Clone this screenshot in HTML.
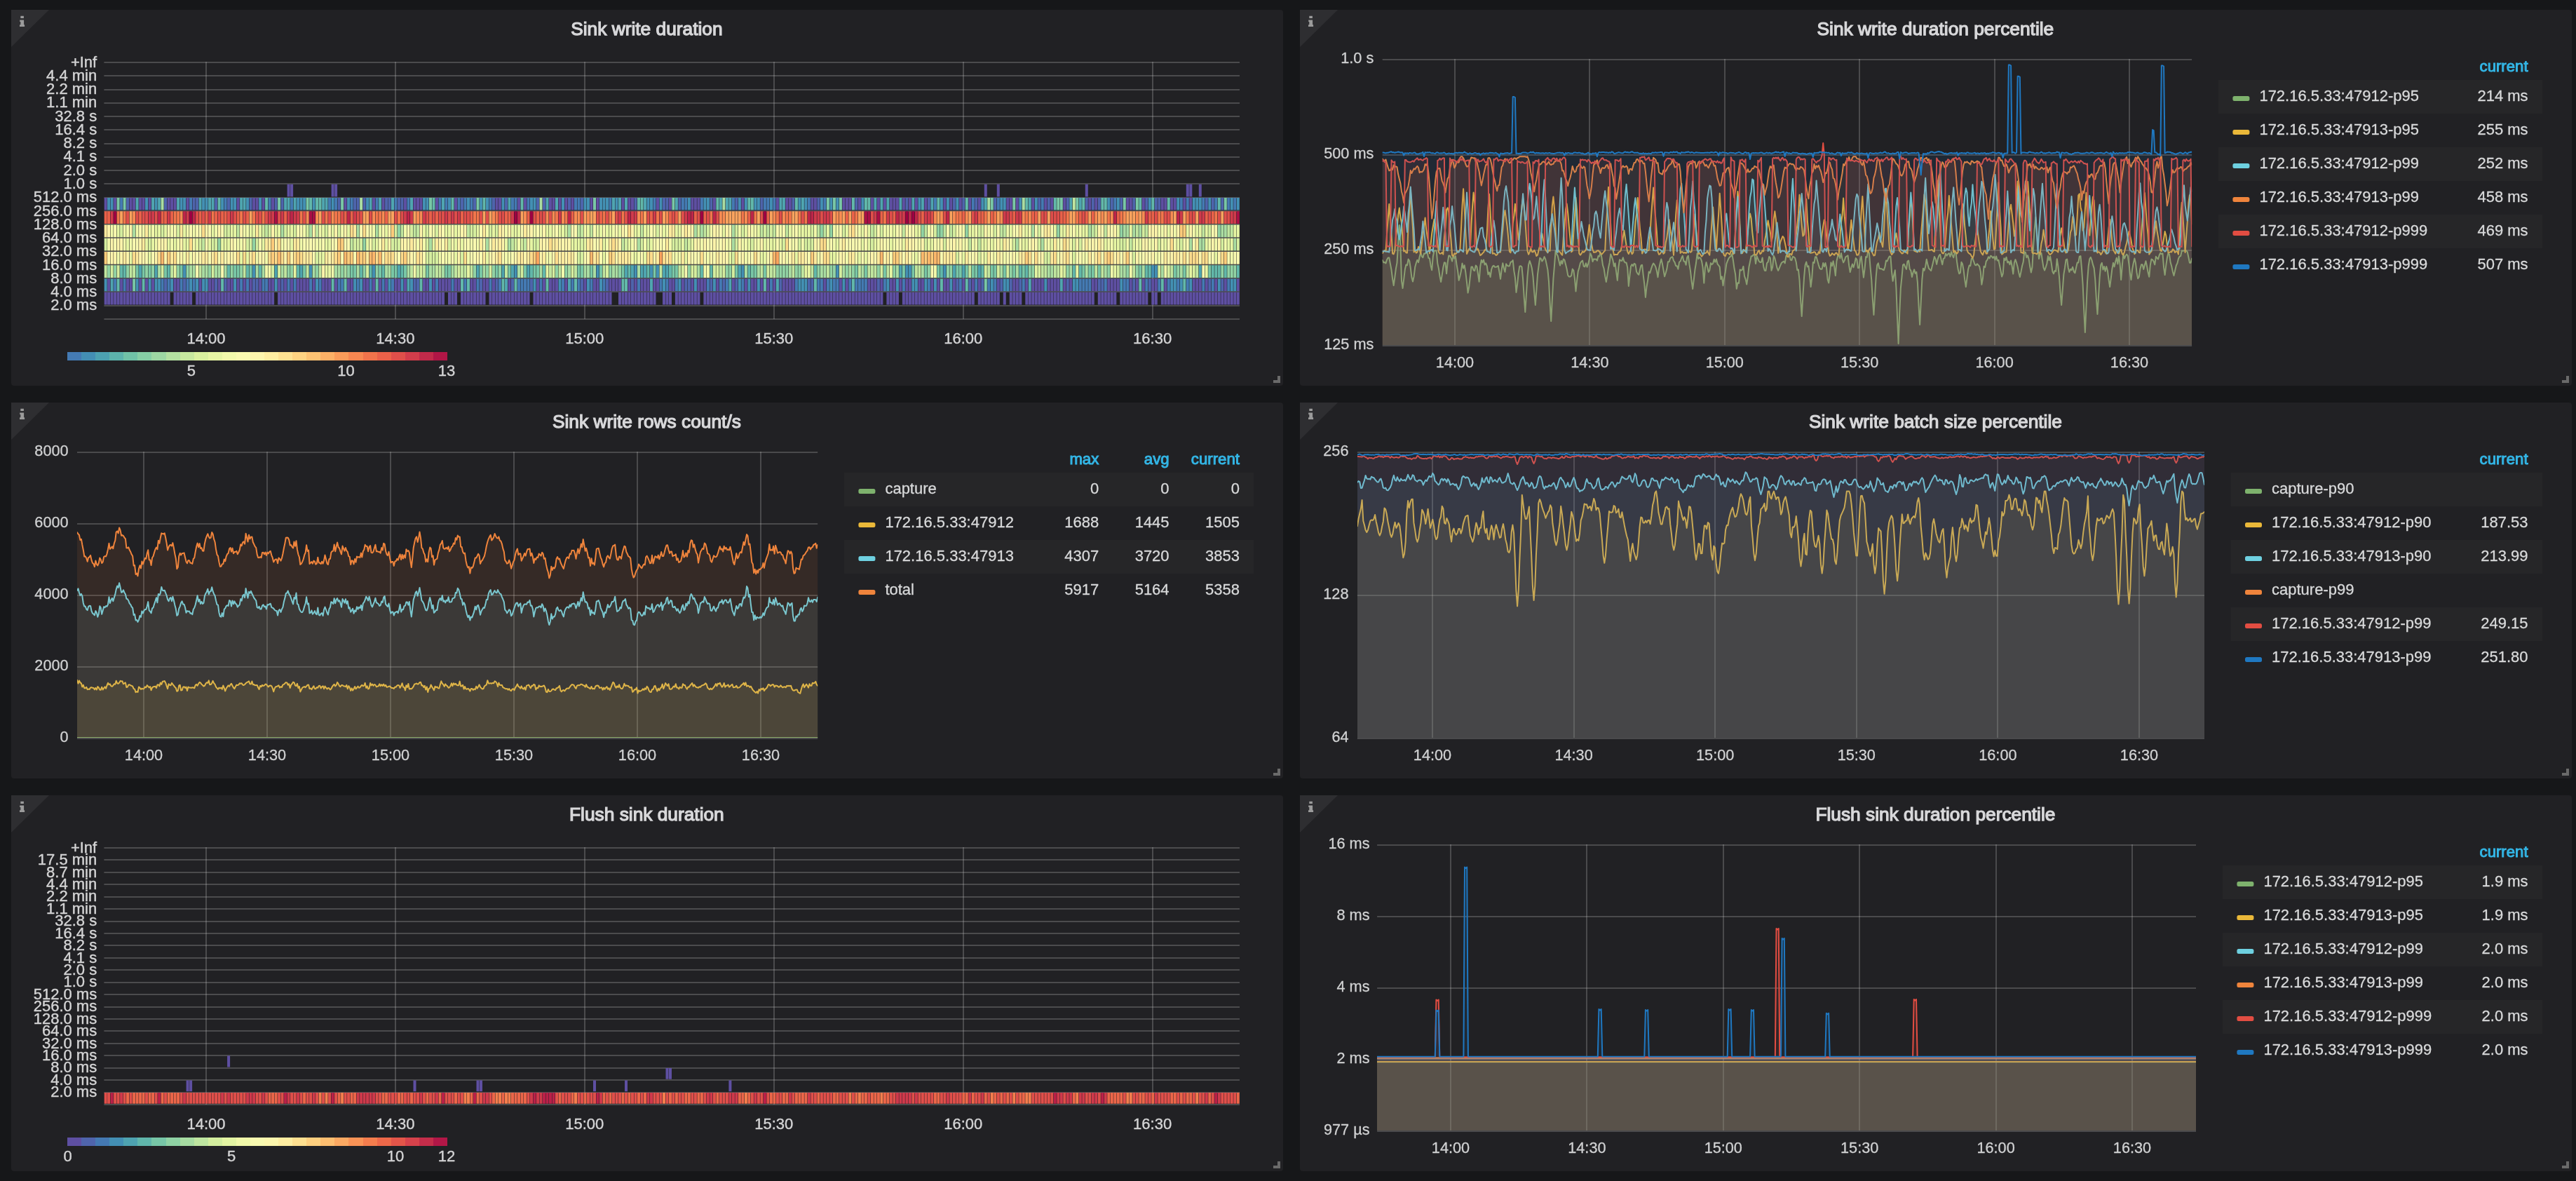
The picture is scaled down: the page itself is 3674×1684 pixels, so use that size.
<!DOCTYPE html>
<html lang="en"><head><meta charset="utf-8"><title>Sink dashboard</title>
<style>
html,body{margin:0;padding:0;background:#161719;}
body{width:3674px;height:1684px;overflow:hidden;position:relative}
svg{position:absolute;left:0;top:0;display:block;will-change:transform}
text{font-family:"Liberation Sans",Arial,Helvetica,sans-serif;font-size:21.7px;fill:#d0d1d2;stroke:#d0d1d2;stroke-width:.3px}
.tt{font-size:26.3px;fill:#d8d8da;stroke:#d8d8da;stroke-width:1.25px}
.hd{fill:#33b5e5;stroke:#33b5e5;stroke-width:1px;font-size:22.2px}
.lg{fill:#d8d9da;stroke:#d8d9da;font-size:22px}
.ha{fill:#d4d4d5;stroke:#d4d4d5;stroke-width:.4px;font-size:22px}
.s{stroke-width:2;stroke-linejoin:round;fill-opacity:.1}
</style></head><body>
<svg width="3674" height="1684" viewBox="0 0 3674 1684">
<g class="panel" transform="translate(16,14)">
<rect width="1814" height="536" rx="4" fill="#212124"/>
<path d="M0 0H54L0 53Z" fill="#2e2e31"/>
<path class="ic" d="M13.3 8.8h4.6v3.3h-4.6zM12.2 14.4h5.9v6.9h1v2.7h-7.1v-2.7h1.3v-4.3h-1.1z" fill="#9b9b9b"/>
<path d="M1810 522v10h-10v-4h6v-6z" fill="#6a6a6a"/>
<text class="tt" x="906.4" y="35.8" text-anchor="middle">Sink write duration</text>
</g>
<g class="panel" transform="translate(1854,14)">
<rect width="1814" height="536" rx="4" fill="#212124"/>
<path d="M0 0H54L0 53Z" fill="#2e2e31"/>
<path class="ic" d="M13.3 8.8h4.6v3.3h-4.6zM12.2 14.4h5.9v6.9h1v2.7h-7.1v-2.7h1.3v-4.3h-1.1z" fill="#9b9b9b"/>
<path d="M1810 522v10h-10v-4h6v-6z" fill="#6a6a6a"/>
<text class="tt" x="906.4" y="35.8" text-anchor="middle">Sink write duration percentile</text>
</g>
<g class="panel" transform="translate(16,574)">
<rect width="1814" height="536" rx="4" fill="#212124"/>
<path d="M0 0H54L0 53Z" fill="#2e2e31"/>
<path class="ic" d="M13.3 8.8h4.6v3.3h-4.6zM12.2 14.4h5.9v6.9h1v2.7h-7.1v-2.7h1.3v-4.3h-1.1z" fill="#9b9b9b"/>
<path d="M1810 522v10h-10v-4h6v-6z" fill="#6a6a6a"/>
<text class="tt" x="906.4" y="35.8" text-anchor="middle">Sink write rows count/s</text>
</g>
<g class="panel" transform="translate(1854,574)">
<rect width="1814" height="536" rx="4" fill="#212124"/>
<path d="M0 0H54L0 53Z" fill="#2e2e31"/>
<path class="ic" d="M13.3 8.8h4.6v3.3h-4.6zM12.2 14.4h5.9v6.9h1v2.7h-7.1v-2.7h1.3v-4.3h-1.1z" fill="#9b9b9b"/>
<path d="M1810 522v10h-10v-4h6v-6z" fill="#6a6a6a"/>
<text class="tt" x="906.4" y="35.8" text-anchor="middle">Sink write batch size percentile</text>
</g>
<g class="panel" transform="translate(16,1134)">
<rect width="1814" height="536" rx="4" fill="#212124"/>
<path d="M0 0H54L0 53Z" fill="#2e2e31"/>
<path class="ic" d="M13.3 8.8h4.6v3.3h-4.6zM12.2 14.4h5.9v6.9h1v2.7h-7.1v-2.7h1.3v-4.3h-1.1z" fill="#9b9b9b"/>
<path d="M1810 522v10h-10v-4h6v-6z" fill="#6a6a6a"/>
<text class="tt" x="906.4" y="35.8" text-anchor="middle">Flush sink duration</text>
</g>
<g class="panel" transform="translate(1854,1134)">
<rect width="1814" height="536" rx="4" fill="#212124"/>
<path d="M0 0H54L0 53Z" fill="#2e2e31"/>
<path class="ic" d="M13.3 8.8h4.6v3.3h-4.6zM12.2 14.4h5.9v6.9h1v2.7h-7.1v-2.7h1.3v-4.3h-1.1z" fill="#9b9b9b"/>
<path d="M1810 522v10h-10v-4h6v-6z" fill="#6a6a6a"/>
<text class="tt" x="906.4" y="35.8" text-anchor="middle">Flush sink duration percentile</text>
</g>
<g class="heat" id="heat1">
<path d="M148.4 88h1619.6v2h-1619.6zM148.4 107h1619.6v2h-1619.6zM148.4 127h1619.6v2h-1619.6zM148.4 146h1619.6v2h-1619.6zM148.4 165h1619.6v2h-1619.6zM148.4 184h1619.6v2h-1619.6zM148.4 204h1619.6v2h-1619.6zM148.4 223h1619.6v2h-1619.6zM148.4 242h1619.6v2h-1619.6zM148.4 261h1619.6v2h-1619.6zM148.4 281h1619.6v2h-1619.6zM148.4 300h1619.6v2h-1619.6zM148.4 319h1619.6v2h-1619.6zM148.4 338h1619.6v2h-1619.6zM148.4 358h1619.6v2h-1619.6zM148.4 377h1619.6v2h-1619.6zM148.4 396h1619.6v2h-1619.6zM148.4 415h1619.6v2h-1619.6zM148.4 435h1619.6v2h-1619.6zM148.4 454h1619.6v2h-1619.6z" fill="rgba(200,200,200,0.255)"/>
<path d="M293 88h2v367h-2zM563 88h2v367h-2zM833 88h2v367h-2zM1103 88h2v367h-2zM1373 88h2v367h-2zM1643 88h2v367h-2z" fill="rgba(200,200,200,0.255)"/>
<path fill="#5e4fa2" d="M148.7 281.9h4v17.7h-4zM162.1 281.9h4v17.7h-4zM184.6 281.9h4v17.7h-4zM189.1 281.9h4v17.7h-4zM198.1 281.9h4v17.7h-4zM202.6 281.9h4v17.7h-4zM211.6 281.9h4v17.7h-4zM238.6 281.9h4v17.7h-4zM243.1 281.9h4v17.7h-4zM247.6 281.9h4v17.7h-4zM265.6 281.9h4v17.7h-4zM337.6 281.9h4v17.7h-4zM360.1 281.9h4v17.7h-4zM364.6 281.9h4v17.7h-4zM373.6 281.9h4v17.7h-4zM387.1 281.9h4v17.7h-4zM490.6 281.9h4v17.7h-4zM531.1 281.9h4v17.7h-4zM544.6 281.9h4v17.7h-4zM576 281.9h4v17.7h-4zM589.5 281.9h4v17.7h-4zM594 281.9h4v17.7h-4zM598.5 281.9h4v17.7h-4zM621 281.9h4v17.7h-4zM648 281.9h4v17.7h-4zM706.5 281.9h4v17.7h-4zM711 281.9h4v17.7h-4zM738 281.9h4v17.7h-4zM747 281.9h4v17.7h-4zM783 281.9h4v17.7h-4zM787.5 281.9h4v17.7h-4zM796.5 281.9h4v17.7h-4zM805.5 281.9h4v17.7h-4zM814.5 281.9h4v17.7h-4zM841.5 281.9h4v17.7h-4zM850.5 281.9h4v17.7h-4zM886.5 281.9h4v17.7h-4zM895.5 281.9h4v17.7h-4zM900 281.9h4v17.7h-4zM936 281.9h4v17.7h-4zM954 281.9h4v17.7h-4zM985.4 281.9h4v17.7h-4zM989.9 281.9h4v17.7h-4zM994.4 281.9h4v17.7h-4zM1016.9 281.9h4v17.7h-4zM1057.4 281.9h4v17.7h-4zM1106.9 281.9h4v17.7h-4zM1120.4 281.9h4v17.7h-4zM1124.9 281.9h4v17.7h-4zM1156.4 281.9h4v17.7h-4zM1160.9 281.9h4v17.7h-4zM1201.4 281.9h4v17.7h-4zM1205.9 281.9h4v17.7h-4zM1210.4 281.9h4v17.7h-4zM1223.9 281.9h4v17.7h-4zM1241.9 281.9h4v17.7h-4zM1250.9 281.9h4v17.7h-4zM1259.9 281.9h4v17.7h-4zM1268.9 281.9h4v17.7h-4zM1273.4 281.9h4v17.7h-4zM1277.9 281.9h4v17.7h-4zM1286.9 281.9h4v17.7h-4zM1295.9 281.9h4v17.7h-4zM1304.9 281.9h4v17.7h-4zM1318.4 281.9h4v17.7h-4zM1345.4 281.9h4v17.7h-4zM1354.4 281.9h4v17.7h-4zM1367.8 281.9h4v17.7h-4zM1381.3 281.9h4v17.7h-4zM1394.8 281.9h4v17.7h-4zM1435.3 281.9h4v17.7h-4zM1439.8 281.9h4v17.7h-4zM1448.8 281.9h4v17.7h-4zM1471.3 281.9h4v17.7h-4zM1489.3 281.9h4v17.7h-4zM1498.3 281.9h4v17.7h-4zM1516.3 281.9h4v17.7h-4zM1552.3 281.9h4v17.7h-4zM1561.3 281.9h4v17.7h-4zM1606.3 281.9h4v17.7h-4zM1610.8 281.9h4v17.7h-4zM1628.8 281.9h4v17.7h-4zM1655.8 281.9h4v17.7h-4zM1660.3 281.9h4v17.7h-4zM1669.3 281.9h4v17.7h-4zM1673.8 281.9h4v17.7h-4zM1687.3 281.9h4v17.7h-4zM1696.3 281.9h4v17.7h-4zM153.1 397.5h4v17.7h-4zM171.1 397.5h4v17.7h-4zM180.1 397.5h4v17.7h-4zM184.6 397.5h4v17.7h-4zM198.1 397.5h4v17.7h-4zM207.1 397.5h4v17.7h-4zM216.1 397.5h4v17.7h-4zM247.6 397.5h4v17.7h-4zM252.1 397.5h4v17.7h-4zM283.6 397.5h4v17.7h-4zM297.1 397.5h4v17.7h-4zM301.6 397.5h4v17.7h-4zM310.6 397.5h4v17.7h-4zM324.1 397.5h4v17.7h-4zM328.6 397.5h4v17.7h-4zM337.6 397.5h4v17.7h-4zM346.6 397.5h4v17.7h-4zM355.6 397.5h4v17.7h-4zM369.1 397.5h4v17.7h-4zM382.6 397.5h4v17.7h-4zM387.1 397.5h4v17.7h-4zM396.1 397.5h4v17.7h-4zM405.1 397.5h4v17.7h-4zM414.1 397.5h4v17.7h-4zM423.1 397.5h4v17.7h-4zM427.6 397.5h4v17.7h-4zM432.1 397.5h4v17.7h-4zM436.6 397.5h4v17.7h-4zM445.6 397.5h4v17.7h-4zM459.1 397.5h4v17.7h-4zM463.6 397.5h4v17.7h-4zM468.1 397.5h4v17.7h-4zM477.1 397.5h4v17.7h-4zM495.1 397.5h4v17.7h-4zM499.6 397.5h4v17.7h-4zM517.6 397.5h4v17.7h-4zM522.1 397.5h4v17.7h-4zM531.1 397.5h4v17.7h-4zM540.1 397.5h4v17.7h-4zM549.1 397.5h4v17.7h-4zM562.5 397.5h4v17.7h-4zM567 397.5h4v17.7h-4zM576 397.5h4v17.7h-4zM603 397.5h4v17.7h-4zM607.5 397.5h4v17.7h-4zM616.5 397.5h4v17.7h-4zM625.5 397.5h4v17.7h-4zM630 397.5h4v17.7h-4zM634.5 397.5h4v17.7h-4zM639 397.5h4v17.7h-4zM648 397.5h4v17.7h-4zM652.5 397.5h4v17.7h-4zM670.5 397.5h4v17.7h-4zM675 397.5h4v17.7h-4zM688.5 397.5h4v17.7h-4zM693 397.5h4v17.7h-4zM702 397.5h4v17.7h-4zM724.5 397.5h4v17.7h-4zM765 397.5h4v17.7h-4zM774 397.5h4v17.7h-4zM783 397.5h4v17.7h-4zM787.5 397.5h4v17.7h-4zM792 397.5h4v17.7h-4zM805.5 397.5h4v17.7h-4zM832.5 397.5h4v17.7h-4zM846 397.5h4v17.7h-4zM850.5 397.5h4v17.7h-4zM868.5 397.5h4v17.7h-4zM873 397.5h4v17.7h-4zM877.5 397.5h4v17.7h-4zM882 397.5h4v17.7h-4zM895.5 397.5h4v17.7h-4zM904.5 397.5h4v17.7h-4zM913.5 397.5h4v17.7h-4zM918 397.5h4v17.7h-4zM922.5 397.5h4v17.7h-4zM931.5 397.5h4v17.7h-4zM936 397.5h4v17.7h-4zM954 397.5h4v17.7h-4zM958.4 397.5h4v17.7h-4zM971.9 397.5h4v17.7h-4zM985.4 397.5h4v17.7h-4zM994.4 397.5h4v17.7h-4zM998.9 397.5h4v17.7h-4zM1003.4 397.5h4v17.7h-4zM1021.4 397.5h4v17.7h-4zM1043.9 397.5h4v17.7h-4zM1061.9 397.5h4v17.7h-4zM1070.9 397.5h4v17.7h-4zM1075.4 397.5h4v17.7h-4zM1084.4 397.5h4v17.7h-4zM1093.4 397.5h4v17.7h-4zM1102.4 397.5h4v17.7h-4zM1115.9 397.5h4v17.7h-4zM1120.4 397.5h4v17.7h-4zM1124.9 397.5h4v17.7h-4zM1129.4 397.5h4v17.7h-4zM1174.4 397.5h4v17.7h-4zM1196.9 397.5h4v17.7h-4zM1205.9 397.5h4v17.7h-4zM1237.4 397.5h4v17.7h-4zM1241.9 397.5h4v17.7h-4zM1246.4 397.5h4v17.7h-4zM1255.4 397.5h4v17.7h-4zM1268.9 397.5h4v17.7h-4zM1273.4 397.5h4v17.7h-4zM1282.4 397.5h4v17.7h-4zM1291.4 397.5h4v17.7h-4zM1295.9 397.5h4v17.7h-4zM1309.4 397.5h4v17.7h-4zM1313.9 397.5h4v17.7h-4zM1327.4 397.5h4v17.7h-4zM1336.4 397.5h4v17.7h-4zM1345.4 397.5h4v17.7h-4zM1349.9 397.5h4v17.7h-4zM1358.9 397.5h4v17.7h-4zM1372.3 397.5h4v17.7h-4zM1385.8 397.5h4v17.7h-4zM1394.8 397.5h4v17.7h-4zM1421.8 397.5h4v17.7h-4zM1444.3 397.5h4v17.7h-4zM1448.8 397.5h4v17.7h-4zM1462.3 397.5h4v17.7h-4zM1471.3 397.5h4v17.7h-4zM1475.8 397.5h4v17.7h-4zM1480.3 397.5h4v17.7h-4zM1484.8 397.5h4v17.7h-4zM1493.8 397.5h4v17.7h-4zM1498.3 397.5h4v17.7h-4zM1502.8 397.5h4v17.7h-4zM1507.3 397.5h4v17.7h-4zM1516.3 397.5h4v17.7h-4zM1525.3 397.5h4v17.7h-4zM1556.8 397.5h4v17.7h-4zM1561.3 397.5h4v17.7h-4zM1579.3 397.5h4v17.7h-4zM1583.8 397.5h4v17.7h-4zM1588.3 397.5h4v17.7h-4zM1592.8 397.5h4v17.7h-4zM1610.8 397.5h4v17.7h-4zM1619.8 397.5h4v17.7h-4zM1628.8 397.5h4v17.7h-4zM1642.3 397.5h4v17.7h-4zM1646.8 397.5h4v17.7h-4zM1660.3 397.5h4v17.7h-4zM1700.8 397.5h4v17.7h-4zM1705.3 397.5h4v17.7h-4zM1709.8 397.5h4v17.7h-4zM1718.8 397.5h4v17.7h-4zM1732.3 397.5h4v17.7h-4zM1745.8 397.5h4v17.7h-4zM1763.8 397.5h4v17.7h-4zM148.7 416.8h4v17.7h-4zM153.1 416.8h4v17.7h-4zM157.6 416.8h4v17.7h-4zM162.1 416.8h4v17.7h-4zM166.6 416.8h4v17.7h-4zM171.1 416.8h4v17.7h-4zM175.6 416.8h4v17.7h-4zM180.1 416.8h4v17.7h-4zM184.6 416.8h4v17.7h-4zM189.1 416.8h4v17.7h-4zM193.6 416.8h4v17.7h-4zM198.1 416.8h4v17.7h-4zM202.6 416.8h4v17.7h-4zM207.1 416.8h4v17.7h-4zM211.6 416.8h4v17.7h-4zM216.1 416.8h4v17.7h-4zM220.6 416.8h4v17.7h-4zM225.1 416.8h4v17.7h-4zM229.6 416.8h4v17.7h-4zM234.1 416.8h4v17.7h-4zM238.6 416.8h4v17.7h-4zM247.6 416.8h4v17.7h-4zM252.1 416.8h4v17.7h-4zM256.6 416.8h4v17.7h-4zM261.1 416.8h4v17.7h-4zM265.6 416.8h4v17.7h-4zM270.1 416.8h4v17.7h-4zM279.1 416.8h4v17.7h-4zM283.6 416.8h4v17.7h-4zM288.1 416.8h4v17.7h-4zM292.6 416.8h4v17.7h-4zM297.1 416.8h4v17.7h-4zM301.6 416.8h4v17.7h-4zM306.1 416.8h4v17.7h-4zM310.6 416.8h4v17.7h-4zM315.1 416.8h4v17.7h-4zM319.6 416.8h4v17.7h-4zM324.1 416.8h4v17.7h-4zM328.6 416.8h4v17.7h-4zM333.1 416.8h4v17.7h-4zM337.6 416.8h4v17.7h-4zM342.1 416.8h4v17.7h-4zM346.6 416.8h4v17.7h-4zM351.1 416.8h4v17.7h-4zM355.6 416.8h4v17.7h-4zM360.1 416.8h4v17.7h-4zM364.6 416.8h4v17.7h-4zM369.1 416.8h4v17.7h-4zM373.6 416.8h4v17.7h-4zM378.1 416.8h4v17.7h-4zM382.6 416.8h4v17.7h-4zM387.1 416.8h4v17.7h-4zM396.1 416.8h4v17.7h-4zM400.6 416.8h4v17.7h-4zM405.1 416.8h4v17.7h-4zM409.6 416.8h4v17.7h-4zM414.1 416.8h4v17.7h-4zM418.6 416.8h4v17.7h-4zM423.1 416.8h4v17.7h-4zM427.6 416.8h4v17.7h-4zM432.1 416.8h4v17.7h-4zM436.6 416.8h4v17.7h-4zM441.1 416.8h4v17.7h-4zM445.6 416.8h4v17.7h-4zM450.1 416.8h4v17.7h-4zM454.6 416.8h4v17.7h-4zM459.1 416.8h4v17.7h-4zM463.6 416.8h4v17.7h-4zM468.1 416.8h4v17.7h-4zM472.6 416.8h4v17.7h-4zM477.1 416.8h4v17.7h-4zM481.6 416.8h4v17.7h-4zM486.1 416.8h4v17.7h-4zM490.6 416.8h4v17.7h-4zM495.1 416.8h4v17.7h-4zM499.6 416.8h4v17.7h-4zM504.1 416.8h4v17.7h-4zM508.6 416.8h4v17.7h-4zM513.1 416.8h4v17.7h-4zM517.6 416.8h4v17.7h-4zM522.1 416.8h4v17.7h-4zM526.6 416.8h4v17.7h-4zM531.1 416.8h4v17.7h-4zM535.6 416.8h4v17.7h-4zM540.1 416.8h4v17.7h-4zM544.6 416.8h4v17.7h-4zM549.1 416.8h4v17.7h-4zM553.5 416.8h4v17.7h-4zM558 416.8h4v17.7h-4zM562.5 416.8h4v17.7h-4zM567 416.8h4v17.7h-4zM571.5 416.8h4v17.7h-4zM576 416.8h4v17.7h-4zM580.5 416.8h4v17.7h-4zM585 416.8h4v17.7h-4zM589.5 416.8h4v17.7h-4zM594 416.8h4v17.7h-4zM598.5 416.8h4v17.7h-4zM603 416.8h4v17.7h-4zM607.5 416.8h4v17.7h-4zM612 416.8h4v17.7h-4zM616.5 416.8h4v17.7h-4zM621 416.8h4v17.7h-4zM625.5 416.8h4v17.7h-4zM630 416.8h4v17.7h-4zM639 416.8h4v17.7h-4zM643.5 416.8h4v17.7h-4zM648 416.8h4v17.7h-4zM657 416.8h4v17.7h-4zM661.5 416.8h4v17.7h-4zM666 416.8h4v17.7h-4zM670.5 416.8h4v17.7h-4zM675 416.8h4v17.7h-4zM679.5 416.8h4v17.7h-4zM684 416.8h4v17.7h-4zM688.5 416.8h4v17.7h-4zM697.5 416.8h4v17.7h-4zM702 416.8h4v17.7h-4zM706.5 416.8h4v17.7h-4zM711 416.8h4v17.7h-4zM715.5 416.8h4v17.7h-4zM720 416.8h4v17.7h-4zM724.5 416.8h4v17.7h-4zM729 416.8h4v17.7h-4zM733.5 416.8h4v17.7h-4zM738 416.8h4v17.7h-4zM742.5 416.8h4v17.7h-4zM747 416.8h4v17.7h-4zM751.5 416.8h4v17.7h-4zM760.5 416.8h4v17.7h-4zM765 416.8h4v17.7h-4zM769.5 416.8h4v17.7h-4zM774 416.8h4v17.7h-4zM778.5 416.8h4v17.7h-4zM783 416.8h4v17.7h-4zM787.5 416.8h4v17.7h-4zM792 416.8h4v17.7h-4zM796.5 416.8h4v17.7h-4zM801 416.8h4v17.7h-4zM805.5 416.8h4v17.7h-4zM810 416.8h4v17.7h-4zM814.5 416.8h4v17.7h-4zM819 416.8h4v17.7h-4zM823.5 416.8h4v17.7h-4zM828 416.8h4v17.7h-4zM832.5 416.8h4v17.7h-4zM837 416.8h4v17.7h-4zM841.5 416.8h4v17.7h-4zM846 416.8h4v17.7h-4zM850.5 416.8h4v17.7h-4zM855 416.8h4v17.7h-4zM859.5 416.8h4v17.7h-4zM864 416.8h4v17.7h-4zM868.5 416.8h4v17.7h-4zM882 416.8h4v17.7h-4zM886.5 416.8h4v17.7h-4zM891 416.8h4v17.7h-4zM895.5 416.8h4v17.7h-4zM900 416.8h4v17.7h-4zM904.5 416.8h4v17.7h-4zM909 416.8h4v17.7h-4zM913.5 416.8h4v17.7h-4zM918 416.8h4v17.7h-4zM922.5 416.8h4v17.7h-4zM927 416.8h4v17.7h-4zM931.5 416.8h4v17.7h-4zM945 416.8h4v17.7h-4zM949.5 416.8h4v17.7h-4zM954 416.8h4v17.7h-4zM962.9 416.8h4v17.7h-4zM967.4 416.8h4v17.7h-4zM971.9 416.8h4v17.7h-4zM976.4 416.8h4v17.7h-4zM980.9 416.8h4v17.7h-4zM985.4 416.8h4v17.7h-4zM989.9 416.8h4v17.7h-4zM994.4 416.8h4v17.7h-4zM1003.4 416.8h4v17.7h-4zM1007.9 416.8h4v17.7h-4zM1012.4 416.8h4v17.7h-4zM1016.9 416.8h4v17.7h-4zM1021.4 416.8h4v17.7h-4zM1025.9 416.8h4v17.7h-4zM1030.4 416.8h4v17.7h-4zM1034.9 416.8h4v17.7h-4zM1039.4 416.8h4v17.7h-4zM1043.9 416.8h4v17.7h-4zM1048.4 416.8h4v17.7h-4zM1052.9 416.8h4v17.7h-4zM1057.4 416.8h4v17.7h-4zM1061.9 416.8h4v17.7h-4zM1066.4 416.8h4v17.7h-4zM1070.9 416.8h4v17.7h-4zM1075.4 416.8h4v17.7h-4zM1079.9 416.8h4v17.7h-4zM1084.4 416.8h4v17.7h-4zM1088.9 416.8h4v17.7h-4zM1093.4 416.8h4v17.7h-4zM1097.9 416.8h4v17.7h-4zM1102.4 416.8h4v17.7h-4zM1106.9 416.8h4v17.7h-4zM1111.4 416.8h4v17.7h-4zM1115.9 416.8h4v17.7h-4zM1120.4 416.8h4v17.7h-4zM1124.9 416.8h4v17.7h-4zM1129.4 416.8h4v17.7h-4zM1133.9 416.8h4v17.7h-4zM1138.4 416.8h4v17.7h-4zM1142.9 416.8h4v17.7h-4zM1147.4 416.8h4v17.7h-4zM1151.9 416.8h4v17.7h-4zM1156.4 416.8h4v17.7h-4zM1160.9 416.8h4v17.7h-4zM1165.4 416.8h4v17.7h-4zM1169.9 416.8h4v17.7h-4zM1174.4 416.8h4v17.7h-4zM1178.9 416.8h4v17.7h-4zM1183.4 416.8h4v17.7h-4zM1187.9 416.8h4v17.7h-4zM1192.4 416.8h4v17.7h-4zM1196.9 416.8h4v17.7h-4zM1201.4 416.8h4v17.7h-4zM1205.9 416.8h4v17.7h-4zM1210.4 416.8h4v17.7h-4zM1214.9 416.8h4v17.7h-4zM1219.4 416.8h4v17.7h-4zM1223.9 416.8h4v17.7h-4zM1228.4 416.8h4v17.7h-4zM1232.9 416.8h4v17.7h-4zM1237.4 416.8h4v17.7h-4zM1241.9 416.8h4v17.7h-4zM1246.4 416.8h4v17.7h-4zM1250.9 416.8h4v17.7h-4zM1255.4 416.8h4v17.7h-4zM1264.4 416.8h4v17.7h-4zM1268.9 416.8h4v17.7h-4zM1273.4 416.8h4v17.7h-4zM1277.9 416.8h4v17.7h-4zM1286.9 416.8h4v17.7h-4zM1291.4 416.8h4v17.7h-4zM1295.9 416.8h4v17.7h-4zM1300.4 416.8h4v17.7h-4zM1304.9 416.8h4v17.7h-4zM1309.4 416.8h4v17.7h-4zM1313.9 416.8h4v17.7h-4zM1318.4 416.8h4v17.7h-4zM1322.9 416.8h4v17.7h-4zM1327.4 416.8h4v17.7h-4zM1331.9 416.8h4v17.7h-4zM1336.4 416.8h4v17.7h-4zM1340.9 416.8h4v17.7h-4zM1345.4 416.8h4v17.7h-4zM1349.9 416.8h4v17.7h-4zM1354.4 416.8h4v17.7h-4zM1358.9 416.8h4v17.7h-4zM1363.4 416.8h4v17.7h-4zM1367.8 416.8h4v17.7h-4zM1372.3 416.8h4v17.7h-4zM1376.8 416.8h4v17.7h-4zM1381.3 416.8h4v17.7h-4zM1385.8 416.8h4v17.7h-4zM1394.8 416.8h4v17.7h-4zM1399.3 416.8h4v17.7h-4zM1403.8 416.8h4v17.7h-4zM1408.3 416.8h4v17.7h-4zM1412.8 416.8h4v17.7h-4zM1417.3 416.8h4v17.7h-4zM1421.8 416.8h4v17.7h-4zM1430.8 416.8h4v17.7h-4zM1439.8 416.8h4v17.7h-4zM1444.3 416.8h4v17.7h-4zM1448.8 416.8h4v17.7h-4zM1453.3 416.8h4v17.7h-4zM1462.3 416.8h4v17.7h-4zM1466.8 416.8h4v17.7h-4zM1471.3 416.8h4v17.7h-4zM1475.8 416.8h4v17.7h-4zM1480.3 416.8h4v17.7h-4zM1484.8 416.8h4v17.7h-4zM1489.3 416.8h4v17.7h-4zM1493.8 416.8h4v17.7h-4zM1498.3 416.8h4v17.7h-4zM1502.8 416.8h4v17.7h-4zM1507.3 416.8h4v17.7h-4zM1511.8 416.8h4v17.7h-4zM1516.3 416.8h4v17.7h-4zM1520.8 416.8h4v17.7h-4zM1525.3 416.8h4v17.7h-4zM1529.8 416.8h4v17.7h-4zM1534.3 416.8h4v17.7h-4zM1538.8 416.8h4v17.7h-4zM1543.3 416.8h4v17.7h-4zM1547.8 416.8h4v17.7h-4zM1552.3 416.8h4v17.7h-4zM1556.8 416.8h4v17.7h-4zM1565.8 416.8h4v17.7h-4zM1570.3 416.8h4v17.7h-4zM1574.8 416.8h4v17.7h-4zM1579.3 416.8h4v17.7h-4zM1583.8 416.8h4v17.7h-4zM1588.3 416.8h4v17.7h-4zM1597.3 416.8h4v17.7h-4zM1601.8 416.8h4v17.7h-4zM1606.3 416.8h4v17.7h-4zM1610.8 416.8h4v17.7h-4zM1615.3 416.8h4v17.7h-4zM1619.8 416.8h4v17.7h-4zM1624.3 416.8h4v17.7h-4zM1628.8 416.8h4v17.7h-4zM1633.3 416.8h4v17.7h-4zM1642.3 416.8h4v17.7h-4zM1646.8 416.8h4v17.7h-4zM1655.8 416.8h4v17.7h-4zM1660.3 416.8h4v17.7h-4zM1664.8 416.8h4v17.7h-4zM1669.3 416.8h4v17.7h-4zM1673.8 416.8h4v17.7h-4zM1678.3 416.8h4v17.7h-4zM1682.8 416.8h4v17.7h-4zM1687.3 416.8h4v17.7h-4zM1691.8 416.8h4v17.7h-4zM1696.3 416.8h4v17.7h-4zM1700.8 416.8h4v17.7h-4zM1705.3 416.8h4v17.7h-4zM1709.8 416.8h4v17.7h-4zM1714.3 416.8h4v17.7h-4zM1718.8 416.8h4v17.7h-4zM1723.3 416.8h4v17.7h-4zM1727.8 416.8h4v17.7h-4zM1732.3 416.8h4v17.7h-4zM1736.8 416.8h4v17.7h-4zM1741.3 416.8h4v17.7h-4zM1745.8 416.8h4v17.7h-4zM1750.3 416.8h4v17.7h-4zM1754.8 416.8h4v17.7h-4zM1759.3 416.8h4v17.7h-4zM1763.8 416.8h4v17.7h-4zM409.6 262.7h4v17.7h-4zM414.1 262.7h4v17.7h-4zM472.6 262.7h4v17.7h-4zM477.1 262.7h4v17.7h-4zM1403.8 262.7h4v17.7h-4zM1421.8 262.7h4v17.7h-4zM1547.8 262.7h4v17.7h-4zM1691.8 262.7h4v17.7h-4zM1696.3 262.7h4v17.7h-4zM1709.8 262.7h4v17.7h-4z"/>
<path fill="#4390b4" d="M153.1 281.9h4v17.7h-4zM157.6 281.9h4v17.7h-4zM207.1 281.9h4v17.7h-4zM220.6 281.9h4v17.7h-4zM256.6 281.9h4v17.7h-4zM261.1 281.9h4v17.7h-4zM288.1 281.9h4v17.7h-4zM292.6 281.9h4v17.7h-4zM315.1 281.9h4v17.7h-4zM328.6 281.9h4v17.7h-4zM333.1 281.9h4v17.7h-4zM351.1 281.9h4v17.7h-4zM369.1 281.9h4v17.7h-4zM423.1 281.9h4v17.7h-4zM427.6 281.9h4v17.7h-4zM432.1 281.9h4v17.7h-4zM445.6 281.9h4v17.7h-4zM472.6 281.9h4v17.7h-4zM495.1 281.9h4v17.7h-4zM522.1 281.9h4v17.7h-4zM603 281.9h4v17.7h-4zM607.5 281.9h4v17.7h-4zM639 281.9h4v17.7h-4zM666 281.9h4v17.7h-4zM684 281.9h4v17.7h-4zM693 281.9h4v17.7h-4zM715.5 281.9h4v17.7h-4zM756 281.9h4v17.7h-4zM760.5 281.9h4v17.7h-4zM801 281.9h4v17.7h-4zM832.5 281.9h4v17.7h-4zM837 281.9h4v17.7h-4zM855 281.9h4v17.7h-4zM859.5 281.9h4v17.7h-4zM864 281.9h4v17.7h-4zM877.5 281.9h4v17.7h-4zM922.5 281.9h4v17.7h-4zM927 281.9h4v17.7h-4zM940.5 281.9h4v17.7h-4zM980.9 281.9h4v17.7h-4zM1003.4 281.9h4v17.7h-4zM1007.9 281.9h4v17.7h-4zM1052.9 281.9h4v17.7h-4zM1061.9 281.9h4v17.7h-4zM1075.4 281.9h4v17.7h-4zM1079.9 281.9h4v17.7h-4zM1097.9 281.9h4v17.7h-4zM1138.4 281.9h4v17.7h-4zM1147.4 281.9h4v17.7h-4zM1169.9 281.9h4v17.7h-4zM1183.4 281.9h4v17.7h-4zM1192.4 281.9h4v17.7h-4zM1228.4 281.9h4v17.7h-4zM1309.4 281.9h4v17.7h-4zM1340.9 281.9h4v17.7h-4zM1349.9 281.9h4v17.7h-4zM1363.4 281.9h4v17.7h-4zM1399.3 281.9h4v17.7h-4zM1426.3 281.9h4v17.7h-4zM1430.8 281.9h4v17.7h-4zM1453.3 281.9h4v17.7h-4zM1475.8 281.9h4v17.7h-4zM1579.3 281.9h4v17.7h-4zM1592.8 281.9h4v17.7h-4zM1637.8 281.9h4v17.7h-4zM1678.3 281.9h4v17.7h-4zM1700.8 281.9h4v17.7h-4zM1705.3 281.9h4v17.7h-4zM1709.8 281.9h4v17.7h-4zM1723.3 281.9h4v17.7h-4zM1754.8 281.9h4v17.7h-4zM1763.8 281.9h4v17.7h-4zM261.1 378.2h4v17.7h-4zM360.1 378.2h4v17.7h-4zM441.1 378.2h4v17.7h-4zM531.1 378.2h4v17.7h-4zM733.5 378.2h4v17.7h-4zM850.5 378.2h4v17.7h-4zM904.5 378.2h4v17.7h-4zM927 378.2h4v17.7h-4zM936 378.2h4v17.7h-4zM1057.4 378.2h4v17.7h-4zM1192.4 378.2h4v17.7h-4zM1291.4 378.2h4v17.7h-4zM1295.9 378.2h4v17.7h-4zM1345.4 378.2h4v17.7h-4zM1642.3 378.2h4v17.7h-4zM1646.8 378.2h4v17.7h-4zM148.7 397.5h4v17.7h-4zM193.6 397.5h4v17.7h-4zM211.6 397.5h4v17.7h-4zM220.6 397.5h4v17.7h-4zM225.1 397.5h4v17.7h-4zM243.1 397.5h4v17.7h-4zM270.1 397.5h4v17.7h-4zM279.1 397.5h4v17.7h-4zM288.1 397.5h4v17.7h-4zM292.6 397.5h4v17.7h-4zM333.1 397.5h4v17.7h-4zM391.6 397.5h4v17.7h-4zM450.1 397.5h4v17.7h-4zM504.1 397.5h4v17.7h-4zM513.1 397.5h4v17.7h-4zM553.5 397.5h4v17.7h-4zM571.5 397.5h4v17.7h-4zM585 397.5h4v17.7h-4zM612 397.5h4v17.7h-4zM760.5 397.5h4v17.7h-4zM796.5 397.5h4v17.7h-4zM837 397.5h4v17.7h-4zM855 397.5h4v17.7h-4zM945 397.5h4v17.7h-4zM967.4 397.5h4v17.7h-4zM989.9 397.5h4v17.7h-4zM1016.9 397.5h4v17.7h-4zM1052.9 397.5h4v17.7h-4zM1066.4 397.5h4v17.7h-4zM1079.9 397.5h4v17.7h-4zM1138.4 397.5h4v17.7h-4zM1142.9 397.5h4v17.7h-4zM1147.4 397.5h4v17.7h-4zM1183.4 397.5h4v17.7h-4zM1201.4 397.5h4v17.7h-4zM1264.4 397.5h4v17.7h-4zM1277.9 397.5h4v17.7h-4zM1300.4 397.5h4v17.7h-4zM1304.9 397.5h4v17.7h-4zM1318.4 397.5h4v17.7h-4zM1331.9 397.5h4v17.7h-4zM1354.4 397.5h4v17.7h-4zM1412.8 397.5h4v17.7h-4zM1430.8 397.5h4v17.7h-4zM1435.3 397.5h4v17.7h-4zM1489.3 397.5h4v17.7h-4zM1529.8 397.5h4v17.7h-4zM1534.3 397.5h4v17.7h-4zM1597.3 397.5h4v17.7h-4zM1669.3 397.5h4v17.7h-4zM1673.8 397.5h4v17.7h-4zM1682.8 397.5h4v17.7h-4zM1696.3 397.5h4v17.7h-4zM1736.8 397.5h4v17.7h-4zM1754.8 397.5h4v17.7h-4zM1759.3 397.5h4v17.7h-4z"/>
<path fill="#79c7a6" d="M166.6 281.9h4v17.7h-4zM175.6 281.9h4v17.7h-4zM396.1 281.9h4v17.7h-4zM436.6 281.9h4v17.7h-4zM486.1 281.9h4v17.7h-4zM612 281.9h4v17.7h-4zM679.5 281.9h4v17.7h-4zM846 281.9h4v17.7h-4zM958.4 281.9h4v17.7h-4zM1178.9 281.9h4v17.7h-4zM1187.9 281.9h4v17.7h-4zM1196.9 281.9h4v17.7h-4zM1412.8 281.9h4v17.7h-4zM1444.3 281.9h4v17.7h-4zM1507.3 281.9h4v17.7h-4zM1511.8 281.9h4v17.7h-4zM1534.3 281.9h4v17.7h-4zM1601.8 281.9h4v17.7h-4zM1619.8 281.9h4v17.7h-4zM1745.8 281.9h4v17.7h-4zM193.6 378.2h4v17.7h-4zM202.6 378.2h4v17.7h-4zM211.6 378.2h4v17.7h-4zM234.1 378.2h4v17.7h-4zM256.6 378.2h4v17.7h-4zM333.1 378.2h4v17.7h-4zM337.6 378.2h4v17.7h-4zM355.6 378.2h4v17.7h-4zM432.1 378.2h4v17.7h-4zM499.6 378.2h4v17.7h-4zM504.1 378.2h4v17.7h-4zM540.1 378.2h4v17.7h-4zM558 378.2h4v17.7h-4zM562.5 378.2h4v17.7h-4zM576 378.2h4v17.7h-4zM607.5 378.2h4v17.7h-4zM634.5 378.2h4v17.7h-4zM639 378.2h4v17.7h-4zM684 378.2h4v17.7h-4zM706.5 378.2h4v17.7h-4zM724.5 378.2h4v17.7h-4zM747 378.2h4v17.7h-4zM760.5 378.2h4v17.7h-4zM765 378.2h4v17.7h-4zM823.5 378.2h4v17.7h-4zM828 378.2h4v17.7h-4zM841.5 378.2h4v17.7h-4zM855 378.2h4v17.7h-4zM886.5 378.2h4v17.7h-4zM931.5 378.2h4v17.7h-4zM958.4 378.2h4v17.7h-4zM962.9 378.2h4v17.7h-4zM1048.4 378.2h4v17.7h-4zM1070.9 378.2h4v17.7h-4zM1075.4 378.2h4v17.7h-4zM1088.9 378.2h4v17.7h-4zM1219.4 378.2h4v17.7h-4zM1232.9 378.2h4v17.7h-4zM1259.9 378.2h4v17.7h-4zM1286.9 378.2h4v17.7h-4zM1300.4 378.2h4v17.7h-4zM1318.4 378.2h4v17.7h-4zM1336.4 378.2h4v17.7h-4zM1363.4 378.2h4v17.7h-4zM1367.8 378.2h4v17.7h-4zM1376.8 378.2h4v17.7h-4zM1385.8 378.2h4v17.7h-4zM1390.3 378.2h4v17.7h-4zM1412.8 378.2h4v17.7h-4zM1417.3 378.2h4v17.7h-4zM1430.8 378.2h4v17.7h-4zM1444.3 378.2h4v17.7h-4zM1457.8 378.2h4v17.7h-4zM1543.3 378.2h4v17.7h-4zM1552.3 378.2h4v17.7h-4zM1556.8 378.2h4v17.7h-4zM1565.8 378.2h4v17.7h-4zM1624.3 378.2h4v17.7h-4zM1673.8 378.2h4v17.7h-4zM1687.3 378.2h4v17.7h-4zM1723.3 378.2h4v17.7h-4zM189.1 397.5h4v17.7h-4zM1403.8 397.5h4v17.7h-4z"/>
<path fill="#447ab3" d="M171.1 281.9h4v17.7h-4zM270.1 281.9h4v17.7h-4zM319.6 281.9h4v17.7h-4zM382.6 281.9h4v17.7h-4zM414.1 281.9h4v17.7h-4zM468.1 281.9h4v17.7h-4zM477.1 281.9h4v17.7h-4zM499.6 281.9h4v17.7h-4zM535.6 281.9h4v17.7h-4zM562.5 281.9h4v17.7h-4zM580.5 281.9h4v17.7h-4zM625.5 281.9h4v17.7h-4zM634.5 281.9h4v17.7h-4zM652.5 281.9h4v17.7h-4zM661.5 281.9h4v17.7h-4zM670.5 281.9h4v17.7h-4zM697.5 281.9h4v17.7h-4zM729 281.9h4v17.7h-4zM733.5 281.9h4v17.7h-4zM751.5 281.9h4v17.7h-4zM819 281.9h4v17.7h-4zM823.5 281.9h4v17.7h-4zM868.5 281.9h4v17.7h-4zM931.5 281.9h4v17.7h-4zM971.9 281.9h4v17.7h-4zM976.4 281.9h4v17.7h-4zM998.9 281.9h4v17.7h-4zM1043.9 281.9h4v17.7h-4zM1088.9 281.9h4v17.7h-4zM1093.4 281.9h4v17.7h-4zM1102.4 281.9h4v17.7h-4zM1151.9 281.9h4v17.7h-4zM1174.4 281.9h4v17.7h-4zM1331.9 281.9h4v17.7h-4zM1385.8 281.9h4v17.7h-4zM1421.8 281.9h4v17.7h-4zM1484.8 281.9h4v17.7h-4zM1588.3 281.9h4v17.7h-4zM1682.8 281.9h4v17.7h-4zM1691.8 281.9h4v17.7h-4zM1714.3 281.9h4v17.7h-4zM1732.3 281.9h4v17.7h-4zM1750.3 281.9h4v17.7h-4zM1759.3 281.9h4v17.7h-4zM162.1 397.5h4v17.7h-4zM175.6 397.5h4v17.7h-4zM229.6 397.5h4v17.7h-4zM238.6 397.5h4v17.7h-4zM256.6 397.5h4v17.7h-4zM265.6 397.5h4v17.7h-4zM274.6 397.5h4v17.7h-4zM342.1 397.5h4v17.7h-4zM351.1 397.5h4v17.7h-4zM373.6 397.5h4v17.7h-4zM378.1 397.5h4v17.7h-4zM409.6 397.5h4v17.7h-4zM418.6 397.5h4v17.7h-4zM441.1 397.5h4v17.7h-4zM454.6 397.5h4v17.7h-4zM481.6 397.5h4v17.7h-4zM486.1 397.5h4v17.7h-4zM508.6 397.5h4v17.7h-4zM526.6 397.5h4v17.7h-4zM544.6 397.5h4v17.7h-4zM558 397.5h4v17.7h-4zM621 397.5h4v17.7h-4zM643.5 397.5h4v17.7h-4zM661.5 397.5h4v17.7h-4zM679.5 397.5h4v17.7h-4zM697.5 397.5h4v17.7h-4zM711 397.5h4v17.7h-4zM738 397.5h4v17.7h-4zM742.5 397.5h4v17.7h-4zM747 397.5h4v17.7h-4zM751.5 397.5h4v17.7h-4zM769.5 397.5h4v17.7h-4zM801 397.5h4v17.7h-4zM814.5 397.5h4v17.7h-4zM823.5 397.5h4v17.7h-4zM841.5 397.5h4v17.7h-4zM859.5 397.5h4v17.7h-4zM909 397.5h4v17.7h-4zM940.5 397.5h4v17.7h-4zM949.5 397.5h4v17.7h-4zM962.9 397.5h4v17.7h-4zM1007.9 397.5h4v17.7h-4zM1025.9 397.5h4v17.7h-4zM1034.9 397.5h4v17.7h-4zM1057.4 397.5h4v17.7h-4zM1097.9 397.5h4v17.7h-4zM1133.9 397.5h4v17.7h-4zM1165.4 397.5h4v17.7h-4zM1169.9 397.5h4v17.7h-4zM1178.9 397.5h4v17.7h-4zM1187.9 397.5h4v17.7h-4zM1192.4 397.5h4v17.7h-4zM1210.4 397.5h4v17.7h-4zM1219.4 397.5h4v17.7h-4zM1223.9 397.5h4v17.7h-4zM1228.4 397.5h4v17.7h-4zM1232.9 397.5h4v17.7h-4zM1259.9 397.5h4v17.7h-4zM1286.9 397.5h4v17.7h-4zM1322.9 397.5h4v17.7h-4zM1367.8 397.5h4v17.7h-4zM1390.3 397.5h4v17.7h-4zM1408.3 397.5h4v17.7h-4zM1417.3 397.5h4v17.7h-4zM1457.8 397.5h4v17.7h-4zM1538.8 397.5h4v17.7h-4zM1543.3 397.5h4v17.7h-4zM1547.8 397.5h4v17.7h-4zM1552.3 397.5h4v17.7h-4zM1574.8 397.5h4v17.7h-4zM1601.8 397.5h4v17.7h-4zM1606.3 397.5h4v17.7h-4zM1633.3 397.5h4v17.7h-4zM1651.3 397.5h4v17.7h-4zM1664.8 397.5h4v17.7h-4zM1678.3 397.5h4v17.7h-4zM1691.8 397.5h4v17.7h-4zM1714.3 397.5h4v17.7h-4zM1727.8 397.5h4v17.7h-4zM1750.3 397.5h4v17.7h-4z"/>
<path fill="#4e64ac" d="M180.1 281.9h4v17.7h-4zM234.1 281.9h4v17.7h-4zM274.6 281.9h4v17.7h-4zM279.1 281.9h4v17.7h-4zM306.1 281.9h4v17.7h-4zM324.1 281.9h4v17.7h-4zM355.6 281.9h4v17.7h-4zM391.6 281.9h4v17.7h-4zM400.6 281.9h4v17.7h-4zM481.6 281.9h4v17.7h-4zM504.1 281.9h4v17.7h-4zM508.6 281.9h4v17.7h-4zM517.6 281.9h4v17.7h-4zM549.1 281.9h4v17.7h-4zM553.5 281.9h4v17.7h-4zM567 281.9h4v17.7h-4zM571.5 281.9h4v17.7h-4zM657 281.9h4v17.7h-4zM675 281.9h4v17.7h-4zM702 281.9h4v17.7h-4zM720 281.9h4v17.7h-4zM765 281.9h4v17.7h-4zM774 281.9h4v17.7h-4zM810 281.9h4v17.7h-4zM828 281.9h4v17.7h-4zM904.5 281.9h4v17.7h-4zM945 281.9h4v17.7h-4zM949.5 281.9h4v17.7h-4zM967.4 281.9h4v17.7h-4zM1012.4 281.9h4v17.7h-4zM1048.4 281.9h4v17.7h-4zM1084.4 281.9h4v17.7h-4zM1129.4 281.9h4v17.7h-4zM1165.4 281.9h4v17.7h-4zM1219.4 281.9h4v17.7h-4zM1291.4 281.9h4v17.7h-4zM1322.9 281.9h4v17.7h-4zM1358.9 281.9h4v17.7h-4zM1372.3 281.9h4v17.7h-4zM1390.3 281.9h4v17.7h-4zM1417.3 281.9h4v17.7h-4zM1480.3 281.9h4v17.7h-4zM1493.8 281.9h4v17.7h-4zM1520.8 281.9h4v17.7h-4zM1547.8 281.9h4v17.7h-4zM1556.8 281.9h4v17.7h-4zM1565.8 281.9h4v17.7h-4zM1583.8 281.9h4v17.7h-4zM1597.3 281.9h4v17.7h-4zM1615.3 281.9h4v17.7h-4zM1633.3 281.9h4v17.7h-4zM1646.8 281.9h4v17.7h-4zM1651.3 281.9h4v17.7h-4zM1718.8 281.9h4v17.7h-4zM1727.8 281.9h4v17.7h-4zM1741.3 281.9h4v17.7h-4zM234.1 397.5h4v17.7h-4zM261.1 397.5h4v17.7h-4zM306.1 397.5h4v17.7h-4zM319.6 397.5h4v17.7h-4zM360.1 397.5h4v17.7h-4zM364.6 397.5h4v17.7h-4zM400.6 397.5h4v17.7h-4zM589.5 397.5h4v17.7h-4zM594 397.5h4v17.7h-4zM684 397.5h4v17.7h-4zM706.5 397.5h4v17.7h-4zM729 397.5h4v17.7h-4zM756 397.5h4v17.7h-4zM828 397.5h4v17.7h-4zM864 397.5h4v17.7h-4zM900 397.5h4v17.7h-4zM976.4 397.5h4v17.7h-4zM980.9 397.5h4v17.7h-4zM1012.4 397.5h4v17.7h-4zM1030.4 397.5h4v17.7h-4zM1048.4 397.5h4v17.7h-4zM1111.4 397.5h4v17.7h-4zM1151.9 397.5h4v17.7h-4zM1156.4 397.5h4v17.7h-4zM1250.9 397.5h4v17.7h-4zM1363.4 397.5h4v17.7h-4zM1381.3 397.5h4v17.7h-4zM1399.3 397.5h4v17.7h-4zM1426.3 397.5h4v17.7h-4zM1439.8 397.5h4v17.7h-4zM1453.3 397.5h4v17.7h-4zM1520.8 397.5h4v17.7h-4zM1565.8 397.5h4v17.7h-4zM1570.3 397.5h4v17.7h-4zM1615.3 397.5h4v17.7h-4zM1637.8 397.5h4v17.7h-4zM1723.3 397.5h4v17.7h-4zM1741.3 397.5h4v17.7h-4z"/>
<path fill="#4fa5b0" d="M193.6 281.9h4v17.7h-4zM216.1 281.9h4v17.7h-4zM225.1 281.9h4v17.7h-4zM252.1 281.9h4v17.7h-4zM283.6 281.9h4v17.7h-4zM297.1 281.9h4v17.7h-4zM301.6 281.9h4v17.7h-4zM342.1 281.9h4v17.7h-4zM346.6 281.9h4v17.7h-4zM405.1 281.9h4v17.7h-4zM409.6 281.9h4v17.7h-4zM418.6 281.9h4v17.7h-4zM459.1 281.9h4v17.7h-4zM463.6 281.9h4v17.7h-4zM526.6 281.9h4v17.7h-4zM540.1 281.9h4v17.7h-4zM558 281.9h4v17.7h-4zM585 281.9h4v17.7h-4zM630 281.9h4v17.7h-4zM724.5 281.9h4v17.7h-4zM778.5 281.9h4v17.7h-4zM792 281.9h4v17.7h-4zM873 281.9h4v17.7h-4zM882 281.9h4v17.7h-4zM891 281.9h4v17.7h-4zM918 281.9h4v17.7h-4zM962.9 281.9h4v17.7h-4zM1025.9 281.9h4v17.7h-4zM1034.9 281.9h4v17.7h-4zM1039.4 281.9h4v17.7h-4zM1111.4 281.9h4v17.7h-4zM1115.9 281.9h4v17.7h-4zM1142.9 281.9h4v17.7h-4zM1246.4 281.9h4v17.7h-4zM1255.4 281.9h4v17.7h-4zM1264.4 281.9h4v17.7h-4zM1282.4 281.9h4v17.7h-4zM1300.4 281.9h4v17.7h-4zM1313.9 281.9h4v17.7h-4zM1327.4 281.9h4v17.7h-4zM1403.8 281.9h4v17.7h-4zM1466.8 281.9h4v17.7h-4zM1525.3 281.9h4v17.7h-4zM1538.8 281.9h4v17.7h-4zM198.1 378.2h4v17.7h-4zM220.6 378.2h4v17.7h-4zM391.6 378.2h4v17.7h-4zM427.6 378.2h4v17.7h-4zM567 378.2h4v17.7h-4zM679.5 378.2h4v17.7h-4zM715.5 378.2h4v17.7h-4zM729 378.2h4v17.7h-4zM751.5 378.2h4v17.7h-4zM891 378.2h4v17.7h-4zM900 378.2h4v17.7h-4zM913.5 378.2h4v17.7h-4zM918 378.2h4v17.7h-4zM945 378.2h4v17.7h-4zM949.5 378.2h4v17.7h-4zM1052.9 378.2h4v17.7h-4zM1282.4 378.2h4v17.7h-4zM1358.9 378.2h4v17.7h-4zM1372.3 378.2h4v17.7h-4zM1394.8 378.2h4v17.7h-4zM1709.8 378.2h4v17.7h-4zM157.6 397.5h4v17.7h-4zM580.5 397.5h4v17.7h-4zM720 397.5h4v17.7h-4zM810 397.5h4v17.7h-4zM927 397.5h4v17.7h-4zM1039.4 397.5h4v17.7h-4zM1106.9 397.5h4v17.7h-4zM1466.8 397.5h4v17.7h-4zM1511.8 397.5h4v17.7h-4z"/>
<path fill="#aadda2" d="M229.6 281.9h4v17.7h-4zM513.1 281.9h4v17.7h-4zM769.5 281.9h4v17.7h-4zM1030.4 281.9h4v17.7h-4zM1408.3 281.9h4v17.7h-4zM1457.8 281.9h4v17.7h-4zM189.1 320.5h4v17.7h-4zM400.6 320.5h4v17.7h-4zM441.1 320.5h4v17.7h-4zM508.6 320.5h4v17.7h-4zM535.6 320.5h4v17.7h-4zM810 320.5h4v17.7h-4zM989.9 320.5h4v17.7h-4zM998.9 320.5h4v17.7h-4zM1043.9 320.5h4v17.7h-4zM1471.3 320.5h4v17.7h-4zM1552.3 320.5h4v17.7h-4zM1601.8 320.5h4v17.7h-4zM1606.3 320.5h4v17.7h-4zM1615.3 320.5h4v17.7h-4zM1624.3 320.5h4v17.7h-4zM1741.3 320.5h4v17.7h-4zM1745.8 320.5h4v17.7h-4zM612 339.7h4v17.7h-4zM693 339.7h4v17.7h-4zM724.5 339.7h4v17.7h-4zM909 339.7h4v17.7h-4zM1043.9 339.7h4v17.7h-4zM1448.8 339.7h4v17.7h-4zM1484.8 339.7h4v17.7h-4zM1696.3 339.7h4v17.7h-4zM1709.8 339.7h4v17.7h-4zM1714.3 339.7h4v17.7h-4zM1759.3 339.7h4v17.7h-4zM225.1 378.2h4v17.7h-4zM270.1 378.2h4v17.7h-4zM274.6 378.2h4v17.7h-4zM288.1 378.2h4v17.7h-4zM292.6 378.2h4v17.7h-4zM306.1 378.2h4v17.7h-4zM310.6 378.2h4v17.7h-4zM319.6 378.2h4v17.7h-4zM364.6 378.2h4v17.7h-4zM373.6 378.2h4v17.7h-4zM400.6 378.2h4v17.7h-4zM445.6 378.2h4v17.7h-4zM477.1 378.2h4v17.7h-4zM481.6 378.2h4v17.7h-4zM490.6 378.2h4v17.7h-4zM508.6 378.2h4v17.7h-4zM549.1 378.2h4v17.7h-4zM553.5 378.2h4v17.7h-4zM580.5 378.2h4v17.7h-4zM612 378.2h4v17.7h-4zM616.5 378.2h4v17.7h-4zM630 378.2h4v17.7h-4zM643.5 378.2h4v17.7h-4zM688.5 378.2h4v17.7h-4zM738 378.2h4v17.7h-4zM769.5 378.2h4v17.7h-4zM810 378.2h4v17.7h-4zM832.5 378.2h4v17.7h-4zM837 378.2h4v17.7h-4zM846 378.2h4v17.7h-4zM873 378.2h4v17.7h-4zM877.5 378.2h4v17.7h-4zM909 378.2h4v17.7h-4zM994.4 378.2h4v17.7h-4zM1061.9 378.2h4v17.7h-4zM1079.9 378.2h4v17.7h-4zM1124.9 378.2h4v17.7h-4zM1169.9 378.2h4v17.7h-4zM1174.4 378.2h4v17.7h-4zM1201.4 378.2h4v17.7h-4zM1210.4 378.2h4v17.7h-4zM1228.4 378.2h4v17.7h-4zM1277.9 378.2h4v17.7h-4zM1313.9 378.2h4v17.7h-4zM1426.3 378.2h4v17.7h-4zM1448.8 378.2h4v17.7h-4zM1493.8 378.2h4v17.7h-4zM1498.3 378.2h4v17.7h-4zM1525.3 378.2h4v17.7h-4zM1547.8 378.2h4v17.7h-4zM1574.8 378.2h4v17.7h-4zM1597.3 378.2h4v17.7h-4zM1601.8 378.2h4v17.7h-4zM1628.8 378.2h4v17.7h-4zM1655.8 378.2h4v17.7h-4zM1682.8 378.2h4v17.7h-4z"/>
<path fill="#62b8aa" d="M310.6 281.9h4v17.7h-4zM378.1 281.9h4v17.7h-4zM441.1 281.9h4v17.7h-4zM450.1 281.9h4v17.7h-4zM454.6 281.9h4v17.7h-4zM616.5 281.9h4v17.7h-4zM643.5 281.9h4v17.7h-4zM688.5 281.9h4v17.7h-4zM742.5 281.9h4v17.7h-4zM909 281.9h4v17.7h-4zM913.5 281.9h4v17.7h-4zM1021.4 281.9h4v17.7h-4zM1066.4 281.9h4v17.7h-4zM1070.9 281.9h4v17.7h-4zM1133.9 281.9h4v17.7h-4zM1214.9 281.9h4v17.7h-4zM1232.9 281.9h4v17.7h-4zM1237.4 281.9h4v17.7h-4zM1336.4 281.9h4v17.7h-4zM1376.8 281.9h4v17.7h-4zM1462.3 281.9h4v17.7h-4zM1502.8 281.9h4v17.7h-4zM1543.3 281.9h4v17.7h-4zM1570.3 281.9h4v17.7h-4zM1574.8 281.9h4v17.7h-4zM1624.3 281.9h4v17.7h-4zM1642.3 281.9h4v17.7h-4zM1664.8 281.9h4v17.7h-4zM1736.8 281.9h4v17.7h-4zM171.1 378.2h4v17.7h-4zM175.6 378.2h4v17.7h-4zM238.6 378.2h4v17.7h-4zM324.1 378.2h4v17.7h-4zM351.1 378.2h4v17.7h-4zM369.1 378.2h4v17.7h-4zM423.1 378.2h4v17.7h-4zM513.1 378.2h4v17.7h-4zM526.6 378.2h4v17.7h-4zM544.6 378.2h4v17.7h-4zM571.5 378.2h4v17.7h-4zM756 378.2h4v17.7h-4zM774 378.2h4v17.7h-4zM895.5 378.2h4v17.7h-4zM922.5 378.2h4v17.7h-4zM954 378.2h4v17.7h-4zM998.9 378.2h4v17.7h-4zM1012.4 378.2h4v17.7h-4zM1066.4 378.2h4v17.7h-4zM1160.9 378.2h4v17.7h-4zM1340.9 378.2h4v17.7h-4zM1399.3 378.2h4v17.7h-4zM1453.3 378.2h4v17.7h-4zM1462.3 378.2h4v17.7h-4zM1529.8 378.2h4v17.7h-4zM1538.8 378.2h4v17.7h-4zM1633.3 378.2h4v17.7h-4zM1637.8 378.2h4v17.7h-4zM1727.8 378.2h4v17.7h-4zM1732.3 378.2h4v17.7h-4zM1736.8 378.2h4v17.7h-4zM1745.8 378.2h4v17.7h-4zM1763.8 378.2h4v17.7h-4zM166.6 397.5h4v17.7h-4zM202.6 397.5h4v17.7h-4zM315.1 397.5h4v17.7h-4zM472.6 397.5h4v17.7h-4zM490.6 397.5h4v17.7h-4zM535.6 397.5h4v17.7h-4zM598.5 397.5h4v17.7h-4zM657 397.5h4v17.7h-4zM666 397.5h4v17.7h-4zM715.5 397.5h4v17.7h-4zM733.5 397.5h4v17.7h-4zM778.5 397.5h4v17.7h-4zM819 397.5h4v17.7h-4zM886.5 397.5h4v17.7h-4zM891 397.5h4v17.7h-4zM1088.9 397.5h4v17.7h-4zM1160.9 397.5h4v17.7h-4zM1214.9 397.5h4v17.7h-4zM1340.9 397.5h4v17.7h-4zM1376.8 397.5h4v17.7h-4zM1624.3 397.5h4v17.7h-4zM1655.8 397.5h4v17.7h-4zM1687.3 397.5h4v17.7h-4z"/>
<path fill="#c1e69f" d="M1529.8 281.9h4v17.7h-4zM337.6 320.5h4v17.7h-4zM378.1 320.5h4v17.7h-4zM450.1 320.5h4v17.7h-4zM571.5 320.5h4v17.7h-4zM589.5 320.5h4v17.7h-4zM594 320.5h4v17.7h-4zM666 320.5h4v17.7h-4zM823.5 320.5h4v17.7h-4zM828 320.5h4v17.7h-4zM841.5 320.5h4v17.7h-4zM913.5 320.5h4v17.7h-4zM1003.4 320.5h4v17.7h-4zM1084.4 320.5h4v17.7h-4zM1093.4 320.5h4v17.7h-4zM1102.4 320.5h4v17.7h-4zM1120.4 320.5h4v17.7h-4zM1165.4 320.5h4v17.7h-4zM1174.4 320.5h4v17.7h-4zM1241.9 320.5h4v17.7h-4zM1286.9 320.5h4v17.7h-4zM1318.4 320.5h4v17.7h-4zM1345.4 320.5h4v17.7h-4zM1354.4 320.5h4v17.7h-4zM1426.3 320.5h4v17.7h-4zM1430.8 320.5h4v17.7h-4zM1556.8 320.5h4v17.7h-4zM1574.8 320.5h4v17.7h-4zM1619.8 320.5h4v17.7h-4zM1633.3 320.5h4v17.7h-4zM1714.3 320.5h4v17.7h-4zM1750.3 320.5h4v17.7h-4zM1754.8 320.5h4v17.7h-4zM288.1 339.7h4v17.7h-4zM499.6 339.7h4v17.7h-4zM729 339.7h4v17.7h-4zM747 339.7h4v17.7h-4zM886.5 339.7h4v17.7h-4zM976.4 339.7h4v17.7h-4zM1381.3 339.7h4v17.7h-4zM1394.8 339.7h4v17.7h-4zM1610.8 339.7h4v17.7h-4zM148.7 378.2h4v17.7h-4zM184.6 378.2h4v17.7h-4zM189.1 378.2h4v17.7h-4zM243.1 378.2h4v17.7h-4zM283.6 378.2h4v17.7h-4zM346.6 378.2h4v17.7h-4zM405.1 378.2h4v17.7h-4zM436.6 378.2h4v17.7h-4zM454.6 378.2h4v17.7h-4zM585 378.2h4v17.7h-4zM594 378.2h4v17.7h-4zM603 378.2h4v17.7h-4zM621 378.2h4v17.7h-4zM625.5 378.2h4v17.7h-4zM648 378.2h4v17.7h-4zM657 378.2h4v17.7h-4zM661.5 378.2h4v17.7h-4zM670.5 378.2h4v17.7h-4zM720 378.2h4v17.7h-4zM783 378.2h4v17.7h-4zM796.5 378.2h4v17.7h-4zM819 378.2h4v17.7h-4zM859.5 378.2h4v17.7h-4zM940.5 378.2h4v17.7h-4zM967.4 378.2h4v17.7h-4zM1025.9 378.2h4v17.7h-4zM1084.4 378.2h4v17.7h-4zM1097.9 378.2h4v17.7h-4zM1102.4 378.2h4v17.7h-4zM1129.4 378.2h4v17.7h-4zM1142.9 378.2h4v17.7h-4zM1156.4 378.2h4v17.7h-4zM1178.9 378.2h4v17.7h-4zM1223.9 378.2h4v17.7h-4zM1237.4 378.2h4v17.7h-4zM1241.9 378.2h4v17.7h-4zM1246.4 378.2h4v17.7h-4zM1264.4 378.2h4v17.7h-4zM1304.9 378.2h4v17.7h-4zM1309.4 378.2h4v17.7h-4zM1381.3 378.2h4v17.7h-4zM1408.3 378.2h4v17.7h-4zM1484.8 378.2h4v17.7h-4zM1489.3 378.2h4v17.7h-4zM1502.8 378.2h4v17.7h-4zM1507.3 378.2h4v17.7h-4zM1561.3 378.2h4v17.7h-4zM1570.3 378.2h4v17.7h-4zM1615.3 378.2h4v17.7h-4zM1669.3 378.2h4v17.7h-4zM1691.8 378.2h4v17.7h-4zM1705.3 378.2h4v17.7h-4z"/>
<path fill="#ea6149" d="M148.7 301.2h4v17.7h-4zM153.1 301.2h4v17.7h-4zM198.1 301.2h4v17.7h-4zM229.6 301.2h4v17.7h-4zM234.1 301.2h4v17.7h-4zM243.1 301.2h4v17.7h-4zM283.6 301.2h4v17.7h-4zM292.6 301.2h4v17.7h-4zM306.1 301.2h4v17.7h-4zM315.1 301.2h4v17.7h-4zM319.6 301.2h4v17.7h-4zM337.6 301.2h4v17.7h-4zM351.1 301.2h4v17.7h-4zM405.1 301.2h4v17.7h-4zM490.6 301.2h4v17.7h-4zM499.6 301.2h4v17.7h-4zM549.1 301.2h4v17.7h-4zM612 301.2h4v17.7h-4zM621 301.2h4v17.7h-4zM657 301.2h4v17.7h-4zM670.5 301.2h4v17.7h-4zM720 301.2h4v17.7h-4zM724.5 301.2h4v17.7h-4zM751.5 301.2h4v17.7h-4zM765 301.2h4v17.7h-4zM814.5 301.2h4v17.7h-4zM855 301.2h4v17.7h-4zM927 301.2h4v17.7h-4zM954 301.2h4v17.7h-4zM962.9 301.2h4v17.7h-4zM989.9 301.2h4v17.7h-4zM1003.4 301.2h4v17.7h-4zM1066.4 301.2h4v17.7h-4zM1093.4 301.2h4v17.7h-4zM1205.9 301.2h4v17.7h-4zM1214.9 301.2h4v17.7h-4zM1255.4 301.2h4v17.7h-4zM1273.4 301.2h4v17.7h-4zM1313.9 301.2h4v17.7h-4zM1372.3 301.2h4v17.7h-4zM1394.8 301.2h4v17.7h-4zM1399.3 301.2h4v17.7h-4zM1412.8 301.2h4v17.7h-4zM1444.3 301.2h4v17.7h-4zM1471.3 301.2h4v17.7h-4zM1475.8 301.2h4v17.7h-4zM1511.8 301.2h4v17.7h-4zM1516.3 301.2h4v17.7h-4zM1538.8 301.2h4v17.7h-4zM1547.8 301.2h4v17.7h-4zM1556.8 301.2h4v17.7h-4zM1592.8 301.2h4v17.7h-4zM1637.8 301.2h4v17.7h-4zM1642.3 301.2h4v17.7h-4zM1718.8 301.2h4v17.7h-4zM1727.8 301.2h4v17.7h-4z"/>
<path fill="#d03a4b" d="M157.6 301.2h4v17.7h-4zM211.6 301.2h4v17.7h-4zM216.1 301.2h4v17.7h-4zM238.6 301.2h4v17.7h-4zM265.6 301.2h4v17.7h-4zM297.1 301.2h4v17.7h-4zM328.6 301.2h4v17.7h-4zM382.6 301.2h4v17.7h-4zM387.1 301.2h4v17.7h-4zM400.6 301.2h4v17.7h-4zM409.6 301.2h4v17.7h-4zM418.6 301.2h4v17.7h-4zM423.1 301.2h4v17.7h-4zM504.1 301.2h4v17.7h-4zM576 301.2h4v17.7h-4zM585 301.2h4v17.7h-4zM603 301.2h4v17.7h-4zM634.5 301.2h4v17.7h-4zM643.5 301.2h4v17.7h-4zM652.5 301.2h4v17.7h-4zM729 301.2h4v17.7h-4zM796.5 301.2h4v17.7h-4zM882 301.2h4v17.7h-4zM900 301.2h4v17.7h-4zM904.5 301.2h4v17.7h-4zM931.5 301.2h4v17.7h-4zM976.4 301.2h4v17.7h-4zM1160.9 301.2h4v17.7h-4zM1165.4 301.2h4v17.7h-4zM1174.4 301.2h4v17.7h-4zM1178.9 301.2h4v17.7h-4zM1246.4 301.2h4v17.7h-4zM1264.4 301.2h4v17.7h-4zM1282.4 301.2h4v17.7h-4zM1286.9 301.2h4v17.7h-4zM1318.4 301.2h4v17.7h-4zM1322.9 301.2h4v17.7h-4zM1390.3 301.2h4v17.7h-4zM1430.8 301.2h4v17.7h-4zM1435.3 301.2h4v17.7h-4zM1448.8 301.2h4v17.7h-4zM1453.3 301.2h4v17.7h-4zM1633.3 301.2h4v17.7h-4zM1682.8 301.2h4v17.7h-4zM1709.8 301.2h4v17.7h-4zM1714.3 301.2h4v17.7h-4zM1754.8 301.2h4v17.7h-4zM1759.3 301.2h4v17.7h-4z"/>
<path fill="#9e0142" d="M162.1 301.2h4v17.7h-4zM270.1 301.2h4v17.7h-4zM733.5 301.2h4v17.7h-4zM756 301.2h4v17.7h-4zM998.9 301.2h4v17.7h-4zM1088.9 301.2h4v17.7h-4zM1291.4 301.2h4v17.7h-4zM1300.4 301.2h4v17.7h-4z"/>
<path fill="#f2764b" d="M166.6 301.2h4v17.7h-4zM175.6 301.2h4v17.7h-4zM247.6 301.2h4v17.7h-4zM252.1 301.2h4v17.7h-4zM301.6 301.2h4v17.7h-4zM342.1 301.2h4v17.7h-4zM360.1 301.2h4v17.7h-4zM373.6 301.2h4v17.7h-4zM427.6 301.2h4v17.7h-4zM463.6 301.2h4v17.7h-4zM477.1 301.2h4v17.7h-4zM481.6 301.2h4v17.7h-4zM535.6 301.2h4v17.7h-4zM540.1 301.2h4v17.7h-4zM567 301.2h4v17.7h-4zM675 301.2h4v17.7h-4zM679.5 301.2h4v17.7h-4zM706.5 301.2h4v17.7h-4zM792 301.2h4v17.7h-4zM805.5 301.2h4v17.7h-4zM859.5 301.2h4v17.7h-4zM868.5 301.2h4v17.7h-4zM886.5 301.2h4v17.7h-4zM913.5 301.2h4v17.7h-4zM936 301.2h4v17.7h-4zM1012.4 301.2h4v17.7h-4zM1057.4 301.2h4v17.7h-4zM1075.4 301.2h4v17.7h-4zM1106.9 301.2h4v17.7h-4zM1120.4 301.2h4v17.7h-4zM1124.9 301.2h4v17.7h-4zM1138.4 301.2h4v17.7h-4zM1147.4 301.2h4v17.7h-4zM1219.4 301.2h4v17.7h-4zM1259.9 301.2h4v17.7h-4zM1363.4 301.2h4v17.7h-4zM1367.8 301.2h4v17.7h-4zM1403.8 301.2h4v17.7h-4zM1417.3 301.2h4v17.7h-4zM1462.3 301.2h4v17.7h-4zM1520.8 301.2h4v17.7h-4zM1534.3 301.2h4v17.7h-4zM1579.3 301.2h4v17.7h-4zM1597.3 301.2h4v17.7h-4zM1651.3 301.2h4v17.7h-4zM1655.8 301.2h4v17.7h-4zM1691.8 301.2h4v17.7h-4zM1732.3 301.2h4v17.7h-4z"/>
<path fill="#fba35e" d="M171.1 301.2h4v17.7h-4zM184.6 301.2h4v17.7h-4zM355.6 301.2h4v17.7h-4zM454.6 301.2h4v17.7h-4zM517.6 301.2h4v17.7h-4zM522.1 301.2h4v17.7h-4zM553.5 301.2h4v17.7h-4zM558 301.2h4v17.7h-4zM589.5 301.2h4v17.7h-4zM688.5 301.2h4v17.7h-4zM697.5 301.2h4v17.7h-4zM742.5 301.2h4v17.7h-4zM832.5 301.2h4v17.7h-4zM841.5 301.2h4v17.7h-4zM846 301.2h4v17.7h-4zM873 301.2h4v17.7h-4zM918 301.2h4v17.7h-4zM945 301.2h4v17.7h-4zM967.4 301.2h4v17.7h-4zM1034.9 301.2h4v17.7h-4zM1039.4 301.2h4v17.7h-4zM1043.9 301.2h4v17.7h-4zM1048.4 301.2h4v17.7h-4zM1052.9 301.2h4v17.7h-4zM1079.9 301.2h4v17.7h-4zM1097.9 301.2h4v17.7h-4zM1129.4 301.2h4v17.7h-4zM1133.9 301.2h4v17.7h-4zM1187.9 301.2h4v17.7h-4zM1201.4 301.2h4v17.7h-4zM1210.4 301.2h4v17.7h-4zM1223.9 301.2h4v17.7h-4zM1228.4 301.2h4v17.7h-4zM1336.4 301.2h4v17.7h-4zM1354.4 301.2h4v17.7h-4zM1381.3 301.2h4v17.7h-4zM1408.3 301.2h4v17.7h-4zM1421.8 301.2h4v17.7h-4zM1480.3 301.2h4v17.7h-4zM1493.8 301.2h4v17.7h-4zM1525.3 301.2h4v17.7h-4zM1529.8 301.2h4v17.7h-4zM1552.3 301.2h4v17.7h-4zM1565.8 301.2h4v17.7h-4zM1574.8 301.2h4v17.7h-4zM1606.3 301.2h4v17.7h-4zM1610.8 301.2h4v17.7h-4zM1615.3 301.2h4v17.7h-4zM1624.3 301.2h4v17.7h-4zM1673.8 301.2h4v17.7h-4zM1687.3 301.2h4v17.7h-4zM1705.3 301.2h4v17.7h-4zM1741.3 301.2h4v17.7h-4zM765 359h4v17.7h-4zM940.5 359h4v17.7h-4zM1106.9 359h4v17.7h-4z"/>
<path fill="#df4e4a" d="M180.1 301.2h4v17.7h-4zM193.6 301.2h4v17.7h-4zM202.6 301.2h4v17.7h-4zM207.1 301.2h4v17.7h-4zM220.6 301.2h4v17.7h-4zM279.1 301.2h4v17.7h-4zM288.1 301.2h4v17.7h-4zM310.6 301.2h4v17.7h-4zM324.1 301.2h4v17.7h-4zM333.1 301.2h4v17.7h-4zM346.6 301.2h4v17.7h-4zM364.6 301.2h4v17.7h-4zM369.1 301.2h4v17.7h-4zM378.1 301.2h4v17.7h-4zM396.1 301.2h4v17.7h-4zM432.1 301.2h4v17.7h-4zM459.1 301.2h4v17.7h-4zM468.1 301.2h4v17.7h-4zM486.1 301.2h4v17.7h-4zM508.6 301.2h4v17.7h-4zM513.1 301.2h4v17.7h-4zM526.6 301.2h4v17.7h-4zM562.5 301.2h4v17.7h-4zM571.5 301.2h4v17.7h-4zM607.5 301.2h4v17.7h-4zM616.5 301.2h4v17.7h-4zM625.5 301.2h4v17.7h-4zM630 301.2h4v17.7h-4zM639 301.2h4v17.7h-4zM648 301.2h4v17.7h-4zM661.5 301.2h4v17.7h-4zM666 301.2h4v17.7h-4zM684 301.2h4v17.7h-4zM693 301.2h4v17.7h-4zM711 301.2h4v17.7h-4zM715.5 301.2h4v17.7h-4zM760.5 301.2h4v17.7h-4zM769.5 301.2h4v17.7h-4zM774 301.2h4v17.7h-4zM783 301.2h4v17.7h-4zM828 301.2h4v17.7h-4zM850.5 301.2h4v17.7h-4zM864 301.2h4v17.7h-4zM877.5 301.2h4v17.7h-4zM891 301.2h4v17.7h-4zM922.5 301.2h4v17.7h-4zM940.5 301.2h4v17.7h-4zM958.4 301.2h4v17.7h-4zM971.9 301.2h4v17.7h-4zM994.4 301.2h4v17.7h-4zM1007.9 301.2h4v17.7h-4zM1021.4 301.2h4v17.7h-4zM1084.4 301.2h4v17.7h-4zM1111.4 301.2h4v17.7h-4zM1142.9 301.2h4v17.7h-4zM1169.9 301.2h4v17.7h-4zM1183.4 301.2h4v17.7h-4zM1241.9 301.2h4v17.7h-4zM1268.9 301.2h4v17.7h-4zM1309.4 301.2h4v17.7h-4zM1327.4 301.2h4v17.7h-4zM1345.4 301.2h4v17.7h-4zM1385.8 301.2h4v17.7h-4zM1439.8 301.2h4v17.7h-4zM1484.8 301.2h4v17.7h-4zM1489.3 301.2h4v17.7h-4zM1498.3 301.2h4v17.7h-4zM1502.8 301.2h4v17.7h-4zM1507.3 301.2h4v17.7h-4zM1543.3 301.2h4v17.7h-4zM1646.8 301.2h4v17.7h-4zM1660.3 301.2h4v17.7h-4zM1664.8 301.2h4v17.7h-4zM1696.3 301.2h4v17.7h-4zM1700.8 301.2h4v17.7h-4zM1723.3 301.2h4v17.7h-4zM1736.8 301.2h4v17.7h-4zM1745.8 301.2h4v17.7h-4zM1750.3 301.2h4v17.7h-4z"/>
<path fill="#f88c53" d="M189.1 301.2h4v17.7h-4zM256.6 301.2h4v17.7h-4zM436.6 301.2h4v17.7h-4zM450.1 301.2h4v17.7h-4zM472.6 301.2h4v17.7h-4zM531.1 301.2h4v17.7h-4zM544.6 301.2h4v17.7h-4zM594 301.2h4v17.7h-4zM598.5 301.2h4v17.7h-4zM702 301.2h4v17.7h-4zM747 301.2h4v17.7h-4zM778.5 301.2h4v17.7h-4zM787.5 301.2h4v17.7h-4zM801 301.2h4v17.7h-4zM819 301.2h4v17.7h-4zM823.5 301.2h4v17.7h-4zM837 301.2h4v17.7h-4zM909 301.2h4v17.7h-4zM949.5 301.2h4v17.7h-4zM1025.9 301.2h4v17.7h-4zM1030.4 301.2h4v17.7h-4zM1061.9 301.2h4v17.7h-4zM1102.4 301.2h4v17.7h-4zM1115.9 301.2h4v17.7h-4zM1192.4 301.2h4v17.7h-4zM1196.9 301.2h4v17.7h-4zM1331.9 301.2h4v17.7h-4zM1340.9 301.2h4v17.7h-4zM1358.9 301.2h4v17.7h-4zM1376.8 301.2h4v17.7h-4zM1426.3 301.2h4v17.7h-4zM1457.8 301.2h4v17.7h-4zM1466.8 301.2h4v17.7h-4zM1561.3 301.2h4v17.7h-4zM1570.3 301.2h4v17.7h-4zM1583.8 301.2h4v17.7h-4zM1601.8 301.2h4v17.7h-4zM1619.8 301.2h4v17.7h-4zM1628.8 301.2h4v17.7h-4zM1669.3 301.2h4v17.7h-4z"/>
<path fill="#be2549" d="M225.1 301.2h4v17.7h-4zM261.1 301.2h4v17.7h-4zM274.6 301.2h4v17.7h-4zM414.1 301.2h4v17.7h-4zM495.1 301.2h4v17.7h-4zM580.5 301.2h4v17.7h-4zM738 301.2h4v17.7h-4zM810 301.2h4v17.7h-4zM895.5 301.2h4v17.7h-4zM980.9 301.2h4v17.7h-4zM985.4 301.2h4v17.7h-4zM1016.9 301.2h4v17.7h-4zM1070.9 301.2h4v17.7h-4zM1151.9 301.2h4v17.7h-4zM1156.4 301.2h4v17.7h-4zM1277.9 301.2h4v17.7h-4zM1295.9 301.2h4v17.7h-4zM1304.9 301.2h4v17.7h-4zM1349.9 301.2h4v17.7h-4zM1588.3 301.2h4v17.7h-4zM1678.3 301.2h4v17.7h-4z"/>
<path fill="#aa0f45" d="M391.6 301.2h4v17.7h-4zM441.1 301.2h4v17.7h-4zM445.6 301.2h4v17.7h-4zM1232.9 301.2h4v17.7h-4zM1237.4 301.2h4v17.7h-4zM1250.9 301.2h4v17.7h-4zM1763.8 301.2h4v17.7h-4z"/>
<path fill="#feea9d" d="M148.7 320.5h4v17.7h-4zM207.1 320.5h4v17.7h-4zM256.6 320.5h4v17.7h-4zM364.6 320.5h4v17.7h-4zM504.1 320.5h4v17.7h-4zM688.5 320.5h4v17.7h-4zM711 320.5h4v17.7h-4zM747 320.5h4v17.7h-4zM954 320.5h4v17.7h-4zM958.4 320.5h4v17.7h-4zM976.4 320.5h4v17.7h-4zM1210.4 320.5h4v17.7h-4zM1453.3 320.5h4v17.7h-4zM1489.3 320.5h4v17.7h-4zM1493.8 320.5h4v17.7h-4zM1520.8 320.5h4v17.7h-4zM202.6 339.7h4v17.7h-4zM378.1 339.7h4v17.7h-4zM382.6 339.7h4v17.7h-4zM418.6 339.7h4v17.7h-4zM423.1 339.7h4v17.7h-4zM544.6 339.7h4v17.7h-4zM585 339.7h4v17.7h-4zM598.5 339.7h4v17.7h-4zM621 339.7h4v17.7h-4zM634.5 339.7h4v17.7h-4zM684 339.7h4v17.7h-4zM702 339.7h4v17.7h-4zM711 339.7h4v17.7h-4zM787.5 339.7h4v17.7h-4zM792 339.7h4v17.7h-4zM837 339.7h4v17.7h-4zM841.5 339.7h4v17.7h-4zM855 339.7h4v17.7h-4zM868.5 339.7h4v17.7h-4zM877.5 339.7h4v17.7h-4zM949.5 339.7h4v17.7h-4zM1201.4 339.7h4v17.7h-4zM1291.4 339.7h4v17.7h-4zM1430.8 339.7h4v17.7h-4zM1502.8 339.7h4v17.7h-4zM1520.8 339.7h4v17.7h-4zM1547.8 339.7h4v17.7h-4zM1565.8 339.7h4v17.7h-4zM1705.3 339.7h4v17.7h-4zM175.6 359h4v17.7h-4zM193.6 359h4v17.7h-4zM243.1 359h4v17.7h-4zM265.6 359h4v17.7h-4zM288.1 359h4v17.7h-4zM292.6 359h4v17.7h-4zM301.6 359h4v17.7h-4zM315.1 359h4v17.7h-4zM355.6 359h4v17.7h-4zM432.1 359h4v17.7h-4zM436.6 359h4v17.7h-4zM441.1 359h4v17.7h-4zM463.6 359h4v17.7h-4zM472.6 359h4v17.7h-4zM522.1 359h4v17.7h-4zM580.5 359h4v17.7h-4zM598.5 359h4v17.7h-4zM688.5 359h4v17.7h-4zM706.5 359h4v17.7h-4zM738 359h4v17.7h-4zM742.5 359h4v17.7h-4zM751.5 359h4v17.7h-4zM774 359h4v17.7h-4zM801 359h4v17.7h-4zM810 359h4v17.7h-4zM814.5 359h4v17.7h-4zM846 359h4v17.7h-4zM882 359h4v17.7h-4zM886.5 359h4v17.7h-4zM891 359h4v17.7h-4zM895.5 359h4v17.7h-4zM936 359h4v17.7h-4zM949.5 359h4v17.7h-4zM971.9 359h4v17.7h-4zM1021.4 359h4v17.7h-4zM1097.9 359h4v17.7h-4zM1129.4 359h4v17.7h-4zM1138.4 359h4v17.7h-4zM1142.9 359h4v17.7h-4zM1160.9 359h4v17.7h-4zM1210.4 359h4v17.7h-4zM1214.9 359h4v17.7h-4zM1250.9 359h4v17.7h-4zM1264.4 359h4v17.7h-4zM1282.4 359h4v17.7h-4zM1291.4 359h4v17.7h-4zM1345.4 359h4v17.7h-4zM1349.9 359h4v17.7h-4zM1354.4 359h4v17.7h-4zM1358.9 359h4v17.7h-4zM1376.8 359h4v17.7h-4zM1408.3 359h4v17.7h-4zM1421.8 359h4v17.7h-4zM1453.3 359h4v17.7h-4zM1457.8 359h4v17.7h-4zM1498.3 359h4v17.7h-4zM1516.3 359h4v17.7h-4zM1552.3 359h4v17.7h-4zM1561.3 359h4v17.7h-4zM1592.8 359h4v17.7h-4zM1601.8 359h4v17.7h-4zM1660.3 359h4v17.7h-4zM1673.8 359h4v17.7h-4zM1678.3 359h4v17.7h-4z"/>
<path fill="#fdf4ab" d="M153.1 320.5h4v17.7h-4zM184.6 320.5h4v17.7h-4zM292.6 320.5h4v17.7h-4zM310.6 320.5h4v17.7h-4zM342.1 320.5h4v17.7h-4zM387.1 320.5h4v17.7h-4zM445.6 320.5h4v17.7h-4zM477.1 320.5h4v17.7h-4zM490.6 320.5h4v17.7h-4zM553.5 320.5h4v17.7h-4zM598.5 320.5h4v17.7h-4zM625.5 320.5h4v17.7h-4zM657 320.5h4v17.7h-4zM661.5 320.5h4v17.7h-4zM715.5 320.5h4v17.7h-4zM724.5 320.5h4v17.7h-4zM751.5 320.5h4v17.7h-4zM756 320.5h4v17.7h-4zM774 320.5h4v17.7h-4zM886.5 320.5h4v17.7h-4zM900 320.5h4v17.7h-4zM971.9 320.5h4v17.7h-4zM980.9 320.5h4v17.7h-4zM985.4 320.5h4v17.7h-4zM1016.9 320.5h4v17.7h-4zM1021.4 320.5h4v17.7h-4zM1034.9 320.5h4v17.7h-4zM1066.4 320.5h4v17.7h-4zM1219.4 320.5h4v17.7h-4zM1232.9 320.5h4v17.7h-4zM1291.4 320.5h4v17.7h-4zM1403.8 320.5h4v17.7h-4zM1565.8 320.5h4v17.7h-4zM1579.3 320.5h4v17.7h-4zM1588.3 320.5h4v17.7h-4zM1637.8 320.5h4v17.7h-4zM1642.3 320.5h4v17.7h-4zM1646.8 320.5h4v17.7h-4zM1660.3 320.5h4v17.7h-4zM1669.3 320.5h4v17.7h-4zM1678.3 320.5h4v17.7h-4zM1696.3 320.5h4v17.7h-4zM157.6 339.7h4v17.7h-4zM166.6 339.7h4v17.7h-4zM171.1 339.7h4v17.7h-4zM198.1 339.7h4v17.7h-4zM225.1 339.7h4v17.7h-4zM229.6 339.7h4v17.7h-4zM234.1 339.7h4v17.7h-4zM256.6 339.7h4v17.7h-4zM328.6 339.7h4v17.7h-4zM346.6 339.7h4v17.7h-4zM391.6 339.7h4v17.7h-4zM553.5 339.7h4v17.7h-4zM571.5 339.7h4v17.7h-4zM576 339.7h4v17.7h-4zM580.5 339.7h4v17.7h-4zM589.5 339.7h4v17.7h-4zM625.5 339.7h4v17.7h-4zM652.5 339.7h4v17.7h-4zM706.5 339.7h4v17.7h-4zM715.5 339.7h4v17.7h-4zM751.5 339.7h4v17.7h-4zM769.5 339.7h4v17.7h-4zM774 339.7h4v17.7h-4zM778.5 339.7h4v17.7h-4zM796.5 339.7h4v17.7h-4zM801 339.7h4v17.7h-4zM805.5 339.7h4v17.7h-4zM810 339.7h4v17.7h-4zM882 339.7h4v17.7h-4zM989.9 339.7h4v17.7h-4zM994.4 339.7h4v17.7h-4zM1003.4 339.7h4v17.7h-4zM1016.9 339.7h4v17.7h-4zM1030.4 339.7h4v17.7h-4zM1052.9 339.7h4v17.7h-4zM1084.4 339.7h4v17.7h-4zM1160.9 339.7h4v17.7h-4zM1165.4 339.7h4v17.7h-4zM1196.9 339.7h4v17.7h-4zM1255.4 339.7h4v17.7h-4zM1295.9 339.7h4v17.7h-4zM1300.4 339.7h4v17.7h-4zM1313.9 339.7h4v17.7h-4zM1340.9 339.7h4v17.7h-4zM1349.9 339.7h4v17.7h-4zM1358.9 339.7h4v17.7h-4zM1367.8 339.7h4v17.7h-4zM1421.8 339.7h4v17.7h-4zM1435.3 339.7h4v17.7h-4zM1471.3 339.7h4v17.7h-4zM1534.3 339.7h4v17.7h-4zM1556.8 339.7h4v17.7h-4zM1570.3 339.7h4v17.7h-4zM1628.8 339.7h4v17.7h-4zM1633.3 339.7h4v17.7h-4zM1646.8 339.7h4v17.7h-4zM1727.8 339.7h4v17.7h-4zM1736.8 339.7h4v17.7h-4zM153.1 359h4v17.7h-4zM157.6 359h4v17.7h-4zM162.1 359h4v17.7h-4zM171.1 359h4v17.7h-4zM180.1 359h4v17.7h-4zM198.1 359h4v17.7h-4zM202.6 359h4v17.7h-4zM220.6 359h4v17.7h-4zM234.1 359h4v17.7h-4zM256.6 359h4v17.7h-4zM274.6 359h4v17.7h-4zM283.6 359h4v17.7h-4zM324.1 359h4v17.7h-4zM328.6 359h4v17.7h-4zM333.1 359h4v17.7h-4zM369.1 359h4v17.7h-4zM373.6 359h4v17.7h-4zM405.1 359h4v17.7h-4zM414.1 359h4v17.7h-4zM468.1 359h4v17.7h-4zM544.6 359h4v17.7h-4zM562.5 359h4v17.7h-4zM585 359h4v17.7h-4zM652.5 359h4v17.7h-4zM679.5 359h4v17.7h-4zM697.5 359h4v17.7h-4zM702 359h4v17.7h-4zM733.5 359h4v17.7h-4zM747 359h4v17.7h-4zM769.5 359h4v17.7h-4zM787.5 359h4v17.7h-4zM796.5 359h4v17.7h-4zM805.5 359h4v17.7h-4zM837 359h4v17.7h-4zM877.5 359h4v17.7h-4zM931.5 359h4v17.7h-4zM980.9 359h4v17.7h-4zM1012.4 359h4v17.7h-4zM1025.9 359h4v17.7h-4zM1030.4 359h4v17.7h-4zM1034.9 359h4v17.7h-4zM1057.4 359h4v17.7h-4zM1079.9 359h4v17.7h-4zM1115.9 359h4v17.7h-4zM1124.9 359h4v17.7h-4zM1147.4 359h4v17.7h-4zM1169.9 359h4v17.7h-4zM1196.9 359h4v17.7h-4zM1201.4 359h4v17.7h-4zM1241.9 359h4v17.7h-4zM1259.9 359h4v17.7h-4zM1295.9 359h4v17.7h-4zM1390.3 359h4v17.7h-4zM1426.3 359h4v17.7h-4zM1444.3 359h4v17.7h-4zM1480.3 359h4v17.7h-4zM1484.8 359h4v17.7h-4zM1511.8 359h4v17.7h-4zM1588.3 359h4v17.7h-4zM1619.8 359h4v17.7h-4zM1633.3 359h4v17.7h-4zM1642.3 359h4v17.7h-4zM1664.8 359h4v17.7h-4zM1669.3 359h4v17.7h-4zM1682.8 359h4v17.7h-4zM1691.8 359h4v17.7h-4zM1709.8 359h4v17.7h-4zM1736.8 359h4v17.7h-4zM459.1 378.2h4v17.7h-4z"/>
<path fill="#f2f9ab" d="M157.6 320.5h4v17.7h-4zM175.6 320.5h4v17.7h-4zM180.1 320.5h4v17.7h-4zM193.6 320.5h4v17.7h-4zM202.6 320.5h4v17.7h-4zM216.1 320.5h4v17.7h-4zM243.1 320.5h4v17.7h-4zM265.6 320.5h4v17.7h-4zM274.6 320.5h4v17.7h-4zM306.1 320.5h4v17.7h-4zM346.6 320.5h4v17.7h-4zM351.1 320.5h4v17.7h-4zM432.1 320.5h4v17.7h-4zM454.6 320.5h4v17.7h-4zM486.1 320.5h4v17.7h-4zM526.6 320.5h4v17.7h-4zM531.1 320.5h4v17.7h-4zM576 320.5h4v17.7h-4zM616.5 320.5h4v17.7h-4zM652.5 320.5h4v17.7h-4zM693 320.5h4v17.7h-4zM720 320.5h4v17.7h-4zM760.5 320.5h4v17.7h-4zM769.5 320.5h4v17.7h-4zM787.5 320.5h4v17.7h-4zM832.5 320.5h4v17.7h-4zM873 320.5h4v17.7h-4zM931.5 320.5h4v17.7h-4zM949.5 320.5h4v17.7h-4zM1012.4 320.5h4v17.7h-4zM1052.9 320.5h4v17.7h-4zM1070.9 320.5h4v17.7h-4zM1075.4 320.5h4v17.7h-4zM1111.4 320.5h4v17.7h-4zM1129.4 320.5h4v17.7h-4zM1160.9 320.5h4v17.7h-4zM1187.9 320.5h4v17.7h-4zM1192.4 320.5h4v17.7h-4zM1223.9 320.5h4v17.7h-4zM1259.9 320.5h4v17.7h-4zM1264.4 320.5h4v17.7h-4zM1268.9 320.5h4v17.7h-4zM1322.9 320.5h4v17.7h-4zM1363.4 320.5h4v17.7h-4zM1372.3 320.5h4v17.7h-4zM1390.3 320.5h4v17.7h-4zM1408.3 320.5h4v17.7h-4zM1412.8 320.5h4v17.7h-4zM1435.3 320.5h4v17.7h-4zM1457.8 320.5h4v17.7h-4zM1466.8 320.5h4v17.7h-4zM1525.3 320.5h4v17.7h-4zM1538.8 320.5h4v17.7h-4zM1651.3 320.5h4v17.7h-4zM1655.8 320.5h4v17.7h-4zM1673.8 320.5h4v17.7h-4zM1700.8 320.5h4v17.7h-4zM153.1 339.7h4v17.7h-4zM175.6 339.7h4v17.7h-4zM184.6 339.7h4v17.7h-4zM220.6 339.7h4v17.7h-4zM243.1 339.7h4v17.7h-4zM252.1 339.7h4v17.7h-4zM274.6 339.7h4v17.7h-4zM337.6 339.7h4v17.7h-4zM342.1 339.7h4v17.7h-4zM400.6 339.7h4v17.7h-4zM427.6 339.7h4v17.7h-4zM450.1 339.7h4v17.7h-4zM454.6 339.7h4v17.7h-4zM526.6 339.7h4v17.7h-4zM594 339.7h4v17.7h-4zM603 339.7h4v17.7h-4zM643.5 339.7h4v17.7h-4zM670.5 339.7h4v17.7h-4zM679.5 339.7h4v17.7h-4zM738 339.7h4v17.7h-4zM864 339.7h4v17.7h-4zM900 339.7h4v17.7h-4zM918 339.7h4v17.7h-4zM954 339.7h4v17.7h-4zM998.9 339.7h4v17.7h-4zM1034.9 339.7h4v17.7h-4zM1039.4 339.7h4v17.7h-4zM1057.4 339.7h4v17.7h-4zM1061.9 339.7h4v17.7h-4zM1075.4 339.7h4v17.7h-4zM1079.9 339.7h4v17.7h-4zM1093.4 339.7h4v17.7h-4zM1129.4 339.7h4v17.7h-4zM1142.9 339.7h4v17.7h-4zM1178.9 339.7h4v17.7h-4zM1187.9 339.7h4v17.7h-4zM1250.9 339.7h4v17.7h-4zM1273.4 339.7h4v17.7h-4zM1309.4 339.7h4v17.7h-4zM1336.4 339.7h4v17.7h-4zM1363.4 339.7h4v17.7h-4zM1372.3 339.7h4v17.7h-4zM1376.8 339.7h4v17.7h-4zM1385.8 339.7h4v17.7h-4zM1390.3 339.7h4v17.7h-4zM1417.3 339.7h4v17.7h-4zM1439.8 339.7h4v17.7h-4zM1453.3 339.7h4v17.7h-4zM1489.3 339.7h4v17.7h-4zM1493.8 339.7h4v17.7h-4zM1507.3 339.7h4v17.7h-4zM1525.3 339.7h4v17.7h-4zM1579.3 339.7h4v17.7h-4zM1583.8 339.7h4v17.7h-4zM1606.3 339.7h4v17.7h-4zM1619.8 339.7h4v17.7h-4zM1637.8 339.7h4v17.7h-4zM1642.3 339.7h4v17.7h-4zM1655.8 339.7h4v17.7h-4zM1673.8 339.7h4v17.7h-4zM1687.3 339.7h4v17.7h-4zM1723.3 339.7h4v17.7h-4zM1732.3 339.7h4v17.7h-4zM1745.8 339.7h4v17.7h-4zM166.6 359h4v17.7h-4zM261.1 359h4v17.7h-4zM270.1 359h4v17.7h-4zM364.6 359h4v17.7h-4zM378.1 359h4v17.7h-4zM625.5 359h4v17.7h-4zM634.5 359h4v17.7h-4zM639 359h4v17.7h-4zM666 359h4v17.7h-4zM720 359h4v17.7h-4zM724.5 359h4v17.7h-4zM778.5 359h4v17.7h-4zM783 359h4v17.7h-4zM900 359h4v17.7h-4zM909 359h4v17.7h-4zM958.4 359h4v17.7h-4zM962.9 359h4v17.7h-4zM967.4 359h4v17.7h-4zM1007.9 359h4v17.7h-4zM1061.9 359h4v17.7h-4zM1120.4 359h4v17.7h-4zM1165.4 359h4v17.7h-4zM1192.4 359h4v17.7h-4zM1205.9 359h4v17.7h-4zM1219.4 359h4v17.7h-4zM1300.4 359h4v17.7h-4zM1399.3 359h4v17.7h-4zM1417.3 359h4v17.7h-4zM1430.8 359h4v17.7h-4zM1448.8 359h4v17.7h-4zM1507.3 359h4v17.7h-4zM1543.3 359h4v17.7h-4zM1547.8 359h4v17.7h-4zM1624.3 359h4v17.7h-4zM1646.8 359h4v17.7h-4zM1651.3 359h4v17.7h-4zM1754.8 359h4v17.7h-4zM378.1 378.2h4v17.7h-4zM382.6 378.2h4v17.7h-4zM472.6 378.2h4v17.7h-4zM589.5 378.2h4v17.7h-4zM801 378.2h4v17.7h-4zM1003.4 378.2h4v17.7h-4zM1007.9 378.2h4v17.7h-4zM1331.9 378.2h4v17.7h-4zM1583.8 378.2h4v17.7h-4zM1610.8 378.2h4v17.7h-4zM1660.3 378.2h4v17.7h-4z"/>
<path fill="#f9f9b0" d="M162.1 320.5h4v17.7h-4zM198.1 320.5h4v17.7h-4zM238.6 320.5h4v17.7h-4zM247.6 320.5h4v17.7h-4zM270.1 320.5h4v17.7h-4zM279.1 320.5h4v17.7h-4zM283.6 320.5h4v17.7h-4zM297.1 320.5h4v17.7h-4zM315.1 320.5h4v17.7h-4zM423.1 320.5h4v17.7h-4zM427.6 320.5h4v17.7h-4zM468.1 320.5h4v17.7h-4zM513.1 320.5h4v17.7h-4zM522.1 320.5h4v17.7h-4zM544.6 320.5h4v17.7h-4zM580.5 320.5h4v17.7h-4zM612 320.5h4v17.7h-4zM630 320.5h4v17.7h-4zM643.5 320.5h4v17.7h-4zM684 320.5h4v17.7h-4zM742.5 320.5h4v17.7h-4zM765 320.5h4v17.7h-4zM792 320.5h4v17.7h-4zM814.5 320.5h4v17.7h-4zM819 320.5h4v17.7h-4zM846 320.5h4v17.7h-4zM859.5 320.5h4v17.7h-4zM877.5 320.5h4v17.7h-4zM891 320.5h4v17.7h-4zM927 320.5h4v17.7h-4zM940.5 320.5h4v17.7h-4zM1025.9 320.5h4v17.7h-4zM1039.4 320.5h4v17.7h-4zM1106.9 320.5h4v17.7h-4zM1115.9 320.5h4v17.7h-4zM1133.9 320.5h4v17.7h-4zM1196.9 320.5h4v17.7h-4zM1250.9 320.5h4v17.7h-4zM1277.9 320.5h4v17.7h-4zM1282.4 320.5h4v17.7h-4zM1295.9 320.5h4v17.7h-4zM1300.4 320.5h4v17.7h-4zM1327.4 320.5h4v17.7h-4zM1349.9 320.5h4v17.7h-4zM1367.8 320.5h4v17.7h-4zM1421.8 320.5h4v17.7h-4zM1444.3 320.5h4v17.7h-4zM1448.8 320.5h4v17.7h-4zM1475.8 320.5h4v17.7h-4zM1484.8 320.5h4v17.7h-4zM1498.3 320.5h4v17.7h-4zM1529.8 320.5h4v17.7h-4zM1570.3 320.5h4v17.7h-4zM1583.8 320.5h4v17.7h-4zM1727.8 320.5h4v17.7h-4zM1732.3 320.5h4v17.7h-4zM162.1 339.7h4v17.7h-4zM189.1 339.7h4v17.7h-4zM193.6 339.7h4v17.7h-4zM292.6 339.7h4v17.7h-4zM333.1 339.7h4v17.7h-4zM369.1 339.7h4v17.7h-4zM405.1 339.7h4v17.7h-4zM409.6 339.7h4v17.7h-4zM432.1 339.7h4v17.7h-4zM436.6 339.7h4v17.7h-4zM441.1 339.7h4v17.7h-4zM445.6 339.7h4v17.7h-4zM459.1 339.7h4v17.7h-4zM472.6 339.7h4v17.7h-4zM477.1 339.7h4v17.7h-4zM490.6 339.7h4v17.7h-4zM495.1 339.7h4v17.7h-4zM540.1 339.7h4v17.7h-4zM630 339.7h4v17.7h-4zM661.5 339.7h4v17.7h-4zM666 339.7h4v17.7h-4zM675 339.7h4v17.7h-4zM688.5 339.7h4v17.7h-4zM697.5 339.7h4v17.7h-4zM846 339.7h4v17.7h-4zM850.5 339.7h4v17.7h-4zM904.5 339.7h4v17.7h-4zM931.5 339.7h4v17.7h-4zM936 339.7h4v17.7h-4zM940.5 339.7h4v17.7h-4zM945 339.7h4v17.7h-4zM1007.9 339.7h4v17.7h-4zM1012.4 339.7h4v17.7h-4zM1021.4 339.7h4v17.7h-4zM1025.9 339.7h4v17.7h-4zM1106.9 339.7h4v17.7h-4zM1124.9 339.7h4v17.7h-4zM1133.9 339.7h4v17.7h-4zM1183.4 339.7h4v17.7h-4zM1205.9 339.7h4v17.7h-4zM1210.4 339.7h4v17.7h-4zM1214.9 339.7h4v17.7h-4zM1219.4 339.7h4v17.7h-4zM1223.9 339.7h4v17.7h-4zM1232.9 339.7h4v17.7h-4zM1259.9 339.7h4v17.7h-4zM1264.4 339.7h4v17.7h-4zM1277.9 339.7h4v17.7h-4zM1282.4 339.7h4v17.7h-4zM1304.9 339.7h4v17.7h-4zM1331.9 339.7h4v17.7h-4zM1354.4 339.7h4v17.7h-4zM1408.3 339.7h4v17.7h-4zM1466.8 339.7h4v17.7h-4zM1475.8 339.7h4v17.7h-4zM1511.8 339.7h4v17.7h-4zM1543.3 339.7h4v17.7h-4zM1552.3 339.7h4v17.7h-4zM1561.3 339.7h4v17.7h-4zM1664.8 339.7h4v17.7h-4zM1691.8 339.7h4v17.7h-4zM1700.8 339.7h4v17.7h-4zM207.1 359h4v17.7h-4zM216.1 359h4v17.7h-4zM252.1 359h4v17.7h-4zM279.1 359h4v17.7h-4zM297.1 359h4v17.7h-4zM310.6 359h4v17.7h-4zM319.6 359h4v17.7h-4zM445.6 359h4v17.7h-4zM486.1 359h4v17.7h-4zM504.1 359h4v17.7h-4zM567 359h4v17.7h-4zM589.5 359h4v17.7h-4zM603 359h4v17.7h-4zM630 359h4v17.7h-4zM643.5 359h4v17.7h-4zM670.5 359h4v17.7h-4zM675 359h4v17.7h-4zM684 359h4v17.7h-4zM715.5 359h4v17.7h-4zM729 359h4v17.7h-4zM819 359h4v17.7h-4zM832.5 359h4v17.7h-4zM855 359h4v17.7h-4zM864 359h4v17.7h-4zM913.5 359h4v17.7h-4zM985.4 359h4v17.7h-4zM989.9 359h4v17.7h-4zM994.4 359h4v17.7h-4zM1003.4 359h4v17.7h-4zM1016.9 359h4v17.7h-4zM1052.9 359h4v17.7h-4zM1066.4 359h4v17.7h-4zM1070.9 359h4v17.7h-4zM1093.4 359h4v17.7h-4zM1111.4 359h4v17.7h-4zM1151.9 359h4v17.7h-4zM1228.4 359h4v17.7h-4zM1237.4 359h4v17.7h-4zM1246.4 359h4v17.7h-4zM1268.9 359h4v17.7h-4zM1286.9 359h4v17.7h-4zM1309.4 359h4v17.7h-4zM1340.9 359h4v17.7h-4zM1367.8 359h4v17.7h-4zM1381.3 359h4v17.7h-4zM1385.8 359h4v17.7h-4zM1412.8 359h4v17.7h-4zM1435.3 359h4v17.7h-4zM1439.8 359h4v17.7h-4zM1471.3 359h4v17.7h-4zM1525.3 359h4v17.7h-4zM1534.3 359h4v17.7h-4zM1538.8 359h4v17.7h-4zM1556.8 359h4v17.7h-4zM1570.3 359h4v17.7h-4zM1597.3 359h4v17.7h-4zM1610.8 359h4v17.7h-4zM1628.8 359h4v17.7h-4zM1637.8 359h4v17.7h-4zM1655.8 359h4v17.7h-4zM1723.3 359h4v17.7h-4zM1727.8 359h4v17.7h-4zM1750.3 359h4v17.7h-4zM1759.3 359h4v17.7h-4zM1763.8 359h4v17.7h-4zM279.1 378.2h4v17.7h-4zM315.1 378.2h4v17.7h-4zM976.4 378.2h4v17.7h-4zM1327.4 378.2h4v17.7h-4zM1714.3 378.2h4v17.7h-4z"/>
<path fill="#e6f5a3" d="M166.6 320.5h4v17.7h-4zM211.6 320.5h4v17.7h-4zM220.6 320.5h4v17.7h-4zM225.1 320.5h4v17.7h-4zM234.1 320.5h4v17.7h-4zM261.1 320.5h4v17.7h-4zM301.6 320.5h4v17.7h-4zM328.6 320.5h4v17.7h-4zM333.1 320.5h4v17.7h-4zM355.6 320.5h4v17.7h-4zM360.1 320.5h4v17.7h-4zM369.1 320.5h4v17.7h-4zM391.6 320.5h4v17.7h-4zM396.1 320.5h4v17.7h-4zM409.6 320.5h4v17.7h-4zM414.1 320.5h4v17.7h-4zM459.1 320.5h4v17.7h-4zM472.6 320.5h4v17.7h-4zM495.1 320.5h4v17.7h-4zM540.1 320.5h4v17.7h-4zM549.1 320.5h4v17.7h-4zM603 320.5h4v17.7h-4zM634.5 320.5h4v17.7h-4zM639 320.5h4v17.7h-4zM648 320.5h4v17.7h-4zM679.5 320.5h4v17.7h-4zM702 320.5h4v17.7h-4zM729 320.5h4v17.7h-4zM733.5 320.5h4v17.7h-4zM738 320.5h4v17.7h-4zM778.5 320.5h4v17.7h-4zM783 320.5h4v17.7h-4zM796.5 320.5h4v17.7h-4zM801 320.5h4v17.7h-4zM837 320.5h4v17.7h-4zM850.5 320.5h4v17.7h-4zM855 320.5h4v17.7h-4zM864 320.5h4v17.7h-4zM868.5 320.5h4v17.7h-4zM882 320.5h4v17.7h-4zM904.5 320.5h4v17.7h-4zM909 320.5h4v17.7h-4zM918 320.5h4v17.7h-4zM922.5 320.5h4v17.7h-4zM945 320.5h4v17.7h-4zM962.9 320.5h4v17.7h-4zM967.4 320.5h4v17.7h-4zM1030.4 320.5h4v17.7h-4zM1061.9 320.5h4v17.7h-4zM1079.9 320.5h4v17.7h-4zM1124.9 320.5h4v17.7h-4zM1138.4 320.5h4v17.7h-4zM1142.9 320.5h4v17.7h-4zM1147.4 320.5h4v17.7h-4zM1151.9 320.5h4v17.7h-4zM1178.9 320.5h4v17.7h-4zM1205.9 320.5h4v17.7h-4zM1228.4 320.5h4v17.7h-4zM1237.4 320.5h4v17.7h-4zM1273.4 320.5h4v17.7h-4zM1304.9 320.5h4v17.7h-4zM1309.4 320.5h4v17.7h-4zM1381.3 320.5h4v17.7h-4zM1385.8 320.5h4v17.7h-4zM1439.8 320.5h4v17.7h-4zM1462.3 320.5h4v17.7h-4zM1502.8 320.5h4v17.7h-4zM1511.8 320.5h4v17.7h-4zM1516.3 320.5h4v17.7h-4zM1534.3 320.5h4v17.7h-4zM1543.3 320.5h4v17.7h-4zM1547.8 320.5h4v17.7h-4zM1592.8 320.5h4v17.7h-4zM1610.8 320.5h4v17.7h-4zM1664.8 320.5h4v17.7h-4zM1691.8 320.5h4v17.7h-4zM1705.3 320.5h4v17.7h-4zM1709.8 320.5h4v17.7h-4zM1718.8 320.5h4v17.7h-4zM1759.3 320.5h4v17.7h-4zM1763.8 320.5h4v17.7h-4zM180.1 339.7h4v17.7h-4zM207.1 339.7h4v17.7h-4zM216.1 339.7h4v17.7h-4zM238.6 339.7h4v17.7h-4zM247.6 339.7h4v17.7h-4zM261.1 339.7h4v17.7h-4zM265.6 339.7h4v17.7h-4zM279.1 339.7h4v17.7h-4zM297.1 339.7h4v17.7h-4zM315.1 339.7h4v17.7h-4zM319.6 339.7h4v17.7h-4zM324.1 339.7h4v17.7h-4zM373.6 339.7h4v17.7h-4zM414.1 339.7h4v17.7h-4zM463.6 339.7h4v17.7h-4zM468.1 339.7h4v17.7h-4zM522.1 339.7h4v17.7h-4zM535.6 339.7h4v17.7h-4zM549.1 339.7h4v17.7h-4zM616.5 339.7h4v17.7h-4zM648 339.7h4v17.7h-4zM657 339.7h4v17.7h-4zM720 339.7h4v17.7h-4zM756 339.7h4v17.7h-4zM814.5 339.7h4v17.7h-4zM819 339.7h4v17.7h-4zM823.5 339.7h4v17.7h-4zM832.5 339.7h4v17.7h-4zM859.5 339.7h4v17.7h-4zM895.5 339.7h4v17.7h-4zM927 339.7h4v17.7h-4zM971.9 339.7h4v17.7h-4zM985.4 339.7h4v17.7h-4zM1066.4 339.7h4v17.7h-4zM1088.9 339.7h4v17.7h-4zM1097.9 339.7h4v17.7h-4zM1102.4 339.7h4v17.7h-4zM1111.4 339.7h4v17.7h-4zM1192.4 339.7h4v17.7h-4zM1228.4 339.7h4v17.7h-4zM1237.4 339.7h4v17.7h-4zM1246.4 339.7h4v17.7h-4zM1268.9 339.7h4v17.7h-4zM1286.9 339.7h4v17.7h-4zM1322.9 339.7h4v17.7h-4zM1327.4 339.7h4v17.7h-4zM1399.3 339.7h4v17.7h-4zM1403.8 339.7h4v17.7h-4zM1412.8 339.7h4v17.7h-4zM1426.3 339.7h4v17.7h-4zM1457.8 339.7h4v17.7h-4zM1462.3 339.7h4v17.7h-4zM1498.3 339.7h4v17.7h-4zM1574.8 339.7h4v17.7h-4zM1588.3 339.7h4v17.7h-4zM1592.8 339.7h4v17.7h-4zM1615.3 339.7h4v17.7h-4zM1624.3 339.7h4v17.7h-4zM1660.3 339.7h4v17.7h-4zM1678.3 339.7h4v17.7h-4zM1718.8 339.7h4v17.7h-4zM1750.3 339.7h4v17.7h-4zM1754.8 339.7h4v17.7h-4zM184.6 359h4v17.7h-4zM211.6 359h4v17.7h-4zM342.1 359h4v17.7h-4zM351.1 359h4v17.7h-4zM454.6 359h4v17.7h-4zM459.1 359h4v17.7h-4zM648 359h4v17.7h-4zM693 359h4v17.7h-4zM859.5 359h4v17.7h-4zM904.5 359h4v17.7h-4zM918 359h4v17.7h-4zM976.4 359h4v17.7h-4zM1039.4 359h4v17.7h-4zM1084.4 359h4v17.7h-4zM1088.9 359h4v17.7h-4zM1133.9 359h4v17.7h-4zM1183.4 359h4v17.7h-4zM1187.9 359h4v17.7h-4zM1223.9 359h4v17.7h-4zM1232.9 359h4v17.7h-4zM1304.9 359h4v17.7h-4zM1372.3 359h4v17.7h-4zM1403.8 359h4v17.7h-4zM1732.3 359h4v17.7h-4zM247.6 378.2h4v17.7h-4zM418.6 378.2h4v17.7h-4zM463.6 378.2h4v17.7h-4zM468.1 378.2h4v17.7h-4zM666 378.2h4v17.7h-4zM778.5 378.2h4v17.7h-4zM1147.4 378.2h4v17.7h-4zM1151.9 378.2h4v17.7h-4zM1268.9 378.2h4v17.7h-4zM1475.8 378.2h4v17.7h-4zM1511.8 378.2h4v17.7h-4zM1534.3 378.2h4v17.7h-4zM1588.3 378.2h4v17.7h-4zM1696.3 378.2h4v17.7h-4zM1718.8 378.2h4v17.7h-4z"/>
<path fill="#d5ee9f" d="M171.1 320.5h4v17.7h-4zM229.6 320.5h4v17.7h-4zM252.1 320.5h4v17.7h-4zM319.6 320.5h4v17.7h-4zM324.1 320.5h4v17.7h-4zM373.6 320.5h4v17.7h-4zM382.6 320.5h4v17.7h-4zM405.1 320.5h4v17.7h-4zM418.6 320.5h4v17.7h-4zM436.6 320.5h4v17.7h-4zM463.6 320.5h4v17.7h-4zM481.6 320.5h4v17.7h-4zM562.5 320.5h4v17.7h-4zM585 320.5h4v17.7h-4zM607.5 320.5h4v17.7h-4zM621 320.5h4v17.7h-4zM670.5 320.5h4v17.7h-4zM675 320.5h4v17.7h-4zM697.5 320.5h4v17.7h-4zM706.5 320.5h4v17.7h-4zM805.5 320.5h4v17.7h-4zM936 320.5h4v17.7h-4zM994.4 320.5h4v17.7h-4zM1007.9 320.5h4v17.7h-4zM1048.4 320.5h4v17.7h-4zM1057.4 320.5h4v17.7h-4zM1088.9 320.5h4v17.7h-4zM1097.9 320.5h4v17.7h-4zM1156.4 320.5h4v17.7h-4zM1201.4 320.5h4v17.7h-4zM1246.4 320.5h4v17.7h-4zM1255.4 320.5h4v17.7h-4zM1331.9 320.5h4v17.7h-4zM1358.9 320.5h4v17.7h-4zM1394.8 320.5h4v17.7h-4zM1399.3 320.5h4v17.7h-4zM1417.3 320.5h4v17.7h-4zM1480.3 320.5h4v17.7h-4zM1561.3 320.5h4v17.7h-4zM1628.8 320.5h4v17.7h-4zM1723.3 320.5h4v17.7h-4zM148.7 339.7h4v17.7h-4zM211.6 339.7h4v17.7h-4zM283.6 339.7h4v17.7h-4zM301.6 339.7h4v17.7h-4zM306.1 339.7h4v17.7h-4zM351.1 339.7h4v17.7h-4zM355.6 339.7h4v17.7h-4zM364.6 339.7h4v17.7h-4zM504.1 339.7h4v17.7h-4zM508.6 339.7h4v17.7h-4zM513.1 339.7h4v17.7h-4zM531.1 339.7h4v17.7h-4zM558 339.7h4v17.7h-4zM562.5 339.7h4v17.7h-4zM567 339.7h4v17.7h-4zM607.5 339.7h4v17.7h-4zM639 339.7h4v17.7h-4zM733.5 339.7h4v17.7h-4zM742.5 339.7h4v17.7h-4zM760.5 339.7h4v17.7h-4zM765 339.7h4v17.7h-4zM828 339.7h4v17.7h-4zM891 339.7h4v17.7h-4zM913.5 339.7h4v17.7h-4zM922.5 339.7h4v17.7h-4zM958.4 339.7h4v17.7h-4zM962.9 339.7h4v17.7h-4zM967.4 339.7h4v17.7h-4zM980.9 339.7h4v17.7h-4zM1048.4 339.7h4v17.7h-4zM1070.9 339.7h4v17.7h-4zM1115.9 339.7h4v17.7h-4zM1138.4 339.7h4v17.7h-4zM1147.4 339.7h4v17.7h-4zM1151.9 339.7h4v17.7h-4zM1156.4 339.7h4v17.7h-4zM1241.9 339.7h4v17.7h-4zM1318.4 339.7h4v17.7h-4zM1345.4 339.7h4v17.7h-4zM1444.3 339.7h4v17.7h-4zM1480.3 339.7h4v17.7h-4zM1529.8 339.7h4v17.7h-4zM1538.8 339.7h4v17.7h-4zM1597.3 339.7h4v17.7h-4zM1601.8 339.7h4v17.7h-4zM1651.3 339.7h4v17.7h-4zM1682.8 339.7h4v17.7h-4zM1741.3 339.7h4v17.7h-4zM1763.8 339.7h4v17.7h-4zM450.1 359h4v17.7h-4zM607.5 359h4v17.7h-4zM612 359h4v17.7h-4zM616.5 359h4v17.7h-4zM621 359h4v17.7h-4zM657 359h4v17.7h-4zM823.5 359h4v17.7h-4zM828 359h4v17.7h-4zM1043.9 359h4v17.7h-4zM1363.4 359h4v17.7h-4zM1394.8 359h4v17.7h-4zM1489.3 359h4v17.7h-4zM1493.8 359h4v17.7h-4zM1529.8 359h4v17.7h-4zM1615.3 359h4v17.7h-4zM157.6 378.2h4v17.7h-4zM166.6 378.2h4v17.7h-4zM229.6 378.2h4v17.7h-4zM301.6 378.2h4v17.7h-4zM387.1 378.2h4v17.7h-4zM396.1 378.2h4v17.7h-4zM522.1 378.2h4v17.7h-4zM598.5 378.2h4v17.7h-4zM652.5 378.2h4v17.7h-4zM697.5 378.2h4v17.7h-4zM742.5 378.2h4v17.7h-4zM787.5 378.2h4v17.7h-4zM814.5 378.2h4v17.7h-4zM864 378.2h4v17.7h-4zM971.9 378.2h4v17.7h-4zM985.4 378.2h4v17.7h-4zM989.9 378.2h4v17.7h-4zM1016.9 378.2h4v17.7h-4zM1021.4 378.2h4v17.7h-4zM1030.4 378.2h4v17.7h-4zM1043.9 378.2h4v17.7h-4zM1093.4 378.2h4v17.7h-4zM1196.9 378.2h4v17.7h-4zM1255.4 378.2h4v17.7h-4zM1403.8 378.2h4v17.7h-4zM1421.8 378.2h4v17.7h-4zM1435.3 378.2h4v17.7h-4zM1480.3 378.2h4v17.7h-4zM1516.3 378.2h4v17.7h-4zM1592.8 378.2h4v17.7h-4zM1651.3 378.2h4v17.7h-4zM1664.8 378.2h4v17.7h-4zM1700.8 378.2h4v17.7h-4z"/>
<path fill="#fedc8c" d="M288.1 320.5h4v17.7h-4zM499.6 320.5h4v17.7h-4zM517.6 320.5h4v17.7h-4zM895.5 320.5h4v17.7h-4zM1214.9 320.5h4v17.7h-4zM270.1 339.7h4v17.7h-4zM396.1 339.7h4v17.7h-4zM783 339.7h4v17.7h-4zM873 339.7h4v17.7h-4zM1120.4 339.7h4v17.7h-4zM1169.9 339.7h4v17.7h-4zM1174.4 339.7h4v17.7h-4zM1516.3 339.7h4v17.7h-4zM1669.3 339.7h4v17.7h-4zM189.1 359h4v17.7h-4zM225.1 359h4v17.7h-4zM247.6 359h4v17.7h-4zM306.1 359h4v17.7h-4zM337.6 359h4v17.7h-4zM346.6 359h4v17.7h-4zM360.1 359h4v17.7h-4zM382.6 359h4v17.7h-4zM391.6 359h4v17.7h-4zM400.6 359h4v17.7h-4zM418.6 359h4v17.7h-4zM427.6 359h4v17.7h-4zM477.1 359h4v17.7h-4zM535.6 359h4v17.7h-4zM549.1 359h4v17.7h-4zM553.5 359h4v17.7h-4zM558 359h4v17.7h-4zM571.5 359h4v17.7h-4zM594 359h4v17.7h-4zM661.5 359h4v17.7h-4zM711 359h4v17.7h-4zM756 359h4v17.7h-4zM792 359h4v17.7h-4zM850.5 359h4v17.7h-4zM873 359h4v17.7h-4zM922.5 359h4v17.7h-4zM927 359h4v17.7h-4zM945 359h4v17.7h-4zM954 359h4v17.7h-4zM998.9 359h4v17.7h-4zM1048.4 359h4v17.7h-4zM1075.4 359h4v17.7h-4zM1174.4 359h4v17.7h-4zM1178.9 359h4v17.7h-4zM1466.8 359h4v17.7h-4zM1475.8 359h4v17.7h-4zM1502.8 359h4v17.7h-4zM1520.8 359h4v17.7h-4zM1565.8 359h4v17.7h-4zM1574.8 359h4v17.7h-4zM1583.8 359h4v17.7h-4zM1687.3 359h4v17.7h-4zM1696.3 359h4v17.7h-4zM1700.8 359h4v17.7h-4zM1705.3 359h4v17.7h-4zM1714.3 359h4v17.7h-4zM1718.8 359h4v17.7h-4zM1741.3 359h4v17.7h-4z"/>
<path fill="#fecc7b" d="M558 320.5h4v17.7h-4zM1682.8 320.5h4v17.7h-4zM1687.3 320.5h4v17.7h-4zM387.1 339.7h4v17.7h-4zM481.6 339.7h4v17.7h-4zM486.1 339.7h4v17.7h-4zM148.7 359h4v17.7h-4zM238.6 359h4v17.7h-4zM387.1 359h4v17.7h-4zM409.6 359h4v17.7h-4zM423.1 359h4v17.7h-4zM481.6 359h4v17.7h-4zM495.1 359h4v17.7h-4zM499.6 359h4v17.7h-4zM513.1 359h4v17.7h-4zM517.6 359h4v17.7h-4zM576 359h4v17.7h-4zM760.5 359h4v17.7h-4zM868.5 359h4v17.7h-4zM1156.4 359h4v17.7h-4zM1273.4 359h4v17.7h-4zM1277.9 359h4v17.7h-4zM1318.4 359h4v17.7h-4zM1327.4 359h4v17.7h-4zM1462.3 359h4v17.7h-4zM1579.3 359h4v17.7h-4zM1606.3 359h4v17.7h-4zM1745.8 359h4v17.7h-4z"/>
<path fill="#91d3a4" d="M567 320.5h4v17.7h-4zM1169.9 320.5h4v17.7h-4zM1183.4 320.5h4v17.7h-4zM1313.9 320.5h4v17.7h-4zM1336.4 320.5h4v17.7h-4zM1340.9 320.5h4v17.7h-4zM1376.8 320.5h4v17.7h-4zM1507.3 320.5h4v17.7h-4zM1597.3 320.5h4v17.7h-4zM1736.8 320.5h4v17.7h-4zM310.6 339.7h4v17.7h-4zM360.1 339.7h4v17.7h-4zM517.6 339.7h4v17.7h-4zM153.1 378.2h4v17.7h-4zM162.1 378.2h4v17.7h-4zM180.1 378.2h4v17.7h-4zM207.1 378.2h4v17.7h-4zM216.1 378.2h4v17.7h-4zM252.1 378.2h4v17.7h-4zM265.6 378.2h4v17.7h-4zM297.1 378.2h4v17.7h-4zM328.6 378.2h4v17.7h-4zM342.1 378.2h4v17.7h-4zM409.6 378.2h4v17.7h-4zM414.1 378.2h4v17.7h-4zM450.1 378.2h4v17.7h-4zM486.1 378.2h4v17.7h-4zM495.1 378.2h4v17.7h-4zM517.6 378.2h4v17.7h-4zM535.6 378.2h4v17.7h-4zM675 378.2h4v17.7h-4zM693 378.2h4v17.7h-4zM702 378.2h4v17.7h-4zM711 378.2h4v17.7h-4zM792 378.2h4v17.7h-4zM805.5 378.2h4v17.7h-4zM868.5 378.2h4v17.7h-4zM882 378.2h4v17.7h-4zM980.9 378.2h4v17.7h-4zM1034.9 378.2h4v17.7h-4zM1039.4 378.2h4v17.7h-4zM1106.9 378.2h4v17.7h-4zM1111.4 378.2h4v17.7h-4zM1115.9 378.2h4v17.7h-4zM1120.4 378.2h4v17.7h-4zM1133.9 378.2h4v17.7h-4zM1138.4 378.2h4v17.7h-4zM1165.4 378.2h4v17.7h-4zM1183.4 378.2h4v17.7h-4zM1187.9 378.2h4v17.7h-4zM1205.9 378.2h4v17.7h-4zM1214.9 378.2h4v17.7h-4zM1250.9 378.2h4v17.7h-4zM1273.4 378.2h4v17.7h-4zM1322.9 378.2h4v17.7h-4zM1349.9 378.2h4v17.7h-4zM1354.4 378.2h4v17.7h-4zM1439.8 378.2h4v17.7h-4zM1466.8 378.2h4v17.7h-4zM1471.3 378.2h4v17.7h-4zM1520.8 378.2h4v17.7h-4zM1579.3 378.2h4v17.7h-4zM1606.3 378.2h4v17.7h-4zM1619.8 378.2h4v17.7h-4zM1678.3 378.2h4v17.7h-4zM1741.3 378.2h4v17.7h-4zM1750.3 378.2h4v17.7h-4zM1754.8 378.2h4v17.7h-4zM1759.3 378.2h4v17.7h-4z"/>
<path fill="#fdb86c" d="M229.6 359h4v17.7h-4zM396.1 359h4v17.7h-4zM490.6 359h4v17.7h-4zM508.6 359h4v17.7h-4zM526.6 359h4v17.7h-4zM531.1 359h4v17.7h-4zM540.1 359h4v17.7h-4zM841.5 359h4v17.7h-4zM1102.4 359h4v17.7h-4zM1255.4 359h4v17.7h-4zM1313.9 359h4v17.7h-4zM1322.9 359h4v17.7h-4zM1331.9 359h4v17.7h-4zM1336.4 359h4v17.7h-4z"/>
<text class="ha" x="138.2" y="95.6" text-anchor="end">+Inf</text>
<text class="ha" x="138.2" y="114.9" text-anchor="end">4.4 min</text>
<text class="ha" x="138.2" y="134.1" text-anchor="end">2.2 min</text>
<text class="ha" x="138.2" y="153.4" text-anchor="end">1.1 min</text>
<text class="ha" x="138.2" y="172.7" text-anchor="end">32.8 s</text>
<text class="ha" x="138.2" y="191.9" text-anchor="end">16.4 s</text>
<text class="ha" x="138.2" y="211.2" text-anchor="end">8.2 s</text>
<text class="ha" x="138.2" y="230.4" text-anchor="end">4.1 s</text>
<text class="ha" x="138.2" y="249.7" text-anchor="end">2.0 s</text>
<text class="ha" x="138.2" y="269" text-anchor="end">1.0 s</text>
<text class="ha" x="138.2" y="288.2" text-anchor="end">512.0 ms</text>
<text class="ha" x="138.2" y="307.5" text-anchor="end">256.0 ms</text>
<text class="ha" x="138.2" y="326.8" text-anchor="end">128.0 ms</text>
<text class="ha" x="138.2" y="346" text-anchor="end">64.0 ms</text>
<text class="ha" x="138.2" y="365.3" text-anchor="end">32.0 ms</text>
<text class="ha" x="138.2" y="384.5" text-anchor="end">16.0 ms</text>
<text class="ha" x="138.2" y="403.8" text-anchor="end">8.0 ms</text>
<text class="ha" x="138.2" y="423.1" text-anchor="end">4.0 ms</text>
<text class="ha" x="138.2" y="442.3" text-anchor="end">2.0 ms</text>
<text class="ha" x="294" y="489.6" text-anchor="middle">14:00</text>
<text class="ha" x="563.9" y="489.6" text-anchor="middle">14:30</text>
<text class="ha" x="833.8" y="489.6" text-anchor="middle">15:00</text>
<text class="ha" x="1103.8" y="489.6" text-anchor="middle">15:30</text>
<text class="ha" x="1373.7" y="489.6" text-anchor="middle">16:00</text>
<text class="ha" x="1643.6" y="489.6" text-anchor="middle">16:30</text>
<rect x="96" y="502" width="20" height="12" fill="#447ab3"/>
<rect x="116" y="502" width="20" height="12" fill="#438eb4"/>
<rect x="136" y="502" width="20" height="12" fill="#4ca1b1"/>
<rect x="156" y="502" width="20" height="12" fill="#5cb3ac"/>
<rect x="176" y="502" width="20" height="12" fill="#70c2a7"/>
<rect x="196" y="502" width="20" height="12" fill="#86cea5"/>
<rect x="216" y="502" width="21" height="12" fill="#9dd7a3"/>
<rect x="237" y="502" width="20" height="12" fill="#b3e0a1"/>
<rect x="257" y="502" width="20" height="12" fill="#c7e89f"/>
<rect x="277" y="502" width="20" height="12" fill="#d9f09f"/>
<rect x="297" y="502" width="20" height="12" fill="#e7f5a4"/>
<rect x="317" y="502" width="20" height="12" fill="#f2f9ab"/>
<rect x="337" y="502" width="20" height="12" fill="#f9f9b0"/>
<rect x="357" y="502" width="20" height="12" fill="#fdf5ad"/>
<rect x="377" y="502" width="20" height="12" fill="#feeda1"/>
<rect x="397" y="502" width="20" height="12" fill="#fee192"/>
<rect x="417" y="502" width="20" height="12" fill="#fed382"/>
<rect x="437" y="502" width="20" height="12" fill="#fdc373"/>
<rect x="457" y="502" width="20" height="12" fill="#fcb066"/>
<rect x="477" y="502" width="20" height="12" fill="#fa9c5a"/>
<rect x="497" y="502" width="21" height="12" fill="#f78751"/>
<rect x="518" y="502" width="20" height="12" fill="#f1734b"/>
<rect x="538" y="502" width="20" height="12" fill="#ea6149"/>
<rect x="558" y="502" width="20" height="12" fill="#df4f4a"/>
<rect x="578" y="502" width="20" height="12" fill="#d23d4b"/>
<rect x="598" y="502" width="20" height="12" fill="#c22a4a"/>
<rect x="618" y="502" width="20" height="12" fill="#b11646"/>
<text class="ha" x="272.9" y="535.9" text-anchor="middle">5</text>
<text class="ha" x="493.5" y="535.9" text-anchor="middle">10</text>
<text class="ha" x="637" y="535.9" text-anchor="middle">13</text>
</g>
<g class="heat" id="heat5">
<path d="M148.4 1208h1619.6v2h-1619.6zM148.4 1225h1619.6v2h-1619.6zM148.4 1243h1619.6v2h-1619.6zM148.4 1260h1619.6v2h-1619.6zM148.4 1278h1619.6v2h-1619.6zM148.4 1295h1619.6v2h-1619.6zM148.4 1313h1619.6v2h-1619.6zM148.4 1330h1619.6v2h-1619.6zM148.4 1347h1619.6v2h-1619.6zM148.4 1365h1619.6v2h-1619.6zM148.4 1382h1619.6v2h-1619.6zM148.4 1400h1619.6v2h-1619.6zM148.4 1417h1619.6v2h-1619.6zM148.4 1435h1619.6v2h-1619.6zM148.4 1452h1619.6v2h-1619.6zM148.4 1469h1619.6v2h-1619.6zM148.4 1487h1619.6v2h-1619.6zM148.4 1504h1619.6v2h-1619.6zM148.4 1522h1619.6v2h-1619.6zM148.4 1539h1619.6v2h-1619.6zM148.4 1557h1619.6v2h-1619.6zM148.4 1574h1619.6v2h-1619.6z" fill="rgba(200,200,200,0.255)"/>
<path d="M293 1208h2v367h-2zM563 1208h2v367h-2zM833 1208h2v367h-2zM1103 1208h2v367h-2zM1373 1208h2v367h-2zM1643 1208h2v367h-2z" fill="rgba(200,200,200,0.255)"/>
<path fill="#e04f4a" d="M148.7 1557.9h4v15.8h-4zM153.1 1557.9h4v15.8h-4zM162.1 1557.9h4v15.8h-4zM166.6 1557.9h4v15.8h-4zM175.6 1557.9h4v15.8h-4zM184.6 1557.9h4v15.8h-4zM207.1 1557.9h4v15.8h-4zM220.6 1557.9h4v15.8h-4zM234.1 1557.9h4v15.8h-4zM256.6 1557.9h4v15.8h-4zM265.6 1557.9h4v15.8h-4zM270.1 1557.9h4v15.8h-4zM274.6 1557.9h4v15.8h-4zM279.1 1557.9h4v15.8h-4zM283.6 1557.9h4v15.8h-4zM288.1 1557.9h4v15.8h-4zM292.6 1557.9h4v15.8h-4zM297.1 1557.9h4v15.8h-4zM301.6 1557.9h4v15.8h-4zM306.1 1557.9h4v15.8h-4zM310.6 1557.9h4v15.8h-4zM319.6 1557.9h4v15.8h-4zM328.6 1557.9h4v15.8h-4zM333.1 1557.9h4v15.8h-4zM337.6 1557.9h4v15.8h-4zM342.1 1557.9h4v15.8h-4zM346.6 1557.9h4v15.8h-4zM364.6 1557.9h4v15.8h-4zM369.1 1557.9h4v15.8h-4zM378.1 1557.9h4v15.8h-4zM396.1 1557.9h4v15.8h-4zM400.6 1557.9h4v15.8h-4zM414.1 1557.9h4v15.8h-4zM418.6 1557.9h4v15.8h-4zM427.6 1557.9h4v15.8h-4zM436.6 1557.9h4v15.8h-4zM441.1 1557.9h4v15.8h-4zM450.1 1557.9h4v15.8h-4zM459.1 1557.9h4v15.8h-4zM468.1 1557.9h4v15.8h-4zM477.1 1557.9h4v15.8h-4zM490.6 1557.9h4v15.8h-4zM495.1 1557.9h4v15.8h-4zM535.6 1557.9h4v15.8h-4zM540.1 1557.9h4v15.8h-4zM553.5 1557.9h4v15.8h-4zM558 1557.9h4v15.8h-4zM562.5 1557.9h4v15.8h-4zM576 1557.9h4v15.8h-4zM580.5 1557.9h4v15.8h-4zM589.5 1557.9h4v15.8h-4zM594 1557.9h4v15.8h-4zM603 1557.9h4v15.8h-4zM612 1557.9h4v15.8h-4zM616.5 1557.9h4v15.8h-4zM634.5 1557.9h4v15.8h-4zM639 1557.9h4v15.8h-4zM643.5 1557.9h4v15.8h-4zM652.5 1557.9h4v15.8h-4zM657 1557.9h4v15.8h-4zM684 1557.9h4v15.8h-4zM697.5 1557.9h4v15.8h-4zM751.5 1557.9h4v15.8h-4zM792 1557.9h4v15.8h-4zM801 1557.9h4v15.8h-4zM805.5 1557.9h4v15.8h-4zM810 1557.9h4v15.8h-4zM823.5 1557.9h4v15.8h-4zM828 1557.9h4v15.8h-4zM837 1557.9h4v15.8h-4zM841.5 1557.9h4v15.8h-4zM846 1557.9h4v15.8h-4zM864 1557.9h4v15.8h-4zM873 1557.9h4v15.8h-4zM877.5 1557.9h4v15.8h-4zM882 1557.9h4v15.8h-4zM891 1557.9h4v15.8h-4zM900 1557.9h4v15.8h-4zM904.5 1557.9h4v15.8h-4zM913.5 1557.9h4v15.8h-4zM931.5 1557.9h4v15.8h-4zM936 1557.9h4v15.8h-4zM940.5 1557.9h4v15.8h-4zM949.5 1557.9h4v15.8h-4zM958.4 1557.9h4v15.8h-4zM967.4 1557.9h4v15.8h-4zM971.9 1557.9h4v15.8h-4zM985.4 1557.9h4v15.8h-4zM989.9 1557.9h4v15.8h-4zM1003.4 1557.9h4v15.8h-4zM1016.9 1557.9h4v15.8h-4zM1025.9 1557.9h4v15.8h-4zM1030.4 1557.9h4v15.8h-4zM1034.9 1557.9h4v15.8h-4zM1070.9 1557.9h4v15.8h-4zM1079.9 1557.9h4v15.8h-4zM1084.4 1557.9h4v15.8h-4zM1093.4 1557.9h4v15.8h-4zM1106.9 1557.9h4v15.8h-4zM1111.4 1557.9h4v15.8h-4zM1129.4 1557.9h4v15.8h-4zM1156.4 1557.9h4v15.8h-4zM1160.9 1557.9h4v15.8h-4zM1169.9 1557.9h4v15.8h-4zM1174.4 1557.9h4v15.8h-4zM1178.9 1557.9h4v15.8h-4zM1183.4 1557.9h4v15.8h-4zM1196.9 1557.9h4v15.8h-4zM1201.4 1557.9h4v15.8h-4zM1205.9 1557.9h4v15.8h-4zM1214.9 1557.9h4v15.8h-4zM1237.4 1557.9h4v15.8h-4zM1268.9 1557.9h4v15.8h-4zM1273.4 1557.9h4v15.8h-4zM1300.4 1557.9h4v15.8h-4zM1309.4 1557.9h4v15.8h-4zM1313.9 1557.9h4v15.8h-4zM1318.4 1557.9h4v15.8h-4zM1322.9 1557.9h4v15.8h-4zM1327.4 1557.9h4v15.8h-4zM1340.9 1557.9h4v15.8h-4zM1345.4 1557.9h4v15.8h-4zM1354.4 1557.9h4v15.8h-4zM1358.9 1557.9h4v15.8h-4zM1363.4 1557.9h4v15.8h-4zM1367.8 1557.9h4v15.8h-4zM1390.3 1557.9h4v15.8h-4zM1394.8 1557.9h4v15.8h-4zM1408.3 1557.9h4v15.8h-4zM1421.8 1557.9h4v15.8h-4zM1430.8 1557.9h4v15.8h-4zM1439.8 1557.9h4v15.8h-4zM1448.8 1557.9h4v15.8h-4zM1471.3 1557.9h4v15.8h-4zM1475.8 1557.9h4v15.8h-4zM1480.3 1557.9h4v15.8h-4zM1484.8 1557.9h4v15.8h-4zM1489.3 1557.9h4v15.8h-4zM1493.8 1557.9h4v15.8h-4zM1498.3 1557.9h4v15.8h-4zM1516.3 1557.9h4v15.8h-4zM1547.8 1557.9h4v15.8h-4zM1552.3 1557.9h4v15.8h-4zM1565.8 1557.9h4v15.8h-4zM1601.8 1557.9h4v15.8h-4zM1615.3 1557.9h4v15.8h-4zM1619.8 1557.9h4v15.8h-4zM1633.3 1557.9h4v15.8h-4zM1637.8 1557.9h4v15.8h-4zM1651.3 1557.9h4v15.8h-4zM1655.8 1557.9h4v15.8h-4zM1660.3 1557.9h4v15.8h-4zM1664.8 1557.9h4v15.8h-4zM1678.3 1557.9h4v15.8h-4zM1687.3 1557.9h4v15.8h-4zM1700.8 1557.9h4v15.8h-4zM1709.8 1557.9h4v15.8h-4zM1714.3 1557.9h4v15.8h-4zM1727.8 1557.9h4v15.8h-4zM1741.3 1557.9h4v15.8h-4zM1745.8 1557.9h4v15.8h-4zM1750.3 1557.9h4v15.8h-4zM1754.8 1557.9h4v15.8h-4zM1759.3 1557.9h4v15.8h-4z"/>
<path fill="#ba2048" d="M157.6 1557.9h4v15.8h-4zM225.1 1557.9h4v15.8h-4zM405.1 1557.9h4v15.8h-4zM472.6 1557.9h4v15.8h-4zM630 1557.9h4v15.8h-4zM675 1557.9h4v15.8h-4zM760.5 1557.9h4v15.8h-4zM774 1557.9h4v15.8h-4zM778.5 1557.9h4v15.8h-4zM783 1557.9h4v15.8h-4zM787.5 1557.9h4v15.8h-4zM850.5 1557.9h4v15.8h-4zM1088.9 1557.9h4v15.8h-4zM1502.8 1557.9h4v15.8h-4zM1570.3 1557.9h4v15.8h-4zM1732.3 1557.9h4v15.8h-4z"/>
<path fill="#cf394b" d="M171.1 1557.9h4v15.8h-4zM261.1 1557.9h4v15.8h-4zM315.1 1557.9h4v15.8h-4zM324.1 1557.9h4v15.8h-4zM351.1 1557.9h4v15.8h-4zM355.6 1557.9h4v15.8h-4zM360.1 1557.9h4v15.8h-4zM373.6 1557.9h4v15.8h-4zM409.6 1557.9h4v15.8h-4zM423.1 1557.9h4v15.8h-4zM445.6 1557.9h4v15.8h-4zM508.6 1557.9h4v15.8h-4zM513.1 1557.9h4v15.8h-4zM517.6 1557.9h4v15.8h-4zM522.1 1557.9h4v15.8h-4zM526.6 1557.9h4v15.8h-4zM531.1 1557.9h4v15.8h-4zM598.5 1557.9h4v15.8h-4zM621 1557.9h4v15.8h-4zM688.5 1557.9h4v15.8h-4zM693 1557.9h4v15.8h-4zM756 1557.9h4v15.8h-4zM765 1557.9h4v15.8h-4zM769.5 1557.9h4v15.8h-4zM855 1557.9h4v15.8h-4zM922.5 1557.9h4v15.8h-4zM927 1557.9h4v15.8h-4zM1007.9 1557.9h4v15.8h-4zM1012.4 1557.9h4v15.8h-4zM1039.4 1557.9h4v15.8h-4zM1043.9 1557.9h4v15.8h-4zM1048.4 1557.9h4v15.8h-4zM1075.4 1557.9h4v15.8h-4zM1124.9 1557.9h4v15.8h-4zM1151.9 1557.9h4v15.8h-4zM1277.9 1557.9h4v15.8h-4zM1282.4 1557.9h4v15.8h-4zM1286.9 1557.9h4v15.8h-4zM1291.4 1557.9h4v15.8h-4zM1295.9 1557.9h4v15.8h-4zM1304.9 1557.9h4v15.8h-4zM1349.9 1557.9h4v15.8h-4zM1381.3 1557.9h4v15.8h-4zM1399.3 1557.9h4v15.8h-4zM1507.3 1557.9h4v15.8h-4zM1511.8 1557.9h4v15.8h-4zM1520.8 1557.9h4v15.8h-4zM1525.3 1557.9h4v15.8h-4zM1538.8 1557.9h4v15.8h-4zM1543.3 1557.9h4v15.8h-4zM1556.8 1557.9h4v15.8h-4zM1561.3 1557.9h4v15.8h-4zM1574.8 1557.9h4v15.8h-4zM1646.8 1557.9h4v15.8h-4zM1718.8 1557.9h4v15.8h-4zM1736.8 1557.9h4v15.8h-4z"/>
<path fill="#ec6649" d="M180.1 1557.9h4v15.8h-4zM189.1 1557.9h4v15.8h-4zM193.6 1557.9h4v15.8h-4zM198.1 1557.9h4v15.8h-4zM202.6 1557.9h4v15.8h-4zM211.6 1557.9h4v15.8h-4zM216.1 1557.9h4v15.8h-4zM229.6 1557.9h4v15.8h-4zM238.6 1557.9h4v15.8h-4zM243.1 1557.9h4v15.8h-4zM247.6 1557.9h4v15.8h-4zM252.1 1557.9h4v15.8h-4zM382.6 1557.9h4v15.8h-4zM387.1 1557.9h4v15.8h-4zM391.6 1557.9h4v15.8h-4zM432.1 1557.9h4v15.8h-4zM481.6 1557.9h4v15.8h-4zM499.6 1557.9h4v15.8h-4zM504.1 1557.9h4v15.8h-4zM544.6 1557.9h4v15.8h-4zM549.1 1557.9h4v15.8h-4zM567 1557.9h4v15.8h-4zM571.5 1557.9h4v15.8h-4zM585 1557.9h4v15.8h-4zM607.5 1557.9h4v15.8h-4zM625.5 1557.9h4v15.8h-4zM648 1557.9h4v15.8h-4zM670.5 1557.9h4v15.8h-4zM679.5 1557.9h4v15.8h-4zM702 1557.9h4v15.8h-4zM715.5 1557.9h4v15.8h-4zM729 1557.9h4v15.8h-4zM733.5 1557.9h4v15.8h-4zM738 1557.9h4v15.8h-4zM742.5 1557.9h4v15.8h-4zM747 1557.9h4v15.8h-4zM796.5 1557.9h4v15.8h-4zM814.5 1557.9h4v15.8h-4zM832.5 1557.9h4v15.8h-4zM859.5 1557.9h4v15.8h-4zM868.5 1557.9h4v15.8h-4zM886.5 1557.9h4v15.8h-4zM895.5 1557.9h4v15.8h-4zM909 1557.9h4v15.8h-4zM918 1557.9h4v15.8h-4zM954 1557.9h4v15.8h-4zM962.9 1557.9h4v15.8h-4zM976.4 1557.9h4v15.8h-4zM980.9 1557.9h4v15.8h-4zM994.4 1557.9h4v15.8h-4zM998.9 1557.9h4v15.8h-4zM1021.4 1557.9h4v15.8h-4zM1052.9 1557.9h4v15.8h-4zM1057.4 1557.9h4v15.8h-4zM1066.4 1557.9h4v15.8h-4zM1097.9 1557.9h4v15.8h-4zM1102.4 1557.9h4v15.8h-4zM1115.9 1557.9h4v15.8h-4zM1120.4 1557.9h4v15.8h-4zM1133.9 1557.9h4v15.8h-4zM1138.4 1557.9h4v15.8h-4zM1142.9 1557.9h4v15.8h-4zM1147.4 1557.9h4v15.8h-4zM1165.4 1557.9h4v15.8h-4zM1187.9 1557.9h4v15.8h-4zM1192.4 1557.9h4v15.8h-4zM1219.4 1557.9h4v15.8h-4zM1228.4 1557.9h4v15.8h-4zM1232.9 1557.9h4v15.8h-4zM1241.9 1557.9h4v15.8h-4zM1246.4 1557.9h4v15.8h-4zM1250.9 1557.9h4v15.8h-4zM1259.9 1557.9h4v15.8h-4zM1264.4 1557.9h4v15.8h-4zM1331.9 1557.9h4v15.8h-4zM1336.4 1557.9h4v15.8h-4zM1372.3 1557.9h4v15.8h-4zM1376.8 1557.9h4v15.8h-4zM1385.8 1557.9h4v15.8h-4zM1403.8 1557.9h4v15.8h-4zM1417.3 1557.9h4v15.8h-4zM1426.3 1557.9h4v15.8h-4zM1435.3 1557.9h4v15.8h-4zM1453.3 1557.9h4v15.8h-4zM1457.8 1557.9h4v15.8h-4zM1529.8 1557.9h4v15.8h-4zM1579.3 1557.9h4v15.8h-4zM1583.8 1557.9h4v15.8h-4zM1588.3 1557.9h4v15.8h-4zM1592.8 1557.9h4v15.8h-4zM1597.3 1557.9h4v15.8h-4zM1624.3 1557.9h4v15.8h-4zM1628.8 1557.9h4v15.8h-4zM1642.3 1557.9h4v15.8h-4zM1669.3 1557.9h4v15.8h-4zM1673.8 1557.9h4v15.8h-4zM1682.8 1557.9h4v15.8h-4zM1691.8 1557.9h4v15.8h-4zM1696.3 1557.9h4v15.8h-4zM1723.3 1557.9h4v15.8h-4zM1763.8 1557.9h4v15.8h-4z"/>
<path fill="#f57e4d" d="M454.6 1557.9h4v15.8h-4zM463.6 1557.9h4v15.8h-4zM486.1 1557.9h4v15.8h-4zM661.5 1557.9h4v15.8h-4zM666 1557.9h4v15.8h-4zM706.5 1557.9h4v15.8h-4zM711 1557.9h4v15.8h-4zM720 1557.9h4v15.8h-4zM724.5 1557.9h4v15.8h-4zM819 1557.9h4v15.8h-4zM945 1557.9h4v15.8h-4zM1061.9 1557.9h4v15.8h-4zM1210.4 1557.9h4v15.8h-4zM1223.9 1557.9h4v15.8h-4zM1255.4 1557.9h4v15.8h-4zM1412.8 1557.9h4v15.8h-4zM1444.3 1557.9h4v15.8h-4zM1462.3 1557.9h4v15.8h-4zM1466.8 1557.9h4v15.8h-4zM1534.3 1557.9h4v15.8h-4zM1606.3 1557.9h4v15.8h-4zM1610.8 1557.9h4v15.8h-4zM1705.3 1557.9h4v15.8h-4z"/>
<path fill="#5e4fa2" d="M265.6 1540.4h4v15.8h-4zM270.1 1540.4h4v15.8h-4zM589.5 1540.4h4v15.8h-4zM679.5 1540.4h4v15.8h-4zM684 1540.4h4v15.8h-4zM846 1540.4h4v15.8h-4zM891 1540.4h4v15.8h-4zM1039.4 1540.4h4v15.8h-4zM949.5 1523h4v15.8h-4zM954 1523h4v15.8h-4zM324.1 1505.6h4v15.8h-4z"/>
<text class="ha" x="138.2" y="1215.6" text-anchor="end">+Inf</text>
<text class="ha" x="138.2" y="1233" text-anchor="end">17.5 min</text>
<text class="ha" x="138.2" y="1250.5" text-anchor="end">8.7 min</text>
<text class="ha" x="138.2" y="1267.9" text-anchor="end">4.4 min</text>
<text class="ha" x="138.2" y="1285.3" text-anchor="end">2.2 min</text>
<text class="ha" x="138.2" y="1302.7" text-anchor="end">1.1 min</text>
<text class="ha" x="138.2" y="1320.2" text-anchor="end">32.8 s</text>
<text class="ha" x="138.2" y="1337.6" text-anchor="end">16.4 s</text>
<text class="ha" x="138.2" y="1355" text-anchor="end">8.2 s</text>
<text class="ha" x="138.2" y="1372.5" text-anchor="end">4.1 s</text>
<text class="ha" x="138.2" y="1389.9" text-anchor="end">2.0 s</text>
<text class="ha" x="138.2" y="1407.3" text-anchor="end">1.0 s</text>
<text class="ha" x="138.2" y="1424.7" text-anchor="end">512.0 ms</text>
<text class="ha" x="138.2" y="1442.2" text-anchor="end">256.0 ms</text>
<text class="ha" x="138.2" y="1459.6" text-anchor="end">128.0 ms</text>
<text class="ha" x="138.2" y="1477" text-anchor="end">64.0 ms</text>
<text class="ha" x="138.2" y="1494.5" text-anchor="end">32.0 ms</text>
<text class="ha" x="138.2" y="1511.9" text-anchor="end">16.0 ms</text>
<text class="ha" x="138.2" y="1529.3" text-anchor="end">8.0 ms</text>
<text class="ha" x="138.2" y="1546.7" text-anchor="end">4.0 ms</text>
<text class="ha" x="138.2" y="1564.2" text-anchor="end">2.0 ms</text>
<text class="ha" x="294" y="1609.6" text-anchor="middle">14:00</text>
<text class="ha" x="563.9" y="1609.6" text-anchor="middle">14:30</text>
<text class="ha" x="833.8" y="1609.6" text-anchor="middle">15:00</text>
<text class="ha" x="1103.8" y="1609.6" text-anchor="middle">15:30</text>
<text class="ha" x="1373.7" y="1609.6" text-anchor="middle">16:00</text>
<text class="ha" x="1643.6" y="1609.6" text-anchor="middle">16:30</text>
<rect x="96" y="1622" width="20" height="12" fill="#5e4fa2"/>
<rect x="116" y="1622" width="20" height="12" fill="#4f64ac"/>
<rect x="136" y="1622" width="20" height="12" fill="#4479b3"/>
<rect x="156" y="1622" width="20" height="12" fill="#438fb4"/>
<rect x="176" y="1622" width="20" height="12" fill="#4ea3b1"/>
<rect x="196" y="1622" width="20" height="12" fill="#60b6ab"/>
<rect x="216" y="1622" width="21" height="12" fill="#77c6a7"/>
<rect x="237" y="1622" width="20" height="12" fill="#8fd2a4"/>
<rect x="257" y="1622" width="20" height="12" fill="#a7dca2"/>
<rect x="277" y="1622" width="20" height="12" fill="#bee5a0"/>
<rect x="297" y="1622" width="20" height="12" fill="#d3ed9e"/>
<rect x="317" y="1622" width="20" height="12" fill="#e3f4a2"/>
<rect x="337" y="1622" width="20" height="12" fill="#f0f8a9"/>
<rect x="357" y="1622" width="20" height="12" fill="#f8f9b0"/>
<rect x="377" y="1622" width="20" height="12" fill="#fcf6ad"/>
<rect x="397" y="1622" width="20" height="12" fill="#feeda1"/>
<rect x="417" y="1622" width="20" height="12" fill="#fee090"/>
<rect x="437" y="1622" width="20" height="12" fill="#fed07f"/>
<rect x="457" y="1622" width="20" height="12" fill="#fdbe70"/>
<rect x="477" y="1622" width="20" height="12" fill="#fba962"/>
<rect x="497" y="1622" width="21" height="12" fill="#f99356"/>
<rect x="518" y="1622" width="20" height="12" fill="#f47d4d"/>
<rect x="538" y="1622" width="20" height="12" fill="#ed6849"/>
<rect x="558" y="1622" width="20" height="12" fill="#e35549"/>
<rect x="578" y="1622" width="20" height="12" fill="#d6424b"/>
<rect x="598" y="1622" width="20" height="12" fill="#c52d4a"/>
<rect x="618" y="1622" width="20" height="12" fill="#b21747"/>
<text class="ha" x="96.7" y="1655.9" text-anchor="middle">0</text>
<text class="ha" x="330" y="1655.9" text-anchor="middle">5</text>
<text class="ha" x="563.9" y="1655.9" text-anchor="middle">10</text>
<text class="ha" x="637" y="1655.9" text-anchor="middle">12</text>
</g>
<g class="graph" id="graph2">
<path d="M1971.7 84h1154.4v2h-1154.4zM1971.7 220h1154.4v2h-1154.4zM1971.7 356h1154.4v2h-1154.4zM1971.7 492h1154.4v2h-1154.4z" fill="rgba(200,200,200,0.245)"/>
<path d="M2074 84h2v408h-2zM2266 84h2v408h-2zM2459 84h2v408h-2zM2651 84h2v408h-2zM2844 84h2v408h-2zM3036 84h2v408h-2z" fill="rgba(200,200,200,0.245)"/>
<clipPath id="cp2"><rect x="1971.7" y="73" width="1154.4" height="419"/></clipPath>
<g clip-path="url(#cp2)">
<path class="s" fill="#7EB26D" stroke="#7EB26D" d="M1965.7 500.5V370.9h6l1.6 3.3l1.6-0.3l1.6 1.5l1.6-5.2l1.6-2.6h1.6l1.6 8.7l1.6 8.5l1.6 12.7l1.6 9.5l1.6-11.4l1.6-12.5l1.6-8.5l1.6-27.1l1.7-26.5l1.6 29.5l1.6 49.8l1.6 10.7l1.6-12.8l1.6-13.9l1.6-6.9l1.6 0.9l1.6-8.7l1.6 2.4l1.6 10.2l1.6 13.4l1.6 5.9l1.6-7.3l1.6-13.4l1.6-5.8l1.6-4.3l1.6 3.5l1.6-7.8l1.6-6.4l1.6 5.6l1.6 1.6l1.6-5.7l1.6 0.3l1.6-2.3l1.6 1.5l1.6 6.9l1.6 0.6l1.6 10.4l1.6 6.3l1.6-19.2l1.7-8.5h1.6h1.6l1.6 18.1l1.6 7.4l1.6 10.9l1.6 8.1l1.6-9.7l1.6-10.8l1.6-7.3l1.6 0.5l1.6 15.5l1.6-16.1l1.6-9.6l1.6 0.2l1.6 3l1.6 4.8l1.6-8.2l1.6 4.4l1.6-3.6l1.6 11.9l1.6 9.4l1.6 13.4l1.6-5.7l1.6-7.6l1.6-10.9l1.6 6.9l1.6-4.2l1.6 9.7l1.7 14.5l1.6 15.1l1.6-8.5l1.6-14.2l1.6-14.4l1.6-0.1l1.6 4.9l1.6 0.7l1.6-7.6l1.6 2l1.6 10.3l1.6 11l1.6-21.7l1.6-9.3l1.6 3.7l1.6-3.9l1.6 7l1.6-2.1l1.6 3.9l1.6 12.1l1.6-3.1l1.6 6.7l1.6-11l1.6-4.1l1.6-1.2l1.6 2.1l1.6-0.1l1.6-0.6l1.6-1.1l1.6 8.5l1.6 10.3l1.7-13.7l1.6-8.8l1.6 7.2l1.6 5.3l1.6-11.6l1.6 2.6l1.6 0.6l1.6-0.2l1.6-5.5l1.6-0.4l1.6-2.3l1.6 15.2l1.6 9.5l1.6 21.2l1.6-11.6l1.6-16l1.6-9.7l1.6-0.4l1.6 1.6l1.6 16.8l1.6 26.2l1.6 21.2l1.6-25.1l1.6-25.8l1.6-16.5l1.6-5.6l1.6 4.6l1.6 6.2l1.6 11.6l1.7 22.6l1.6 18l1.6-21.4l1.6-22.2l1.6-12.3l1.6-11.3l1.6 1.1l1.6 3.6l1.6-2.3l1.6-4.1l1.6 3.6l1.6 7.2l1.6 7.7l1.6 17l1.6 30.9l1.6 25.5l1.6-30.2l1.6-30.3l1.6-19l1.6-21l1.6 4.6l1.6 2.8l1.6 7.2l1.6 6.4l1.6-6.8l1.6 4.4l1.6-6.7l1.6 1.3l1.6 6.4l1.6 6.4l1.6 9.2l1.7 1.9h1.6l1.6-1.5l1.6-9.5l1.6 2l1.6 11.5l1.6 18.3l1.6-15.4l1.6-13l1.6-5.2l1.6-6.5l1.6-2.6l1.6-1.1l1.6 8.1l1.6 0.7l1.6-5.2l1.6 5.6l1.6-4.4l1.6-6.6l1.6-8.6l1.6 3.7l1.6 8.1l1.6-3.8l1.6 0.6l1.6-0.4l1.6 2.3l1.6-6.7l1.6 0.6l1.6-6.4l1.7 7.9l1.6 11.2l1.6 4.7l1.6 10.9l1.6 8.1l1.6-9.7l1.6-10.8l1.6-7.3l1.6-11.7l1.6 3.7l1.6 4.9l1.6 8.7l1.6-4.4l1.6 12.4l1.6 12l1.6-19.1l1.6-10.4l1.6 1.3l1.6 0.3l1.6-4.7l1.6 5.6l1.6 1.7h1.6l1.6 7.1l1.6 26.4l1.6-14.9l1.6-13.3l1.6-2.7l1.6 2.3l1.6-3.7l1.6 1.2l1.7 10.6l1.6 2.7l1.6 1.6l1.6-7.1l1.6-6.3l1.6-0.6l1.6 14.7l1.6 12.5l1.6 18.9l1.6-14.9l1.6-9.2l1.6-12.4l1.6 1.9l1.6-5.9l1.6-4.6l1.6-3.3l1.6 1.9l1.6 3l1.6 5.8l1.6 9l1.6-11.9l1.6-7.8l1.6-6l1.6 6.6l1.6 9.1l1.6 9.1l1.6-5.1l1.6-5.6l1.6-10.3h1.7l1.6-5.1l1.6-1.3l1.6-0.7l1.6 5.5l1.6 2.4l1.6 5l1.6 0.2l1.6 4.4l1.6-10l1.6-1.2l1.6-4.5l1.6-3.2l1.6 7.7l1.6 0.3l1.6 5l1.6-11l1.6-2.3l1.6 12.4l1.6 9.7l1.6 14.4l1.6 11l1.6-13.1l1.6-14.3l1.6-9.6l1.6-13.7l1.6 7.8l1.6-2.1l1.6 1.2l1.6 4.1l1.6 9.1l1.7 22.2l1.6-22l1.6-7.5l1.6 6.5l1.6 7.3l1.6-2.7l1.6-10.1l1.6 2l1.6-1.4l1.6-5.9l1.6 3.9l1.6-4.2l1.6 6.8l1.6 2l1.6 2.3l1.6 17.5l1.6-3.7l1.6 12.8l1.6-10.8l1.6-8.4l1.6-11.7l1.6-4.3l1.6-3.7l1.6-1.9l1.6-1l1.6-3.4l1.6 9.4l1.6 11.4l1.6 8.5l1.7 20.5l1.6-8.6l1.6 0.7l1.6-19.5l1.6 1.2l1.6-0.9l1.6-4.8l1.6 13.8l1.6 4.4l1.6 7.4l1.6-10.6l1.6-14.2l1.6-7.7l1.6-7.7l1.6-0.1l1.6-2l1.6-0.1l1.6 12.9l1.6-11.1l1.6 4.1l1.6 3.6l1.6 1.4l1.6-0.3l1.6-6.3l1.6 12.5l1.6 5.8l1.6 0.4l1.6-11l1.6-1.6l1.6-7.5l1.6 1.7l1.7 18.1l1.6-5l1.6-16l1.6 3.3l1.6 7.1l1.6 7l1.6 3.7l1.6-3.5l1.6-4.2l1.6-3.4l1.6-1.2l1.6-1.1l1.6 2.8l1.6-10.2l1.6-2.1l1.6-1.7l1.6 1.2l1.6 8l1.6 0.7l1.6-5.3l1.6 0.6l1.6 1.4l1.6 5.8l1.6 11.5l1.6-0.9l1.6 15.1l1.6 28.5l1.6 23.1l1.6-27.5l1.7-27.8l1.6-17.7l1.6-4.5l1.6 6.9l1.6-1.2l1.6 12.6l1.6 17.3l1.6-12.7l1.6-22.5l1.6 1.1l1.6-8.7l1.6-0.1l1.6 6.1l1.6 5.8l1.6 4.5l1.6 1.3l1.6-0.3l1.6-8.7l1.6 5.3l1.6-5.2l1.6 6.7l1.6 16.7l1.6 5l1.6-13.8l1.6-15.3l1.6 5l1.6-7.1l1.6 8.6l1.6 12.2l1.6-20.5l1.6-7l1.7-1.6l1.6 4.3l1.6-7.2l1.6 8.2l1.6 5.2l1.6-3l1.6-5.1l1.6-0.9l1.6-1l1.6 14l1.6 9.7l1.6-6.4l1.6-5.2l1.6 4.7l1.6-5.5l1.6-7.6l1.6 1.8l1.6 12.2l1.6-0.1l1.6-11.9l1.6-4.5l1.6 15.7l1.6 14.4l1.6-12.3l1.6-17.3l1.6 0.8l1.6-9.4l1.6 3.5l1.6 20.2l1.7 17.6l1.6 27.7l1.6 22.5l1.6-26.7l1.6-27.1l1.6-17.3l1.6-2.7l1.6 7.5l1.6 0.5l1.6 0.1l1.6 1.2l1.6 0.6l1.6-4.8l1.6-8.9l1.6 1.1l1.6-4l1.6-3.1l1.6 0.3l1.6 21.9l1.6 13.2l1.6-8.5l1.6-7.1l1.6 25.4l1.6 42.4l1.6 37l1.6-43.7l1.6-35.4l1.6-15.6l1.6-17.4l1.6-1.3l1.6 4l1.7 3.3l1.6-11.4l1.6-1l1.6 12.2l1.6 2.2l1.6 9l1.6-6.4l1.6-4.1l1.6 5.5l1.6-2.1l1.6 15.3l1.6 32.7l1.6 27.2l1.6-32.3l1.6-31.9l1.6-16.1l1.6 3.1l1.6-5.8l1.6-10.2l1.6 6.9l1.6 6.1l1.6 1.6l1.6 1.6l1.6-6.6l1.6-6.3l1.6-7.1l1.6 3.1l1.6 7.8l1.6-7.6l1.7-4.6l1.6-2l1.6 7.8l1.6 6.8l1.6-8.7l1.6-0.5l1.6-6.7l1.6 3.2l1.6-2.4l1.6-1.2l1.6 5l1.6-6.9l1.6 5l1.6 3.2l1.6-7.1l1.6-0.9l1.6 13.9l1.6 10.9l1.6 6.2l1.6-1.4l1.6-15.2l1.6 2.9l1.6 8.9l1.6 13.4l1.6 10.1l1.6-12.1l1.6-12.6l1.6-5.8l1.6 0.7l1.6-10.3l1.6-0.9l1.7 5l1.6 4.6l1.6 0.8l1.6-2.2l1.6 1.8l1.6 1.7l1.6 7.7l1.6 18.4l1.6-8.8l1.6-17.2l1.6 1.4l1.6-8.7l1.6-1.9l1.6-4.3l1.6 2.2l1.6-3.8l1.6 1l1.6 2.2l1.6-2.1l1.6 4.7l1.6-5l1.6 6.1l1.6-0.8l1.6 7.4l1.6 8l1.6 8.3l1.6-4.3l1.6-21.9l1.6 2.8l1.6-4.4l1.7 7.8l1.6-1.6l1.6 4.3l1.6-5.7l1.6 8.2l1.6 10.9l1.6-15.9l1.6-4.6l1.6 4.6l1.6 5.8l1.6 8.3l1.6 6.2l1.6-7.4l1.6-8.3l1.6-5.7l1.6-14.5l1.6 0.7l1.6 7.5l1.6-3.1l1.6 5.5l1.6 10.6l1.6 8.3l1.6-7.6l1.6-28.2l1.6-25.2l1.6-18l1.6 16.7l1.6 25.8l1.6 17l1.6-6.6l1.7-1.8l1.6 11l1.6 10l1.6 3.8l1.6-4.4l1.6-5.1l1.6-10.9l1.6 6.1l1.6-5.6l1.6 9.7l1.6 11.7l1.6 3.3l1.6-4.2l1.6 0.9l1.6-17.8l1.6 10.5l1.6 14.7l1.6 22.6l1.6 18l1.6-21.4l1.6-22.2l1.6-9.5l1.6-11.5l1.6-0.8l1.6 12.4l1.6 5.9l1.6-4.1l1.6 1.3l1.6-4.4l1.7 6.6l1.6 2l1.6-7.6l1.6-7.1l1.6-0.1l1.6-8.8l1.6-0.6l1.6 18.6l1.6 22.5l1.6 36.7l1.6 31.1l1.6-36.8l1.6-35.7l1.6-22l1.6-10.1l1.6-2.5l1.6 4.1l1.6 6.4l1.6 5l1.6 16.1l1.6 27.3l1.6 22.2l1.6-26.3l1.6-26.8l1.6-17.1l1.6-3l1.6 9.6l1.6-4.4l1.6 6.7l1.6-6.7l1.6 5.5l1.7 13.4l1.6 10.1l1.6-12.1l1.6-13.2l1.6-8.9l1.6 5.6l1.6-7.2l1.6-5.5l1.6 8.7l1.6-11.2l1.6 10.6l1.6 23.1l1.6-19.6l1.6-17.9l1.6 7.1l1.6-3.7l1.6-2.3l1.6 2l1.6 11.5l1.6 13.8l1.6 9.2l1.6-15.3l1.6-8.5l1.6-6.8l1.6 6.7l1.6 13.8l1.6 8.3l1.6-2.3l1.6-11.4l1.7-6.2l1.6-0.1l1.6 6.8l1.6-6.1l1.6-5.7l1.6 7.5l1.6 8.9l1.6 6.1l1.6-17.2l1.6-8l1.6 0.9l1.6 2.2l1.6 4.8l1.6-11.6l1.6 2l1.6 1.7l1.6-5.5l1.6-3.4l1.6 1.6l1.6-0.9l1.6 19.9l1.6 10.9l1.6-13.5l1.6-11l1.6-6.8l1.6 2.1l1.6 11.5l1.6 5.3l1.6 7.7l1.6 5.6l1.6-6.8l1.7-7.5l1.6-3.3l1.6-6.5l1.6-3.2l1.6-0.6l1.6-7.6l1.6 0.3l1.6-0.3h1.6h1.6l1.6 1.6l1.6 7.7l1.6 8h1.6l1.6-6.2H3132.1V500.5z"/>
<path class="s" fill="#EAB839" stroke="#EAB839" d="M1965.7 500.5V361.1h6l1.6-2.4l1.6-1.6l1.6 1.6l1.6-26.3l1.6-20.6l1.6-20.8l1.6 23.2l1.6 18.9l1.6 28.5l1.6 0.8l1.6-4.8l1.6-20.4l1.6-11.4l1.6-18.9l1.7-10.3l1.6 13.5l1.6 7.5l1.6 23.6l1.6 17.2l1.6-1.1l1.6 3.1l1.6 0.2l1.6-40l1.6-21.5l1.6-29.3l1.6 31.8l1.6 22.4l1.6 35.5l1.6-2.8l1.6 3.9l1.6-1l1.6-7.8l1.6 3.6l1.6 6.6l1.6-14.1l1.6-13.5l1.6-10.7l1.6-13.1l1.6 16.5l1.6 10.3l1.6 8.4l1.6 15.6l1.6-13.5l1.6-15.1l1.6-9.8l1.7-10.2l1.6 7.1l1.6 12.5l1.6 14.1l1.6 12.7l1.6 2.5l1.6-0.1l1.6-1.6l1.6 2.6l1.6-23.5l1.6-15.5l1.6-24.8l1.6-2.4l1.6 6.2l1.6 21.4l1.6 17.9l1.6 22.1l1.6 1.4l1.6-4l1.6 0.9l1.6-1.8l1.6-2.6l1.6 0.8l1.6-1.9l1.6-29.8l1.6-33.3l1.6-24.4l1.6 27.9l1.6 33.5l1.7 31.3l1.6-3.5l1.6-3.6l1.6-0.5l1.6-33.3l1.6-26l1.6-20.5l1.6 15.2l1.6 39.4l1.6 27.1l1.6-1.3l1.6 4.5l1.6 4.6l1.6-0.9l1.6-2.1l1.6-1.4l1.6-3.4l1.6 0.1l1.6-23.8l1.6-35.6l1.6-20.3l1.6 25.7l1.6 30.4l1.6 29l1.6-0.5l1.6 0.5l1.6 2.2l1.6-0.8l1.6-3l1.6-0.4l1.6-0.2l1.7-18l1.6-13.8l1.6-19.3l1.6-8.4l1.6 11.6l1.6 11.4l1.6 16.8l1.6 18.7l1.6 1.7l1.6-21.8l1.6-19.7l1.6-11l1.6-17l1.6 13.8l1.6 17.8l1.6 19.5l1.6-6.7l1.6-17l1.6-24.6l1.6-11.3l1.6 12.2l1.6 19.6l1.6 24.4l1.6 19.2l1.6 5.1l1.6-3.4l1.6-5.2l1.6 4.9l1.6 0.3l1.7-2.7l1.6 3.1l1.6 5.3l1.6-1.6l1.6-7l1.6-6.1l1.6-9.1l1.6-8.1l1.6 8.9l1.6 7.8l1.6 5.8l1.6 2.5l1.6 2.2l1.6-3.6l1.6 1l1.6-33l1.6-31.2l1.6-13.1l1.6 16.9l1.6 27.2l1.6 34.4l1.6-3.6l1.6 2.8l1.6 1.3l1.6 2.6l1.6 1.7l1.6-24.5l1.6-18l1.6-22.5l1.6-8.2l1.6 13.2l1.7 19.9l1.6 16.2l1.6 19.4l1.6-1.3l1.6-26.5l1.6-22.8l1.6-27l1.6 18.1l1.6 34l1.6 27.6l1.6 2.2l1.6-2l1.6-3.1l1.6 1.3l1.6-1.6l1.6-2l1.6-9l1.6-13.3l1.6-13.5l1.6 14.6l1.6 12.7l1.6 8.3l1.6 4l1.6-0.7l1.6 0.1l1.6-2l1.6-0.2l1.6 1.6l1.6 2l1.7 1.9l1.6-1.9l1.6-1.9l1.6-1.6l1.6-36.7l1.6-21.3l1.6-32.5l1.6 27.1l1.6 26.7l1.6 34.6l1.6 0.7l1.6 7.7l1.6-0.8l1.6 0.1l1.6 0.2l1.6-3.3l1.6-0.9l1.6-1.5l1.6-8.5l1.6-10l1.6-10.3l1.6 11.1l1.6 10.3l1.6 8.7l1.6 3.3l1.6-3.6l1.6-1.4l1.6 5.3l1.6-1.9l1.6-20.4l1.6-23.1l1.7-11.4l1.6-23.6l1.6 22.3l1.6 21.3l1.6 13.5l1.6 22.5l1.6-3.3l1.6-2.6l1.6-0.2l1.6 1.7l1.6 0.3l1.6-0.8l1.6-21.6l1.6-25.7l1.6-21l1.6-20.8l1.6 25.1l1.6 19.2l1.6 18.9l1.6 28.1l1.6 4.1l1.6-0.8l1.6-2.8l1.6-1.8l1.6 4.3l1.6-1.5l1.6-14.3l1.6-6.9l1.6-13.4l1.7-12.5l1.6 13.4l1.6 9.8l1.6 12.3l1.6 15.1l1.6-30.4l1.6-27.5l1.6-20.5l1.6 16.3l1.6 29.6l1.6 29.6l1.6-1.7l1.6 0.1l1.6 1.6l1.6-1l1.6 1.1l1.6-1.9l1.6-2.6l1.6 1.6l1.6 1.6l1.6-1l1.6-17.2l1.6-12.5l1.6-23.7l1.6 21.3l1.6 15.7l1.6 20l1.6-1.7l1.6 2.6l1.6 2.5l1.6-1.9l1.7-2.9l1.6 0.3l1.6-1l1.6-2.5l1.6 3.6l1.6 2.4l1.6-24.6l1.6-22.4l1.6-21.3l1.6 22.5l1.6 18.6l1.6 21.4l1.6-30.3l1.6-21.9l1.6-29.9l1.6 23.4l1.6 24.8l1.6 36.1l1.6 4.1l1.6 1.1l1.6-4.3l1.6-0.7l1.6 1.2l1.6 1.4l1.6-5l1.6-0.4l1.6 4.8l1.6-1.2l1.6-33.7l1.7-29.6l1.6-24.7l1.6 15l1.6 35.5l1.6 32.8l1.6 4.8l1.6-2.9l1.6-1.4l1.6 2.4l1.6-14.4l1.6-14.9l1.6-15.3l1.6-10.1l1.6 6.7l1.6 19.7l1.6 13.5l1.6 17.9l1.6 1.4l1.6-1.3l1.6-3.8l1.6-1.6l1.6 5l1.6-1.3l1.6-3.6l1.6 1.3l1.6-14.6l1.6-8.4l1.6-11l1.6-10.1l1.6 8.6l1.6 8.1l1.7 13.2l1.6-6.5l1.6-25.2l1.6-11.3l1.6 11.8l1.6 23.5l1.6 24.3l1.6-8.4l1.6-7.6l1.6-4l1.6-3.9l1.6 1.8l1.6 7.2l1.6 7.8l1.6 11.9l1.6 0.8l1.6-4.4h1.6l1.6 1.5l1.6-5.9l1.6-1.1l1.6-0.9l1.6-20.6l1.6-13.9l1.6-16.3l1.6-27.1l1.6 22.9l1.6 20l1.6 15.9l1.7-1.8l1.6-31.5l1.6-19.4l1.6 30.6l1.6 17.4l1.6 28.1l1.6 0.8l1.6-0.6h1.6l1.6-1l1.6 0.7l1.6 3.6l1.6-0.5l1.6-3.9l1.6 2.1l1.6-15.1l1.6-12.8l1.6-10.9l1.6-9l1.6 2.5l1.6 19.6l1.6 10.5l1.6 14.4l1.6 4.5l1.6-1.3l1.6-2.5l1.6 1.4l1.6 1.2l1.6-2.8l1.6-0.4l1.6 3.1l1.7-0.7l1.6-26.1l1.6-19.8l1.6-10.7l1.6-23.8l1.6 25.9l1.6 14.7l1.6 15l1.6 18.7l1.6-9.7l1.6-16.2l1.6-17.2l1.6 16l1.6 13.9l1.6 13.6l1.6 1.1l1.6 5.4l1.6-0.1l1.6-3.3l1.6-30.2l1.6-29.3l1.6-20.9l1.6 27.3l1.6 26.5l1.6 25l1.6-1.7l1.6 2.9l1.6-4.3l1.6-2.2l1.7 4.6l1.6 3.4l1.6 3.1l1.6-0.7l1.6-10.6l1.6-8.9l1.6-4.1l1.6-8.7l1.6 8.1l1.6 7.2l1.6 5.5l1.6-23.8l1.6-31.7l1.6-27.1l1.6 32.5l1.6 26.1l1.6 25.6l1.6 5.5l1.6 3.8l1.6-2.1l1.6-9.6l1.6-11.5l1.6-7.5l1.6 9.9l1.6 9l1.6 6.3l1.6 1.6l1.6 2.1l1.6-0.2l1.6-4.7l1.6 0.9l1.7 2.5l1.6 1.8l1.6-35.6l1.6-18.5l1.6-26.7l1.6 15.8l1.6 30.8l1.6 30.1l1.6 0.6l1.6 0.9l1.6 0.5l1.6-3l1.6 2.4l1.6-23.3l1.6-18.4l1.6-18.4l1.6-21.6l1.6 9.5l1.6 21.2l1.6 29.6l1.6 19.3l1.6-0.2l1.6-0.5l1.6-0.2l1.6 2.2l1.6 0.5l1.6-36.4l1.6-33.7l1.6-30.9l1.7 39.2l1.6 24.5l1.6 36l1.6 3.7l1.6 0.4l1.6-4.1l1.6-17.5l1.6-24.9l1.6-11.7l1.6-24.3l1.6 18.8l1.6 22.7l1.6 20l1.6 19.3l1.6-2.3l1.6 2.1l1.6 2l1.6-1.9l1.6-19.4l1.6-13.6l1.6-26.5l1.6-9.4l1.6 8.2l1.6 24.2l1.6 14.7l1.6 18.5l1.6 3.7l1.6 1.5l1.6 0.6l1.6 3l1.6 2.9l1.7-4.6l1.6-15.7l1.6-13.6l1.6-8.9l1.6 11.8l1.6 11l1.6 10.1l1.6 3.2l1.6 2l1.6-5l1.6-1.2l1.6 4.5l1.6-0.2l1.6-22.5l1.6-14.1l1.6-23.8l1.6 18.6l1.6 20.8l1.6 15.1l1.6-1l1.6-30.2l1.6-31.8l1.6-32.4l1.6 39.9l1.6 23.7l1.6 38.8l1.6-1.2l1.6-1.6l1.6-0.4l1.6-0.2l1.7-19l1.6-22l1.6-18.8l1.6-7.7l1.6 13.3l1.6 13.2l1.6 18.5l1.6-9.4l1.6-38.6l1.6-30.1l1.6 29.5l1.6 34.6l1.6 37.3l1.6 0.2l1.6 1l1.6-27.2l1.6-25.8l1.6-25.4l1.6-23.7l1.6 22.3l1.6 25l1.6 29.6l1.6 24.3l1.6 1.3l1.6-0.7l1.6 0.5l1.6 0.9l1.6-1.8l1.6-1.1l1.6 3.1l1.7-14.7l1.6-6.6l1.6-13.5l1.6 10.9l1.6 10.7l1.6 7.2l1.6 2l1.6 3.4l1.6 1.2l1.6-1.5l1.6-2l1.6-2.6l1.6-0.7l1.6 0.9l1.6 0.6l1.6 1.8l1.6-13.4l1.6-12.6l1.6-8.4l1.6 10.5l1.6 9.6l1.6 12.2l1.6 3l1.6-0.9l1.6-3l1.6-10.5l1.6-14.7l1.6-4.2l1.6-18.3l1.7 10.2l1.6 17l1.6-1.1l1.6-25.8l1.6-30.6l1.6-2.3l1.6 18.9l1.6 6.9l1.6 26.6l1.6-4.5l1.6-25l1.6-24.5l1.6 28.4l1.6 24.1l1.6 8.6l1.6-19.9l1.6-20.7l1.6-14.6l1.6 5.7l1.6 31l1.6 19.1l1.6 24.2l1.6-1.5l1.6 0.7l1.6 3.3l1.6-2.2l1.6-3.4l1.6-0.7l1.6 2.8l1.6 2.3l1.6-18.4l1.7-17.9l1.6-12.6l1.6 11.7l1.6 19.9l1.6 11.8l1.6 2.6l1.6 2.7l1.6-5.6l1.6 1.8l1.6 4l1.6-4.6l1.6-1.6l1.6 6.4l1.6 1.4l1.6-4.1l1.6-7.3l1.6-5.9l1.6-8l1.6-8.1l1.6 5.6l1.6 7.1l1.6 10l1.6 4.3l1.6 5l1.6-2.5l1.6-2.8l1.6 0.5l1.6 2.8l1.6 0.3l1.7-26.7l1.6-20.8l1.6-14l1.6-23.9l1.6 23.2l1.6 21.5l1.6 14.7l1.6 28.3l1.6-2.7l1.6-1.4l1.6-8.5l1.6-11.6l1.6-8.4l1.6-14.9l1.6 13.6l1.6 9.2l1.6 11.3l1.6 8.1l1.6 0.7l1.6-8.9l1.6-9l1.6-10.2l1.6 5.7l1.6 13.7l1.6 10.8l1.6-0.3l1.6-0.8l1.6 0.3l1.6-4.1l1.6 1.3l1.6 3.6l1.7-2l1.6 0.7l1.6 3.8l1.6-29.2l1.6-25.4l1.6-19.4l1.6 19.4l1.6 25.4l1.6 26.4l1.6-23l1.6-20.9l1.6-26.5l1.6-11.3l1.6 8.4l1.6 32.5H3132.1V500.5z"/>
<path class="s" fill="#6ED0E0" stroke="#6ED0E0" d="M1965.7 500.5V358.6h6l1.6-0.1l1.6-0.7l1.6 0.7l1.6 0.4l1.6-0.1l1.6 0.8l1.6-15.8l1.6-13.5l1.6-16.8l1.6-5.1l1.6-10.5l1.6 12.2l1.6 4.5l1.6 17.7l1.7 9.3l1.6-8l1.6-13.3l1.6-8.9l1.6-17.1l1.6 9.9l1.6 12.6l1.6 14.1l1.6-27.1l1.6-13.2l1.6-24l1.6 20.5l1.6 20.5l1.6 19.4l1.6 30l1.6 0.1l1.6-1.3l1.6-0.8l1.6 1.1l1.6-12l1.6-9.8l1.6-18.8l1.6 13.2l1.6 14.8l1.6 17l1.6-1.5l1.6-1.4l1.6 0.9l1.6-2.3l1.6-0.3l1.6 2.9l1.7-24.6l1.6-28l1.6-19.2l1.6 26.6l1.6 17.6l1.6 25l1.6-23.9l1.6-14.7l1.6-21.9l1.6 24.2l1.6 13.2l1.6 23.7l1.6 0.6l1.6-18.9l1.6-17l1.6-8.3l1.6-19.3l1.6 17.3l1.6 9.6l1.6 19.2l1.6 18.2l1.6 1.5l1.6-0.2l1.6-3.4l1.6 0.1l1.6 1.7l1.6 1.3l1.6-26.9l1.6-21.7l1.7-36.2l1.6 23.6l1.6 33.4l1.6 24.7l1.6 1.3l1.6 0.9l1.6 1l1.6 0.1l1.6-4.3l1.6-6.1l1.6-7.8l1.6-6.5l1.6-8.6l1.6-1.2l1.6-0.4l1.6 13.1l1.6 3.7l1.6 8.3l1.6 8.5l1.6 0.8l1.6 0.5l1.6 1.5l1.6-21.6l1.6-9l1.6-15.9l1.6 10.6l1.6 17.7l1.6 17.8l1.6-0.2l1.6-1.3l1.6-1.6l1.7-24.9l1.6-20.2l1.6-24.5l1.6-15.8l1.6-6.7l1.6 12.4l1.6 10.5l1.6 28.7l1.6 18.3l1.6 22.3l1.6-1.7l1.6 3.8l1.6 1.9l1.6-2.9l1.6-0.1l1.6-0.6l1.6-25.4l1.6-21.8l1.6-14.4l1.6-20.1l1.6 18.6l1.6 18.7l1.6-0.1l1.6-24l1.6-15l1.6-12.7l1.6 11l1.6 16.6l1.6 23.9l1.7-2.6l1.6-14.7l1.6-15.9l1.6 20.6l1.6 17.4l1.6 13.6l1.6 24.8l1.6-45.6l1.6-33l1.6-21.5l1.6 26.3l1.6 34.6l1.6 42.8l1.6-19.6l1.6-17.4l1.6-7.3l1.6-10.8l1.6 12l1.6 9.2l1.6 13.6l1.6 19.1l1.6 1l1.6-43.4l1.6-31l1.6-31.6l1.6 25.9l1.6 42.5l1.6 34.7l1.6 4.6l1.6-1.9l1.6-0.8l1.7-0.9l1.6-1.2l1.6 0.7l1.6-36.7l1.6-28.5l1.6-24.7l1.6 21.2l1.6 32.9l1.6 18.7l1.6-6.9l1.6-4.5l1.6-12.8l1.6 9.1l1.6 10.2l1.6 6.3l1.6 6.7l1.6 6.8l1.6 1.3l1.6 0.1l1.6 0.4l1.6-12.5l1.6-14.5l1.6-7.8l1.6-17.2l1.6-3.8l1.6 5.6l1.6 14.9l1.6 10l1.6 7.6l1.7-20.2l1.6-17.9l1.6-17.4l1.6-11.6l1.6 15.6l1.6 10.3l1.6 19l1.6 19l1.6 19.1l1.6-1.8l1.6 0.3l1.6 3.1l1.6-15.1l1.6-10.7l1.6-17.1l1.6-9.7l1.6-7.1l1.6 11.3l1.6 13.6l1.6 6l1.6-25.6l1.6-25l1.6-14.6l1.6 21.2l1.6 22.2l1.6 23.3l1.6 29l1.6-24.2l1.6-19.4l1.6-20.2l1.6-12.4l1.7 16.4l1.6 12.6l1.6 20.8l1.6 23.1l1.6 0.7l1.6 1.7l1.6-1.7l1.6 1.2l1.6 3.8l1.6-1.2l1.6-14.1l1.6-12.3l1.6-9.4l1.6 12l1.6 9.2l1.6 11.9h1.6l1.6 0.6l1.6-0.7l1.6-2.2l1.6 0.5l1.6 0.7l1.6 1.5l1.6 2l1.6-0.9l1.6-31.6l1.6-23.2l1.6-14.8l1.6 7.8l1.7 34.6l1.6 26.5l1.6-14l1.6-13.5l1.6-13l1.6 14.9l1.6 11.7l1.6 14.6l1.6-28.7l1.6-27.3l1.6-32.9l1.6-7.9l1.6 19l1.6 19l1.6 23.8l1.6 32l1.6 1.7l1.6 3.2l1.6-28.6l1.6-35l1.6-14.9l1.6-23.5l1.6 28.1l1.6 13.3l1.6 30.5l1.6 26.1l1.6 3.3l1.6-2.7l1.6-0.9l1.6 3l1.6 3.5l1.7-1.9l1.6-29.5l1.6-17l1.6-31.4l1.6-10.1l1.6-8.2l1.6 1l1.6 17.2l1.6 32.1l1.6 18.5l1.6 21.2l1.6 3.3l1.6 0.4l1.6-3.4l1.6-0.4l1.6 2.5l1.6 2.9l1.6-0.9l1.6-21.9l1.6-19.1l1.6-13.4l1.6 17.1l1.6 17.9l1.6 12.7l1.6 2.4l1.6-0.9l1.6 3.4l1.6 3.9l1.6-29.7l1.7-31l1.6-20l1.6 24.5l1.6 22.4l1.6 34.2l1.6-2.2l1.6-3.3l1.6 0.8l1.6 1.2l1.6 2.5l1.6-28.6l1.6-29.2l1.6-21.1l1.6-8.2l1.6-17.9l1.6 1.6l1.6 28.5l1.6 22.6l1.6 21.4l1.6 2.1l1.6-26l1.6-16.1l1.6-20.6l1.6-7.2l1.6 9.1l1.6 19.9l1.6 21.6l1.6 20.8l1.6 25l1.6-3.2l1.6 2.1l1.7 3.9l1.6 2.6l1.6-5.2l1.6-12.8l1.6-12.5l1.6-15.4l1.6 14.6l1.6 12.2l1.6 15.7l1.6-2.4l1.6-0.3l1.6 0.7l1.6 0.2l1.6 2.6l1.6 0.6l1.6-2.7l1.6 0.2l1.6-41.3l1.6-40.2l1.6-22.7l1.6 30.5l1.6 24.7l1.6 47.6l1.6-18.1l1.6-13.4l1.6-21.3l1.6-11l1.6-17.8l1.6 16.9l1.7 21l1.6 11.6l1.6 11.9l1.6 22.5l1.6-0.7l1.6 1l1.6-1.8l1.6-25l1.6-22.1l1.6-20.4l1.6-8.2l1.6-25.3l1.6 21.6l1.6 18.4l1.6 21l1.6 18.7l1.6 20.7l1.6 1.8l1.6-4.5l1.6-0.2l1.6 3.8l1.6-9.1l1.6-11.8l1.6-5.8l1.6-7.6l1.6-11.3l1.6 10.7l1.6 5.5l1.6 11.9l1.6 2.1l1.6-10l1.7-9.3l1.6-18.4l1.6 14.6l1.6 9.7l1.6 14.7l1.6 14.8l1.6-2.8l1.6-1.3l1.6 1l1.6-0.4l1.6 1.8l1.6 0.1l1.6-18.1l1.6-18.7l1.6-18.6l1.6-18.4l1.6-7.2l1.6 3.4l1.6 27l1.6 14.1l1.6 14.1l1.6 22.6l1.6 0.9l1.6-0.4l1.6-40.6l1.6-27l1.6-28.4l1.6 33.8l1.6 29.1l1.7 33l1.6-0.2l1.6-11.2l1.6-8.7l1.6-9.2l1.6-10.8l1.6 7.6l1.6 11l1.6 8.3l1.6-10.9l1.6-27l1.6-13.1l1.6-24.8l1.6-0.9l1.6 12.7l1.6 8.8l1.6 26.1l1.6 16.5l1.6 26.5l1.6 0.3l1.6 0.4l1.6-37.1l1.6-28.5l1.6-12.3l1.6 18.3l1.6 24.5l1.6 30.9l1.6 1.1l1.6 0.9l1.6 0.7l1.6 1.5l1.7-3.1l1.6-1.5l1.6-31.5l1.6-24.7l1.6-24.4l1.6 20.3l1.6 24.8l1.6 36.9l1.6-1.2l1.6 1.7l1.6 1.7l1.6-2.5l1.6-0.1l1.6-0.5l1.6 2l1.6-44.9l1.6-33l1.6-26.1l1.6 31l1.6 26.7l1.6 21.5l1.6-15.1l1.6-19.8l1.6-10l1.6 9l1.6 19.6l1.6 19.8l1.6-13.4l1.6-24.2l1.7-21.7l1.6-39.8l1.6 30.6l1.6 31.4l1.6 23.5l1.6 35.5l1.6-0.9l1.6-2.9l1.6 1.1l1.6 1.1l1.6-25.7l1.6-26.9l1.6-19.7l1.6-17.2l1.6 22.5l1.6 24.4l1.6 17.9l1.6 24.3l1.6-0.4l1.6 0.8l1.6 1.7l1.6-31.5l1.6-29.6l1.6-18.2l1.6-10.8l1.6 6l1.6 33.7l1.6 14.2l1.6-22.6l1.6-9.9l1.6-26.4l1.7 24l1.6 13.8l1.6 13.9l1.6 19.5l1.6-25.9l1.6-19.7l1.6-11.9l1.6-18.2l1.6 2.9l1.6 32.6l1.6 20.5l1.6 15.4l1.6 29.1l1.6-2.3l1.6-2l1.6-20.8l1.6-30.4l1.6-10l1.6-18.8l1.6-25.9l1.6 21.9l1.6 25.8l1.6 12.7l1.6 20.7l1.6 30.2l1.6 0.1l1.6-1.9l1.6-1.2l1.6-32.6l1.6-21.2l1.7-31.2l1.6 29.3l1.6 23.5l1.6 35l1.6-2.6l1.6-1.5l1.6 1.3l1.6-22.6l1.6-23.2l1.6-24.3l1.6-21.8l1.6 31l1.6 11.3l1.6 3.3l1.6-19.4l1.6-16.8l1.6-16.4l1.6 16.8l1.6 6.1l1.6 30.8l1.6 16.6l1.6-21l1.6-15.5l1.6-23.2l1.6 9.3l1.6 26.3l1.6 26.6l1.6 28.3l1.6-29.2l1.6-23.5l1.7-24.1l1.6-21.1l1.6 23.9l1.6 17.1l1.6 23.1l1.6 32.6l1.6-1.7l1.6-0.7l1.6 0.9l1.6 1.3l1.6-2.5l1.6-3.1l1.6-28.8l1.6-31.9l1.6-29.9l1.6 29.5l1.6 29.4l1.6 35.1l1.6 2.8l1.6 0.3l1.6-2.2l1.6-1.8l1.6 1.8l1.6 3l1.6-21.4l1.6-27.5l1.6-8.7l1.6-22.3l1.6 22.9l1.7 9.7l1.6 20.2l1.6 25.4l1.6 1.8l1.6 0.1l1.6-25.2l1.6-19.8l1.6-12.9l1.6 14.8l1.6 19.3l1.6 20.9l1.6-18.7l1.6-17.7l1.6-14.3l1.6-27.5l1.6 25.6l1.6 14.2l1.6 16.1l1.6 23.7l1.6-1.3l1.6 1.6l1.6-28.9l1.6-28.2l1.6-10l1.6 16.2l1.6 24l1.6 24.6l1.6-0.9l1.6 1l1.6 4.2l1.6 0.6l1.7-2.1l1.6-18.5l1.6-20.3l1.6-12.4l1.6 11.5l1.6 18.8l1.6 17l1.6 1.4l1.6 4l1.6-1.9l1.6-11.6l1.6-6.7l1.6-13.1l1.6-7.9l1.6-1.8l1.6 5l1.6 5.1l1.6 13.1l1.6 6.6l1.6 8.6l1.6 1.8l1.6 1.4l1.6-0.9l1.6 0.5l1.6 1.7l1.6-33.1l1.6-24.7l1.6-26.8l1.6-14.9l1.7 26.8l1.6 11l1.6 32.3l1.6 26.2l1.6 1.5l1.6 0.7l1.6-0.2l1.6-0.1l1.6-0.9l1.6-2.9l1.6-14.4l1.6-12.1l1.6-13.9l1.6-14.8l1.6-5.1l1.6 8l1.6 14.3l1.6 11.5l1.6 15.8l1.6 9.7l1.6 2.2l1.6 1.8l1.6-1.1l1.6-5.9l1.6-5.3l1.6-5l1.6-7.9l1.6-6.3l1.6 5.6l1.6 5.6l1.6 8.1l1.7 4.6l1.6 5.4l1.6-2.2l1.6 0.5l1.6-20.2l1.6-31l1.6-17.3l1.6-22.1l1.6 28.4l1.6 11.7l1.6 10.4l1.6-13.7l1.6-16l1.6-18l1.6 5.6H3132.1V500.5z"/>
<path class="s" fill="#EF843C" stroke="#EF843C" d="M1965.7 500.5V226.5h6l1.6 3l1.6-0.5l1.6-1.5l1.6 5.9l1.6 5.5l1.6 4.5l1.6-0.7l1.6-3.3l1.6 2.7l1.6-6.9l1.6 3l1.6-0.9l1.6 0.9l1.6 9.9l1.7 7.1l1.6 6.2l1.6 11.6l1.6 6l1.6 10.3l1.6-13l1.6-3l1.6-3.4l1.6-4.7l1.6-9.8l1.6-12.3l1.6 3.9l1.6-3.4l1.6-3.2l1.6 1.1l1.6-2.7l1.6-1.9l1.6 2.1l1.6 7.3l1.6-1.5l1.6 0.6l1.6-1.4l1.6-2.7l1.6-7.3l1.6 1.8l1.6-3l1.6 14.1l1.6 18.1l1.6 21.4l1.6 25.3l1.6-11.1l1.7-22.4l1.6-20l1.6-13l1.6-4l1.6-1l1.6-0.2l1.6 9.3l1.6 8.8l1.6 3.3l1.6 4.9l1.6 8.3l1.6-11.6l1.6-8.7l1.6-1.8l1.6-12.3l1.6-5.8l1.6-6.6l1.6 3.8l1.6 7.8l1.6-2.9l1.6-6.1l1.6 1.4l1.6-0.2l1.6-6.7l1.6-1.7h1.6l1.6 2.3l1.6 3.4l1.6 5.1l1.7 3.6l1.6-0.2l1.6-2.2l1.6-6.5l1.6-4.3l1.6 0.5l1.6 0.6l1.6-0.3l1.6 5.5l1.6-0.4l1.6 7.9l1.6 6.2l1.6 10.4l1.6 9.7l1.6-7.1l1.6-8.5l1.6-7.3l1.6-6.7l1.6 0.2l1.6-9.6l1.6-0.6l1.6 2.4l1.6 6.5l1.6 9.7l1.6 9.2l1.6 5.3l1.6 8.2l1.6 6l1.6-7.8l1.6-0.4l1.6-12.4l1.7-13.4l1.6-2.5l1.6-6.8l1.6-2.6l1.6 1l1.6 0.2l1.6 3l1.6 2l1.6-0.8l1.6-4l1.6 0.3l1.6-2.6l1.6 0.1l1.6 1.5l1.6-1.8l1.6-0.5l1.6-1.5h1.6h1.6h1.6h1.6h1.6l1.6 0.9l1.6-0.9l1.6 4.4l1.6 6.3l1.6 12.3l1.6 6.9l1.6 9.1l1.7 11.1l1.6-10.8l1.6-6.6l1.6-10.4l1.6-7.6l1.6-3.9l1.6-0.1l1.6-2.3l1.6-1.4l1.6 0.8l1.6 1.7l1.6 2.1l1.6-2.2l1.6-2l1.6 3.5l1.6 1l1.6-1.2l1.6-0.2l1.6-3.2l1.6-0.2l1.6-3.8l1.6 3.1l1.6-1.2l1.6 1.7l1.6 3.5l1.6 10l1.6-0.4l1.6 6.3l1.6 5.4l1.6 3.2l1.6 7.2l1.7-7.3l1.6-4.8l1.6-6.9l1.6-9.4l1.6 5.4l1.6 3.3l1.6-1.4l1.6-6.3l1.6-0.9l1.6-3l1.6 1l1.6 3.8l1.6 1.2l1.6-2.6l1.6 1.4l1.6 13l1.6 13.1l1.6 7.1l1.6 11.2l1.6-7l1.6-10.2l1.6-17.7l1.6-13.1l1.6-1.7l1.6-2l1.6-3.2l1.6 8.4l1.6 3.2l1.6 7.2l1.7-6.9l1.6-1l1.6 0.8l1.6-0.8l1.6-3.4l1.6-0.8l1.6 5.2l1.6-2.6l1.6-4.3l1.6 10.3l1.6 8.1l1.6 13.4l1.6 2.9l1.6 15.7l1.6-8.9l1.6-10.8l1.6-10.6l1.6-10.7l1.6-4.3l1.6-2.1l1.6 2.1l1.6-0.4l1.6-1.5l1.6 2.4l1.6 9.2l1.6-7l1.6-0.3l1.6 1.9l1.6-5.9l1.6-4.9l1.6-0.1l1.7-4.5l1.6-0.3l1.6 2.6l1.6 2.2l1.6-2.9l1.6 0.8l1.6 3.5l1.6-0.5l1.6 12.1l1.6 16.2l1.6 14.5l1.6 11.9l1.6-15.7l1.6-19.2l1.6-13.2l1.6-14.6l1.6 1.6l1.6 1.2l1.6 5.3l1.6-0.6l1.6 13.5l1.6 1.3l1.6 0.8l1.6 0.8l1.6-6l1.6 3l1.6-1.7l1.6-2.5l1.6-3.6l1.7-2.1l1.6-1.3l1.6-1.5l1.6-5.5l1.6 5.5l1.6 5.6l1.6-0.7l1.6-0.8l1.6-3.2l1.6 0.2l1.6 10.7l1.6 23.6l1.6 19.3l1.6 15.6l1.6-17.6l1.6-20.3l1.6-14.1l1.6-13.2l1.6-3.2l1.6-2.3l1.6 1l1.6-4.5l1.6 2.2l1.6-0.6l1.6 9l1.6-3.3l1.6-5l1.6-1.4l1.6 3.1l1.6-3h1.6l1.7 3.3l1.6 3.3l1.6-1.8l1.6 2.7l1.6 2l1.6-4.3l1.6-2.7l1.6-3.4l1.6 2.4l1.6 4.9l1.6-0.3l1.6 8.6l1.6 9.7l1.6 4.8l1.6 5.7l1.6-0.5l1.6-8.4l1.6-9.3l1.6-0.6l1.6-0.2l1.6-4.7l1.6-1.3l1.6-1.1l1.6 7.7l1.6 14.4l1.6 4.7l1.6 4.7l1.6 11.5l1.6-9.4l1.7-9l1.6-12.1l1.6-10.5l1.6-10.2l1.6 2.7h1.6l1.6 2.2l1.6 3.3l1.6 3.1l1.6 3.9l1.6-4.6l1.6 4.1l1.6-0.5l1.6-1.9l1.6-3l1.6 0.5l1.6-3.5l1.6 0.9l1.6 0.7l1.6 1.4l1.6 3.1l1.6 7.7l1.6 6.7l1.6 5.8l1.6 0.1l1.6 14.6l1.6-6.9l1.6-5.5l1.6-11.5l1.6-11.1l1.6-5.8l1.7 2.4l1.6-3.7l1.6-0.3l1.6 14.6l1.6 10.9l1.6 8.2l1.6 13l1.6-1.9l1.6-6.2l1.6-9.6l1.6-10.5l1.6-9.9l1.6-5.5l1.6 1.2l1.6-1.6l1.6-2.6l1.6-2.3h1.6l1.6 1.1l1.6-0.4l1.6 1.4l1.6 4.4l1.6 3.1l1.6-3.2l1.6 1.1l1.6 0.3l1.6-3.3l1.6 0.9l1.6 1.4l1.7 2.7l1.6 9.5l1.6 14l1.6 9.9l1.6 7.1l1.6-16.7l1.6-8.9l1.6-10.6l1.6-3l1.6-10.3l1.6 6.8l1.6-4.2l1.6 2.1l1.6-2.7l1.6 5l1.6 3.6l1.6 6.9l1.6 8.8l1.6-5.4l1.6-8.2l1.6 0.6l1.6-6.5l1.6-9.9l1.6 1.2l1.6 6.4l1.6 3.1l1.6 12.6l1.6 1l1.6 6.8l1.6 9.7l1.6 13.3l1.7-13.5l1.6-6.8l1.6-8.7l1.6-8.7l1.6-13.2l1.6 2l1.6-4.2l1.6-3.5h1.6l1.6-4.3l1.6 5.3l1.6-0.3l1.6-3.8l1.6-1.9h1.6h1.6l1.6 2.9l1.6 0.5l1.6 0.2l1.6 2.3l1.6 4.8l1.6 1.7l1.6-5.9l1.6 9.2l1.6 10.7l1.6 1.6l1.6 6.2l1.6 10.5l1.6 8.1l1.7-1.7l1.6-6.1l1.6-14.6l1.6-4.7l1.6-7.6l1.6-12.7l1.6-1.5l1.6 2.5l1.6 11.2l1.6 10.1l1.6 6.1l1.6 14.2l1.6 8.6l1.6 7.2l1.6-12.1l1.6-9.5l1.6-2.6l1.6-12.2l1.6-13.6l1.6-10.8l1.6 1.2l1.6 3.1l1.6 2.9l1.6 1.1l1.6 3.4l1.6 5.5l1.6 6.3l1.6 0.9l1.6-2.6l1.6-5.2l1.6-8l1.7-2.4l1.6-1.9l1.6-0.3l1.6 8.9l1.6 1.2l1.6 3.5l1.6 9.2l1.6 6.8l1.6-5.5l1.6-4.8l1.6-8.2l1.6-5.1l1.6-6.6l1.6-5.2l1.6 1.4l1.6 4l1.6-3.2l1.6-0.8l1.6-1.1l1.6 4.3l1.6-2.2l1.6 6.9l1.6 2.7l1.6 9.8l1.6 15.8l1.6 8.7l1.6 18.6l1.6-13l1.6-16.5l1.7-9.5l1.6-3.6l1.6-10.4l1.6-5.2l1.6 2.1l1.6 5.2l1.6 0.1l1.6-1.6l1.6-3.8l1.6-2.5l1.6 0.4l1.6-1.5l1.6-2.8l1.6 1.2l1.6 2.1l1.6 15.6l1.6 20.9l1.6 14.7l1.6 10.8l1.6-14.4l1.6-17.7l1.6-15.8l1.6-9.5l1.6-3.7l1.6 0.9l1.6-1.4l1.6 1.5l1.6 1l1.6 1.7l1.6-5l1.6 0.3l1.7 2.3l1.6-0.5l1.6-0.7l1.6-1.4l1.6 0.9l1.6 0.8l1.6 5.1l1.6 2.5l1.6 16.1l1.6 10l1.6 7.6l1.6 4.9l1.6 18.3l1.6 16.6l1.6-22.4l1.6-11.2l1.6-13.5l1.6-11.6l1.6-6.3l1.6-9.8l1.6-5.8l1.6-2l1.6-5.2l1.6 0.3l1.6 4.1l1.6-0.6l1.6 5.1l1.6 3.5l1.6 0.1l1.6-3l1.7 4.7l1.6 7.5l1.6-4.2l1.6-3.2l1.6-1.9l1.6-0.9l1.6-1.6l1.6-1.8l1.6 4.2l1.6 10.1l1.6 12.1l1.6 14l1.6 25.5l1.6 17.9l1.6-24.3l1.6-18.4l1.6-11l1.6-13.1l1.6-15.4l1.6 1.3l1.6-2.3l1.6 5.4l1.6-1.3l1.6-2.9l1.6 6l1.6-3.2l1.6 2.1l1.6 1.3l1.6 1.1l1.6-0.4l1.7-2.7l1.6 0.8l1.6 2l1.6-1.4l1.6-1l1.6-0.8l1.6 7.9l1.6-5l1.6-2.6l1.6 10.4l1.6 8.6l1.6 3.2l1.6 14.3l1.6 12.3l1.6 9l1.6-8.7l1.6-14.3l1.6-6.4l1.6-12.6l1.6-6.4l1.6-3.6l1.6 1.1l1.6 0.4l1.6 2.1l1.6-2.7l1.6 0.3l1.6-7.3l1.6 0.8l1.6-1.5l1.7-1.4l1.6 3.2l1.6 4.4l1.6 3.7l1.6 7.9l1.6 5.1l1.6 7.8l1.6 16.8l1.6-12.5l1.6 2.8l1.6-10.2l1.6-5.1l1.6-2.6l1.6-7.4l1.6 2.8l1.6-3.8l1.6-1.1l1.6 3.9l1.6 3.6l1.6 0.1l1.6-8.3l1.6-0.9l1.6-4.3l1.6-4.9l1.6-1.2l1.6 0.7l1.6-2.1l1.6-3.2l1.6 8.6l1.6 18.3l1.6 16.4l1.7 15.7l1.6-21.4l1.6-14.6l1.6-7.9l1.6-11.9l1.6-2.5l1.6-0.8l1.6 7.9l1.6 9.6l1.6 9.6l1.6 16.2l1.6-14.2l1.6-10.7l1.6-11l1.6-10.6l1.6-2l1.6-2.4l1.6 9.4l1.6-6.2l1.6 8.1l1.6 3l1.6-5.4l1.6-1.4l1.6-3.1l1.6-3.6l1.6 2.8l1.6-4.1l1.6 2.8l1.6 3l1.7 1.7l1.6 3.4l1.6 1.9l1.6 3.4h1.6l1.6 2.5l1.6 2.5l1.6 5.9l1.6 9l1.6 14.9l1.6 0.7l1.6-9.4l1.6-12.6l1.6-15.4l1.6-7l1.6 9l1.6-5.6l1.6-9.4l1.6-1.3l1.6 17.6l1.6 8.2l1.6 12.9l1.6 12.4l1.6 19l1.6-6.9l1.6-11.2l1.6-12l1.6-14.3l1.6-6.6l1.6 3.9l1.6-1.1l1.7-3.5l1.6-2.5l1.6 1.4l1.6-0.7l1.6-1.8l1.6 0.4l1.6 6.1l1.6-1.9l1.6-1.5l1.6-0.4l1.6-2.3l1.6-1.4l1.6-0.7l1.6-4.6l1.6 3.1H3132.1V500.5z"/>
<path class="s" fill="#E24D42" stroke="#E24D42" d="M1965.7 500.5V230h6l1.6-2l1.6 3.2l1.6 0.7l1.6 120l1.6-1.1l1.6 1.1l1.6-0.9l1.6-122.7l1.6 2.3l1.6 1.2l1.6-1.3l1.6 120l1.6-0.6l1.6 0.6l1.7 1.1h1.6l1.6-1l1.6 1.4l1.6-1.8l1.6-122.2l1.6 0.1l1.6 2.2l1.6 0.5l1.6 0.4h1.6l1.6-0.9l1.6-1l1.6 1.4l1.6-2.7l1.6-1.2l1.6-1.5l1.6 2.7l1.6-0.5l1.6-0.6l1.6 1.3l1.6 0.7l1.6-2.1h1.6l1.6-1.7l1.6 1.4l1.6 123.7l1.6 0.2l1.6-0.3l1.6 0.6l1.6 0.7l1.7 0.5l1.6-1.6l1.6 2.1l1.6-123.5l1.6-0.7l1.6-2.3l1.6 2.1l1.6-1.7l1.6-1l1.6 0.3l1.6 124.7l1.6 1.1l1.6-0.8l1.6 0.8l1.6-125.9l1.6 3.2l1.6 1.9l1.6-3l1.6 1.2l1.6 0.6l1.6 2.5l1.6-2.2l1.6-2.4l1.6-2l1.6 3.2l1.6-2.2l1.6 2.8l1.6 0.6l1.6 0.2l1.7-1l1.6-0.3l1.6-0.2l1.6 121.6l1.6 2.1l1.6 0.1l1.6-1.9l1.6 1.6l1.6-126.1l1.6 3.7l1.6-2.1l1.6 3.3l1.6-1l1.6-0.1l1.6-1.6l1.6-1.6l1.6 3.7l1.6 2l1.6-2.1l1.6-2l1.6 122.9l1.6 1.5l1.6-1l1.6-1.6l1.6-122.8l1.6 0.8l1.6-2.3l1.6-0.2l1.6 4.3l1.6-1.5l1.6-0.4l1.7 0.5l1.6 0.5l1.6 0.7l1.6 1l1.6-2.5l1.6-1.1l1.6 2.8l1.6-2.1l1.6-1.4l1.6-0.5l1.6 126.2l1.6 0.2l1.6-1.9l1.6-0.1l1.6-121l1.6 2l1.6-0.2l1.6 1.5l1.6-1.6l1.6 0.6l1.6 1.3l1.6 0.3l1.6-0.7l1.6-2.5l1.6 121.5l1.6 0.6l1.6 0.7h1.6l1.6-121.6l1.7 1.8l1.6-3.4l1.6-0.3l1.6 1.2l1.6-2.6l1.6 124.6l1.6-0.4l1.6-1l1.6 1.2h1.6l1.6-124.3l1.6-1.2l1.6-1.7l1.6 2.9l1.6 0.1l1.6 2.5l1.6-3.6l1.6-1.2l1.6 0.3l1.6 2.9l1.6-3l1.6 4h1.6l1.6-3.3l1.6 2l1.6-1.7l1.6-2.2l1.6 0.3l1.6 2.7l1.6 124.1l1.6-1.7l1.7 2.5l1.6-2.4l1.6 0.5l1.6 2.2l1.6-1.9l1.6 1.3l1.6-0.9l1.6 0.1l1.6 1.2l1.6-2.2l1.6-123l1.6 1.1l1.6-1l1.6 1.1l1.6-0.6l1.6 0.6l1.6 2.2l1.6-3.1l1.6 1.2l1.6 2.3l1.6 1.9l1.6-1.6l1.6 1.2l1.6-3l1.6 2.3l1.6 1.8l1.6 0.5l1.6-4.3l1.6-1.8l1.7-2.1l1.6-0.8l1.6 2.9l1.6 0.1l1.6-0.1l1.6 1.4l1.6 0.4l1.6 0.9l1.6 119.7l1.6 0.1l1.6 2.2l1.6-0.7l1.6-124.1l1.6 0.2l1.6 0.3l1.6 1.5l1.6-1.3l1.6-2.4l1.6 126.4l1.6-1.5l1.6 1.5l1.6-2.5l1.6 0.7l1.6 0.7l1.6 0.3l1.6 0.7l1.6-2.5l1.6-0.1l1.6-0.1l1.6 0.1l1.6 2.7l1.7-2.6l1.6 2.6l1.6-2.9l1.6-125.1h1.6l1.6-1l1.6 0.4l1.6-0.7l1.6 4.9l1.6-1l1.6-1.7l1.6-1.2l1.6 4.4h1.6l1.6-0.6l1.6 1.8l1.6-0.2l1.6 120l1.6 1l1.6-0.8l1.6 2.4l1.6-1l1.6 1.2l1.6-0.3l1.6-1.1l1.6-120.5l1.6-1.8l1.6-2.5l1.6-0.7l1.7 0.6l1.6-0.4l1.6 2.1l1.6-0.5l1.6-0.8l1.6 3.5l1.6 2.2l1.6-0.6l1.6 119.7l1.6-1.3l1.6 1.7h1.6l1.6-1.8l1.6 1.6l1.6-0.4l1.6-0.9l1.6-116.8l1.6-2.6l1.6-0.1l1.6-0.7l1.6 0.6l1.6-1.9l1.6 121.4l1.6 1.4l1.6 0.4l1.6-0.9l1.6-0.7l1.6-120.3l1.6 2l1.6-0.8l1.6-2.7l1.7-0.7l1.6-1.5l1.6 0.7l1.6 1.5l1.6-0.8l1.6-1.3l1.6-0.1l1.6 3.8l1.6 0.3l1.6-0.6l1.6 0.4l1.6 1.4l1.6-2.4l1.6 2.6l1.6-1.3l1.6 2.1l1.6-0.6l1.6-4.3l1.6-2.5l1.6 127l1.6-2.5h1.6l1.6 1.8l1.6 1l1.6-128.5l1.6 4.3l1.6 0.4l1.6 1.2l1.6 122.4l1.7 0.3l1.6-0.5l1.6-1.3l1.6-122.8l1.6 0.4l1.6-1.4l1.6 2.4l1.6 1.3l1.6-3.8l1.6 124l1.6-1.3l1.6 0.4l1.6-0.1l1.6 1.1l1.6 1.3l1.6-1.6l1.6-1l1.6 1.6l1.6-0.3l1.6-122.5l1.6 2.1l1.6-3.4l1.6-2.6l1.6 125.9l1.6 0.5l1.6 0.5l1.6 0.2l1.6-1.4l1.6 2.2l1.6-2.6l1.6 1.6l1.7 0.2l1.6-125.4l1.6-1.8l1.6 1.3l1.6-1.4l1.6 1.5l1.6-1.9l1.6 3.2l1.6 1.8l1.6-3.3l1.6-1.1l1.6 3.6l1.6-1.5l1.6 1.2l1.6 2.5l1.6 119.2l1.6 0.4l1.6 0.3l1.6 1.1l1.6 1l1.6-0.4l1.6-1.7l1.6-123.2l1.6-2.4l1.6-1.1l1.6 0.7l1.6 3.4l1.6-1.4l1.6 1.1l1.7-1.4l1.6 1.1l1.6 123.6l1.6 1.1l1.6-1.9l1.6-0.1l1.6 1.1l1.6-124l1.6-0.9l1.6 1.8l1.6 2.4l1.6 1.7l1.6-2.6h1.6l1.6-1.2l1.6-1.7l1.6-5.7l1.6-16.9l1.6 17.7l1.6 130.5l1.6-0.1h1.6l1.6-127.6l1.6 0.9l1.6 2.5l1.6-1.7l1.6-0.8l1.6 1.8l1.6 1.4l1.6-0.7l1.6 122.9l1.7 1.7l1.6 0.1l1.6-2.2l1.6 1.5l1.6 0.6l1.6-0.4l1.6-1.7l1.6-124.8l1.6 3.7l1.6-1.4l1.6 1.2l1.6-0.1l1.6-0.2l1.6 0.6l1.6 1l1.6-1.6l1.6 0.7l1.6 0.6l1.6 1.2l1.6-4l1.6 0.9l1.6 0.6l1.6 0.3l1.6-1l1.6 2.2l1.6 1.8l1.6-3.5l1.6-2l1.6 2.6l1.7-1.7l1.6 1.9l1.6 0.6l1.6-3.6l1.6-0.6l1.6-1.4l1.6 3.2l1.6 0.2l1.6 2.2l1.6-3l1.6 3.4l1.6-2.9l1.6-0.9l1.6-1.9l1.6-0.4l1.6 3.6l1.6-0.3l1.6-1.2l1.6-2.1l1.6 127.5l1.6-1.4l1.6 2.4l1.6-1.7l1.6-0.2l1.6 1.1l1.6-128.3l1.6-1.1l1.6 4.6l1.6-2.2l1.6 1.9l1.6 0.6l1.7-1l1.6 124.5l1.6 0.3l1.6 0.7l1.6-0.2l1.6-1.8l1.6 0.9l1.6-122.8l1.6-2.5l1.6 0.8l1.6 2.2l1.6-1.3l1.6 2l1.6-0.7l1.6-0.1l1.6 2.8l1.6-3l1.6 1.9l1.6 2.1l1.6-0.2l1.6-1.8l1.6-0.9l1.6-1.1l1.6 121.5l1.6 1l1.6 0.1l1.6 1.6l1.6-127.1l1.6 3.1l1.7 1.5l1.6 0.8l1.6 119.9l1.6-0.1l1.6-0.8l1.6 2.8l1.6-122.3l1.6 0.4l1.6-3.5l1.6 1.2l1.6 2.2l1.6 0.6l1.6-3.6l1.6-1.9l1.6 0.2l1.6-1.7l1.6 3.2l1.6-0.6l1.6-2.1l1.6 3.1l1.6 2.4l1.6 119.6l1.6 2.3l1.6-0.6l1.6-0.5l1.6-0.3l1.6-0.1l1.6 0.8l1.6 1.2l1.6-2.8l1.6 1.1l1.7-0.6l1.6 1.7l1.6-0.8l1.6-119.2l1.6 0.7h1.6l1.6 1.4l1.6 0.3l1.6-3.4l1.6-4l1.6-0.8l1.6-1.3l1.6 4.5l1.6-2l1.6-1.3l1.6 3.4h1.6l1.6 0.8l1.6-2.2l1.6 2.3l1.6 0.7l1.6-1.1l1.6-3.6l1.6 125.8l1.6-1.9l1.6 1.5l1.6-0.6h1.6l1.6-124.5l1.6 2.4l1.7 2.1l1.6-0.1l1.6-4l1.6-0.6l1.6 1.9l1.6 1.9l1.6 2.3l1.6 0.7l1.6 117.8l1.6-1.2l1.6 1.5l1.6-1.3l1.6 0.9l1.6 1.7l1.6-119.5l1.6-4.4l1.6-0.1l1.6 2.4l1.6 121.3l1.6-1.3l1.6-0.9l1.6 1.7l1.6-120.7l1.6-2.4l1.6-3.2l1.6 2.1l1.6 3l1.6 1.2l1.6 1.2l1.6-2.6l1.7-3.6l1.6 2.4l1.6 2.6l1.6-0.5l1.6-0.5l1.6 120.1l1.6 1.8l1.6-2.9l1.6 0.2l1.6-117.5l1.6-0.6l1.6-1.6l1.6 1.5l1.6 1.6l1.6-0.1l1.6 117.6l1.6 0.5l1.6 0.6l1.6-2.3l1.6 0.9l1.6-122.4l1.6 0.6l1.6-2.2l1.6 2.3l1.6 2.4l1.6 1.3l1.6-2.1l1.6-0.8l1.6 1.6l1.7-0.8l1.6-1.3l1.6 1.8l1.6 1l1.6-2.3l1.6 2.3l1.6-3.3l1.6 1.4l1.6 1.1l1.6 2l1.6-0.3l1.6 1.3l1.6-0.9l1.6 116.6l1.6 1.7l1.6 1l1.6-2.9l1.6 1.5l1.6-119.3l1.6-2.1l1.6-1.8l1.6-0.7l1.6-2l1.6 1.3l1.6 3.2l1.6 0.9l1.6-3.6l1.6 125.2l1.6-2.3l1.6 0.9l1.6 0.6l1.7 1l1.6-125.3l1.6-1.6l1.6-1.4l1.6-0.5l1.6 2l1.6 0.7l1.6 125.3l1.6-0.1l1.6-1.1l1.6 0.9l1.6-124.2l1.6 2.1l1.6-1.9l1.6 1.5l1.6-2.9l1.6 2.7h1.6l1.6 1.5l1.6 121.8l1.6-0.1l1.6 0.2l1.6-1.1l1.6 0.6l1.6-125.2l1.6 2.2l1.6 1.8l1.6 0.8l1.6 119.4l1.7-0.1l1.6 1.8l1.6-1.2l1.6-121l1.6-0.5h1.6l1.6-3.2l1.6 126l1.6-1.2l1.6-1l1.6 1.7l1.6-125l1.6 2l1.6-3.1l1.6 1.1l1.6-2.4l1.6 4.1l1.6-1l1.6 122.4l1.6 1.6l1.6-0.4l1.6-1l1.6 1.9l1.6-0.6l1.6 0.4l1.6-0.7l1.6 1.2l1.6-126.4l1.6 1.4l1.6-0.7l1.6-0.6l1.7-1.4l1.6 2.4l1.6 125.1l1.6-0.9l1.6 0.1l1.6 0.5l1.6-122.9l1.6-1.5l1.6 2.7l1.6-3.6l1.6 2.3l1.6 0.7l1.6-0.9l1.6-2l1.6 124.5H3132.1V500.5z"/>
<path class="s" fill="#1F78C1" stroke="#1F78C1" d="M1965.7 500.5V217.6h6h1.6l1.6 0.3l1.6 0.5l1.6-0.7l1.6 0.1l1.6-0.7l1.6-0.5l1.6-0.3l1.6 1l1.6-0.2l1.6 0.7l1.6-0.6l1.6-0.3l1.6-0.4l1.7 0.3l1.6 0.7l1.6-0.2l1.6 0.3l1.6 3.9l1.6-3.4l1.6 0.8l1.6-0.7l1.6 1l1.6-1.3l1.6 0.2l1.6 0.4l1.6-0.1l1.6-0.6l1.6-0.2l1.6 1.7l1.6 0.3h1.6l1.6-0.8l1.6-0.4l1.6-0.1l1.6-1.4l1.6 6.1l1.6-5.9l1.6 0.7l1.6-0.6l1.6 0.3l1.6-0.4l1.6 0.9l1.6 0.4l1.6-0.3l1.7 0.5l1.6 0.4l1.6-1.6l1.6-0.1l1.6 0.9l1.6 0.4l1.6-0.4l1.6 0.2l1.6-0.4l1.6-0.5l1.6 1.3l1.6 0.9l1.6-0.8l1.6-0.4l1.6 0.3l1.6 0.2l1.6-0.2l1.6 0.9l1.6-1.4l1.6-0.3l1.6-0.2l1.6 0.6l1.6-0.9l1.6 0.5l1.6-0.2l1.6 0.4l1.6-0.5l1.6-1.1l1.6 1.3l1.7 0.4l1.6 1.6l1.6-1.1l1.6-0.5l1.6 0.9l1.6-0.2l1.6-0.3l1.6-0.8l1.6 0.2l1.6 0.9l1.6 0.1l1.6-0.6l1.6 2.8l1.6-2.1l1.6-0.3l1.6-0.7l1.6 1.1l1.6-0.8l1.6-0.1l1.6 0.4l1.6-0.7l1.6-0.3l1.6 0.1l1.6 0.1l1.6 0.5l1.6-0.2l1.6-0.6l1.6 1.4l1.6 0.3l1.6 4l1.6-4.9l1.7 0.2l1.6 0.5l1.6-0.1l1.6-0.8l1.6 0.1l1.6-0.4l1.6 0.5l1.6 0.5l1.6-0.7l1.6-0.1l1.6-80.2h1.6l1.6 1l1.6 80l1.6-0.4l1.6 0.4l1.6-0.3l1.6 0.5l1.6-1.3l1.6-0.3l1.6-0.2l1.6 0.1l1.6 0.3l1.6 0.7l1.6-0.4l1.6-0.5l1.6-0.9l1.6 0.9l1.6-1.1l1.7 1.5l1.6 0.7l1.6-0.9l1.6 0.4l1.6-0.3l1.6 0.6h1.6l1.6-0.3h1.6l1.6 0.6l1.6-0.7l1.6 0.2l1.6 0.2l1.6-0.4h1.6l1.6 0.7h1.6l1.6 0.1h1.6l1.6-0.4l1.6-0.4l1.6-0.3l1.6-0.1l1.6-0.1l1.6 0.8l1.6-0.6l1.6 0.6l1.6 3.1l1.6-3.6l1.6 1.1l1.6-1.1l1.7 0.2l1.6 0.7l1.6-0.2l1.6 0.5l1.6-1.4l1.6-0.2l1.6 0.1l1.6 0.5l1.6-0.2l1.6-0.3l1.6 0.5l1.6 0.6l1.6-0.3l1.6 1l1.6 0.4l1.6-0.5l1.6-0.6l1.6-1.2l1.6 1.7h1.6l1.6 0.5l1.6-1.1l1.6 0.2l1.6-0.3l1.6-0.5l1.6 5.2l1.6-5.4l1.6-0.9l1.6 0.5l1.7-0.3l1.6-0.2h1.6l1.6 0.6l1.6-0.2l1.6 0.1l1.6 0.6l1.6-0.7l1.6 0.6l1.6-1.6l1.6 0.7l1.6 1.7l1.6 0.2l1.6-0.7l1.6-0.5l1.6-0.6l1.6 0.4l1.6 0.4l1.6 0.3h1.6l1.6-1.2l1.6-0.5l1.6 0.7l1.6-0.3l1.6 0.6l1.6 0.1l1.6-0.9l1.6-0.5l1.6 1l1.6 0.7l1.6-0.1l1.7-0.1l1.6-0.1l1.6 0.9l1.6 0.4l1.6-0.1l1.6 0.4l1.6-1.1l1.6 1.2l1.6-0.7l1.6 0.6l1.6-0.3l1.6-0.3l1.6 0.4l1.6 0.1l1.6-1.5l1.6 0.2l1.6-0.1l1.6-0.4l1.6 0.6l1.6-0.3h1.6l1.6-0.5l1.6-0.2l1.6 0.4l1.6 5.5l1.6-5.3l1.6-0.1h1.6l1.6 0.3l1.7 0.5l1.6-1.1h1.6l1.6 0.5l1.6-1.2l1.6 0.9l1.6-0.6l1.6-0.3l1.6 2l1.6-0.5l1.6 1.2l1.6-2.1l1.6 0.7l1.6-0.3l1.6 0.4l1.6-1l1.6 0.2l1.6-0.7l1.6 0.8l1.6 0.7l1.6-0.9l1.6 0.5l1.6 0.8l1.6-0.3l1.6-0.6l1.6 0.2l1.6 0.3l1.6-0.1l1.6 0.3l1.6-0.1h1.6h1.7l1.6-0.2h1.6l1.6-0.1l1.6 0.2l1.6 0.2l1.6-0.8l1.6-0.1l1.6 0.4l1.6 0.3l1.6-1.1l1.6 0.3l1.6 0.9l1.6 3.9l1.6-4.6l1.6 1.3l1.6-0.9l1.6-0.3l1.6 0.5l1.6 0.1h1.6l1.6 1l1.6-0.4l1.6-0.7h1.6l1.6 0.2h1.6l1.6 0.4l1.6 0.5l1.7-0.9l1.6-0.3l1.6-0.8l1.6 0.6l1.6 1l1.6 0.4l1.6 0.2l1.6-1.6l1.6-0.4l1.6 1.3l1.6-0.3h1.6l1.6 9l1.6-8.5l1.6-0.4l1.6-0.3l1.6 0.3l1.6-0.3l1.6 0.4h1.6l1.6-0.1l1.6-0.4l1.6-0.4l1.6 0.6l1.6 0.8h1.6l1.6-0.7l1.6-0.6l1.6 1l1.6-0.7l1.6 0.5l1.7 0.5l1.6-0.6l1.6-0.4l1.6-0.5l1.6-0.9l1.6 1.2l1.6-0.6l1.6 0.7l1.6 0.2l1.6-0.5l1.6-0.6l1.6-0.2l1.6 6.4l1.6-5.8l1.6 0.5l1.6 1l1.6-0.5l1.6 0.9l1.6-0.3l1.6-1.3l1.6 0.2l1.6 0.2l1.6-0.1l1.6 0.1l1.6 1.2l1.6-0.2l1.6 0.6l1.6-0.7l1.6-0.1l1.7 0.5l1.6-0.1l1.6 1l1.6-0.7l1.6-0.3l1.6-0.6l1.6 0.5l1.6-0.4l1.6 5.3l1.6-6.1l1.6 0.4l1.6-0.1l1.6-0.4l1.6 0.2l1.6-1.3l1.6 0.1l1.6 0.8l1.6-0.2l1.6-0.1l1.6 0.5l1.6-0.2l1.6 0.6l1.6-0.5l1.6 1.5l1.6-0.5l1.6-0.3l1.6 0.8l1.6 0.4l1.6 0.2l1.6-1.5l1.6-0.7l1.7 0.8l1.6-0.6l1.6 4.4l1.6-4l1.6 0.6h1.6l1.6-0.3l1.6 0.3l1.6-1.3h1.6l1.6 0.8l1.6-1l1.6 1l1.6 0.6l1.6 0.9l1.6-0.6l1.6-1.1l1.6 0.8l1.6-0.1l1.6 0.2l1.6-0.3l1.6 0.2l1.6 0.4l1.6 0.1l1.6 0.1l1.6-1.1l1.6 7.1l1.6-6.8l1.6-0.7l1.7 0.8l1.6 0.1l1.6 0.3l1.6-0.5l1.6-0.3l1.6 0.4l1.6-0.2l1.6-0.2l1.6-0.9l1.6 0.9l1.6-0.2l1.6-1.1l1.6-0.7l1.6 1.5l1.6 0.8l1.6-0.5l1.6 0.9l1.6 0.3l1.6-0.1l1.6-0.8l1.6 0.8l1.6-0.5h1.6l1.6-1.7l1.6 0.1l1.6 9.1l1.6-9.1l1.6 1.1l1.6 0.4l1.6-0.9l1.6-0.2l1.7-0.2l1.6 0.9l1.6 1l1.6-0.7l1.6 0.1l1.6-0.7l1.6 0.3l1.6-0.3l1.6 0.3l1.6 0.2l1.6-0.9l1.6 0.6l1.6 14.9l1.6 16.5l1.6-18.6l1.6-11.8l1.6 0.3l1.6-0.1l1.6 0.6l1.6-1.9l1.6 0.8l1.6-1.4l1.6-1l1.6 0.1l1.6 0.6l1.6 0.7l1.6-0.6l1.6-0.5l1.6-0.4l1.7-0.3l1.6 0.5l1.6 0.2l1.6 1l1.6 0.6l1.6 1l1.6-0.7l1.6 1.3l1.6-0.6l1.6-0.7l1.6-0.3l1.6-0.3l1.6 0.5h1.6l1.6-0.2l1.6 0.5l1.6-1.6l1.6 4.5l1.6-3.2l1.6 0.1l1.6-0.6l1.6 0.3l1.6 0.3l1.6-0.4l1.6 1l1.6-1.8l1.6 0.1l1.6 1.1h1.6l1.6 0.1l1.6-0.1l1.7-0.5l1.6-0.4l1.6 1.5l1.6-0.8l1.6 0.1l1.6 0.8l1.6-0.9l1.6-0.2l1.6 0.6l1.6-0.5l1.6-0.3l1.6 1.4l1.6-0.8l1.6 0.4l1.6-0.6l1.6-0.1l1.6-0.3l1.6-0.9l1.6 0.5l1.6 0.4l1.6 0.8l1.6-0.7l1.6-0.4l1.6 0.2l1.6 1.3l1.6-1l1.6 6.7l1.6-6.2l1.6 0.1l1.6-0.3l1.7-0.1l1.6-125.8h1.6l1.6 1l1.6 124.3l1.6-0.9l1.6 0.5l1.6 1.2l1.6-1.5l1.6-108.4h1.6l1.6 1l1.6 109.2l1.6-1.5l1.6-0.1l1.6 0.1l1.6 0.3l1.6 0.1l1.6 0.4l1.6-1.6l1.6-0.1l1.6 0.6l1.6 0.4l1.6 0.2l1.6 0.4l1.6 0.3l1.6-0.7l1.6 0.5l1.6 0.1l1.6-0.5l1.7-1.4l1.6 1.1l1.6 1l1.6-0.3l1.6 0.4l1.6-0.7l1.6-0.2l1.6-0.6l1.6 0.7l1.6 0.7l1.6-0.3l1.6-0.2l1.6-0.2l1.6-0.1l1.6-1.3l1.6 0.8h1.6l1.6 8l1.6-7.6l1.6-0.1l1.6 0.5l1.6 0.3l1.6-0.9l1.6 0.3l1.6 0.7l1.6 1.1h1.6l1.6 0.7l1.6-1.3l1.7-0.3l1.6-0.9l1.6 0.2l1.6-0.4l1.6 0.1l1.6 0.4l1.6 0.6l1.6 0.1l1.6-0.1l1.6-0.3l1.6 0.1l1.6-0.9l1.6 0.2l1.6 0.4l1.6 0.3l1.6-0.9l1.6-0.3l1.6 0.3l1.6 0.8l1.6 0.4l1.6-0.4l1.6-0.3l1.6 0.2l1.6-0.4l1.6-0.2l1.6 0.4l1.6 0.5l1.6 0.2l1.6-0.9l1.6-1.1l1.6 1l1.7 0.8l1.6 0.3l1.6-1.1l1.6 5.7l1.6-7l1.6 2l1.6 0.5l1.6-1l1.6 1l1.6-0.7l1.6-0.3l1.6 0.5l1.6-0.4l1.6 0.3h1.6l1.6-0.2l1.6 0.1l1.6-1.2l1.6 0.1l1.6-0.3l1.6 0.7l1.6-0.2l1.6 0.4l1.6 0.4l1.6 0.4l1.6-0.8l1.6-0.2l1.6 1l1.6 0.1l1.7 0.1l1.6-0.1l1.6-1.2l1.6-0.3l1.6 0.5l1.6 0.6l1.6 0.4l1.6-0.8l1.6 0.9l1.6 1l1.6-34.8l1.6 1l1.6 31.3l1.6-0.1l1.6 1.4l1.6 1.6l1.6-0.6l1.6 2.4l1.6-128.5h1.6l1.6 1l1.6 123.7l1.6-0.6l1.6-1l1.6 0.1l1.6 0.1l1.6 0.1l1.6 1.3l1.6-0.1l1.6 0.9l1.6 0.5l1.7 0.5l1.6-1.3h1.6l1.6-1l1.6-0.1l1.6 0.8l1.6 0.8l1.6-0.7l1.6-1.3l1.6 0.9l1.6 1.1l1.6-1.7l1.6-0.2l1.6-0.6h1.6H3132.1V500.5z"/>
</g>
<text x="1959.3" y="90.1" text-anchor="end">1.0 s</text>
<text x="1959.3" y="225.9" text-anchor="end">500 ms</text>
<text x="1959.3" y="361.8" text-anchor="end">250 ms</text>
<text x="1959.3" y="497.6" text-anchor="end">125 ms</text>
<text x="2075" y="524.2" text-anchor="middle">14:00</text>
<text x="2267.4" y="524.2" text-anchor="middle">14:30</text>
<text x="2459.8" y="524.2" text-anchor="middle">15:00</text>
<text x="2652.2" y="524.2" text-anchor="middle">15:30</text>
<text x="2844.6" y="524.2" text-anchor="middle">16:00</text>
<text x="3037" y="524.2" text-anchor="middle">16:30</text>
<text class="hd" x="3605.6" y="102.2" text-anchor="end">current</text>
<rect x="3164" y="114" width="462" height="48" fill="#262628"/>
<rect x="3184.4" y="137" width="24" height="7" rx="2.5" fill="#7EB26D"/>
<text class="lg" x="3222.4" y="143.8">172.16.5.33:47912-p95</text>
<text class="lg" x="3605.6" y="143.8" text-anchor="end">214 ms</text>
<rect x="3184.4" y="185" width="24" height="7" rx="2.5" fill="#EAB839"/>
<text class="lg" x="3222.4" y="191.8">172.16.5.33:47913-p95</text>
<text class="lg" x="3605.6" y="191.8" text-anchor="end">255 ms</text>
<rect x="3164" y="210" width="462" height="48" fill="#262628"/>
<rect x="3184.4" y="233" width="24" height="7" rx="2.5" fill="#6ED0E0"/>
<text class="lg" x="3222.4" y="239.8">172.16.5.33:47912-p99</text>
<text class="lg" x="3605.6" y="239.8" text-anchor="end">252 ms</text>
<rect x="3184.4" y="281" width="24" height="7" rx="2.5" fill="#EF843C"/>
<text class="lg" x="3222.4" y="287.8">172.16.5.33:47913-p99</text>
<text class="lg" x="3605.6" y="287.8" text-anchor="end">458 ms</text>
<rect x="3164" y="306" width="462" height="48" fill="#262628"/>
<rect x="3184.4" y="329" width="24" height="7" rx="2.5" fill="#E24D42"/>
<text class="lg" x="3222.4" y="335.8">172.16.5.33:47912-p999</text>
<text class="lg" x="3605.6" y="335.8" text-anchor="end">469 ms</text>
<rect x="3184.4" y="377" width="24" height="7" rx="2.5" fill="#1F78C1"/>
<text class="lg" x="3222.4" y="383.8">172.16.5.33:47913-p999</text>
<text class="lg" x="3605.6" y="383.8" text-anchor="end">507 ms</text>
</g>
<g class="graph" id="graph3">
<path d="M110 644h1056.2v2h-1056.2zM110 746h1056.2v2h-1056.2zM110 848h1056.2v2h-1056.2zM110 950h1056.2v2h-1056.2zM110 1052h1056.2v2h-1056.2z" fill="rgba(200,200,200,0.245)"/>
<path d="M204 644h2v408h-2zM380 644h2v408h-2zM556 644h2v408h-2zM732 644h2v408h-2zM908 644h2v408h-2zM1084 644h2v408h-2z" fill="rgba(200,200,200,0.245)"/>
<clipPath id="cp3"><rect x="110" y="633" width="1056.2" height="419"/></clipPath>
<g clip-path="url(#cp3)">
<path class="s" fill="#7EB26D" stroke="#7EB26D" d="M104 1060.5V1051.9h6h1.5h1.4h1.5h1.5h1.4h1.5h1.5h1.4h1.5h1.5h1.4h1.5h1.5h1.4h1.5h1.5h1.4h1.5h1.5h1.4h1.5h1.5h1.4h1.5h1.5h1.4h1.5h1.5h1.4h1.5h1.5h1.4h1.5h1.5h1.4h1.5h1.5h1.4h1.5h1.5h1.4h1.5h1.5h1.4h1.5h1.5h1.4h1.5h1.5h1.4h1.5h1.5h1.4h1.5h1.5h1.4h1.5h1.5h1.4h1.5h1.5h1.5h1.4h1.5h1.5h1.4h1.5h1.5h1.4h1.5h1.5h1.4h1.5h1.5h1.4h1.5h1.5h1.4h1.5h1.5h1.4h1.5h1.5h1.4h1.5h1.5h1.4h1.5h1.5h1.4h1.5h1.5h1.4h1.5h1.5h1.4h1.5h1.5h1.4h1.5h1.5h1.4h1.5h1.5h1.4h1.5h1.5h1.4h1.5h1.5h1.4h1.5h1.5h1.4h1.5h1.5h1.4h1.5h1.5h1.4h1.5h1.5h1.4h1.5h1.5h1.4h1.5h1.5h1.4h1.5h1.5h1.4h1.5h1.5h1.4h1.5h1.5h1.4h1.5h1.5h1.4h1.5h1.5h1.4h1.5h1.5h1.4h1.5h1.5h1.4h1.5h1.5h1.4h1.5h1.5h1.4h1.5h1.5h1.4h1.5h1.5h1.4h1.5h1.5h1.4h1.5h1.5h1.4h1.5h1.5h1.4h1.5h1.5h1.4h1.5h1.5h1.4h1.5h1.5h1.4h1.5h1.5h1.5h1.4h1.5h1.5h1.4h1.5h1.5h1.4h1.5h1.5h1.4h1.5h1.5h1.4h1.5h1.5h1.4h1.5h1.5h1.4h1.5h1.5h1.4h1.5h1.5h1.4h1.5h1.5h1.4h1.5h1.5h1.4h1.5h1.5h1.4h1.5h1.5h1.4h1.5h1.5h1.4h1.5h1.5h1.4h1.5h1.5h1.4h1.5h1.5h1.4h1.5h1.5h1.4h1.5h1.5h1.4h1.5h1.5h1.4h1.5h1.5h1.4h1.5h1.5h1.4h1.5h1.5h1.4h1.5h1.5h1.4h1.5h1.5h1.4h1.5h1.5h1.4h1.5h1.5h1.4h1.5h1.5h1.4h1.5h1.5h1.4h1.5h1.5h1.4h1.5h1.5h1.4h1.5h1.5h1.4h1.5h1.5h1.4h1.5h1.5h1.4h1.5h1.5h1.4h1.5h1.5h1.4h1.5h1.5h1.4h1.5h1.5h1.4h1.5h1.5h1.4h1.5h1.5h1.5h1.4h1.5h1.5h1.4h1.5h1.5h1.4h1.5h1.5h1.4h1.5h1.5h1.4h1.5h1.5h1.4h1.5h1.5h1.4h1.5h1.5h1.4h1.5h1.5h1.4h1.5h1.5h1.4h1.5h1.5h1.4h1.5h1.5h1.4h1.5h1.5h1.4h1.5h1.5h1.4h1.5h1.5h1.4h1.5h1.5h1.4h1.5h1.5h1.4h1.5h1.5h1.4h1.5h1.5h1.4h1.5h1.5h1.4h1.5h1.5h1.4h1.5h1.5h1.4h1.5h1.5h1.4h1.5h1.5h1.4h1.5h1.5h1.4h1.5h1.5h1.4h1.5h1.5h1.4h1.5h1.5h1.4h1.5h1.5h1.4h1.5h1.5h1.4h1.5h1.5h1.4h1.5h1.5h1.4h1.5h1.5h1.4h1.5h1.5h1.4h1.5h1.5h1.4h1.5h1.5h1.4h1.5h1.5h1.4h1.5h1.5h1.4h1.5h1.5h1.4h1.5h1.5h1.4h1.5h1.5h1.5h1.4h1.5h1.5h1.4h1.5h1.5h1.4h1.5h1.5h1.4h1.5h1.5h1.4h1.5h1.5h1.4h1.5h1.5h1.4h1.5h1.5h1.4h1.5h1.5h1.4h1.5h1.5h1.4h1.5h1.5h1.4h1.5h1.5h1.4h1.5h1.5h1.4h1.5h1.5h1.4h1.5h1.5h1.4h1.5h1.5h1.4h1.5h1.5h1.4h1.5h1.5h1.4h1.5h1.5h1.4h1.5h1.5h1.4h1.5h1.5h1.4h1.5h1.5h1.4h1.5h1.5h1.4h1.5h1.5h1.4h1.5h1.5h1.4h1.5h1.5h1.4h1.5h1.5h1.4h1.5h1.5h1.4h1.5h1.5h1.4h1.5h1.5h1.4h1.5h1.5h1.4h1.5h1.5h1.4h1.5h1.5h1.4h1.5h1.5h1.4h1.5h1.5h1.4h1.5h1.5h1.4h1.5h1.5h1.4h1.5h1.5h1.4h1.5h1.5h1.4h1.5h1.5h1.5h1.4h1.5h1.5h1.4h1.5h1.5h1.4h1.5h1.5h1.4h1.5h1.5h1.4h1.5h1.5h1.4h1.5h1.5h1.4h1.5h1.5h1.4h1.5h1.5h1.4h1.5h1.5h1.4h1.5h1.5h1.4h1.5h1.5h1.4h1.5h1.5h1.4h1.5h1.5h1.4h1.5h1.5h1.4h1.5h1.5h1.4h1.5h1.5h1.4h1.5h1.5h1.4h1.5h1.5h1.4h1.5h1.5h1.4h1.5h1.5h1.4h1.5h1.5h1.4h1.5h1.5h1.4h1.5h1.5h1.4h1.5h1.5h1.4h1.5h1.5h1.4h1.5h1.5h1.4h1.5h1.5h1.4h1.5h1.5h1.4h1.5h1.5h1.4h1.5h1.5h1.4h1.5h1.5h1.4h1.5h1.5h1.4h1.5h1.5h1.4h1.5h1.5h1.4h1.5h1.5h1.4h1.5h1.5h1.4h1.5h1.5h1.4h1.5h1.5h1.4h1.5h1.5h1.4h1.5h1.5h1.5h1.4h1.5h1.5h1.4h1.5h1.5h1.4h1.5h1.5h1.4h1.5h1.5h1.4h1.5h1.5h1.4h1.5h1.5h1.4h1.5h1.5h1.4h1.5h1.5h1.4h1.5h1.5h1.4h1.5h1.5h1.4h1.5h1.5h1.4h1.5h1.5h1.4h1.5h1.5h1.4h1.5h1.5h1.4h1.5h1.5h1.4h1.5h1.5h1.4h1.5h1.5h1.4h1.5h1.5h1.4h1.5h1.5h1.4h1.5H1172.2V1060.5z"/>
<path class="s" fill="#EAB839" stroke="#EAB839" d="M104 1060.5V969.7h6l1.5 4.9l1.4-4.1l1.5 2.8l1.5 1l1.4 5.3l1.5-2.9l1.5 4.6l1.4-0.1l1.5-1.5l1.5 3.5l1.4-0.6l1.5 0.3l1.5-2.4l1.4-0.4l1.5 0.7l1.5 0.2l1.4 2.3l1.5-2.4l1.5 2.6l1.4-4.4l1.5 1.4l1.5 3.1l1.4 0.2l1.5-4.1l1.5 3.8l1.4-2.2l1.5-2l1.5 2.5l1.4-4.3l1.5-3.7l1.5 2.4l1.4-0.8l1.5 2.8l1.5 0.7l1.4-1.4l1.5-2.2l1.5 0.5l1.4-5l1.5 3.5l1.5 0.6l1.4-1.4l1.5-2.6l1.5 0.6l1.4-0.2l1.5 4l1.5-1.1l1.4-0.8l1.5 6.6l1.5-0.4l1.4-3.2l1.5-0.1l1.5 1.1l1.4 0.4l1.5 0.9l1.5 3.4l1.4 0.5l1.5 4.5l1.5-1.1l1.4 1l1.5-7.6l1.5 1.4l1.5 2.2l1.4-1.4l1.5 0.9l1.5-0.7l1.4-2.4l1.5 0.9l1.5-3.2l1.4 1.5l1.5 1.8l1.5-1.3l1.4 5.1l1.5-3.9l1.5-1l1.4-0.2l1.5-0.5l1.5 2.3l1.4-4.4l1.5-0.2l1.5 2.2l1.4-5l1.5 2.4l1.5-4.1l1.4-0.2l1.5-0.6l1.5 2.8l1.4 4.1l1.5 4.2l1.5-6.8l1.4 1.4l1.5 0.5l1.5-3.4l1.4 2.1l1.5 1.8l1.5 2l1.4 1.2l1.5 4.9l1.5-0.9l1.4-7.2l1.5-1l1.5 7.8l1.4-0.4l1.5-4.4l1.5-0.5l1.4 1.7l1.5-1.3l1.5 5.3l1.4-5.4l1.5 0.9l1.5 0.1l1.4 0.4l1.5-0.7l1.5 0.2l1.4 0.9l1.5-4.2l1.5-1.2l1.4 1.9l1.5-2.9l1.5-2.1l1.4 0.8l1.5 2.2l1.5 1.2l1.4 1.5l1.5-0.7l1.5-3l1.4-1.6l1.5 0.7l1.5-3.5l1.4 5.8l1.5-0.1l1.5-1.9l1.4-3.4l1.5 3.4l1.5 1.7l1.4 3.5l1.5 1.8l1.5 1.6l1.4-2.3l1.5 1l1.5-1l1.4 2.3l1.5-5.4l1.5 3.8l1.4 4.2l1.5-3.9l1.5-2.2l1.4-1.9l1.5 1.5l1.5-2.6l1.4-1.5l1.5 3l1.5 2.7l1.4 1.6l1.5-3.1l1.5-2.4l1.4 0.5l1.5-0.8l1.5-2l1.4 0.4l1.5-0.5l1.5 2.3l1.4 0.5l1.5-1l1.5-1.8l1.4-1.1l1.5-0.8l1.5-0.9l1.4 3.8l1.5 0.2l1.5-3.9l1.4 4.7l1.5-0.1l1.5 1.1l1.4-0.1l1.5-0.1l1.5 3.5l1.4 2.5l1.5-5.1l1.5 1.2l1.4-2.2l1.5 1.2l1.5-0.7l1.5-1.9l1.4 0.4l1.5 2.1l1.5 1.4l1.4-1.7l1.5-0.2l1.5 0.6l1.4 3.1l1.5 5.1l1.5-4.8l1.4-2.2l1.5-0.3l1.5-0.8l1.4-0.8l1.5 3.1l1.5-1.3l1.4 0.8l1.5-3.6l1.5-0.5l1.4-1.4l1.5-1.4l1.5 0.4l1.4 3.2l1.5-1.4l1.5 5.6l1.4-4.3l1.5-1.6l1.5-2.4l1.4 0.5l1.5 4.2l1.5 0.9l1.4-3.4l1.5 6.2l1.5-2.1l1.4 7.5l1.5-3l1.5-2.9l1.4-0.8l1.5-0.6l1.5 1l1.4-1.7l1.5-1.6l1.5-0.2l1.4 5.4l1.5-0.6l1.5 1.7l1.4-2.5l1.5-2.4l1.5 3.8l1.4 0.3l1.5-2.3l1.5 0.7l1.4-2.8l1.5-0.1l1.5 3.6l1.4-2.1l1.5-1.1l1.5 4l1.4-3.7l1.5 2.2l1.5 1.7l1.4-1.3l1.5 0.1l1.5 2.2l1.4-1.2l1.5-3l1.5-2l1.4-1.4l1.5 2.6l1.5-1.6l1.4-3.9l1.5 2.2l1.5 3l1.4 1l1.5-2.1h1.5l1.4 1.2l1.5 0.2l1.5 0.8l1.4-2.3l1.5 5.3l1.5-4.1l1.4 2.1l1.5 4.7l1.5-3.6l1.4 3.2l1.5-2.3l1.5-3.2l1.4 3.3l1.5-1.6l1.5-2.2l1.4 2.2l1.5-0.4l1.5-2.2l1.4-1.3l1.5 1.4l1.5-0.6l1.4-3.7l1.5 7l1.5-2.5l1.4 4l1.5-0.8l1.5-7.6l1.4 3.4l1.5-1.9l1.5 2.3l1.4-1.8l1.5 0.6l1.5 2.8l1.4-0.7l1.5-0.4l1.5-3l1.4 2.9l1.5-2l1.5 1.8l1.4-2.5l1.5 2.9l1.5-1.7l1.5 3l1.4-0.1l1.5-0.9l1.5-0.3l1.4 1.8l1.5 0.8l1.5-0.1l1.4 1l1.5-2.3l1.5 0.1l1.4-2.1l1.5-0.7l1.5 0.5l1.4 3.5l1.5-2.9l1.5-3.8l1.4 5.4l1.5 0.3l1.5 4.5l1.4-7.1l1.5 2.7l1.5-5.1l1.4 7.5l1.5-0.3l1.5 0.1l1.4-1.3l1.5-2.1l1.5-3.4l1.4-0.2l1.5-0.7l1.5 1.1l1.4-0.4l1.5-2.3l1.5-0.2l1.4 4.7l1.5-0.2l1.5 2.8l1.4-2.1l1.5 5.6l1.5-4.1l1.4 7.5l1.5-5.1l1.5-0.7l1.4-4.6l1.5 2.7l1.5 2.6l1.4 2.5l1.5-5.5l1.5 1.4l1.4-0.9l1.5 2l1.5 0.1l1.4-5.3l1.5-4.8l1.5 3.3l1.4 1.3l1.5 3l1.5-3.5l1.4 1.9l1.5 1.1l1.5 2.3l1.4-0.5l1.5-2.2l1.5-3.7l1.4 3.9l1.5-4l1.5 2l1.4-1.5l1.5 2l1.5 0.5l1.4 0.1l1.5-5.7l1.5 6.9l1.4-0.2l1.5-1.6l1.5 5.9l1.4-3.6l1.5 3.3l1.5 0.4l1.4-1l1.5 1.2l1.5 2.6l1.4-3.4l1.5-0.2l1.5 2l1.4-1.5l1.5 0.8l1.5-4.5l1.4 2.9l1.5-2.3l1.5-3l1.4 3.3l1.5 1.6l1.5 1.2l1.4-0.3l1.5-3.6l1.5-1.2l1.4-0.9l1.5-6.2l1.5 4.2l1.4 0.2l1.5-0.5l1.5 0.6l1.4-0.9l1.5 0.4l1.5-2.8l1.4 0.6l1.5 2.2l1.5 4.8l1.4-5.4l1.5 3.1l1.5 0.2l1.4-0.2l1.5 3.4l1.5 0.7l1.4 0.9l1.5 0.7l1.5-0.5l1.4 1.8l1.5-1.6l1.5 2.2l1.5 0.8l1.4-2.4l1.5-0.5l1.5 1.9l1.4-3.4l1.5-2.3l1.5-2.9l1.4 3.4l1.5 0.8l1.5 1.9l1.4-3.3l1.5 3.3l1.5 0.8l1.4-2.3l1.5 3.5l1.5-6l1.4-0.5l1.5-0.6l1.5 2.6l1.4 2.1l1.5-3.4l1.5 0.2l1.4-2.1l1.5 0.8l1.5 6.7l1.4-2.6l1.5 0.4l1.5-3.9l1.4 1.7l1.5-0.3l1.5 0.3l1.4-1l1.5-0.5l1.5 3.2l1.4 5.8l1.5 0.6l1.5-4.2l1.4 2.8l1.5 0.3l1.5-1l1.4-2.3l1.5-0.3l1.5 1.2l1.4 0.4l1.5-2.8l1.5-0.3l1.4-1l1.5-2l1.5 6.9l1.4 1.4l1.5-1.7l1.5-0.5l1.4 1.4l1.5-2.2l1.5-1.5l1.4-0.3l1.5 0.4l1.5-2.2l1.4-1.9l1.5-1.6l1.5 0.2l1.4 0.7l1.5 3.1l1.5 1.8l1.4-4l1.5-0.9l1.5 0.3l1.4-0.7l1.5-1l1.5 0.4l1.4 1.2l1.5 0.3l1.5 2.2l1.4-3.6l1.5 3.4l1.5 0.7l1.4 0.9l1.5 1.1l1.5-3.2l1.4 3.2l1.5-0.5l1.5 0.5l1.4-3.5l1.5-1l1.5-0.3l1.4 0.8l1.5 2.8l1.5-0.4l1.4-0.4l1.5 3.5l1.5-3.1l1.4 2.2l1.5-2.2l1.5-1.5l1.4 3.6l1.5-1.5l1.5 2.8l1.4-3.5l1.5-4l1.5-3.7l1.4 1.1l1.5 4.5l1.5 2.4l1.4-2.4l1.5 1.6l1.5-3.7l1.4 4.1l1.5 1.5l1.5 0.1l1.4-2.5l1.5-4.7l1.5 3.4l1.4-0.9l1.5 0.6l1.5 0.2l1.4 1.9l1.5 0.5l1.5-0.7l1.5 7l1.4-1.3l1.5-2.6l1.5 0.3l1.4-2.7l1.5 8l1.5-4.1l1.4 1.3l1.5-0.6l1.5-0.7l1.4-2.1l1.5 1.6l1.5-2.5l1.4 1.5l1.5-4.1l1.5 1.9l1.4 4l1.5 2l1.5 0.2l1.4-3.8h1.5l1.5-4.4l1.4-0.9l1.5 4.3l1.5 3.5l1.4-3.8l1.5 2.5l1.5-3.1l1.4-0.8l1.5-4.8l1.5 6.4l1.4-3.1l1.5-4.9l1.5 2.3l1.4 1.7l1.5-2.8l1.5 7.2l1.4 0.5l1.5-0.6l1.5-1.9l1.4-1.9l1.5 1.1l1.5-4.4l1.4 5.2l1.5 0.1l1.5 2l1.4-2.9l1.5 1.2l1.5-0.1l1.4-5.5l1.5 1.7l1.5 0.1l1.4 3.5l1.5 2.2l1.5-3.3l1.4 0.3l1.5-2.5l1.5-1.5l1.4-1.7l1.5 4.8l1.5-2.5l1.4 2.2l1.5 1.5l1.5 0.3l1.4 0.5l1.5-1.5l1.5 0.5l1.4-2l1.5-0.7l1.5-0.4l1.4-0.7l1.5-1.8l1.5 1.8l1.4 4.8l1.5 1.3l1.5 1.1l1.4-1.7l1.5 1.6l1.5-1.4l1.4-1.7l1.5-2.3l1.5-2.6l1.4 3.3l1.5-3.8l1.5 0.7l1.4-1.6l1.5 3.6l1.5 2.4l1.4-1.7l1.5-4l1.5 5.7l1.4-1.9l1.5-0.2l1.5-1.2l1.4 3.2l1.5-1.2l1.5-1.5l1.4-1l1.5 4.4l1.5-0.3l1.4-0.3l1.5-2l1.5 3.1l1.4-0.2l1.5-0.5l1.5-1.5l1.4-2l1.5-0.7l1.5-2.2l1.4 3.3l1.5-3.6l1.5 5.3l1.4-0.9l1.5 0.3l1.5 1.9l1.4-1.4l1.5 2.6l1.5 2.7l1.4 1.4l1.5 1.5l1.5 1.2l1.5-2.3l1.4 2.8l1.5-5.6l1.5 2l1.4-3.1l1.5 1.2l1.5-1.8l1.4 3.8l1.5-2.4l1.5-0.9l1.4-2.1l1.5-3.5l1.5 0.1l1.4 2.1l1.5-1.2l1.5-1l1.4 0.1l1.5 3.4l1.5-2l1.4 0.1l1.5 0.6l1.5 1.5l1.4-0.5l1.5-2l1.5 1.7l1.4 1.3l1.5-0.9l1.5-0.2l1.4 1.1l1.5-2.5l1.5 0.4l1.4-0.4l1.5 0.4l1.5-0.4l1.4 4.4l1.5 2.1l1.5 0.5l1.4-0.9l1.5-0.3h1.5l1.4 3.5l1.5 0.7l1.5 1l1.4-5.6l1.5-4.9l1.5-2.9l1.4 4.8l1.5-2.3l1.5-2.3l1.4 2.1l1.5 2.9l1.5-5.4l1.4 2.6h1.5l1.5-4.1l1.4 0.6l1.5-0.5l1.5-1.9l1.4 4.4l1.5 1.4H1172.2V1060.5z"/>
<path class="s" fill="#6ED0E0" stroke="#6ED0E0" d="M104 1060.5V841.9h6l1.5-2.6l1.4 5.5l1.5 4.5l1.5-2.4l1.4 2.7l1.5 10.4l1.5 4.6h1.4l1.5 4.1l1.5 1.4l1.4-5.2l1.5-1.1l1.5 0.1l1.4 7.1l1.5 3.5l1.5 1.1l1.4 1.7l1.5-6.2l1.5 2.6l1.4 6.1l1.5-4.7l1.5-10.8l1.4 2.1l1.5 9.4l1.5-5.4l1.4-5.2l1.5 1l1.5-2.1l1.4 0.7l1.5-2.9l1.5-10.7l1.4 8.8l1.5-4.4l1.5-2.7l1.4 4.3l1.5-5.1l1.5-4.7l1.4-7l1.5-4.8l1.5 2.3l1.4-6.6l1.5 6.3l1.5 7.2l1.4-0.5l1.5-3l1.5 3.7l1.4 2.2l1.5 6.6l1.5 0.5l1.4 2.2l1.5 4.1l1.5 1.5l1.4 3.2l1.5 1.6l1.5 10.1l1.4-1.1l1.5 8.5l1.5-0.5l1.4 3l1.5-3l1.5-5.9l1.5 1.9l1.4-8.5l1.5 3l1.5-3.8l1.4-1.6h1.5l1.5-4.8l1.4-6.1l1.5 12.2l1.5 1.7l1.4 2.3l1.5-7l1.5-1l1.4-4.8l1.5-4.4l1.5-4.9l1.4 7.1l1.5-12.4l1.5 1.8l1.4-2.8l1.5-9l1.5 4.9l1.4 0.5l1.5-0.6l1.5 3.8l1.4 3.5l1.5 5.8l1.5 2.4l1.4-3.9l1.5-1.3l1.5 5.2l1.4-6.5l1.5 5.5l1.5 6.7l1.4 5.2l1.5 9.7l1.5-1.4l1.4-8.6l1.5-3.2l1.5-5.1l1.4-2.1l1.5 4.3h1.5l1.4 4.3l1.5 7.7l1.5-2.7l1.4 0.9l1.5-0.5l1.5 3.3l1.4-0.4l1.5 1.9l1.5-7.4l1.4-2l1.5-4.5l1.5-6.6l1.4-6.5l1.5 8.6l1.5-3.1l1.4 6.3l1.5-3.2l1.5 3.2l1.4-1.2l1.5-9.9l1.5-3.7l1.4-2.3l1.5-4.1l1.5 7.6l1.4-3.7l1.5-0.7l1.5-5.7l1.4 5.9l1.5 3.7l1.5 2.7l1.4 6.6l1.5 5.9l1.5 0.5l1.4 10.8l1.5 5.5l1.5 0.7l1.4-5.5l1.5 5l1.5-10.3l1.4-1.4l1.5-3.2l1.5-1l1.4 0.8l1.5-7.9l1.5 1l1.4 7.4l1.5-8.1l1.5 4.9l1.4-3.9l1.5 3.1l1.5 1.2l1.4 3.9l1.5-1.9l1.5-1.5l1.4-8.2l1.5 2.6l1.5-7.4l1.4-1.3l1.5 4.3l1.5-13.1l1.4 6.4l1.5 7.2l1.5-8.9l1.4 2l1.5-2.9l1.5 3.6l1.4 2.8l1.5 3.3l1.5 2.1l1.4 1.6l1.5 9.7l1.5 1l1.4-2.2l1.5 3.7l1.5 0.1l1.4-4.9l1.5-1.5l1.5 3.1l1.5-0.8l1.4 4l1.5-6.4l1.5 0.4l1.4-1.1l1.5-0.6l1.5 5.3l1.4 0.5l1.5 1l1.5 2.2l1.4 1l1.5 0.2l1.5 6.5l1.4-7.1l1.5-1.3l1.5 3.8l1.4-4.2l1.5-2.8l1.5-7.8l1.4-5l1.5-6.9l1.5-0.7l1.4-3l1.5 4.5l1.5 2.1l1.4 3.9l1.5 4.4l1.5 4l1.4-9.5l1.5 2.1l1.5-8.4l1.4 15.5l1.5 0.8l1.5 6.3l1.4 2.8l1.5 1.9h1.5l1.4-2.8l1.5-5.3l1.5-4.5l1.4-9l1.5 10.3l1.5-1.2l1.4 14l1.5-0.7l1.5-3.3l1.4 5.3l1.5-1.8l1.5-2.8l1.4 3.9l1.5 1.2l1.5-9.7l1.4 10.2l1.5 0.8l1.5-2.4l1.4-1.1l1.5 4l1.5-8.8l1.4-3.7l1.5 3.8l1.5 4.4l1.4 2.8l1.5-7.9l1.5-2.7l1.4-7.7l1.5 1l1.5 1.8l1.4-7.8l1.5 7.1l1.5-5.4l1.4-1.8l1.5 4.5l1.5-1.5l1.4 3.8l1.5 5.9l1.5-11.7l1.4 2.4l1.5 3.2l1.5-5.4l1.4 6.6l1.5-3.8l1.5 10.5l1.4-1.5l1.5 6.6l1.5-2.2l1.4-2.8l1.5 7l1.5-4.3l1.4 1.6l1.5-6.8l1.5 3.5l1.4-2.9l1.5 1.3l1.5-4.1l1.4 7.3l1.5-9.8l1.5-1.9l1.4-3.2l1.5-4.7l1.5 2.4l1.4 3.3l1.5-5.6l1.5 5.7l1.4 6.4l1.5 2.5l1.5-4.1l1.4-3.2l1.5-5.4l1.5 6.7l1.4 0.6l1.5 1.2l1.5 2.8l1.4-1.1l1.5-5.4l1.5 1.4l1.4-7l1.5-1.9l1.5 11.5l1.5 1.8l1.4 1.7l1.5-4.5l1.5 9l1.4 5.2l1.5-2.1l1.5-0.1l1.4 5l1.5-4.2l1.5-0.5l1.4-1l1.5 2.4l1.5-5.4l1.4-6.8l1.5 10.6l1.5-3.5l1.4 0.2l1.5-5.2l1.5-0.5l1.4-5h1.5l1.5 4l1.4-4.7l1.5 12l1.5 9.5l1.4-11.4l1.5-13l1.5-4.3l1.4-5.5l1.5-2l1.5 6.6l1.4-5.1l1.5-6.6l1.5 8.9l1.4 9.2l1.5 1.8l1.5 2.8l1.4 4.7l1.5 4.5l1.5 0.5l1.4-3.9l1.5-8.6l1.5-5.9l1.4 5.8l1.5 9.7l1.5-4.7l1.4 10.9l1.5-1.7l1.5-2.3l1.4 0.1l1.5-10.2l1.5-4.7l1.4-1.9l1.5 3l1.5-7.2l1.4 8.8l1.5-1.3l1.5 3l1.4-3.5l1.5 1l1.5-5.7l1.4 7.3l1.5-0.1l1.5-0.3l1.4-4.7l1.5-0.6l1.5-0.7l1.4-7.2l1.5 0.6l1.5-6.7l1.4 2l1.5 5.5l1.5 7.4l1.4 0.5l1.5 8.5l1.5-3.5l1.4 2.8l1.5 7.9l1.5 6.2l1.4 4.1l1.5-2.6l1.5 6.9l1.4-5l1.5 1l1.5-4.3l1.4-4.1l1.5-7.3l1.5 4.4l1.4-5.4l1.5-0.9l1.5 5.6l1.4 8.2l1.5-5.2l1.5-2.7l1.4-2.4l1.5 0.6l1.5-5.4l1.4-6.7l1.5 0.2l1.5-8.7l1.4-3.3l1.5-2l1.5 7.2l1.4-0.8l1.5-2.9l1.5-2.5l1.4 2.6l1.5 0.7l1.5-4.3l1.4 3.2l1.5 2.2l1.5 0.7l1.4 3.9l1.5 3.4l1.5 3.9l1.4 11.1l1.5 1.4l1.5 3.4l1.4-2.3l1.5-2.8l1.5 1.4l1.5 7.6l1.4-1.9l1.5-4.7l1.5-4.6l1.4-4.2l1.5-3.1l1.5-0.1l1.4 5.1l1.5-2.6l1.5-1.8l1.4 13.6l1.5-6.6l1.5-4.2l1.4-1.6l1.5-0.1l1.5 0.3l1.4-3.3l1.5 0.5l1.5-3l1.4 7.9l1.5-0.2l1.5 5l1.4 10.8l1.5-7.2l1.5-5.2l1.4-0.8l1.5 0.2l1.5-1.6l1.4-0.4l1.5 2l1.5-5.2l1.4 2.8l1.5 7.8l1.5-4.3l1.4 3.4l1.5 6.1l1.5 8.9l1.4 5.2l1.5-4.6l1.5-11.3l1.4 7.4l1.5-3.3l1.5 0.2l1.4-3.6l1.5-8l1.5-2.2l1.4 4.3l1.5 1.2l1.5-1.5l1.4 1.8l1.5 4.8l1.5 3.1l1.4-7.8l1.5-3.5l1.5-2.1l1.4-0.6l1.5 1.5l1.5-4.4l1.4 2.6l1.5-3.9l1.5-0.1l1.4-0.8l1.5 1.5l1.5 5.7l1.4-4.2l1.5-5.3l1.5 6.4l1.4-5.3l1.5-6.6l1.5 4.2l1.4-12.5l1.5 8.1l1.5 6.2l1.4-0.4l1.5 2.3l1.5 7.5l1.4-1.4l1.5 10.7l1.5-7.3l1.4 4.3l1.5-0.8l1.5 2.5l1.4-6.9l1.5-11.6l1.5-0.2l1.4-1.2l1.5 4l1.5 6.8l1.4 3.3l1.5 3.1l1.5 7.1l1.4-7.3l1.5 0.9l1.5-6.1l1.4-5.7l1.5 4.1l1.5-1.1l1.4-2.9l1.5-4.1l1.5-0.1l1.4-1.4l1.5-5.9l1.5 12.2l1.4 9l1.5-0.8l1.5-1.3l1.4-3.8l1.5 1.4l1.5-7.8l1.4-2.8l1.5-0.4l1.5-2.4l1.4 8.1l1.5 2.3l1.5 3.5l1.4-1.5l1.5 1.7l1.5 16l1.5 0.7l1.4 5.8l1.5 0.6l1.5-5.5l1.4-0.8l1.5-9.9l1.5-2.4l1.4 0.7l1.5 3.1l1.5 1.8l1.4-1.1l1.5-4l1.5 3.4l1.4-12.5l1.5 2.3l1.5 1.1l1.4-0.7l1.5 2.4l1.5-0.7l1.4-7.2l1.5 11.8l1.5-1.5l1.4-3.5l1.5-3.6l1.5-1.9l1.4-0.2l1.5 3.1l1.5-1.9l1.4-4.5l1.5 11l1.5-6.6l1.4-1.9l1.5-1.2l1.5-6.8l1.4-1.7l1.5 9.3l1.5-2.1l1.4-2.9l1.5 0.5l1.5 8.7l1.4 0.8l1.5-1.4l1.5 2.9l1.4 3.3l1.5-2.7l1.5 3.8l1.4 2.1l1.5-2.6l1.5-6.1l1.4-2.9l1.5 7.6l1.5-1.6l1.4-8.1l1.5 3.2l1.5-5.5l1.4 2.5l1.5-9.9l1.5-3.7l1.4 2.3l1.5 4.8l1.5-1.5l1.4 4.5l1.5 3.6l1.5 2.1l1.4 11.5l1.5-6.6l1.5-8l1.4-0.3l1.5-1.9l1.5 1.3l1.4-7.7l1.5 3.1l1.5 4.1l1.4 2.7l1.5-0.8l1.5 1.1l1.4 9.3l1.5 0.5l1.5-3.5l1.4-2.9l1.5 4.1l1.5 2.8l1.4-4.6l1.5-0.2l1.5-6l1.4-2.6l1.5 0.7l1.5-3.5l1.4 5.6l1.5-3.7l1.5-1.8h1.4l1.5 3.6l1.5 0.5l1.4-2.2l1.5-3.6l1.5 8.3l1.4 8.2l1.5 3.9l1.5 3.3l1.4-7.1l1.5-6.5l1.5 4.1l1.4-1.6l1.5-5l1.5-0.4l1.4 3.3l1.5-7.5l1.5-5.2l1.4 1.1l1.5-4l1.5-12.7l1.4 2.5l1.5 12.5l1.5-3l1.4 13.3l1.5 11.6l1.5 0.2l1.4 11.2l1.5-7l1.5 5.8l1.5-3.2l1.4 1l1.5 0.5l1.5-1.8l1.4 1.4l1.5-2.4l1.5-4.5l1.4 3.3l1.5-6.1l1.5-3.6l1.4-1.8l1.5-0.7l1.5-13l1.4 6.8l1.5 0.2l1.5 2.2l1.4-6.3l1.5 7.5l1.5-10l1.4 4.4l1.5 5.7l1.5-2.1l1.4-0.4l1.5 2.7l1.5 1.8l1.4-1.3l1.5 6.4l1.5 2.2l1.4 3.8l1.5-8.4l1.5-7.9l1.4 1.2l1.5 3.2l1.5-2.7l1.4-1.3l1.5 17.8l1.5 7.9h1.4l1.5-7.1l1.5 1.2l1.4-3.4l1.5 0.3l1.5-7.5l1.4-2.2l1.5 5l1.5-2.7l1.4-5.7l1.5 0.4l1.5-0.2l1.4-3.7l1.5-7.7l1.5 5.2l1.4 0.6l1.5-2.6l1.5 3.3l1.4-3.8l1.5-0.1l1.5 0.4l1.4 2.6l1.5-6.4H1172.2V1060.5z"/>
<path class="s" fill="#EF843C" stroke="#EF843C" d="M104 1060.5V759.1h6l1.5 2.3l1.4 1.4l1.5 7.3l1.5-1.4l1.4 8l1.5 7.5l1.5 9.3l1.4-0.3l1.5 2.6l1.5 5l1.4-5.8l1.5-0.7l1.5-2.4l1.4 6.7l1.5 4.2l1.5 1.3l1.4 4l1.5-8.6l1.5 5.2l1.4 1.7l1.5-3.4l1.5-7.6l1.4 2.3l1.5 5.3l1.5-1.6l1.4-7.4l1.5-0.9l1.5 0.3l1.4-3.6l1.5-6.6l1.5-8.4l1.4 8.1l1.5-1.6l1.5-2l1.4 2.9l1.5-7.3l1.5-4.3l1.4-11.9l1.5-1.3l1.5 2.9l1.4-7.9l1.5 3.7l1.5 7.7l1.4-0.8l1.5 1.1l1.5 2.7l1.4 1.4l1.5 13.1l1.5 0.1l1.4-1.1l1.5 4l1.5 2.7l1.4 3.6l1.5 2.5l1.5 13.5l1.4-0.6l1.5 12.9l1.5-1.4l1.4 3.9l1.5-10.5l1.5-4.6l1.5 4.1l1.4-9.8l1.5 3.8l1.5-4.5l1.4-4l1.5 0.9l1.5-8l1.4-4.6l1.5 14.1l1.5 0.3l1.4 7.5l1.5-10.9l1.5-2.2l1.4-4.9l1.5-4.9l1.5-2.6l1.4 2.7l1.5-12.6l1.5 4l1.4-7.8l1.5-6.6l1.5 0.8l1.4 0.3l1.5-1.2l1.5 6.6l1.4 7.6l1.5 10l1.5-4.4l1.4-2.5l1.5-0.7l1.5 1.7l1.4-4.4l1.5 7.3l1.5 8.7l1.4 6.4l1.5 14.7l1.5-2.4l1.4-15.8l1.5-4.2l1.5 2.7l1.4-2.5l1.5-0.1l1.5-0.5l1.4 6l1.5 6.5l1.5 2.4l1.4-4.3l1.5 0.2l1.5 3.5l1.4 0.1l1.5 1.1l1.5-7.2l1.4-1.2l1.5-8.6l1.5-7.7l1.4-4.7l1.5 5.7l1.5-5.2l1.4 7.1l1.5-1l1.5 4.4l1.4 0.3l1.5-10.6l1.5-6.7l1.4-3.8l1.5-3.5l1.5 4.1l1.4 2.2l1.5-0.9l1.5-7.6l1.4 2.5l1.5 7.1l1.5 4.4l1.4 10.1l1.5 7.7l1.5 2.1l1.4 8.5l1.5 6.5l1.5-0.3l1.4-3.2l1.5-0.4l1.5-6.5l1.4 2.8l1.5-7l1.5-3.3l1.4-1.1l1.5-6.4l1.5-1.5l1.4 5.8l1.5-5.2l1.5 7.6l1.4-2.2h1.5l1.5-1.2l1.4 4.4l1.5-2.7l1.5-3.5l1.4-7.8l1.5 2.1l1.5-5l1.4-0.9l1.5 3.3l1.5-14.9l1.4 5.4l1.5 6.3l1.5-9.8l1.4 5.8l1.5-2.7l1.5-0.3l1.4 7.5l1.5 3.2l1.5 3.2l1.4 1.5l1.5 9.7l1.5 4.5l1.4 0.2l1.5-1.3l1.5 1.2l1.4-7.2l1.5-0.2l1.5 2.5l1.5-2.8l1.4 4.4l1.5-4.3l1.5 1.8l1.4-2.8l1.5-0.7l1.5 5.9l1.4 3.4l1.5 6.2l1.5-2.6l1.4-1.2l1.5-0.1l1.5 5.7l1.4-7.8l1.5 1.7l1.5 2.5l1.4-3.4l1.5-6.4l1.5-8.3l1.4-6.4l1.5-8.4l1.5-0.2l1.4 0.2l1.5 3.1l1.5 7.7l1.4-0.4l1.5 2.8l1.5 1.6l1.4-9.1l1.5 6.4l1.5-7.5l1.4 12.1l1.5 7.1l1.5 4l1.4 10.5l1.5-1.2l1.5-2.9l1.4-3.6l1.5-5.9l1.5-3.6l1.4-10.6l1.5 8.8l1.5-1.5l1.4 19.4l1.5-1.4l1.5-1.5l1.4 2.7l1.5-4.1l1.5 1l1.4 4.1l1.5-1l1.5-9l1.4 7.5l1.5 0.6l1.5 1.3l1.4-3.4l1.5 3l1.5-4.8l1.4-7.4l1.5 6l1.5 6.1l1.4 1.4l1.5-7.7l1.5-0.5l1.4-8.9l1.5-2l1.5-0.3l1.4-9.1l1.5 9.7l1.5-7l1.4-5.7l1.5 6.7l1.5 1.5l1.4 4.7l1.5 3.9l1.5-11.7l1.4 3.6l1.5 3.4l1.5-4.6l1.4 4.3l1.5 1.6l1.5 6.3l1.4 0.6l1.5 11.3l1.5-5.8l1.4 0.4l1.5 4.7l1.5-7.5l1.4 4.9l1.5-8.4l1.5 1.3l1.4-0.6l1.5 0.9l1.5-6.4l1.4 6l1.5-8.4l1.5-2.5l1.4-7l1.5 2.3l1.5 0.1l1.4 7.2l1.5-6.3l1.5-2l1.4 9.8l1.5 0.6l1.5-1.8l1.4-5.1l1.5-4.8l1.5 9.6l1.4-0.2l1.5 0.9l1.5-0.2l1.4 1.8l1.5-7.5l1.5 3.3l1.4-9.6l1.5 1.1l1.5 9.8l1.5 4.8l1.4 1.6l1.5-5.4l1.5 8.8l1.4 6.9l1.5-1.4h1.5l1.4 5.9l1.5-6.5l1.5-0.3l1.4-3.2l1.5 1.7l1.5-4.9l1.4-3.3l1.5 7.7l1.5-7.4l1.4 5.8l1.5-5l1.5 4l1.4-12.2l1.5 2.9l1.5-1.2l1.4 2.8l1.5 11.8l1.5 9.5l1.4-12.7l1.5-15.1l1.5-7.7l1.4-5.8l1.5-2.5l1.5 7.6l1.4-5.4l1.5-9l1.5 8.7l1.4 13.9l1.5 1.6l1.5 5.6l1.4 2.6l1.5 10.1l1.5-3.6l1.4 3.7l1.5-13.7l1.5-6.8l1.4 1.3l1.5 12.4l1.5-2l1.4 13.3l1.5-7.2l1.5-0.9l1.4-0.9l1.5-8.2l1.5-4.5l1.4-7.2l1.5-1.9l1.5-3.8l1.4 10.1l1.5 1.7l1.5-0.6l1.4-1.5l1.5 2.2l1.5-3.6l1.4 6.9l1.5-2.3l1.5-4l1.4-0.9l1.5-4.5l1.5 1.3l1.4-8.7l1.5 2.6l1.5-6.2l1.4 2.1l1.5-0.2l1.5 14.3l1.4 0.3l1.5 6.9l1.5 2.4l1.4-0.7l1.5 11.1l1.5 6.5l1.4 3.2l1.5-1.3l1.5 9.4l1.4-8.4l1.5 0.8l1.5-2.3l1.4-5.6l1.5-6.5l1.5-0.1l1.4-2.5l1.5-3.2l1.5 2.6l1.4 11.5l1.5-3.6l1.5-1.5l1.4-2.8l1.5-2.9l1.5-6.6l1.4-7.6l1.5-6l1.5-4.5l1.4-3l1.5-2.5l1.5 7.7l1.4-1.7l1.5-2.5l1.5-5.4l1.4 3.3l1.5 2.9l1.5 0.5l1.4-2.2l1.5 5.3l1.5 0.9l1.4 3.7l1.5 6.8l1.5 4.6l1.4 12l1.5 2.1l1.5 2.9l1.4-0.6l1.5-4.4l1.5 3.8l1.5 8.3l1.4-4.3l1.5-5.3l1.5-2.6l1.4-7.6l1.5-5.4l1.5-3.1l1.4 8.7l1.5-1.8h1.5l1.4 10.3l1.5-3.3l1.5-3.5l1.4-3.9l1.5 3.5l1.5-5.7l1.4-3.8l1.5-0.1l1.5-0.4l1.4 10l1.5-3.7l1.5 5.3l1.4 8.8l1.5-6.5l1.5 1.6l1.4-3.5l1.5 0.6l1.5-5.5l1.4 1.3l1.5 1.8l1.5-5l1.4 1.8l1.5 7.4l1.5-1.2l1.4 9.2l1.5 6.7l1.5 4.7l1.4 8l1.5-4.2l1.5-12.4l1.4 5.2l1.5-3.7l1.5 1.4l1.4-3.1l1.5-10.8l1.5-2.6l1.4 3.3l1.5-0.9l1.5 5.5l1.4 3.1l1.5 3.2l1.5 2.6l1.4-6.4l1.5-5.7l1.5-3.6l1.4-0.9l1.5 2l1.5-6.7l1.4 0.7l1.5-5.5l1.5 0.1l1.4-0.1l1.5 4.6l1.5 7.5l1.4-8.2l1.5-6.2l1.5 6.7l1.4-6l1.5-7.6l1.5 4.6l1.4-11.3l1.5 8.3l1.5 8.5l1.4-4l1.5 5.7l1.5 8.2l1.4-0.6l1.5 11.9l1.5-10.6l1.4 7.6l1.5-1.3l1.5 3l1.4-10.4l1.5-12.6l1.5-0.5l1.4-0.4l1.5 6.8l1.5 6.3l1.4 3l1.5 6.6l1.5 4l1.4-5.2l1.5-1.2l1.5-7.7l1.4-2l1.5 2.6l1.5 1.7l1.4-6.5l1.5-8l1.5-3.8l1.4-0.3l1.5-1.4l1.5 14.6l1.4 6.6l1.5 0.8l1.5-5l1.4 0.3l1.5 2.9l1.5-7.7l1.4-5.3l1.5-5.1l1.5 1l1.4 7.2l1.5 2.9l1.5 3.6l1.4 0.5l1.5 2.2l1.5 15.3l1.5 7.7l1.4 4.5l1.5-2l1.5-5.3l1.4-3.3l1.5-2l1.5-6.5l1.4 2l1.5 2.4l1.5 1.2l1.4-3.2l1.5-2.4l1.5 0.9l1.4-11l1.5-1.8l1.5 3l1.4 3.4l1.5 4.3l1.5-0.5l1.4-11l1.5 11.7l1.5-5.8l1.4-4.4l1.5 0.7l1.5 1.6l1.4-4l1.5 5.6l1.5-5l1.4-5.3l1.5 6.2l1.5-0.2l1.4-5.1l1.5-6l1.5-4.4l1.4-0.1l1.5 6.5l1.5 5.2l1.4-2.5l1.5-0.1l1.5 6.9l1.4-1.2l1.5-0.2l1.5-1.6l1.4 8.5l1.5-2.6l1.5 5.8l1.4-0.8l1.5-1.4l1.5-6.2l1.4-8.5l1.5 9.4l1.5-1.4l1.4-4.7l1.5 5.4l1.5-8.8l1.4 2.8l1.5-12.4l1.5-5.2l1.4 0.6l1.5 9.6l1.5-4l1.4 6.7l1.5 5.2l1.5 2.3l1.4 12l1.5-8.1l1.5-7.5l1.4-2.3l1.5-2.6l1.5 0.9l1.4-8.4l1.5 1.3l1.5 5.9l1.4 7.6l1.5 0.4l1.5 2.2l1.4 7.6l1.5 2.1l1.5-4.9l1.4-4.6l1.5 1.8l1.5 0.2l1.4-1.3l1.5-4l1.5-5.4l1.4-4.2l1.5 4.4l1.5-1.1l1.4 3.9l1.5-7.7l1.5 3.9l1.4-1.9l1.5 3.4l1.5-0.8l1.4 1.1l1.5-4.8l1.5 6.9l1.4 7.1l1.5 8.3l1.5 3l1.4-7.5l1.5-8.5l1.5 7.3l1.4-1.9l1.5-5.4l1.5-2l1.4 1.3l1.5-8.1l1.5-7.5l1.4 4.5l1.5-7.7l1.5-7.4l1.4 1.7l1.5 12.8l1.5-1.1l1.4 11.9l1.5 14.2l1.5 2.9l1.4 12.6l1.5-5.4l1.5 6.9l1.5-5.5l1.4 3.8l1.5-5.1l1.5 0.2l1.4-1.7l1.5-1.1l1.5-6.4l1.4 7.1l1.5-8.4l1.5-4.6l1.4-3.9l1.5-4.2l1.5-12.8l1.4 8.8l1.5-1l1.5 1.1l1.4-6.1l1.5 10.9l1.5-12l1.4 4.5l1.5 6.3l1.5-0.7l1.4-0.8l1.5 0.7l1.5 3.4l1.4 0.1l1.5 5.5l1.5 2.1l1.4 4.8l1.5-10.9l1.5-7.5l1.4 0.9l1.5 3.5l1.5-3.2l1.4 3.2l1.5 19.9l1.5 8.3l1.4-0.8l1.5-7.4l1.5 1.2l1.4 0.1l1.5 1l1.5-6.4l1.4-7.9l1.5 0.2l1.5-5.7l1.4-0.8l1.5-2l1.5-2.5l1.4-1.6l1.5-4.8l1.5-0.2l1.4 3.2l1.5-2.6l1.5-0.8l1.4-3.2l1.5-0.6l1.5-1.5l1.4 7l1.5-5H1172.2V1060.5z"/>
</g>
<text x="97.6" y="650.1" text-anchor="end">8000</text>
<text x="97.6" y="752" text-anchor="end">6000</text>
<text x="97.6" y="853.9" text-anchor="end">4000</text>
<text x="97.6" y="955.7" text-anchor="end">2000</text>
<text x="97.6" y="1057.6" text-anchor="end">0</text>
<text x="205" y="1084.2" text-anchor="middle">14:00</text>
<text x="381" y="1084.2" text-anchor="middle">14:30</text>
<text x="557" y="1084.2" text-anchor="middle">15:00</text>
<text x="733" y="1084.2" text-anchor="middle">15:30</text>
<text x="909" y="1084.2" text-anchor="middle">16:00</text>
<text x="1085" y="1084.2" text-anchor="middle">16:30</text>
<text class="hd" x="1567.3" y="662.2" text-anchor="end">max</text>
<text class="hd" x="1667.6" y="662.2" text-anchor="end">avg</text>
<text class="hd" x="1767.9" y="662.2" text-anchor="end">current</text>
<rect x="1204" y="674" width="584" height="48" fill="#262628"/>
<rect x="1224.4" y="697" width="24" height="7" rx="2.5" fill="#7EB26D"/>
<text class="lg" x="1262.4" y="703.8">capture</text>
<text class="lg" x="1567.3" y="703.8" text-anchor="end">0</text>
<text class="lg" x="1667.6" y="703.8" text-anchor="end">0</text>
<text class="lg" x="1767.9" y="703.8" text-anchor="end">0</text>
<rect x="1224.4" y="745" width="24" height="7" rx="2.5" fill="#EAB839"/>
<text class="lg" x="1262.4" y="751.8">172.16.5.33:47912</text>
<text class="lg" x="1567.3" y="751.8" text-anchor="end">1688</text>
<text class="lg" x="1667.6" y="751.8" text-anchor="end">1445</text>
<text class="lg" x="1767.9" y="751.8" text-anchor="end">1505</text>
<rect x="1204" y="770" width="584" height="48" fill="#262628"/>
<rect x="1224.4" y="793" width="24" height="7" rx="2.5" fill="#6ED0E0"/>
<text class="lg" x="1262.4" y="799.8">172.16.5.33:47913</text>
<text class="lg" x="1567.3" y="799.8" text-anchor="end">4307</text>
<text class="lg" x="1667.6" y="799.8" text-anchor="end">3720</text>
<text class="lg" x="1767.9" y="799.8" text-anchor="end">3853</text>
<rect x="1224.4" y="841" width="24" height="7" rx="2.5" fill="#EF843C"/>
<text class="lg" x="1262.4" y="847.8">total</text>
<text class="lg" x="1567.3" y="847.8" text-anchor="end">5917</text>
<text class="lg" x="1667.6" y="847.8" text-anchor="end">5164</text>
<text class="lg" x="1767.9" y="847.8" text-anchor="end">5358</text>
</g>
<g class="graph" id="graph4">
<path d="M1935.9 644h1208.1v2h-1208.1zM1935.9 848h1208.1v2h-1208.1zM1935.9 1052h1208.1v2h-1208.1z" fill="rgba(200,200,200,0.245)"/>
<path d="M2042 644h2v408h-2zM2244 644h2v408h-2zM2445 644h2v408h-2zM2647 644h2v408h-2zM2848 644h2v408h-2zM3050 644h2v408h-2z" fill="rgba(200,200,200,0.245)"/>
<clipPath id="cp4"><rect x="1935.9" y="633" width="1208.1" height="419"/></clipPath>
<g clip-path="url(#cp4)">
<path class="s" fill="#EAB839" stroke="#EAB839" d="M1929.9 1060.5V750.3h6l1.7-10.8l1.7-7.3l1.6-6.6l1.7-12.6l1.7 29.8l1.7 5.9l1.6 7.1l1.7 3.1l1.7-3.1l1.7-7.1l1.7-5.9l1.6-1.5l1.7 0.7l1.7-1.9l1.7-6.2l1.6 9.8l1.7 7.3l1.7 8.7l1.7 3.9l1.7-3.9l1.6-8.7l1.7-7.3l1.7-19.2l1.7 2l1.6 6.6l1.7 11l1.7 8l1.7 9.6l1.7 4.2l1.6-4.2l1.7-9.6l1.7-7.4l1.7 8.2l1.6-2.9l1.7-4.1l1.7 3.7l1.7 13.5l1.7 18l1.6 14.1l1.7-5.2l1.7-17.7l1.7-40l1.7-18.2l1.6 10.1l1.7-7.6l1.7-4.5l1.7-0.3l1.6 33.6l1.7 10l1.7 12.1l1.7 5.3l1.7-5.3l1.6-12.1l1.7-10l1.7-18.6l1.7 3.1l1.6 5.2l1.7 11.9l1.7-8.6l1.7-12.7l1.7 13.3l1.6 14l1.7-5.8l1.7-6.4l1.7 8.6l1.6 13.9l1.7 5.8l1.7-2.4l1.7-14.6l1.7-11.2l1.6-3.7l1.7-15.5l1.7 3.8l1.7 20.2l1.6 1.2l1.7-8l1.7 3.9l1.7 4.8l1.7 15.1l1.6 9.8l1.7-15l1.7-3.9l1.7 6.4l1.6 2.6l1.7-2.4l1.7-6.3l1.7 0.2l1.7 6.6l1.6-4.6l1.7-9.4l1.7-5.6l1.7-4.7l1.6-0.9l1.7-0.5l1.7 15.5l1.7 13.3l1.7 3.7l1.6 5.3l1.7-5.3l1.7-12.1l1.7-10l1.6 5.3l1.7 11.3l1.7-9.3h1.7l1.7-15.9l1.6-7.9l1.7 23.9l1.7 7.1l1.7-6.3l1.6 14.6l1.7 1.2l1.7-11.6l1.7-8.5l1.7 5.3l1.6 14.9l1.7-14.1l1.7-7.2l1.7 6.3l1.6 5.5l1.7 6.9l1.7-0.7l1.7-12.8l1.7-6.3l1.6 9.3l1.7 13l1.7 6.3l1.7 10.8l1.7 1.4l1.6-4.6l1.7-24.6l1.7-10.1l1.7 11.5l1.6 34.9l1.7 46.8l1.7 22.5l1.7-22.5l1.7-46.8l1.6-34.9l1.7-54.4l1.7 13.4l1.7 13.9l1.6 7l1.7-0.3l1.7-8.1l1.7-9l1.7 36.3l1.6 32.8l1.7 43.5l1.7 20.8l1.7-20.8l1.6-43.5l1.7-32.8l1.7-41.5l1.7-5.4l1.7 4.1l1.6 6.8l1.7 5.1l1.7 4.4l1.7 6.4l1.6-3.9l1.7-4.3l1.7-2.5l1.7-7.9l1.7 3.4l1.6 22.6l1.7 11.3l1.7 13.8l1.7 6.1l1.6-6.1l1.7-13.8l1.7-11.3l1.7-24.4l1.7 11l1.6 14.6l1.7 13.3l1.7 16.4l1.7 7.3l1.6-7.3l1.7-16.4l1.7-13.3l1.7-17.7l1.7 5.6l1.6 7.8l1.7 16.3l1.7 12.3l1.7-2.7l1.6 2l1.7-10l1.7-19.1l1.7-4.7l1.7-8.5l1.6-10.2l1.7 0.9l1.7-0.1l1.7 5.7l1.6-1.8l1.7-1.1l1.7 6l1.7-8.8l1.7-8.4l1.6 4.5l1.7 11.9l1.7-3.3l1.7 0.7l1.7 7.3l1.6 18.6l1.7 18.5l1.7 23.2l1.7 10.5l1.6-10.5l1.7-23.2l1.7-18.5l1.7-21.5l1.7 1.4l1.6 0.2l1.7-0.7l1.7-9.1l1.7 1.4l1.6 9l1.7-1.3l1.7-4.3l1.7 11.7l1.7 0.7l1.6-7.8l1.7 9.2l1.7 9.5l1.7 8.2l1.6 7.1l1.7 5.2l1.7 16l1.7 14.6l1.7-17.1l1.6-7.9l1.7 11.4l1.7 5.4l1.7 6.2l1.6-6.2l1.7-18.4l1.7-22.3l1.7-13.7l1.7 0.9l1.6 7h1.7l1.7-3l1.7 2.7l1.6-3.1l1.7-0.3l1.7 5.5l1.7-11.5l1.7-15.5l1.6-5.9l1.7-11.4l1.7-2.5l1.7 11.6l1.6 18.5l1.7 7.5l1.7 9.6h1.7l1.7-9.2l1.6-5.4l1.7-9.2l1.7-1.4l1.7 3.4l1.6-0.6l1.7 22.2l1.7 13.3l1.7 16.4l1.7 7.3l1.6-7.3l1.7-16.4l1.7-13.3l1.7-32.8l1.6 7.8l1.7 5.3l1.7 8.4l1.7 5.7l1.7-4.5l1.6 3.6l1.7 12l1.7-13.2l1.7-17.4l1.7 0.6l1.6 8.9l1.7 18l1.7 17.3l1.7 21.4l1.6 9.7l1.7-9.7l1.7-13.6l1.7 0.9l1.7 13.5l1.6-0.2l1.7-22.1l1.7-17.5h1.7l1.6 4.8l1.7-9.4l1.7 1.7l1.7 22.8l1.7 21.5l1.6 7.4l1.7-19.8l1.7 2.6l1.7 23.1l1.6 10.7l1.7 2.7l1.7-11l1.7-18l1.7-14.1l1.6 1.1l1.7-1.3l1.7-18.9l1.7-6.4l1.6 0.3l1.7-9.7l1.7-7l1.7-5.4l1.7-3.6l1.6 7.8l1.7 5.8l1.7-1l1.7-6l1.6-8.2l1.7-11.8l1.7-6l1.7 3.2l1.7 5.6l1.6 9.8l1.7 9.7l1.7 1.7l1.7-6.3l1.6-13.3l1.7-6l1.7 41.4l1.7 17.5l1.7 21.8l1.6 9.9l1.7-9.9l1.7-21.8l1.7-17.5l1.6-4.4l1.7-19.4l1.7-1.9l1.7-2.2l1.7-4.3l1.6 11.1l1.7-3.6l1.7-24.6l1.7-0.3l1.6 8.6l1.7 2.3l1.7-7l1.7-3.7l1.7 6.1l1.6 5.4l1.7-3h1.7l1.7 9.2l1.7 15.3l1.6-3.7l1.7-12.8l1.7-5.4l1.7-3.4l1.6 7.5l1.7 9.8l1.7 8.6l1.7 26.4l1.7 6l1.6-15.2l1.7 0.3l1.7-3l1.7-12.7l1.6 15.4l1.7 19.8l1.7 24.9l1.7 11.4l1.7-11.4l1.6-24.9l1.7-10.5l1.7 29.3l1.7 1.1l1.6-31l1.7-20.5l1.7-11.9l1.7 2.1l1.7 21.6l1.6 18.3l1.7 9.1l1.7 1.4l1.7-8.4l1.6-8l1.7 11.8l1.7 28.8l1.7 13.2l1.7-13.2l1.6-28.8l1.7-22.6l1.7-25.5l1.7 5.4l1.6 12.5l1.7 12.5l1.7 10.8l1.7 0.3l1.7 7.7l1.6 22.9l1.7 4.8l1.7-17l1.7-26.6l1.6-18.5l1.7-7.1l1.7-3.6l1.7-3.7l1.7-4.3l1.6-10.3l1.7-12.9h1.7h1.7l1.6 4.7l1.7 13.6l1.7 18.2l1.7 23l1.7 15.6l1.6 16.8l1.7 0.2l1.7-31l1.7-32.5l1.6-21.7l1.7-0.5l1.7 6.8l1.7 3.9l1.7 26.8l1.6 27.9l1.7 6.4l1.7 8.5l1.7 5.8l1.6-7.1l1.7-10.2l1.7 28.8l1.7 13.2l1.7-13.2l1.6-28.8l1.7-22.6l1.7 2.7l1.7 1.8l1.7 30.4l1.6 39.9l1.7 19l1.7-19l1.7-39.9l1.6-30.4l1.7-12.8l1.7-5.4l1.7-4.1l1.7 3.7l1.6 15.8l1.7 25.5l1.7 32.8l1.7 15.3l1.6-15.3l1.7-32.8l1.7-25.5l1.7-21.5l1.7 13.1l1.6-0.7l1.7-2.9l1.7-0.2l1.7-9l1.6 8.6l1.7 5l1.7-7.3l1.7-2.1l1.7-1.7l1.6 2.3l1.7-8.8l1.7-13.8l1.7-5.7l1.6 9.2l1.7 30.6l1.7 17.3l1.7 21.4l1.7 9.7l1.6-9.7l1.7 4.2l1.7 5.1l1.7-1.5l1.6-7.3l1.7-20l1.7-22.4l1.7-6.6l1.7 9.2l1.6 11.3l1.7 5.8l1.7 5.4l1.7 2.1l1.6-9.3l1.7-7.6l1.7-2.9l1.7 24.2l1.7 31.1l1.6 14.4l1.7-14.4l1.7-8.6l1.7-6.5l1.6-27.5l1.7-14.7l1.7 16.1l1.7 22.3l1.7 10.1l1.6-10.1l1.7-22.3l1.7-15.4l1.7-1.3l1.6-12l1.7 5.9l1.7 9.3l1.7-5.8l1.7 3.5l1.6 5.3l1.7-13l1.7-5.6l1.7 6.6l1.7-3.2l1.6 0.6l1.7-6.7l1.7-16.6l1.7 1.2l1.6 15.5l1.7 17.1l1.7 13.3l1.7 5.7l1.7 9.2l1.6-11l1.7-12.1l1.7 3.2l1.7-10.9l1.6-12.3l1.7 10.5l1.7 15.9l1.7 19.7l1.7 8.9l1.6-8.9l1.7 8l1.7 0.1l1.7-21.3l1.6-6.3l1.7-14.3l1.7-21.1l1.7 5.6l1.7-4.3l1.6-17h1.7l1.7-1.9l1.7-6.6l1.6 6.4l1.7 14.2l1.7-0.3l1.7-11.1l1.7-4l1.6 0.6l1.7 12.1l1.7 4.6l1.7-2.6l1.6 3.2l1.7 6.6l1.7-8.2l1.7-14.5l1.7 2.4l1.6 11.5l1.7 8.4l1.7-0.6l1.7 5.1l1.6 10.3l1.7 5.7l1.7-6.4l1.7-18.7l1.7-20.8l1.6 1.1l1.7 6.9l1.7-4l1.7 11.6l1.6 5.6l1.7-17.9l1.7-12.4h1.7l1.7 12.9l1.6 7.8l1.7 12.2l1.7 15l1.7 14.6l1.6 18l1.7 8.1l1.7-8.1l1.7 0.7l1.7 1.4l1.6-20.8l1.7-3.6l1.7-8.8l1.7-15.6l1.6-14.1l1.7-10l1.7 3.2h1.7l1.7 2.3l1.6 18.8l1.7 21l1.7 21.5l1.7 10.2l1.7 2.6l1.6-1.3l1.7-5.1l1.7-2.4l1.7-11.1l1.6 5.4l1.7 6.8l1.7-6.8l1.7-15.5l1.7-12.7l1.6-7.3l1.7-9.4l1.7-23l1.7 42.7l1.6 17.5l1.7 21.8l1.7 9.9l1.7-9.9l1.7-21.8l1.6-17.5l1.7-11l1.7 3.2l1.7-0.4l1.6-2.6l1.7-0.2l1.7 7.7l1.7-1.3l1.7-5.7l1.6-4.7l1.7 1.7l1.7 2.6l1.7-3.6l1.6-5.9l1.7-3.9l1.7 5.4l1.7 28.4l1.7 34.2l1.6 45.7l1.7 22l1.7-22l1.7-45.7l1.6-34.2l1.7-54l1.7 7.5l1.7 46.3l1.7 34l1.6 45.3l1.7 21.8l1.7-21.8l1.7-45.3l1.6-34l1.7-20.6l1.7 2.4l1.7 5.7l1.7-3.2l1.6-17.5l1.7-7.1l1.7 34.4l1.7 23.6l1.6 30.2l1.7 13.9l1.7-13.9l1.7-30.2l1.7-23.6l1.6-2.5l1.7-2.8l1.7-5.6l1.7 16.6l1.6 11.7l1.7-7.2l1.7-0.5l1.7 14.2l1.7 5.5l1.6 0.3l1.7-9.1l1.7-1.9l1.7 11.8l1.7 6.9l1.6-21.6l1.7-23l1.7 12.7l1.7 21.1l1.6 12.6l1.7-3.9l1.7-9.1l1.7 10l1.7 41.7l1.6 19.9l1.7-19.9l1.7-41.7l1.7-31.6l1.6-43l1.7-14.8l1.7 2.2l1.7 22.9l1.7 15.7l1.6-2.6l1.7 4.1l1.7-1.9l1.7-2l1.6 5.3l1.7-0.9l1.7-2.9l1.7-0.8l1.7 10.3l1.6 4.8l1.7-6.5l1.7-5.6l1.7-9.9l1.6-0.3l1.7-0.8l1.7-1.5H3150V1060.5z"/>
<path class="s" fill="#6ED0E0" stroke="#6ED0E0" d="M1929.9 1060.5V687.7h6l1.7-1.6l1.7 1.1l1.6 8.8l1.7-0.3l1.7-5.8l1.7-5l1.6-7l1.7 4.4l1.7 0.9l1.7-0.6l1.7 1l1.6-3.9l1.7 1.1l1.7 0.4l1.7 2.4l1.6 1.9l1.7 1.9l1.7-0.1l1.7-3.4l1.7-1.3l1.6 4.9l1.7 8l1.7 1l1.7-1l1.6 3.4l1.7 0.4l1.7-2.2l1.7-2.3l1.7-4.2l1.6-7.8l1.7-5l1.7 6.6l1.7 1.2l1.6-5.3l1.7 3.9l1.7 2.1l1.7-3.7l1.7 2.1l1.6 0.4l1.7-1l1.7 1.6l1.7-3.7l1.7-5.2l1.6 4l1.7 3l1.7-1.8l1.7-4.8l1.6 1.2l1.7 5.9l1.7 1.2l1.7 1.2l1.7-2l1.6-0.2l1.7 0.5l1.7 1.8l1.7 4.8l1.6-3.7l1.7-3.3l1.7 1.4l1.7-3.6l1.7-3.5l1.6 0.9l1.7 0.3l1.7-5.3l1.7 2.5l1.6 8.4l1.7 1.6l1.7 2.3l1.7 1.8l1.7-2.1l1.6-5.5l1.7-1.3l1.7 2.9l1.7-2.5l1.6 1.1l1.7 3.6l1.7-4.7l1.7 3l1.7 5.6l1.6-1l1.7-1l1.7 0.8l1.7 1.8l1.6-1.9l1.7 4.4l1.7 3.4l1.7-3.4l1.7-4.4l1.6-9.2l1.7-2.1l1.7 1.2l1.7 1.5l1.6-1.2l1.7 0.5l1.7 2.4l1.7 6.3l1.7 3.8l1.6-2.8l1.7-2l1.7 4l1.7-2.4l1.6 4.4l1.7 3.4l1.7-3.4l1.7-4.4l1.7-8.8l1.6 6.2h1.7l1.7-5.2l1.7-2.2l1.6 6.1l1.7 2.7l1.7-8.8l1.7 1.1l1.7 5.7l1.6-1.5l1.7-1.4l1.7 2l1.7 1.4l1.6-4.3l1.7-2.1l1.7 4.2l1.7 3.1h1.7l1.6-1.1l1.7-0.9l1.7-5.1l1.7-6.4l1.7 5.7l1.6 7.3l1.7 1.6l1.7 1l1.7-2.5l1.6 2.5l1.7 4.8l1.7 3.7l1.7-3.7l1.7-4.8l1.6-5.8l1.7-2.6l1.7-2.4l1.7 5.2l1.6 5.6l1.7-2.5l1.7 1.4l1.7 4.6l1.7-1.6l1.6-4.4l1.7 2.4l1.7 5.9l1.7-0.8l1.6-0.7l1.7-5.2l1.7-8.2l1.7-2.6l1.7 1.3l1.6 5l1.7 8.9l1.7 3l1.7-3.7l1.6 1.3l1.7-0.8l1.7-2.1l1.7 1.2l1.7-0.2l1.6-2.8l1.7-1.5l1.7 3.9l1.7 5.4l1.6-3.6l1.7-6.5l1.7-5.3l1.7-1.5l1.7 3.3l1.6 1.5l1.7 3.6l1.7 6l1.7-3.3l1.6-3.8l1.7 5.6h1.7l1.7-4.2l1.7-5.1l1.6-3.4l1.7 4.1l1.7 7.9l1.7 3.5l1.6 0.2l1.7 4.3l1.7-1.7l1.7 0.2l1.7-1.6l1.6-1.8l1.7-7.7l1.7-5.5l1.7 4.7l1.6 1.7l1.7-0.6l1.7 2.2l1.7 4.8l1.7 1l1.6-2.5l1.7-2.1l1.7-8.5l1.7-1.9l1.7 9.3l1.6 6.1l1.7 1.5l1.7-1.1l1.7-0.5l1.6-3.1l1.7 0.5l1.7 2.2l1.7-4.5l1.7-1.6l1.6-2.9h1.7l1.7 3.6l1.7 3.3l1.6-2.8l1.7-3.5l1.7 0.9l1.7-0.7l1.7-5.2l1.6-3.7l1.7 1.4l1.7 1.3l1.7 1.1l1.6-0.1l1.7-1.1l1.7-3.9l1.7 0.3l1.7 7.2l1.6 2.1l1.7-4.9l1.7-7.8l1.7 3.2l1.6 11.1l1.7 3.3l1.7 0.5l1.7-2l1.7-4.6l1.6-1.9l1.7-0.3l1.7 2.3l1.7 6.9l1.6 1.5l1.7-1.7l1.7-4.7l1.7-6.4l1.7-0.4l1.6 3.1l1.7 0.7l1.7-0.5l1.7 1l1.6 6.2l1.7 3.6l1.7-8.1l1.7-4.3l1.7 1.3l1.6-1.7l1.7-2.6l1.7 1.5l1.7 0.5l1.6 1.1l1.7 0.7l1.7-3.3l1.7 1.6l1.7 5l1.6 0.6l1.7-1.6l1.7-3.3l1.7 1.8l1.6 10.8l1.7 1.4l1.7 2.1l1.7 2.7l1.7-4l1.6 0.9l1.7-3.6l1.7-4.3l1.7 1.4l1.7 1.5l1.6-2.1l1.7 2.4l1.7-1.1l1.7-9.7l1.6-4.5l1.7 0.1l1.7-1.4l1.7 0.7l1.7 4l1.6-3.3l1.7-3.4l1.7 1.3l1.7 2.6l1.6 0.7l1.7-1.4l1.7-0.7l1.7 1.3l1.7 3.5h1.6l1.7 0.8l1.7-4.3l1.7-3.3l1.6 3.1l1.7-0.6l1.7 4.7l1.7 7.9l1.7-2.1l1.6-2.1l1.7 5.9l1.7 0.9l1.7-7l1.6-5.1l1.7 2.3l1.7 2.9l1.7-1.6l1.7-2.2l1.6 3l1.7 2.7l1.7-3.5l1.7 1.6l1.6 2.4l1.7 1.5l1.7-3.4l1.7-2.5l1.7 0.3l1.6-6.5l1.7-5.7l1.7 1.6l1.7 4.8l1.6 3.3l1.7 4.2l1.7-0.6l1.7-3.3l1.7 0.4l1.6-0.3l1.7-2l1.7 1.5l1.7 9.4l1.6 7.2l1.7 5.6l1.7-5.6l1.7-7.2l1.7-12l1.6 1.5l1.7 1.4l1.7 5.8l1.7 6.6l1.6 0.1l1.7-3.2l1.7-1.5l1.7 0.7l1.7 2l1.6 4.4l1.7-3.3l1.7-7.1l1.7-5.9l1.7-3.5l1.6 1.6l1.7 2.9l1.7 7.2l1.7 1.1l1.6-4.3l1.7-0.6l1.7-1.5l1.7 4.9l1.7 1.9l1.6-5.3l1.7-0.1l1.7 6l1.7-0.9l1.6-1.5l1.7-1l1.7 1.9l1.7 1.3l1.7-6.5l1.6-1l1.7-3.1l1.7 1.4l1.7 6.2l1.6 0.6l1.7-1l1.7-0.2l1.7 0.1l1.7-1.4l1.6 3.5l1.7 8.9l1.7 0.7l1.7-7.7l1.6-2.6l1.7 1.3l1.7-1l1.7-4.6l1.7-1.8l1.6-0.2l1.7 1.2l1.7 5.9l1.7-1.4l1.6-1.8l1.7-1.9l1.7 7.9l1.7 8.9l1.7 6.8l1.6-6.8l1.7-8.9l1.7 8.5l1.7-4.6l1.6-7.8l1.7-3.3l1.7 1.2l1.7 1.6l1.7-5l1.6 0.3l1.7 4.1l1.7 1.6l1.7 1.6l1.6-0.7l1.7 0.3l1.7-3.5l1.7-3.4l1.7-0.9l1.6 1.5l1.7 5.2l1.7 3.8l1.7 1.1l1.6-1.1l1.7 2.2l1.7 1.6l1.7-1.7l1.7-2.6l1.6-1.9l1.7 3.9l1.7-1.1l1.7-8.1l1.6 5l1.7 5.6l1.7 4.3l1.7-4.3l1.7-5.6l1.6-9.6l1.7 2.6l1.7 1.7l1.7 5.2l1.7-0.2l1.6-2.2l1.7 7.2l1.7 4.3l1.7 0.5l1.6 1.4l1.7-3.3l1.7-5.3l1.7 0.3l1.7 3.1l1.6-5.1l1.7-0.5l1.7 3.4l1.7-6.1l1.6-1.3l1.7-0.6l1.7 0.7l1.7 3.6l1.7-3.7l1.6 4.6l1.7 7.4l1.7-0.2l1.7-3.3l1.6-5.5l1.7-0.9l1.7 3.9l1.7-4.6l1.7-2.3l1.6 1.9l1.7-1.7l1.7 2.3l1.7 1.7l1.6-2.6l1.7-4.1l1.7-2.6l1.7 2.6l1.7 9.5l1.6 8.8l1.7-3.1l1.7-2.6l1.7-2.2l1.6-4.3l1.7-3.5l1.7-3.6l1.7-2.8l1.7-2.5l1.6 2.5l1.7 5.5l1.7 0.3l1.7-2.5l1.6 1.8l1.7-0.4l1.7 5.2l1.7 1.2l1.7-7.2l1.6 0.7l1.7 4.6l1.7 0.4l1.7-3l1.6-0.3l1.7 1.2l1.7 4.7l1.7 7.2l1.7 5.6l1.6-5.6l1.7-7.2l1.7-15.3l1.7 4.9l1.6 11.9l1.7 0.3l1.7-11.6l1.7-1.2l1.7 6.2l1.6 2l1.7-0.4l1.7-4.3l1.7-0.3l1.7 1.4l1.6 0.8l1.7-1.4l1.7-2.3l1.7 1.8l1.6-1.3l1.7-0.4l1.7-0.9l1.7-0.8l1.7 0.7l1.6-4.3l1.7-1.5l1.7 1.5l1.7-0.2l1.6 11.5l1.7 6.5l1.7-5.2l1.7-2.1l1.7 5.8l1.6 5.9l1.7-12.8l1.7-10.8l1.7 0.5l1.6 5.3l1.7 5.6l1.7 3.4l1.7-2.3l1.7-4.2l1.6 4.3l1.7-4.4l1.7-6.5l1.7 4.8l1.6 1.9l1.7 0.5l1.7 4.2l1.7 1.1l1.7-3.6l1.6-6.3l1.7 2.7l1.7 5.4l1.7-1.4l1.6 0.6l1.7 9.7l1.7 6.6l1.7-4.6l1.7-9.9l1.6-9.7l1.7 0.5l1.7 1.6l1.7-1.2l1.6 4.9l1.7 10l1.7 0.7l1.7-4.3l1.7-3.5l1.6-1.6l1.7-1.6l1.7 0.9l1.7-2.3l1.6-4.1l1.7 0.3l1.7-2l1.7 1.4l1.7 5.1l1.6 9.8l1.7 4.6l1.7-1.8l1.7-0.1l1.6-3.7l1.7-1.1l1.7 1.2l1.7-3.1l1.7-2.5l1.6 1l1.7-1.9l1.7-1.2l1.7 1.3l1.6-1.2l1.7-1.3l1.7-0.5l1.7 1l1.7 4.2l1.6 3.3l1.7-6.9l1.7-5l1.7 4.3l1.7 1.3l1.6-2l1.7-0.8l1.7-3.6l1.7 0.8l1.6 4.7l1.7 1.4l1.7 0.8l1.7-0.9l1.7 3.8l1.6 5.2l1.7-4.8l1.7-3.4l1.7 3l1.6 1.6l1.7-2.4l1.7-0.4l1.7 4.2l1.7 0.9l1.6 1.4l1.7-4l1.7-4.7l1.7-1.3l1.6-3.9l1.7 3.5l1.7 3l1.7 3.1l1.7-0.3l1.6-5.4l1.7 0.5l1.7 4.1l1.7-2.7l1.6-0.3l1.7 5.7l1.7-1.9l1.7-4.1l1.7 1.7l1.6 2.8l1.7 2.2l1.7-2.2l1.7-2.8l1.6-7l1.7 5.2l1.7 4l1.7-0.3l1.7 5.8l1.6 13.6l1.7 10.7l1.7-10.7l1.7-13.6l1.6-4.5l1.7 4.4l1.7 1.5l1.7-1l1.7-7l1.6-4.6l1.7 2l1.7 0.2l1.7 0.1l1.6 3.9l1.7 3.5l1.7 0.6l1.7-2.1l1.7-0.8l1.6-5.3l1.7-6.5l1.7 1.9l1.7-0.7l1.6-4.5l1.7 4.2l1.7 5.7l1.7 0.5l1.7-1.3l1.6-0.1l1.7 5.1l1.7 6.9l1.7 5.2l1.7-5.2l1.6-6.9l1.7-6.5l1.7 2.1l1.7-2.3l1.6 0.2l1.7-2.7l1.7-3.5l1.7-3.5l1.7 19.9l1.6 12l1.7 9.4l1.7-9.4l1.7-12l1.6-5.8l1.7-5.6l1.7 4.3l1.7 6.8l1.7 0.3l1.6-7l1.7-7.3l1.7-5.4l1.7 3.9l1.6 8.7l1.7 1.8l1.7-0.6l1.7 0.7l1.7-0.6l1.6-3l1.7-6.3l1.7-5.9l1.7-0.7l1.6 0.6l1.7 7.4l1.7 9.2H3150V1060.5z"/>
<path class="s" fill="#E24D42" stroke="#E24D42" d="M1929.9 1060.5V651h6l1.7-0.1l1.7 0.3h1.6l1.7 0.3l1.7-1.1l1.7 0.4l1.6 1.2l1.7 0.5l1.7 1.7l1.7-1.6l1.7 0.4l1.6-0.1l1.7 0.8h1.7l1.7-1.4l1.6-0.3l1.7-0.3l1.7-1.3h1.7l1.7 1.1l1.6-0.7l1.7 1.5l1.7-1.2h1.7l1.6-0.3h1.7l1.7 0.5l1.7 1.6l1.7-2l1.6 0.9l1.7 0.9l1.7-0.5l1.7-0.4l1.6 0.5l1.7 0.5l1.7-1l1.7-1.6l1.7 0.5l1.6 0.4l1.7-0.7l1.7 1l1.7 1.5l1.7 1l1.6-0.2l1.7-0.2l1.7 1.5l1.7-1.1l1.6-0.9l1.7 0.7l1.7-0.7l1.7-3.3l1.7 1.1l1.6 1.8l1.7 0.7l1.7 0.5l1.7 0.2h1.6l1.7-0.4l1.7 0.6l1.7-1.1l1.7-0.2l1.6-0.6l1.7 1.9l1.7-2l1.7-2.3l1.6 0.5l1.7 0.6l1.7 0.4l1.7-1.4l1.7 2.5l1.6-1.7l1.7 1.5l1.7-2l1.7-0.1l1.6 0.4l1.7 1.4l1.7 2.2l1.7 1.4l1.7-0.5l1.6-2.3l1.7 0.5l1.7 1.7l1.7-0.7h1.6l1.7-0.8l1.7 0.3l1.7 0.8l1.7-0.2l1.6 0.1l1.7-2.2l1.7-0.5l1.7-0.7l1.6 0.9l1.7 0.1l1.7 1l1.7-0.9l1.7 0.8l1.6-0.2l1.7 0.5l1.7-0.9l1.7-1.3l1.6 0.5l1.7-0.8h1.7l1.7-0.3l1.7-0.4l1.6 0.5l1.7 0.5l1.7 2l1.7 0.6l1.6-0.7l1.7-2.5l1.7-0.1l1.7 1.2l1.7-0.4l1.6-1.4l1.7 1.4l1.7-0.6l1.7-0.3l1.6 1.3l1.7 0.6l1.7 1.3l1.7-1.1l1.7-1.3l1.6 0.6l1.7-0.8l1.7 0.2l1.7 0.2l1.7 0.6l1.6 0.2l1.7 0.3l1.7-0.6l1.7-0.6h1.6l1.7 6.9l1.7 3.9l1.7-3.9l1.7-5.9l1.6-0.7l1.7-0.8l1.7 1.9l1.7-0.9l1.6-1.2l1.7 0.2l1.7 2.5l1.7-2.6l1.7 1l1.6 0.2l1.7 5.7l1.7 3.5l1.7-3.5l1.6-7.2l1.7 0.1l1.7-0.2l1.7 0.7l1.7 0.3l1.6-0.4l1.7 2l1.7 1h1.7l1.6 0.4l1.7-1.9l1.7 0.2l1.7-0.1l1.7 1.1l1.6-1.2l1.7 0.2l1.7 0.5l1.7 0.2l1.6 0.4l1.7 0.6l1.7-0.6l1.7-1.2l1.7-1.6l1.6 2.3h1.7l1.7-2.8l1.7 0.2l1.6 1.5l1.7-0.1l1.7 0.7l1.7-1.1l1.7-0.6l1.6 0.5l1.7-0.7l1.7-0.3l1.7-0.6h1.6l1.7 0.6l1.7 1.1l1.7-2.1l1.7 0.5l1.6 1.1l1.7 0.7l1.7-2.3l1.7-0.1l1.6 2.1l1.7-0.9l1.7 0.7l1.7 0.3l1.7 0.9l1.6-0.8l1.7-2l1.7 2.4l1.7 0.7l1.7 0.6l1.6 0.4l1.7 0.9l1.7 0.1l1.7-0.4l1.6-2l1.7 2.2l1.7-0.6l1.7-1.5l1.7 0.6l1.6-1.9l1.7-1l1.7 0.2l1.7-1h1.6h1.7l1.7 1.8l1.7-0.3l1.7 1l1.6 1.6l1.7-0.2l1.7-0.9l1.7 0.4l1.6-0.8l1.7-1.4l1.7 0.8l1.7 0.5l1.7-0.2h1.6l1.7-1.2l1.7 3l1.7-1l1.6 0.5l1.7 0.6l1.7-2.8l1.7 0.2l1.7 0.7l1.6-2l1.7 0.1l1.7 1l1.7-0.3h1.6l1.7 1.8l1.7 0.7l1.7 0.2l1.7 0.1l1.6-0.8l1.7 0.6l1.7 0.6l1.7-0.9l1.6-0.5l1.7 1.5h1.7l1.7-0.8l1.7-2.3l1.6 0.4l1.7-0.1l1.7 0.3l1.7 0.2l1.6 2.1l1.7-2l1.7-0.3l1.7-0.8l1.7 1.8l1.6 0.8l1.7-0.7l1.7 0.5l1.7 0.4l1.6-2.5l1.7 1.2h1.7l1.7 0.2l1.7 1.6l1.6-0.4l1.7-2.3l1.7 0.8l1.7-1l1.7 0.3h1.6l1.7 0.7l1.7-0.4l1.7 0.4l1.6-1.7l1.7 1.5l1.7 0.4l1.7 2l1.7-2l1.6-0.7l1.7-0.5l1.7 0.9l1.7-0.6l1.6-0.9l1.7 1.1l1.7-1.7l1.7 1.1l1.7 1.2l1.6-1.3l1.7 0.5l1.7 0.3l1.7-0.6l1.6-0.5l1.7 1.4l1.7-0.1l1.7-0.4l1.7-0.3l1.6-1.5l1.7 1.3l1.7 1.1l1.7 1.4l1.6-1.3l1.7 1l1.7 0.2l1.7 1l1.7 0.8l1.6-0.9l1.7-1.5l1.7 1.3l1.7-0.9l1.6-0.3l1.7 0.8l1.7 0.2l1.7-0.3l1.7 0.4l1.6 1.5l1.7-2.1l1.7-1.7l1.7 0.7l1.6-0.8l1.7-0.7l1.7 0.2l1.7 1.8h1.7l1.6 0.5l1.7-0.3l1.7 0.8l1.7-2l1.6 0.7l1.7 0.2l1.7 0.8l1.7 0.8l1.7-1.1l1.6 1l1.7 1l1.7-0.9l1.7-2.4l1.6 1.4l1.7-0.2l1.7 1.2l1.7-1.4l1.7 0.1l1.6 0.1l1.7 0.6l1.7-0.9l1.7-1.4l1.7 0.8l1.6-1.3l1.7-0.1l1.7 0.7l1.7 0.9l1.6 2.6l1.7-1.6l1.7 0.2l1.7-1.3l1.7 0.6l1.6-1.1l1.7-1.4l1.7 0.9l1.7 1.4l1.6 1.7l1.7-2.7l1.7 0.1l1.7-0.1l1.7-0.4l1.6 1.3l1.7 1.1l1.7-1.7l1.7 0.7l1.6-0.8l1.7-0.8l1.7 0.3l1.7 0.3l1.7-2.2h1.6l1.7 5.9l1.7 1.8l1.7-1.8l1.6-5.9h1.7l1.7 0.2l1.7 1.3l1.7 0.3l1.6-0.9l1.7 0.1l1.7-0.6l1.7 0.8l1.6-0.6l1.7 0.5l1.7 1.9l1.7 0.2l1.7 1l1.6-2.1l1.7 0.3l1.7 0.1l1.7-0.6l1.6 0.5l1.7-0.4l1.7-1.3l1.7 1.5l1.7 0.1l1.6-0.6l1.7 2l1.7-2.3l1.7 0.6l1.6 1.1l1.7-0.1l1.7-0.6l1.7-0.3l1.7-0.7l1.6 0.8l1.7-0.9l1.7-0.5l1.7 1l1.6-0.9l1.7 0.4l1.7-1.1l1.7 2.1l1.7-1.2l1.6-0.6l1.7-0.2l1.7-0.3h1.7h1.6l1.7 0.1l1.7 0.8l1.7 1.2l1.7 0.1l1.6 4.3l1.7 2.2l1.7-2.2l1.7-4l1.7 0.9l1.6-1.7l1.7 0.5l1.7-0.6l1.7 0.3l1.6-1.3h1.7l1.7 1.6l1.7 4.9l1.7 2.6l1.6-2.6l1.7-3.1l1.7 2l1.7-3.5l1.6-1.5l1.7-0.3l1.7 0.1l1.7 0.4h1.7l1.6 1.7l1.7 2.4l1.7-1.2l1.7-1.2l1.6-0.2l1.7-1.1l1.7-0.4l1.7 0.8l1.7 1.7l1.6 0.9l1.7 0.1l1.7-0.6l1.7-0.7l1.6 0.4l1.7-1.7l1.7-1.8l1.7 0.7l1.7 0.3l1.6 1.6l1.7-1.6l1.7-1.3l1.7 0.4l1.6 2.2l1.7-0.4h1.7l1.7-0.3h1.7l1.6 1l1.7 0.4l1.7 0.4l1.7 0.6l1.6-0.3l1.7-1.1l1.7 1.2l1.7-0.5l1.7-0.6l1.6 0.3l1.7 0.3l1.7-1.5l1.7-0.2l1.6 1l1.7-0.3l1.7-0.4l1.7 0.2l1.7-0.9l1.6-0.2l1.7-0.1l1.7 1.2l1.7-1.7l1.6 0.9l1.7 0.9l1.7-1.3l1.7 0.4l1.7 1.7l1.6-1l1.7 1l1.7 0.6l1.7-0.5l1.7-0.4l1.6-0.7l1.7 0.7l1.7 0.3l1.7-0.4l1.6-0.9l1.7 0.2l1.7-1.2l1.7 0.9l1.7-0.6l1.6 0.1l1.7-0.1l1.7-0.4l1.7-0.8h1.6l1.7 1.3l1.7 1.2l1.7 1.8l1.7-0.7l1.6 0.8l1.7 0.3l1.7-2.3l1.7 0.5l1.6 1.3l1.7-1.1l1.7-0.5l1.7 0.1l1.7 0.7l1.6 0.1l1.7 0.2l1.7-0.3l1.7 0.1h1.6l1.7-1.2l1.7 0.1l1.7 0.6l1.7 0.1l1.6 0.2l1.7 2l1.7-0.6l1.7-1.9l1.6 0.2l1.7 1.1l1.7-0.2l1.7-0.1l1.7-1.5l1.6 0.5l1.7 0.5l1.7-1.1l1.7 0.9l1.6 0.7l1.7 0.1l1.7-1.2l1.7 0.3l1.7-0.2h1.6l1.7 0.3l1.7-0.1l1.7-1l1.6-0.4l1.7 1.6l1.7-0.9l1.7-1.1l1.7 1l1.6-0.5l1.7 2.7l1.7-0.7l1.7 0.4l1.6-0.4l1.7-1.1l1.7 0.7l1.7 0.3l1.7-0.7l1.6-0.8l1.7-1.1l1.7-1.1l1.7 2l1.6-1.6l1.7-0.4l1.7 0.4l1.7 1.4l1.7-0.9l1.6-0.8l1.7 1l1.7-1.1l1.7 0.4l1.7 1.9l1.6 2h1.7l1.7-0.8l1.7-2.5l1.6 0.6l1.7 0.6l1.7 0.9l1.7 0.9l1.7-1.2l1.6 0.5l1.7-0.2l1.7-0.5l1.7-0.6l1.6-0.1l1.7 0.6l1.7-1.1l1.7-0.3l1.7-1.1l1.6 2l1.7 2.3l1.7-0.9l1.7 0.6l1.6 0.7l1.7 0.6l1.7 0.4l1.7-1l1.7-1.7l1.6-1.4l1.7 1.2l1.7-0.5l1.7 0.1l1.6 1.3l1.7-0.1l1.7-1.8l1.7 0.4l1.7 0.4l1.6 5.6l1.7 3.5l1.7-3.5l1.7-8.2h1.6h1.7h1.7h1.7l1.7 0.2l1.6 7.5l1.7 3l1.7-3l1.7-7.6l1.6-0.1h1.7l1.7 0.2l1.7 1.8l1.7-0.7l1.6 0.5l1.7-0.7l1.7-0.6l1.7 0.1l1.6-0.3l1.7-0.3l1.7 0.9l1.7 0.9l1.7 1l1.6-1l1.7 2.5l1.7-0.6l1.7-1.1l1.6 0.8l1.7-0.4l1.7 2.1l1.7 0.1l1.7-1.1l1.6-2.2l1.7 1.3l1.7 0.2l1.7 0.4l1.7 0.4l1.6-0.2l1.7-0.4l1.7-0.2l1.7 0.5l1.6-0.5l1.7 0.8l1.7-1.5l1.7-0.7l1.7 5.7l1.6 3l1.7-3l1.7-7.7l1.7 2.5l1.6 0.7l1.7-0.6l1.7-0.6l1.7-0.5l1.7-0.3l1.6-0.2l1.7 1.5l1.7 2.1l1.7-1.3l1.6-1.9l1.7 0.9l1.7 0.2l1.7 0.3l1.7 1l1.6 1.2l1.7-0.5l1.7-1.3l1.7 0.1l1.6-1.4l1.7 0.6l1.7-1.2H3150V1060.5z"/>
<path class="s" fill="#1F78C1" stroke="#1F78C1" d="M1929.9 1060.5V648.5h6l1.7-0.6l1.7-0.4l1.6 1l1.7 0.5l1.7 0.4l1.7-1.2h1.6h1.7l1.7-0.2l1.7 0.5h1.7l1.6 0.3l1.7-0.4l1.7 0.3l1.7-0.3l1.6-0.5l1.7 0.2l1.7-0.3l1.7 0.7l1.7 0.4l1.6-0.4h1.7l1.7 0.5l1.7-0.1l1.6-0.8l1.7 0.4l1.7-0.1l1.7 0.1l1.7-0.2l1.6-0.2l1.7-0.2l1.7-0.1l1.7-0.1h1.6l1.7 0.1l1.7 0.4l1.7 1.3l1.7-0.4h1.6l1.7-0.1l1.7 0.4l1.7-0.8l1.7 0.6l1.6-0.5l1.7-0.1l1.7-0.3l1.7-0.4l1.6-0.7l1.7-0.1h1.7l1.7-0.1l1.7 0.5l1.6 0.2l1.7 0.4l1.7-0.1l1.7-0.3l1.6 0.2l1.7 0.1l1.7 0.4l1.7-0.7l1.7 0.2l1.6-0.1l1.7 0.3l1.7-0.2l1.7 0.9l1.6-0.3l1.7 0.2l1.7-0.7l1.7-0.2l1.7 0.3l1.6 0.3l1.7 0.3l1.7-0.4l1.7 0.3l1.6-0.9l1.7 0.7l1.7 0.2l1.7 0.3l1.7 0.3l1.6-0.5l1.7 0.1l1.7-0.7h1.7l1.6 0.9h1.7l1.7-0.3l1.7-0.7l1.7 0.3l1.6 0.1l1.7 0.6l1.7-0.8l1.7 0.9l1.6-0.4l1.7-0.2l1.7-0.2l1.7-0.3l1.7-0.3l1.6 0.2l1.7 0.8l1.7-0.8l1.7 0.4l1.6-0.4l1.7 0.3l1.7-0.3l1.7 0.2l1.7 0.2l1.6-0.4l1.7 1.2l1.7-0.2l1.7-0.3l1.6-0.3l1.7 0.3l1.7 0.6l1.7-0.5l1.7 0.3l1.6-0.5l1.7-0.3l1.7 0.1l1.7-0.6l1.6-0.3l1.7 0.8l1.7 0.8l1.7-0.9l1.7-0.8l1.6 0.7h1.7l1.7 0.5l1.7 0.2l1.7-1.4l1.6 0.2l1.7 0.3l1.7 0.1l1.7 0.7l1.6-0.3l1.7-0.8l1.7-0.3l1.7 0.6l1.7 0.6l1.6-0.4l1.7 0.1l1.7 0.1l1.7 0.3l1.6-0.4h1.7l1.7 0.1h1.7l1.7-0.1l1.6 0.4l1.7 0.4l1.7 0.8l1.7-0.7l1.6-1.1l1.7-0.3l1.7 0.3l1.7 0.6l1.7 0.1l1.6 0.1l1.7-0.3h1.7l1.7-0.2l1.6 0.2l1.7 0.5l1.7-1l1.7 0.7l1.7 0.4h1.6l1.7-0.1l1.7-0.6l1.7-0.1l1.6 0.2l1.7-0.3l1.7-0.8l1.7 0.2l1.7 0.2l1.6-0.1l1.7 0.6l1.7-1.1l1.7-0.2l1.6 0.8h1.7l1.7 1.1l1.7-0.4l1.7-0.1l1.6-0.2l1.7 0.3l1.7-0.5l1.7 0.5l1.6-0.5l1.7 0.3l1.7 0.8l1.7-0.1l1.7-1l1.6 0.8l1.7 0.2l1.7-0.4l1.7 0.3h1.6l1.7 0.1l1.7-0.5h1.7l1.7-0.5l1.6 0.8l1.7-0.8l1.7-0.2l1.7 0.2h1.7l1.6 0.3l1.7 0.4l1.7-0.8l1.7 0.2l1.6 0.6l1.7-0.3l1.7-0.1l1.7-0.3l1.7 0.3l1.6 0.4l1.7 0.3l1.7 0.2l1.7-0.6l1.6-0.3l1.7-0.3l1.7-0.1l1.7 0.4l1.7-0.9l1.6 0.4l1.7 1l1.7-0.5l1.7 0.1l1.6 0.1h1.7l1.7-0.2l1.7 0.5h1.7l1.6-0.2l1.7-0.6l1.7 0.5l1.7 0.2l1.6-0.6l1.7-0.2l1.7 0.1l1.7 0.5l1.7-0.5l1.6 0.1l1.7 0.1h1.7h1.7l1.6-0.3l1.7 0.3l1.7 1l1.7-0.2l1.7-0.2l1.6-0.3l1.7 0.3l1.7 0.3l1.7-0.5l1.6-0.4l1.7 0.7l1.7-0.1l1.7 0.2l1.7-0.4h1.6l1.7 0.5l1.7-0.7l1.7-0.2l1.6 0.2l1.7 0.4l1.7 0.3l1.7-0.2l1.7 0.6l1.6-1.2l1.7 0.3l1.7-0.1l1.7 0.1l1.6-0.2l1.7-0.4l1.7 1.2l1.7-0.6l1.7-0.1l1.6-0.5h1.7l1.7 0.8l1.7 0.3l1.7-0.8l1.6-0.3l1.7 0.2l1.7-0.2l1.7 0.4l1.6-0.4l1.7 0.2l1.7 0.4l1.7-0.2l1.7 0.1l1.6-0.3l1.7 0.2h1.7l1.7-1h1.6l1.7 0.5l1.7 0.1l1.7 0.6l1.7-0.7l1.6 0.2l1.7-0.3l1.7-0.2h1.7l1.6-0.1l1.7-0.1l1.7-0.4l1.7 0.3l1.7 0.2l1.6 1.2l1.7 0.1l1.7 0.3l1.7-0.4l1.6-0.5l1.7-0.2l1.7 0.7l1.7-0.6l1.7-0.2l1.6 0.2l1.7 0.5l1.7-0.1l1.7-0.3l1.6-0.4l1.7 0.5l1.7 0.2l1.7 0.2l1.7-0.3h1.6h1.7l1.7 0.2l1.7-0.4l1.6-0.4l1.7-0.1l1.7 0.9l1.7-0.2l1.7-0.3l1.6 0.1l1.7-0.2l1.7-0.3h1.7l1.6-0.2l1.7-0.4h1.7l1.7 0.3l1.7 0.2l1.6 0.2l1.7-0.2l1.7 0.2l1.7-0.1l1.6 0.3l1.7 0.2l1.7-0.2l1.7 0.2l1.7 0.4l1.6-0.1l1.7-0.2l1.7 0.2l1.7-0.8l1.7 0.3l1.6 0.5l1.7-1.2l1.7 0.5l1.7-0.5l1.6 0.1l1.7 0.2l1.7 0.5h1.7l1.7 0.4l1.6-0.4l1.7 0.2h1.7l1.7-0.9l1.6 0.7l1.7 0.6h1.7l1.7-0.4l1.7-0.7l1.6 0.5l1.7-0.3l1.7 0.5h1.7l1.6 0.7l1.7 0.3l1.7-0.8l1.7-0.5l1.7-0.3l1.6 0.1l1.7 1.3h1.7l1.7 0.3l1.6-0.5l1.7-0.1l1.7-0.6l1.7-0.6l1.7-0.2l1.6 0.2l1.7-0.4l1.7 0.6l1.7-0.2l1.6 0.5h1.7l1.7-0.4l1.7 0.1l1.7 0.5l1.6-0.1l1.7-0.3l1.7-0.2l1.7-0.9l1.6 0.3l1.7 0.3l1.7 1l1.7 0.1l1.7 0.4l1.6-0.9l1.7 0.2l1.7 0.5l1.7-0.2l1.6-0.1l1.7-0.3l1.7-0.1l1.7-0.1l1.7 0.2l1.6-0.1l1.7 0.8l1.7 0.5l1.7-0.3l1.6-0.2l1.7 0.4l1.7-0.8l1.7-0.1l1.7 0.2l1.6-0.2l1.7-0.3l1.7 0.8l1.7-0.5l1.6-0.1l1.7-0.2l1.7-0.2l1.7 0.7l1.7-0.6l1.6-0.2l1.7-0.4l1.7 0.8l1.7-0.1l1.7 0.4l1.6 0.4l1.7-0.7l1.7 0.3l1.7-0.2l1.6 0.1l1.7-0.4l1.7 0.3l1.7-0.1l1.7-0.3l1.6 1.4l1.7-0.3l1.7 0.3l1.7-1l1.6-0.3l1.7 0.1l1.7-0.2h1.7l1.7 0.5l1.6-0.6l1.7-0.5h1.7h1.7l1.6 0.4l1.7 0.5l1.7-0.3l1.7 0.5h1.7l1.6 0.1l1.7 0.4l1.7-0.4h1.7h1.6l1.7-0.7l1.7 0.5l1.7 0.5l1.7 0.1l1.6-0.3l1.7-0.6l1.7 0.1l1.7 0.6l1.6 0.6l1.7-0.2l1.7-0.9h1.7l1.7 0.4l1.6-0.2l1.7 0.3h1.7l1.7-0.4l1.6-0.3h1.7l1.7 0.5l1.7-0.3l1.7 0.1l1.6 0.4l1.7 0.3l1.7-0.1l1.7-0.2l1.6-0.1l1.7 1.2l1.7-0.4l1.7-1.2l1.7 0.6l1.6-0.6l1.7-0.2l1.7 0.1l1.7-0.5l1.6 0.6l1.7 0.1l1.7 0.1l1.7-0.3l1.7-0.2l1.6-1l1.7 0.6h1.7l1.7-0.3l1.7 0.4l1.6 0.3l1.7-0.5l1.7 0.9l1.7-0.4l1.6 0.5h1.7h1.7l1.7-0.6l1.7 0.6l1.6 0.8l1.7-0.1l1.7 0.1l1.7-0.4l1.6-0.5l1.7-0.2l1.7 0.6l1.7 0.5l1.7-0.6l1.6 0.4l1.7 0.3l1.7-1l1.7 0.2l1.6-0.2l1.7-0.1h1.7h1.7l1.7-0.1l1.6 0.4l1.7-0.1l1.7 0.2l1.7-0.4l1.6 0.1h1.7l1.7-0.1l1.7-0.4l1.7-0.2l1.6 0.1l1.7 0.4l1.7-0.5l1.7 0.7l1.6 0.3l1.7-0.8l1.7 0.6l1.7-0.2l1.7-0.1l1.6 0.2l1.7 0.2l1.7 0.1l1.7 0.3l1.6 0.3l1.7 0.4l1.7-0.4l1.7-0.8l1.7 0.6l1.6-0.4l1.7-0.2l1.7-0.4l1.7-0.2h1.6l1.7 0.6l1.7-0.1l1.7 0.2l1.7 0.4l1.6-0.4l1.7 0.3l1.7-0.6l1.7-0.1l1.6 0.7l1.7-0.7l1.7 0.1h1.7l1.7 1.1l1.6-0.1h1.7h1.7l1.7 0.2l1.6 0.1l1.7-0.9l1.7 0.2l1.7 0.7l1.7-0.1h1.6l1.7-0.3l1.7-0.2l1.7-0.2l1.7 0.1l1.6-0.2l1.7-1.3l1.7 0.8l1.7 0.8l1.6-0.6l1.7 0.2l1.7 0.3l1.7 0.4l1.7-0.8l1.6 0.4l1.7-0.9l1.7-0.5h1.7l1.6 0.6l1.7-1l1.7 1.1l1.7 0.1l1.7 0.6l1.6-0.3l1.7-0.1l1.7-0.3l1.7 0.2l1.6-0.2l1.7 0.3l1.7-0.1l1.7 0.4l1.7-0.5l1.6-0.1l1.7 0.3h1.7l1.7 0.4l1.6-0.8l1.7-0.8l1.7 0.4l1.7-0.4l1.7 0.3l1.6 0.3l1.7 0.6l1.7-0.2l1.7 0.5l1.6-0.1l1.7-0.3l1.7 0.3l1.7 0.4h1.7l1.6-0.4h1.7l1.7-0.4l1.7-0.6l1.6 0.6l1.7-0.3l1.7 0.1l1.7 0.3l1.7 0.3l1.6 0.4l1.7-0.2l1.7 0.5l1.7 0.5l1.6-0.1l1.7-0.5l1.7-0.1h1.7l1.7-0.1l1.6-0.5l1.7 0.4l1.7-0.2l1.7-0.1l1.6 0.4l1.7-0.5l1.7 0.2l1.7-1l1.7 0.6l1.6 0.1l1.7-0.9h1.7l1.7 0.4l1.7 1.2l1.6-0.8l1.7 0.6l1.7-0.4h1.7l1.6-0.1l1.7 0.1l1.7 0.2h1.7h1.7l1.6 0.3h1.7l1.7-0.6l1.7 0.6l1.6-0.7l1.7-0.2l1.7-1l1.7 0.2l1.7 0.4l1.6 0.1l1.7 1l1.7-0.4l1.7 0.3l1.6-0.7l1.7 0.3l1.7-0.1l1.7 0.5l1.7 0.1h1.6l1.7-0.4l1.7-0.4l1.7 0.4l1.6 0.7l1.7 0.3l1.7-0.7H3150V1060.5z"/>
</g>
<text x="1923.5" y="650.1" text-anchor="end">256</text>
<text x="1923.5" y="853.9" text-anchor="end">128</text>
<text x="1923.5" y="1057.6" text-anchor="end">64</text>
<text x="2043" y="1084.2" text-anchor="middle">14:00</text>
<text x="2244.6" y="1084.2" text-anchor="middle">14:30</text>
<text x="2446.2" y="1084.2" text-anchor="middle">15:00</text>
<text x="2647.8" y="1084.2" text-anchor="middle">15:30</text>
<text x="2849.4" y="1084.2" text-anchor="middle">16:00</text>
<text x="3051" y="1084.2" text-anchor="middle">16:30</text>
<text class="hd" x="3605.6" y="662.2" text-anchor="end">current</text>
<rect x="3181.6" y="674" width="444.4" height="48" fill="#262628"/>
<rect x="3202" y="697" width="24" height="7" rx="2.5" fill="#7EB26D"/>
<text class="lg" x="3240" y="703.8">capture-p90</text>
<rect x="3202" y="745" width="24" height="7" rx="2.5" fill="#EAB839"/>
<text class="lg" x="3240" y="751.8">172.16.5.33:47912-p90</text>
<text class="lg" x="3605.6" y="751.8" text-anchor="end">187.53</text>
<rect x="3181.6" y="770" width="444.4" height="48" fill="#262628"/>
<rect x="3202" y="793" width="24" height="7" rx="2.5" fill="#6ED0E0"/>
<text class="lg" x="3240" y="799.8">172.16.5.33:47913-p90</text>
<text class="lg" x="3605.6" y="799.8" text-anchor="end">213.99</text>
<rect x="3202" y="841" width="24" height="7" rx="2.5" fill="#EF843C"/>
<text class="lg" x="3240" y="847.8">capture-p99</text>
<rect x="3181.6" y="866" width="444.4" height="48" fill="#262628"/>
<rect x="3202" y="889" width="24" height="7" rx="2.5" fill="#E24D42"/>
<text class="lg" x="3240" y="895.8">172.16.5.33:47912-p99</text>
<text class="lg" x="3605.6" y="895.8" text-anchor="end">249.15</text>
<rect x="3202" y="937" width="24" height="7" rx="2.5" fill="#1F78C1"/>
<text class="lg" x="3240" y="943.8">172.16.5.33:47913-p99</text>
<text class="lg" x="3605.6" y="943.8" text-anchor="end">251.80</text>
</g>
<g class="graph" id="graph6">
<path d="M1964.1 1204h1167.9v2h-1167.9zM1964.1 1306h1167.9v2h-1167.9zM1964.1 1408h1167.9v2h-1167.9zM1964.1 1510h1167.9v2h-1167.9zM1964.1 1612h1167.9v2h-1167.9z" fill="rgba(200,200,200,0.245)"/>
<path d="M2068 1204h2v408h-2zM2262 1204h2v408h-2zM2457 1204h2v408h-2zM2651 1204h2v408h-2zM2846 1204h2v408h-2zM3040 1204h2v408h-2z" fill="rgba(200,200,200,0.245)"/>
<clipPath id="cp6"><rect x="1964.1" y="1193" width="1167.9" height="419"/></clipPath>
<g clip-path="url(#cp6)">
<path class="s" fill="#7EB26D" stroke="#7EB26D" d="M1958.1 1620.5V1514.3h6h1.6h1.6h1.7h1.6h1.6h1.6h1.7h1.6h1.6h1.6h1.6h1.7h1.6h1.6h1.6h1.7h1.6h1.6h1.6h1.6h1.7h1.6h1.6h1.6h1.7h1.6h1.6h1.6h1.6h1.7h1.6h1.6h1.6h1.7h1.6h1.6h1.6h1.6h1.7h1.6h1.6h1.6h1.6h1.7h1.6h1.6h1.6h1.7h1.6h1.6h1.6h1.6h1.7h1.6h1.6h1.6h1.7h1.6h1.6h1.6h1.6h1.7h1.6h1.6h1.6h1.7h1.6h1.6h1.6h1.6h1.7h1.6h1.6h1.6h1.7h1.6h1.6h1.6h1.6h1.7h1.6h1.6h1.6h1.7h1.6h1.6h1.6h1.6h1.7h1.6h1.6h1.6h1.7h1.6h1.6h1.6h1.6h1.7h1.6h1.6h1.6h1.7h1.6h1.6h1.6h1.6h1.7h1.6h1.6h1.6h1.7h1.6h1.6h1.6h1.6h1.7h1.6h1.6h1.6h1.7h1.6h1.6h1.6h1.6h1.7h1.6h1.6h1.6h1.6h1.7h1.6h1.6h1.6h1.7h1.6h1.6h1.6h1.6h1.7h1.6h1.6h1.6h1.7h1.6h1.6h1.6h1.6h1.7h1.6h1.6h1.6h1.7h1.6h1.6h1.6h1.6h1.7h1.6h1.6h1.6h1.7h1.6h1.6h1.6h1.6h1.7h1.6h1.6h1.6h1.7h1.6h1.6h1.6h1.6h1.7h1.6h1.6h1.6h1.7h1.6h1.6h1.6h1.6h1.7h1.6h1.6h1.6h1.7h1.6h1.6h1.6h1.6h1.7h1.6h1.6h1.6h1.7h1.6h1.6h1.6h1.6h1.7h1.6h1.6h1.6h1.6h1.7h1.6h1.6h1.6h1.7h1.6h1.6h1.6h1.6h1.7h1.6h1.6h1.6h1.7h1.6h1.6h1.6h1.6h1.7h1.6h1.6h1.6h1.7h1.6h1.6h1.6h1.6h1.7h1.6h1.6h1.6h1.7h1.6h1.6h1.6h1.6h1.7h1.6h1.6h1.6h1.7h1.6h1.6h1.6h1.6h1.7h1.6h1.6h1.6h1.7h1.6h1.6h1.6h1.6h1.7h1.6h1.6h1.6h1.7h1.6h1.6h1.6h1.6h1.7h1.6h1.6h1.6h1.7h1.6h1.6h1.6h1.6h1.7h1.6h1.6h1.6h1.6h1.7h1.6h1.6h1.6h1.7h1.6h1.6h1.6h1.6h1.7h1.6h1.6h1.6h1.7h1.6h1.6h1.6h1.6h1.7h1.6h1.6h1.6h1.7h1.6h1.6h1.6h1.6h1.7h1.6h1.6h1.6h1.7h1.6h1.6h1.6h1.6h1.7h1.6h1.6h1.6h1.7h1.6h1.6h1.6h1.6h1.7h1.6h1.6h1.6h1.7h1.6h1.6h1.6h1.6h1.7h1.6h1.6h1.6h1.7h1.6h1.6h1.6h1.6h1.7h1.6h1.6h1.6h1.7h1.6h1.6h1.6h1.6h1.7h1.6h1.6h1.6h1.6h1.7h1.6h1.6h1.6h1.7h1.6h1.6h1.6h1.6h1.7h1.6h1.6h1.6h1.7h1.6h1.6h1.6h1.6h1.7h1.6h1.6h1.6h1.7h1.6h1.6h1.6h1.6h1.7h1.6h1.6h1.6h1.7h1.6h1.6h1.6h1.6h1.7h1.6h1.6h1.6h1.7h1.6h1.6h1.6h1.6h1.7h1.6h1.6h1.6h1.7h1.6h1.6h1.6h1.6h1.7h1.6h1.6h1.6h1.7h1.6h1.6h1.6h1.6h1.7h1.6h1.6h1.6h1.7h1.6h1.6h1.6h1.6h1.7h1.6h1.6h1.6h1.7h1.6h1.6h1.6h1.6h1.7h1.6h1.6h1.6h1.6h1.7h1.6h1.6h1.6h1.7h1.6h1.6h1.6h1.6h1.7h1.6h1.6h1.6h1.7h1.6h1.6h1.6h1.6h1.7h1.6h1.6h1.6h1.7h1.6h1.6h1.6h1.6h1.7h1.6h1.6h1.6h1.7h1.6h1.6h1.6h1.6h1.7h1.6h1.6h1.6h1.7h1.6h1.6h1.6h1.6h1.7h1.6h1.6h1.6h1.7h1.6h1.6h1.6h1.6h1.7h1.6h1.6h1.6h1.7h1.6h1.6h1.6h1.6h1.7h1.6h1.6h1.6h1.7h1.6h1.6h1.6h1.6h1.7h1.6h1.6h1.6h1.6h1.7h1.6h1.6h1.6h1.7h1.6h1.6h1.6h1.6h1.7h1.6h1.6h1.6h1.7h1.6h1.6h1.6h1.6h1.7h1.6h1.6h1.6h1.7h1.6h1.6h1.6h1.6h1.7h1.6h1.6h1.6h1.7h1.6h1.6h1.6h1.6h1.7h1.6h1.6h1.6h1.7h1.6h1.6h1.6h1.6h1.7h1.6h1.6h1.6h1.7h1.6h1.6h1.6h1.6h1.7h1.6h1.6h1.6h1.7h1.6h1.6h1.6h1.6h1.7h1.6h1.6h1.6h1.7h1.6h1.6h1.6h1.6h1.7h1.6h1.6h1.6h1.7h1.6h1.6h1.6h1.6h1.7h1.6h1.6h1.6h1.6h1.7h1.6h1.6h1.6h1.7h1.6h1.6h1.6h1.6h1.7h1.6h1.6h1.6h1.7h1.6h1.6h1.6h1.6h1.7h1.6h1.6h1.6h1.7h1.6h1.6h1.6h1.6h1.7h1.6h1.6h1.6h1.7h1.6h1.6h1.6h1.6h1.7h1.6h1.6h1.6h1.7h1.6h1.6h1.6h1.6h1.7h1.6h1.6h1.6h1.7h1.6h1.6h1.6h1.6h1.7h1.6h1.6h1.6h1.7h1.6h1.6h1.6h1.6h1.7h1.6h1.6h1.6h1.7h1.6h1.6h1.6h1.6h1.7h1.6h1.6h1.6h1.6h1.7h1.6h1.6h1.6h1.7h1.6h1.6h1.6h1.6h1.7h1.6h1.6h1.6h1.7h1.6h1.6h1.6h1.6h1.7h1.6h1.6h1.6h1.7h1.6h1.6h1.6h1.6h1.7h1.6h1.6h1.6h1.7h1.6h1.6H3138V1620.5z"/>
<path class="s" fill="#EAB839" stroke="#EAB839" d="M1958.1 1620.5V1514h6h1.6h1.6h1.7h1.6h1.6h1.6h1.7h1.6h1.6h1.6h1.6h1.7h1.6h1.6h1.6h1.7h1.6h1.6h1.6h1.6h1.7h1.6h1.6h1.6h1.7h1.6h1.6h1.6h1.6h1.7h1.6h1.6h1.6h1.7h1.6h1.6h1.6h1.6h1.7h1.6h1.6h1.6h1.6h1.7h1.6h1.6h1.6h1.7h1.6h1.6h1.6h1.6h1.7h1.6h1.6h1.6h1.7h1.6h1.6h1.6h1.6h1.7h1.6h1.6h1.6h1.7h1.6h1.6h1.6h1.6h1.7h1.6h1.6h1.6h1.7h1.6h1.6h1.6h1.6h1.7h1.6h1.6h1.6h1.7h1.6h1.6h1.6h1.6h1.7h1.6h1.6h1.6h1.7h1.6h1.6h1.6h1.6h1.7h1.6h1.6h1.6h1.7h1.6h1.6h1.6h1.6h1.7h1.6h1.6h1.6h1.7h1.6h1.6h1.6h1.6h1.7h1.6h1.6h1.6h1.7h1.6h1.6h1.6h1.6h1.7h1.6h1.6h1.6h1.6h1.7h1.6h1.6h1.6h1.7h1.6h1.6h1.6h1.6h1.7h1.6h1.6h1.6h1.7h1.6h1.6h1.6h1.6h1.7h1.6h1.6h1.6h1.7h1.6h1.6h1.6h1.6h1.7h1.6h1.6h1.6h1.7h1.6h1.6h1.6h1.6h1.7h1.6h1.6h1.6h1.7h1.6h1.6h1.6h1.6h1.7h1.6h1.6h1.6h1.7h1.6h1.6h1.6h1.6h1.7h1.6h1.6h1.6h1.7h1.6h1.6h1.6h1.6h1.7h1.6h1.6h1.6h1.7h1.6h1.6h1.6h1.6h1.7h1.6h1.6h1.6h1.6h1.7h1.6h1.6h1.6h1.7h1.6h1.6h1.6h1.6h1.7h1.6h1.6h1.6h1.7h1.6h1.6h1.6h1.6h1.7h1.6h1.6h1.6h1.7h1.6h1.6h1.6h1.6h1.7h1.6h1.6h1.6h1.7h1.6h1.6h1.6h1.6h1.7h1.6h1.6h1.6h1.7h1.6h1.6h1.6h1.6h1.7h1.6h1.6h1.6h1.7h1.6h1.6h1.6h1.6h1.7h1.6h1.6h1.6h1.7h1.6h1.6h1.6h1.6h1.7h1.6h1.6h1.6h1.7h1.6h1.6h1.6h1.6h1.7h1.6h1.6h1.6h1.6h1.7h1.6h1.6h1.6h1.7h1.6h1.6h1.6h1.6h1.7h1.6h1.6h1.6h1.7h1.6h1.6h1.6h1.6h1.7h1.6h1.6h1.6h1.7h1.6h1.6h1.6h1.6h1.7h1.6h1.6h1.6h1.7h1.6h1.6h1.6h1.6h1.7h1.6h1.6h1.6h1.7h1.6h1.6h1.6h1.6h1.7h1.6h1.6h1.6h1.7h1.6h1.6h1.6h1.6h1.7h1.6h1.6h1.6h1.7h1.6h1.6h1.6h1.6h1.7h1.6h1.6h1.6h1.7h1.6h1.6h1.6h1.6h1.7h1.6h1.6h1.6h1.6h1.7h1.6h1.6h1.6h1.7h1.6h1.6h1.6h1.6h1.7h1.6h1.6h1.6h1.7h1.6h1.6h1.6h1.6h1.7h1.6h1.6h1.6h1.7h1.6h1.6h1.6h1.6h1.7h1.6h1.6h1.6h1.7h1.6h1.6h1.6h1.6h1.7h1.6h1.6h1.6h1.7h1.6h1.6h1.6h1.6h1.7h1.6h1.6h1.6h1.7h1.6h1.6h1.6h1.6h1.7h1.6h1.6h1.6h1.7h1.6h1.6h1.6h1.6h1.7h1.6h1.6h1.6h1.7h1.6h1.6h1.6h1.6h1.7h1.6h1.6h1.6h1.7h1.6h1.6h1.6h1.6h1.7h1.6h1.6h1.6h1.6h1.7h1.6h1.6h1.6h1.7h1.6h1.6h1.6h1.6h1.7h1.6h1.6h1.6h1.7h1.6h1.6h1.6h1.6h1.7h1.6h1.6h1.6h1.7h1.6h1.6h1.6h1.6h1.7h1.6h1.6h1.6h1.7h1.6h1.6h1.6h1.6h1.7h1.6h1.6h1.6h1.7h1.6h1.6h1.6h1.6h1.7h1.6h1.6h1.6h1.7h1.6h1.6h1.6h1.6h1.7h1.6h1.6h1.6h1.7h1.6h1.6h1.6h1.6h1.7h1.6h1.6h1.6h1.7h1.6h1.6h1.6h1.6h1.7h1.6h1.6h1.6h1.6h1.7h1.6h1.6h1.6h1.7h1.6h1.6h1.6h1.6h1.7h1.6h1.6h1.6h1.7h1.6h1.6h1.6h1.6h1.7h1.6h1.6h1.6h1.7h1.6h1.6h1.6h1.6h1.7h1.6h1.6h1.6h1.7h1.6h1.6h1.6h1.6h1.7h1.6h1.6h1.6h1.7h1.6h1.6h1.6h1.6h1.7h1.6h1.6h1.6h1.7h1.6h1.6h1.6h1.6h1.7h1.6h1.6h1.6h1.7h1.6h1.6h1.6h1.6h1.7h1.6h1.6h1.6h1.7h1.6h1.6h1.6h1.6h1.7h1.6h1.6h1.6h1.7h1.6h1.6h1.6h1.6h1.7h1.6h1.6h1.6h1.6h1.7h1.6h1.6h1.6h1.7h1.6h1.6h1.6h1.6h1.7h1.6h1.6h1.6h1.7h1.6h1.6h1.6h1.6h1.7h1.6h1.6h1.6h1.7h1.6h1.6h1.6h1.6h1.7h1.6h1.6h1.6h1.7h1.6h1.6h1.6h1.6h1.7h1.6h1.6h1.6h1.7h1.6h1.6h1.6h1.6h1.7h1.6h1.6h1.6h1.7h1.6h1.6h1.6h1.6h1.7h1.6h1.6h1.6h1.7h1.6h1.6h1.6h1.6h1.7h1.6h1.6h1.6h1.7h1.6h1.6h1.6h1.6h1.7h1.6h1.6h1.6h1.6h1.7h1.6h1.6h1.6h1.7h1.6h1.6h1.6h1.6h1.7h1.6h1.6h1.6h1.7h1.6h1.6h1.6h1.6h1.7h1.6h1.6h1.6h1.7h1.6h1.6h1.6h1.6h1.7h1.6h1.6h1.6h1.7h1.6h1.6H3138V1620.5z"/>
<path class="s" fill="#6ED0E0" stroke="#6ED0E0" d="M1958.1 1620.5V1508.7h6h1.6h1.6h1.7h1.6h1.6h1.6h1.7h1.6h1.6h1.6h1.6h1.7h1.6h1.6h1.6h1.7h1.6h1.6h1.6h1.6h1.7h1.6h1.6h1.6h1.7h1.6h1.6h1.6h1.6h1.7h1.6h1.6h1.6h1.7h1.6h1.6h1.6h1.6h1.7h1.6h1.6h1.6h1.6h1.7h1.6h1.6h1.6h1.7h1.6h1.6h1.6h1.6h1.7h1.6h1.6h1.6h1.7h1.6h1.6h1.6h1.6h1.7h1.6h1.6h1.6h1.7h1.6h1.6h1.6h1.6h1.7h1.6h1.6h1.6h1.7h1.6h1.6h1.6h1.6h1.7h1.6h1.6h1.6h1.7h1.6h1.6h1.6h1.6h1.7h1.6h1.6h1.6h1.7h1.6h1.6h1.6h1.6h1.7h1.6h1.6h1.6h1.7h1.6h1.6h1.6h1.6h1.7h1.6h1.6h1.6h1.7h1.6h1.6h1.6h1.6h1.7h1.6h1.6h1.6h1.7h1.6h1.6h1.6h1.6h1.7h1.6h1.6h1.6h1.6h1.7h1.6h1.6h1.6h1.7h1.6h1.6h1.6h1.6h1.7h1.6h1.6h1.6h1.7h1.6h1.6h1.6h1.6h1.7h1.6h1.6h1.6h1.7h1.6h1.6h1.6h1.6h1.7h1.6h1.6h1.6h1.7h1.6h1.6h1.6h1.6h1.7h1.6h1.6h1.6h1.7h1.6h1.6h1.6h1.6h1.7h1.6h1.6h1.6h1.7h1.6h1.6h1.6h1.6h1.7h1.6h1.6h1.6h1.7h1.6h1.6h1.6h1.6h1.7h1.6h1.6h1.6h1.7h1.6h1.6h1.6h1.6h1.7h1.6h1.6h1.6h1.6h1.7h1.6h1.6h1.6h1.7h1.6h1.6h1.6h1.6h1.7h1.6h1.6h1.6h1.7h1.6h1.6h1.6h1.6h1.7h1.6h1.6h1.6h1.7h1.6h1.6h1.6h1.6h1.7h1.6h1.6h1.6h1.7h1.6h1.6h1.6h1.6h1.7h1.6h1.6h1.6h1.7h1.6h1.6h1.6h1.6h1.7h1.6h1.6h1.6h1.7h1.6h1.6h1.6h1.6h1.7h1.6h1.6h1.6h1.7h1.6h1.6h1.6h1.6h1.7h1.6h1.6h1.6h1.7h1.6h1.6h1.6h1.6h1.7h1.6h1.6h1.6h1.6h1.7h1.6h1.6h1.6h1.7h1.6h1.6h1.6h1.6h1.7h1.6h1.6h1.6h1.7h1.6h1.6h1.6h1.6h1.7h1.6h1.6h1.6h1.7h1.6h1.6h1.6h1.6h1.7h1.6h1.6h1.6h1.7h1.6h1.6h1.6h1.6h1.7h1.6h1.6h1.6h1.7h1.6h1.6h1.6h1.6h1.7h1.6h1.6h1.6h1.7h1.6h1.6h1.6h1.6h1.7h1.6h1.6h1.6h1.7h1.6h1.6h1.6h1.6h1.7h1.6h1.6h1.6h1.7h1.6h1.6h1.6h1.6h1.7h1.6h1.6h1.6h1.6h1.7h1.6h1.6h1.6h1.7h1.6h1.6h1.6h1.6h1.7h1.6h1.6h1.6h1.7h1.6h1.6h1.6h1.6h1.7h1.6h1.6h1.6h1.7h1.6h1.6h1.6h1.6h1.7h1.6h1.6h1.6h1.7h1.6h1.6h1.6h1.6h1.7h1.6h1.6h1.6h1.7h1.6h1.6h1.6h1.6h1.7h1.6h1.6h1.6h1.7h1.6h1.6h1.6h1.6h1.7h1.6h1.6h1.6h1.7h1.6h1.6h1.6h1.6h1.7h1.6h1.6h1.6h1.7h1.6h1.6h1.6h1.6h1.7h1.6h1.6h1.6h1.7h1.6h1.6h1.6h1.6h1.7h1.6h1.6h1.6h1.6h1.7h1.6h1.6h1.6h1.7h1.6h1.6h1.6h1.6h1.7h1.6h1.6h1.6h1.7h1.6h1.6h1.6h1.6h1.7h1.6h1.6h1.6h1.7h1.6h1.6h1.6h1.6h1.7h1.6h1.6h1.6h1.7h1.6h1.6h1.6h1.6h1.7h1.6h1.6h1.6h1.7h1.6h1.6h1.6h1.6h1.7h1.6h1.6h1.6h1.7h1.6h1.6h1.6h1.6h1.7h1.6h1.6h1.6h1.7h1.6h1.6h1.6h1.6h1.7h1.6h1.6h1.6h1.7h1.6h1.6h1.6h1.6h1.7h1.6h1.6h1.6h1.6h1.7h1.6h1.6h1.6h1.7h1.6h1.6h1.6h1.6h1.7h1.6h1.6h1.6h1.7h1.6h1.6h1.6h1.6h1.7h1.6h1.6h1.6h1.7h1.6h1.6h1.6h1.6h1.7h1.6h1.6h1.6h1.7h1.6h1.6h1.6h1.6h1.7h1.6h1.6h1.6h1.7h1.6h1.6h1.6h1.6h1.7h1.6h1.6h1.6h1.7h1.6h1.6h1.6h1.6h1.7h1.6h1.6h1.6h1.7h1.6h1.6h1.6h1.6h1.7h1.6h1.6h1.6h1.7h1.6h1.6h1.6h1.6h1.7h1.6h1.6h1.6h1.7h1.6h1.6h1.6h1.6h1.7h1.6h1.6h1.6h1.6h1.7h1.6h1.6h1.6h1.7h1.6h1.6h1.6h1.6h1.7h1.6h1.6h1.6h1.7h1.6h1.6h1.6h1.6h1.7h1.6h1.6h1.6h1.7h1.6h1.6h1.6h1.6h1.7h1.6h1.6h1.6h1.7h1.6h1.6h1.6h1.6h1.7h1.6h1.6h1.6h1.7h1.6h1.6h1.6h1.6h1.7h1.6h1.6h1.6h1.7h1.6h1.6h1.6h1.6h1.7h1.6h1.6h1.6h1.7h1.6h1.6h1.6h1.6h1.7h1.6h1.6h1.6h1.7h1.6h1.6h1.6h1.6h1.7h1.6h1.6h1.6h1.6h1.7h1.6h1.6h1.6h1.7h1.6h1.6h1.6h1.6h1.7h1.6h1.6h1.6h1.7h1.6h1.6h1.6h1.6h1.7h1.6h1.6h1.6h1.7h1.6h1.6h1.6h1.6h1.7h1.6h1.6h1.6h1.7h1.6h1.6H3138V1620.5z"/>
<path class="s" fill="#EF843C" stroke="#EF843C" d="M1958.1 1620.5V1508.5h6h1.6h1.6h1.7h1.6h1.6h1.6h1.7h1.6h1.6h1.6h1.6h1.7h1.6h1.6h1.6h1.7h1.6h1.6h1.6h1.6h1.7h1.6h1.6h1.6h1.7h1.6h1.6h1.6h1.6h1.7h1.6h1.6h1.6h1.7h1.6h1.6h1.6h1.6h1.7h1.6h1.6h1.6h1.6h1.7h1.6h1.6h1.6h1.7h1.6h1.6h1.6h1.6h1.7h1.6h1.6h1.6h1.7h1.6h1.6h1.6h1.6h1.7h1.6h1.6h1.6h1.7h1.6h1.6h1.6h1.6h1.7h1.6h1.6h1.6h1.7h1.6h1.6h1.6h1.6h1.7h1.6h1.6h1.6h1.7h1.6h1.6h1.6h1.6h1.7h1.6h1.6h1.6h1.7h1.6h1.6h1.6h1.6h1.7h1.6h1.6h1.6h1.7h1.6h1.6h1.6h1.6h1.7h1.6h1.6h1.6h1.7h1.6h1.6h1.6h1.6h1.7h1.6h1.6h1.6h1.7h1.6h1.6h1.6h1.6h1.7h1.6h1.6h1.6h1.6h1.7h1.6h1.6h1.6h1.7h1.6h1.6h1.6h1.6h1.7h1.6h1.6h1.6h1.7h1.6h1.6h1.6h1.6h1.7h1.6h1.6h1.6h1.7h1.6h1.6h1.6h1.6h1.7h1.6h1.6h1.6h1.7h1.6h1.6h1.6h1.6h1.7h1.6h1.6h1.6h1.7h1.6h1.6h1.6h1.6h1.7h1.6h1.6h1.6h1.7h1.6h1.6h1.6h1.6h1.7h1.6h1.6h1.6h1.7h1.6h1.6h1.6h1.6h1.7h1.6h1.6h1.6h1.7h1.6h1.6h1.6h1.6h1.7h1.6h1.6h1.6h1.6h1.7h1.6h1.6h1.6h1.7h1.6h1.6h1.6h1.6h1.7h1.6h1.6h1.6h1.7h1.6h1.6h1.6h1.6h1.7h1.6h1.6h1.6h1.7h1.6h1.6h1.6h1.6h1.7h1.6h1.6h1.6h1.7h1.6h1.6h1.6h1.6h1.7h1.6h1.6h1.6h1.7h1.6h1.6h1.6h1.6h1.7h1.6h1.6h1.6h1.7h1.6h1.6h1.6h1.6h1.7h1.6h1.6h1.6h1.7h1.6h1.6h1.6h1.6h1.7h1.6h1.6h1.6h1.7h1.6h1.6h1.6h1.6h1.7h1.6h1.6h1.6h1.6h1.7h1.6h1.6h1.6h1.7h1.6h1.6h1.6h1.6h1.7h1.6h1.6h1.6h1.7h1.6h1.6h1.6h1.6h1.7h1.6h1.6h1.6h1.7h1.6h1.6h1.6h1.6h1.7h1.6h1.6h1.6h1.7h1.6h1.6h1.6h1.6h1.7h1.6h1.6h1.6h1.7h1.6h1.6h1.6h1.6h1.7h1.6h1.6h1.6h1.7h1.6h1.6h1.6h1.6h1.7h1.6h1.6h1.6h1.7h1.6h1.6h1.6h1.6h1.7h1.6h1.6h1.6h1.7h1.6h1.6h1.6h1.6h1.7h1.6h1.6h1.6h1.6h1.7h1.6h1.6h1.6h1.7h1.6h1.6h1.6h1.6h1.7h1.6h1.6h1.6h1.7h1.6h1.6h1.6h1.6h1.7h1.6h1.6h1.6h1.7h1.6h1.6h1.6h1.6h1.7h1.6h1.6h1.6h1.7h1.6h1.6h1.6h1.6h1.7h1.6h1.6h1.6h1.7h1.6h1.6h1.6h1.6h1.7h1.6h1.6h1.6h1.7h1.6h1.6h1.6h1.6h1.7h1.6h1.6h1.6h1.7h1.6h1.6h1.6h1.6h1.7h1.6h1.6h1.6h1.7h1.6h1.6h1.6h1.6h1.7h1.6h1.6h1.6h1.7h1.6h1.6h1.6h1.6h1.7h1.6h1.6h1.6h1.6h1.7h1.6h1.6h1.6h1.7h1.6h1.6h1.6h1.6h1.7h1.6h1.6h1.6h1.7h1.6h1.6h1.6h1.6h1.7h1.6h1.6h1.6h1.7h1.6h1.6h1.6h1.6h1.7h1.6h1.6h1.6h1.7h1.6h1.6h1.6h1.6h1.7h1.6h1.6h1.6h1.7h1.6h1.6h1.6h1.6h1.7h1.6h1.6h1.6h1.7h1.6h1.6h1.6h1.6h1.7h1.6h1.6h1.6h1.7h1.6h1.6h1.6h1.6h1.7h1.6h1.6h1.6h1.7h1.6h1.6h1.6h1.6h1.7h1.6h1.6h1.6h1.6h1.7h1.6h1.6h1.6h1.7h1.6h1.6h1.6h1.6h1.7h1.6h1.6h1.6h1.7h1.6h1.6h1.6h1.6h1.7h1.6h1.6h1.6h1.7h1.6h1.6h1.6h1.6h1.7h1.6h1.6h1.6h1.7h1.6h1.6h1.6h1.6h1.7h1.6h1.6h1.6h1.7h1.6h1.6h1.6h1.6h1.7h1.6h1.6h1.6h1.7h1.6h1.6h1.6h1.6h1.7h1.6h1.6h1.6h1.7h1.6h1.6h1.6h1.6h1.7h1.6h1.6h1.6h1.7h1.6h1.6h1.6h1.6h1.7h1.6h1.6h1.6h1.7h1.6h1.6h1.6h1.6h1.7h1.6h1.6h1.6h1.6h1.7h1.6h1.6h1.6h1.7h1.6h1.6h1.6h1.6h1.7h1.6h1.6h1.6h1.7h1.6h1.6h1.6h1.6h1.7h1.6h1.6h1.6h1.7h1.6h1.6h1.6h1.6h1.7h1.6h1.6h1.6h1.7h1.6h1.6h1.6h1.6h1.7h1.6h1.6h1.6h1.7h1.6h1.6h1.6h1.6h1.7h1.6h1.6h1.6h1.7h1.6h1.6h1.6h1.6h1.7h1.6h1.6h1.6h1.7h1.6h1.6h1.6h1.6h1.7h1.6h1.6h1.6h1.7h1.6h1.6h1.6h1.6h1.7h1.6h1.6h1.6h1.6h1.7h1.6h1.6h1.6h1.7h1.6h1.6h1.6h1.6h1.7h1.6h1.6h1.6h1.7h1.6h1.6h1.6h1.6h1.7h1.6h1.6h1.6h1.7h1.6h1.6h1.6h1.6h1.7h1.6h1.6h1.6h1.7h1.6h1.6H3138V1620.5z"/>
<path class="s" fill="#E24D42" stroke="#E24D42" d="M1958.1 1620.5V1507.2h6h1.6h1.6h1.7h1.6h1.6h1.6h1.7h1.6h1.6h1.6h1.6h1.7h1.6h1.6h1.6h1.7h1.6h1.6h1.6h1.6h1.7h1.6h1.6h1.6h1.7h1.6h1.6h1.6h1.6h1.7h1.6h1.6h1.6h1.7h1.6h1.6h1.6h1.6h1.7h1.6h1.6h1.6h1.6h1.7h1.6h1.6h1.6h1.7h1.6h1.6h1.6l1.6-81.7l1.7 1.5l1.6-1.5l1.6 81.7h1.6h1.7h1.6h1.6h1.6h1.6h1.7h1.6h1.6h1.6h1.7h1.6h1.6h1.6h1.6h1.7h1.6h1.6h1.6h1.7h1.6h1.6h1.6h1.6h1.7h1.6h1.6h1.6h1.7h1.6h1.6h1.6h1.6h1.7h1.6h1.6h1.6h1.7h1.6h1.6h1.6h1.6h1.7h1.6h1.6h1.6h1.7h1.6h1.6h1.6h1.6h1.7h1.6h1.6h1.6h1.7h1.6h1.6h1.6h1.6h1.7h1.6h1.6h1.6h1.7h1.6h1.6h1.6h1.6h1.7h1.6h1.6h1.6h1.6h1.7h1.6h1.6h1.6h1.7h1.6h1.6h1.6h1.6h1.7h1.6h1.6h1.6h1.7h1.6h1.6h1.6h1.6h1.7h1.6h1.6h1.6h1.7h1.6h1.6h1.6h1.6h1.7h1.6h1.6h1.6h1.7h1.6h1.6h1.6h1.6h1.7h1.6h1.6h1.6h1.7h1.6h1.6h1.6h1.6h1.7h1.6h1.6h1.6h1.7h1.6h1.6h1.6h1.6h1.7h1.6h1.6h1.6h1.7h1.6h1.6h1.6h1.6h1.7h1.6h1.6h1.6h1.7h1.6h1.6h1.6h1.6h1.7h1.6h1.6h1.6h1.6h1.7h1.6h1.6h1.6h1.7h1.6h1.6h1.6h1.6h1.7h1.6h1.6h1.6h1.7h1.6h1.6h1.6h1.6h1.7h1.6h1.6h1.6h1.7h1.6h1.6h1.6h1.6h1.7h1.6h1.6h1.6h1.7h1.6h1.6h1.6h1.6h1.7h1.6h1.6h1.6h1.7h1.6h1.6h1.6h1.6h1.7h1.6h1.6h1.6h1.7h1.6h1.6h1.6h1.6h1.7h1.6h1.6h1.6h1.7h1.6h1.6h1.6h1.6h1.7h1.6h1.6h1.6h1.7h1.6h1.6h1.6h1.6h1.7h1.6h1.6h1.6h1.6h1.7h1.6h1.6h1.6h1.7h1.6h1.6h1.6h1.6h1.7h1.6h1.6h1.6h1.7h1.6h1.6h1.6h1.6h1.7h1.6h1.6h1.6h1.7h1.6h1.6h1.6h1.6h1.7h1.6h1.6h1.6h1.7h1.6h1.6h1.6h1.6h1.7h1.6h1.6h1.6h1.7h1.6h1.6h1.6h1.6h1.7h1.6h1.6h1.6h1.7h1.6h1.6h1.6h1.6h1.7h1.6h1.6h1.6h1.7h1.6h1.6h1.6h1.6h1.7h1.6h1.6h1.6l1.7-183.2l1.6 1.5l1.6-1.5l1.6 183.2h1.6h1.7h1.6h1.6h1.6h1.6h1.7h1.6h1.6h1.6h1.7h1.6h1.6h1.6h1.6h1.7h1.6h1.6h1.6h1.7h1.6h1.6h1.6h1.6h1.7h1.6h1.6h1.6h1.7h1.6h1.6h1.6h1.6h1.7h1.6h1.6h1.6h1.7h1.6h1.6h1.6h1.6h1.7h1.6h1.6h1.6h1.7h1.6h1.6h1.6h1.6h1.7h1.6h1.6h1.6h1.7h1.6h1.6h1.6h1.6h1.7h1.6h1.6h1.6h1.7h1.6h1.6h1.6h1.6h1.7h1.6h1.6h1.6h1.7h1.6h1.6h1.6h1.6h1.7h1.6h1.6h1.6h1.7h1.6h1.6h1.6h1.6h1.7h1.6h1.6h1.6h1.6h1.7h1.6h1.6h1.6h1.7h1.6h1.6h1.6h1.6h1.7h1.6h1.6h1.6h1.7h1.6h1.6h1.6h1.6h1.7h1.6h1.6h1.6h1.7h1.6h1.6l1.6-82.2l1.6 1.5l1.7-1.5l1.6 82.2h1.6h1.6h1.7h1.6h1.6h1.6h1.6h1.7h1.6h1.6h1.6h1.7h1.6h1.6h1.6h1.6h1.7h1.6h1.6h1.6h1.7h1.6h1.6h1.6h1.6h1.7h1.6h1.6h1.6h1.7h1.6h1.6h1.6h1.6h1.7h1.6h1.6h1.6h1.7h1.6h1.6h1.6h1.6h1.7h1.6h1.6h1.6h1.6h1.7h1.6h1.6h1.6h1.7h1.6h1.6h1.6h1.6h1.7h1.6h1.6h1.6h1.7h1.6h1.6h1.6h1.6h1.7h1.6h1.6h1.6h1.7h1.6h1.6h1.6h1.6h1.7h1.6h1.6h1.6h1.7h1.6h1.6h1.6h1.6h1.7h1.6h1.6h1.6h1.7h1.6h1.6h1.6h1.6h1.7h1.6h1.6h1.6h1.7h1.6h1.6h1.6h1.6h1.7h1.6h1.6h1.6h1.7h1.6h1.6h1.6h1.6h1.7h1.6h1.6h1.6h1.7h1.6h1.6h1.6h1.6h1.7h1.6h1.6h1.6h1.7h1.6h1.6h1.6h1.6h1.7h1.6h1.6h1.6h1.6h1.7h1.6h1.6h1.6h1.7h1.6h1.6h1.6h1.6h1.7h1.6h1.6h1.6h1.7h1.6h1.6h1.6h1.6h1.7h1.6h1.6h1.6h1.7h1.6h1.6h1.6h1.6h1.7h1.6h1.6h1.6h1.7h1.6h1.6h1.6h1.6h1.7h1.6h1.6h1.6h1.7h1.6h1.6h1.6h1.6h1.7h1.6h1.6h1.6h1.7h1.6h1.6h1.6h1.6h1.7h1.6h1.6h1.6h1.7h1.6h1.6h1.6h1.6h1.7h1.6h1.6h1.6h1.7h1.6h1.6h1.6h1.6h1.7h1.6h1.6h1.6h1.6h1.7h1.6h1.6h1.6h1.7h1.6h1.6h1.6h1.6h1.7h1.6h1.6h1.6h1.7h1.6h1.6h1.6h1.6h1.7h1.6h1.6h1.6h1.7h1.6h1.6h1.6h1.6h1.7h1.6h1.6h1.6h1.7h1.6h1.6H3138V1620.5z"/>
<path class="s" fill="#1F78C1" stroke="#1F78C1" d="M1958.1 1620.5V1506.7h6h1.6h1.6h1.7h1.6h1.6h1.6h1.7h1.6h1.6h1.6h1.6h1.7h1.6h1.6h1.6h1.7h1.6h1.6h1.6h1.6h1.7h1.6h1.6h1.6h1.7h1.6h1.6h1.6h1.6h1.7h1.6h1.6h1.6h1.7h1.6h1.6h1.6h1.6h1.7h1.6h1.6h1.6h1.6h1.7h1.6h1.6h1.6h1.7h1.6h1.6h1.6l1.6-66.2l1.7 1.5l1.6-1.5l1.6 66.2h1.6h1.7h1.6h1.6h1.6h1.6h1.7h1.6h1.6h1.6h1.7h1.6h1.6h1.6h1.6h1.7h1.6h1.6h1.6h1.7h1.6l1.6-270.2l1.6 1.5l1.6-1.5l1.7 270.2h1.6h1.6h1.6h1.7h1.6h1.6h1.6h1.6h1.7h1.6h1.6h1.6h1.7h1.6h1.6h1.6h1.6h1.7h1.6h1.6h1.6h1.7h1.6h1.6h1.6h1.6h1.7h1.6h1.6h1.6h1.7h1.6h1.6h1.6h1.6h1.7h1.6h1.6h1.6h1.7h1.6h1.6h1.6h1.6h1.7h1.6h1.6h1.6h1.6h1.7h1.6h1.6h1.6h1.7h1.6h1.6h1.6h1.6h1.7h1.6h1.6h1.6h1.7h1.6h1.6h1.6h1.6h1.7h1.6h1.6h1.6h1.7h1.6h1.6h1.6h1.6h1.7h1.6h1.6h1.6h1.7h1.6h1.6h1.6h1.6h1.7h1.6h1.6h1.6h1.7h1.6h1.6h1.6h1.6h1.7h1.6h1.6h1.6h1.7h1.6h1.6h1.6h1.6h1.7h1.6h1.6h1.6h1.7h1.6h1.6h1.6h1.6h1.7h1.6l1.6-67.7l1.6 1.5l1.7-1.5l1.6 67.7h1.6h1.6h1.6h1.7h1.6h1.6h1.6h1.6h1.7h1.6h1.6h1.6h1.7h1.6h1.6h1.6h1.6h1.7h1.6h1.6h1.6h1.7h1.6h1.6h1.6h1.6h1.7h1.6h1.6h1.6h1.7h1.6h1.6h1.6h1.6h1.7h1.6l1.6-66.7l1.6 1.5l1.7-1.5l1.6 66.7h1.6h1.6h1.6h1.7h1.6h1.6h1.6h1.7h1.6h1.6h1.6h1.6h1.7h1.6h1.6h1.6h1.7h1.6h1.6h1.6h1.6h1.7h1.6h1.6h1.6h1.7h1.6h1.6h1.6h1.6h1.7h1.6h1.6h1.6h1.7h1.6h1.6h1.6h1.6h1.7h1.6h1.6h1.6h1.6h1.7h1.6h1.6h1.6h1.7h1.6h1.6h1.6h1.6h1.7h1.6h1.6h1.6h1.7h1.6h1.6h1.6h1.6h1.7h1.6h1.6h1.6h1.7h1.6h1.6l1.6-67.7l1.6 1.5l1.7-1.5l1.6 67.7h1.6h1.6h1.7h1.6h1.6h1.6h1.6h1.7h1.6h1.6h1.6h1.7h1.6h1.6h1.6h1.6l1.7-66.7l1.6 1.5l1.6-1.5l1.6 66.7h1.7h1.6h1.6h1.6h1.6h1.7h1.6h1.6h1.6h1.7h1.6h1.6h1.6h1.6h1.7h1.6h1.6h1.6h1.7h1.6h1.6h1.6h1.6l1.7-168.7l1.6 1.5l1.6-1.5l1.6 168.7h1.6h1.7h1.6h1.6h1.6h1.7h1.6h1.6h1.6h1.6h1.7h1.6h1.6h1.6h1.7h1.6h1.6h1.6h1.6h1.7h1.6h1.6h1.6h1.7h1.6h1.6h1.6h1.6h1.7h1.6h1.6h1.6h1.7h1.6h1.6l1.6-62l1.6 1.5l1.7-1.5l1.6 62h1.6h1.6h1.7h1.6h1.6h1.6h1.6h1.7h1.6h1.6h1.6h1.7h1.6h1.6h1.6h1.6h1.7h1.6h1.6h1.6h1.7h1.6h1.6h1.6h1.6h1.7h1.6h1.6h1.6h1.7h1.6h1.6h1.6h1.6h1.7h1.6h1.6h1.6h1.7h1.6h1.6h1.6h1.6h1.7h1.6h1.6h1.6h1.6h1.7h1.6h1.6h1.6h1.7h1.6h1.6h1.6h1.6h1.7h1.6h1.6h1.6h1.7h1.6h1.6h1.6h1.6h1.7h1.6h1.6h1.6h1.7h1.6h1.6h1.6h1.6h1.7h1.6h1.6h1.6h1.7h1.6h1.6h1.6h1.6h1.7h1.6h1.6h1.6h1.7h1.6h1.6h1.6h1.6h1.7h1.6h1.6h1.6h1.7h1.6h1.6h1.6h1.6h1.7h1.6h1.6h1.6h1.7h1.6h1.6h1.6h1.6h1.7h1.6h1.6h1.6h1.7h1.6h1.6h1.6h1.6h1.7h1.6h1.6h1.6h1.6h1.7h1.6h1.6h1.6h1.7h1.6h1.6h1.6h1.6h1.7h1.6h1.6h1.6h1.7h1.6h1.6h1.6h1.6h1.7h1.6h1.6h1.6h1.7h1.6h1.6h1.6h1.6h1.7h1.6h1.6h1.6h1.7h1.6h1.6h1.6h1.6h1.7h1.6h1.6h1.6h1.7h1.6h1.6h1.6h1.6h1.7h1.6h1.6h1.6h1.7h1.6h1.6h1.6h1.6h1.7h1.6h1.6h1.6h1.7h1.6h1.6h1.6h1.6h1.7h1.6h1.6h1.6h1.7h1.6h1.6h1.6h1.6h1.7h1.6h1.6h1.6h1.7h1.6h1.6h1.6h1.6h1.7h1.6h1.6h1.6h1.6h1.7h1.6h1.6h1.6h1.7h1.6h1.6h1.6h1.6h1.7h1.6h1.6h1.6h1.7h1.6h1.6h1.6h1.6h1.7h1.6h1.6h1.6h1.7h1.6h1.6h1.6h1.6h1.7h1.6h1.6h1.6h1.7h1.6h1.6h1.6h1.6h1.7h1.6h1.6h1.6h1.7h1.6h1.6h1.6h1.6h1.7h1.6h1.6h1.6h1.7h1.6h1.6h1.6h1.6h1.7h1.6h1.6h1.6h1.7h1.6h1.6h1.6h1.6h1.7h1.6h1.6h1.6h1.7h1.6h1.6h1.6h1.6h1.7h1.6h1.6h1.6h1.6h1.7h1.6h1.6h1.6h1.7h1.6h1.6h1.6h1.6h1.7h1.6h1.6h1.6h1.7h1.6h1.6h1.6h1.6h1.7h1.6h1.6h1.6h1.7h1.6h1.6h1.6h1.6h1.7h1.6h1.6h1.6h1.7h1.6h1.6H3138V1620.5z"/>
</g>
<text x="1953.5" y="1210.1" text-anchor="end">16 ms</text>
<text x="1953.5" y="1312" text-anchor="end">8 ms</text>
<text x="1953.5" y="1413.9" text-anchor="end">4 ms</text>
<text x="1953.5" y="1515.7" text-anchor="end">2 ms</text>
<text x="1953.5" y="1617.6" text-anchor="end">977 µs</text>
<text x="2069" y="1644.2" text-anchor="middle">14:00</text>
<text x="2263.4" y="1644.2" text-anchor="middle">14:30</text>
<text x="2457.8" y="1644.2" text-anchor="middle">15:00</text>
<text x="2652.2" y="1644.2" text-anchor="middle">15:30</text>
<text x="2846.6" y="1644.2" text-anchor="middle">16:00</text>
<text x="3041" y="1644.2" text-anchor="middle">16:30</text>
<text class="hd" x="3605.6" y="1222.2" text-anchor="end">current</text>
<rect x="3170" y="1234" width="456" height="48" fill="#262628"/>
<rect x="3190.4" y="1257" width="24" height="7" rx="2.5" fill="#7EB26D"/>
<text class="lg" x="3228.4" y="1263.8">172.16.5.33:47912-p95</text>
<text class="lg" x="3605.6" y="1263.8" text-anchor="end">1.9 ms</text>
<rect x="3190.4" y="1305" width="24" height="7" rx="2.5" fill="#EAB839"/>
<text class="lg" x="3228.4" y="1311.8">172.16.5.33:47913-p95</text>
<text class="lg" x="3605.6" y="1311.8" text-anchor="end">1.9 ms</text>
<rect x="3170" y="1330" width="456" height="48" fill="#262628"/>
<rect x="3190.4" y="1353" width="24" height="7" rx="2.5" fill="#6ED0E0"/>
<text class="lg" x="3228.4" y="1359.8">172.16.5.33:47912-p99</text>
<text class="lg" x="3605.6" y="1359.8" text-anchor="end">2.0 ms</text>
<rect x="3190.4" y="1401" width="24" height="7" rx="2.5" fill="#EF843C"/>
<text class="lg" x="3228.4" y="1407.8">172.16.5.33:47913-p99</text>
<text class="lg" x="3605.6" y="1407.8" text-anchor="end">2.0 ms</text>
<rect x="3170" y="1426" width="456" height="48" fill="#262628"/>
<rect x="3190.4" y="1449" width="24" height="7" rx="2.5" fill="#E24D42"/>
<text class="lg" x="3228.4" y="1455.8">172.16.5.33:47912-p999</text>
<text class="lg" x="3605.6" y="1455.8" text-anchor="end">2.0 ms</text>
<rect x="3190.4" y="1497" width="24" height="7" rx="2.5" fill="#1F78C1"/>
<text class="lg" x="3228.4" y="1503.8">172.16.5.33:47913-p999</text>
<text class="lg" x="3605.6" y="1503.8" text-anchor="end">2.0 ms</text>
</g>
</svg>
</body></html>
